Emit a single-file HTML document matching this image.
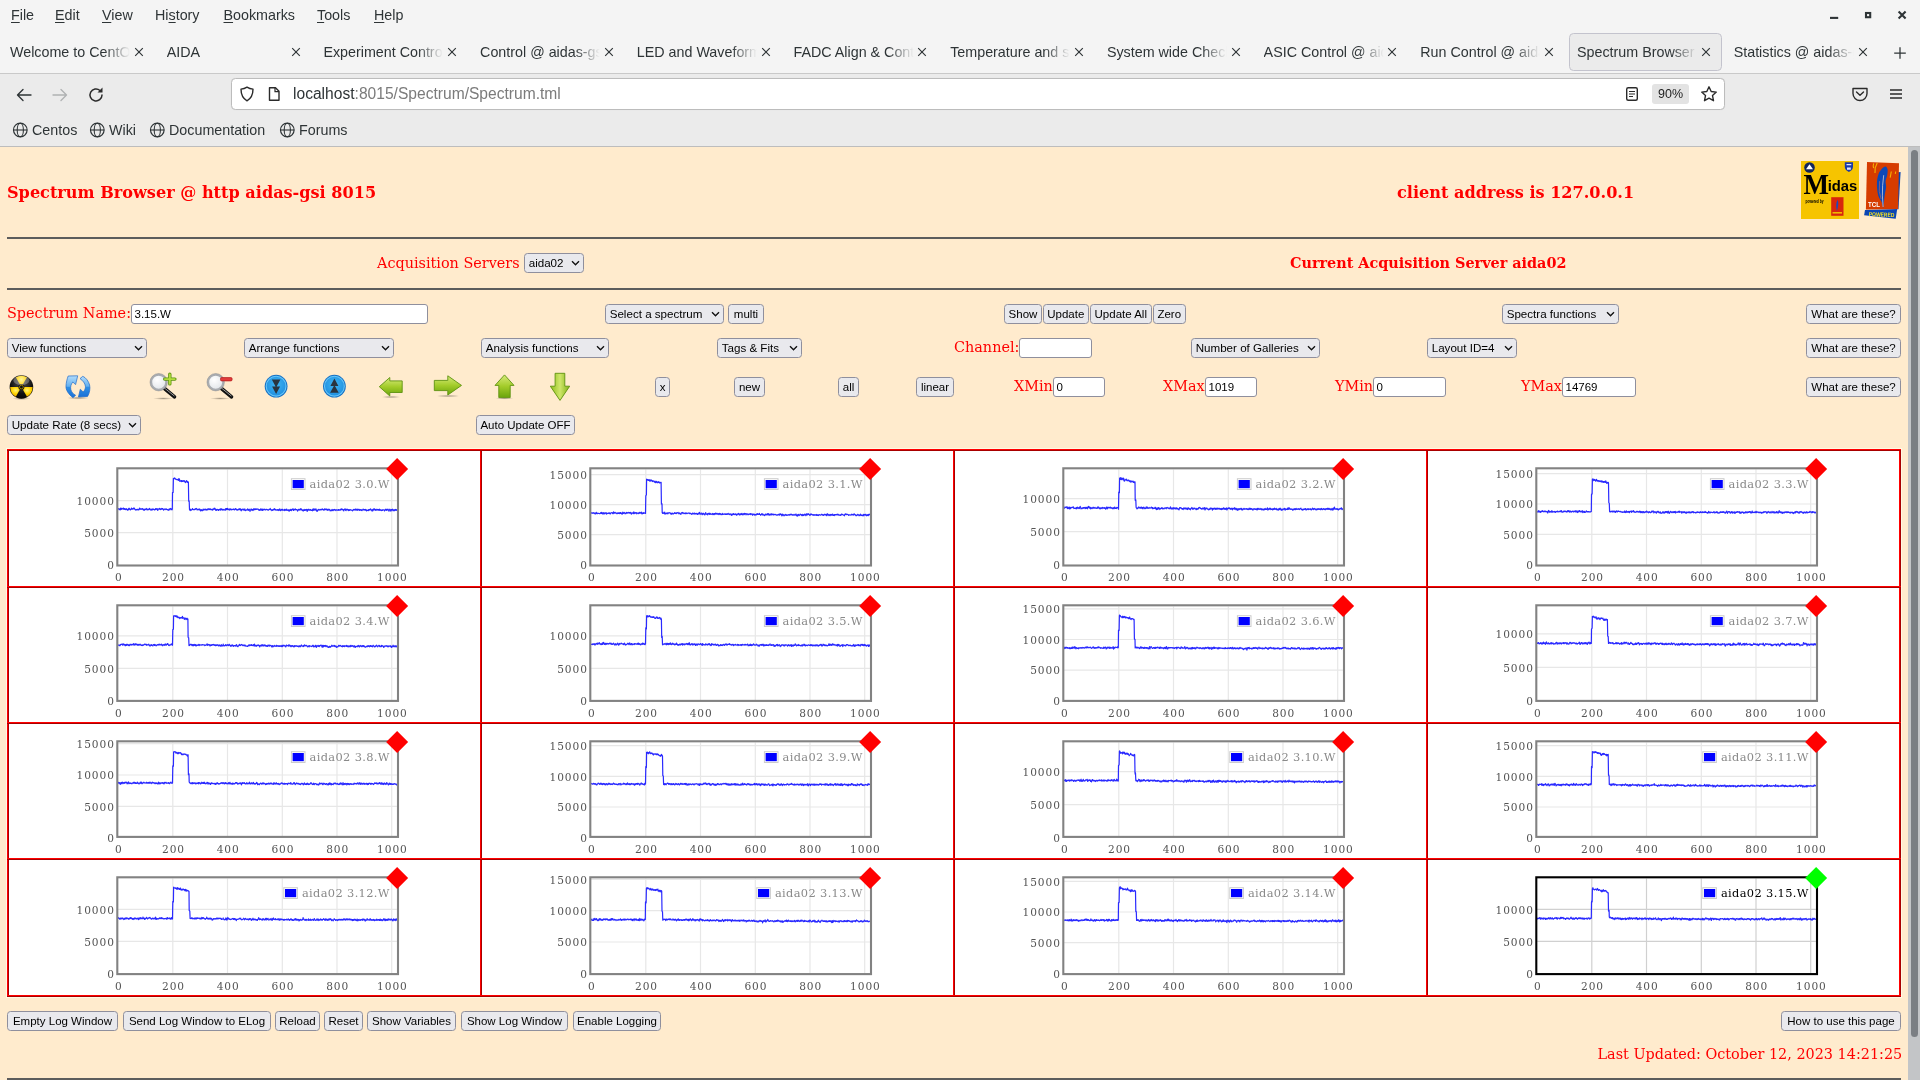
<!DOCTYPE html>
<html lang="en"><head><meta charset="utf-8"><title>Spectrum Browser</title>
<style>
*{box-sizing:border-box;margin:0;padding:0}
html,body{width:1920px;height:1080px;overflow:hidden;background:#ffebcd;font-family:"Liberation Sans", "DejaVu Sans", sans-serif;}
.abs{position:absolute;white-space:nowrap}
#chrome{position:absolute;left:0;top:0;width:1920px;height:147px;background:#f4f4f4;color:#2e3436;font-family:"Liberation Sans", "DejaVu Sans", sans-serif}
#navarea{position:absolute;left:0;top:73px;width:1920px;height:74px;background:#ebebeb;border-top:1px solid #c9c9c9;border-bottom:1px solid #bdbdbd}
.menu{position:absolute;top:6px;font-size:14.3px;line-height:18px;color:#2e3436}
.menu u{text-decoration:underline;text-underline-offset:2px}
.tab{position:absolute;top:34px;height:36px;width:152px;font-size:14.3px;line-height:36px;color:#2e3436;overflow:hidden}
.tab .t{position:absolute;left:8px;top:0;width:121px;overflow:hidden;white-space:nowrap;-webkit-mask-image:linear-gradient(to right,#000 78%,transparent 99%);mask-image:linear-gradient(to right,#000 78%,transparent 99%)}
.tab .x{position:absolute;left:130px;top:12px;width:12px;height:12px}
.tab.active{background:#ebebeb;border:1px solid #c3c3cd;border-radius:4.5px;top:33px;height:37.5px;width:153px;margin-left:-0.5px}
.tab.active .t{left:7.5px;top:0;line-height:36px}
.bm{position:absolute;top:121px;font-size:14.3px;line-height:18px;color:#2e3436}
.r{color:#ff0000;font-family:"DejaVu Serif", "Liberation Serif", serif;font-size:14.4px;line-height:18px}
.rb{color:#ff0000;font-family:"DejaVu Serif", "Liberation Serif", serif;font-size:14.4px;line-height:18px;font-weight:bold}
.btn{position:absolute;height:20px;background:#e9e9ed;border:1px solid #8f8f9d;border-radius:3.5px;font-family:"Liberation Sans", "DejaVu Sans", sans-serif;font-size:11.5px;line-height:18px;color:#000;text-align:center;white-space:nowrap;overflow:hidden}
.sel{position:absolute;height:20px;background:#e9e9ed;border:1px solid #8f8f9d;border-radius:3.5px;font-family:"Liberation Sans", "DejaVu Sans", sans-serif;font-size:11.6px;line-height:18px;color:#000;white-space:nowrap;padding-left:3.7px;overflow:hidden}
.sel svg{position:absolute;right:3.4px;top:6px}
.inp{position:absolute;height:20px;background:#fff;border:1px solid #8f8f9d;border-radius:3px;font-family:"Liberation Sans", "DejaVu Sans", sans-serif;font-size:11.5px;line-height:18px;color:#000;white-space:nowrap;padding-left:2.5px;overflow:hidden}
.hr{position:absolute;left:7px;width:1894px;height:2px;background:#5c5c5c}
.tick{font-family:"DejaVu Serif", "Liberation Serif", serif;font-size:12px;fill:#545454}
</style></head><body>
<div id="root" style="position:absolute;left:0;top:0;width:1920px;height:1080px;will-change:transform">

<div id="chrome">
<div class="menu" style="left:11px"><u>F</u>ile</div>
<div class="menu" style="left:55px"><u>E</u>dit</div>
<div class="menu" style="left:102px"><u>V</u>iew</div>
<div class="menu" style="left:155px">Hi<u>s</u>tory</div>
<div class="menu" style="left:223.5px"><u>B</u>ookmarks</div>
<div class="menu" style="left:317px"><u>T</u>ools</div>
<div class="menu" style="left:374px"><u>H</u>elp</div>
<svg class="abs" style="left:1820px;top:0" width="100" height="30" viewBox="1820 0 100 30"><path d="M1830 17.9h8.200" stroke="#2e3436" stroke-width="2.100" fill="none"/><rect x="1866" y="13" width="4.200" height="4.200" stroke="#2e3436" stroke-width="2.100" fill="none"/><path d="M1898.600 11.600l7 7M1905.600 11.600l-7 7" stroke="#2e3436" stroke-width="2.100" fill="none"/></svg>
<div class="tab" style="left:2.0px"><div class="t">Welcome to CentOS</div></div>
<svg class="abs" style="left:132.8px;top:46px" width="12" height="12" viewBox="0 0 12 12"><path d="M2.200 2.200l7.600 7.600M9.800 2.200l-7.600 7.600" stroke="#2e3436" stroke-width="1.150" fill="none"/></svg>
<div class="tab" style="left:158.7px"><div class="t">AIDA</div></div>
<svg class="abs" style="left:289.5px;top:46px" width="12" height="12" viewBox="0 0 12 12"><path d="M2.200 2.200l7.600 7.600M9.800 2.200l-7.600 7.600" stroke="#2e3436" stroke-width="1.150" fill="none"/></svg>
<div class="tab" style="left:315.4px"><div class="t">Experiment Control @</div></div>
<svg class="abs" style="left:446.2px;top:46px" width="12" height="12" viewBox="0 0 12 12"><path d="M2.200 2.200l7.600 7.600M9.800 2.200l-7.600 7.600" stroke="#2e3436" stroke-width="1.150" fill="none"/></svg>
<div class="tab" style="left:472.1px"><div class="t">Control @ aidas-gsi</div></div>
<svg class="abs" style="left:602.9px;top:46px" width="12" height="12" viewBox="0 0 12 12"><path d="M2.200 2.200l7.600 7.600M9.800 2.200l-7.600 7.600" stroke="#2e3436" stroke-width="1.150" fill="none"/></svg>
<div class="tab" style="left:628.8px"><div class="t">LED and Waveform @</div></div>
<svg class="abs" style="left:759.6px;top:46px" width="12" height="12" viewBox="0 0 12 12"><path d="M2.200 2.200l7.600 7.600M9.800 2.200l-7.600 7.600" stroke="#2e3436" stroke-width="1.150" fill="none"/></svg>
<div class="tab" style="left:785.5px"><div class="t">FADC Align &amp; Control</div></div>
<svg class="abs" style="left:916.3px;top:46px" width="12" height="12" viewBox="0 0 12 12"><path d="M2.200 2.200l7.600 7.600M9.800 2.200l-7.600 7.600" stroke="#2e3436" stroke-width="1.150" fill="none"/></svg>
<div class="tab" style="left:942.2px"><div class="t">Temperature and status</div></div>
<svg class="abs" style="left:1073.0px;top:46px" width="12" height="12" viewBox="0 0 12 12"><path d="M2.200 2.200l7.600 7.600M9.800 2.200l-7.600 7.600" stroke="#2e3436" stroke-width="1.150" fill="none"/></svg>
<div class="tab" style="left:1098.9px"><div class="t">System wide Checks</div></div>
<svg class="abs" style="left:1229.7px;top:46px" width="12" height="12" viewBox="0 0 12 12"><path d="M2.200 2.200l7.600 7.600M9.800 2.200l-7.600 7.600" stroke="#2e3436" stroke-width="1.150" fill="none"/></svg>
<div class="tab" style="left:1255.6px"><div class="t">ASIC Control @ aidas</div></div>
<svg class="abs" style="left:1386.4px;top:46px" width="12" height="12" viewBox="0 0 12 12"><path d="M2.200 2.200l7.600 7.600M9.800 2.200l-7.600 7.600" stroke="#2e3436" stroke-width="1.150" fill="none"/></svg>
<div class="tab" style="left:1412.3px"><div class="t">Run Control @ aidas-</div></div>
<svg class="abs" style="left:1543.1px;top:46px" width="12" height="12" viewBox="0 0 12 12"><path d="M2.200 2.200l7.600 7.600M9.800 2.200l-7.600 7.600" stroke="#2e3436" stroke-width="1.150" fill="none"/></svg>
<div class="tab active" style="left:1569.0px"><div class="t">Spectrum Browser @</div></div>
<svg class="abs" style="left:1699.8px;top:46px" width="12" height="12" viewBox="0 0 12 12"><path d="M2.200 2.200l7.600 7.600M9.800 2.200l-7.600 7.600" stroke="#2e3436" stroke-width="1.150" fill="none"/></svg>
<div class="tab" style="left:1725.7px"><div class="t">Statistics @ aidas-gsi</div></div>
<svg class="abs" style="left:1856.5px;top:46px" width="12" height="12" viewBox="0 0 12 12"><path d="M2.200 2.200l7.600 7.600M9.800 2.200l-7.600 7.600" stroke="#2e3436" stroke-width="1.150" fill="none"/></svg>
<svg class="abs" style="left:1890.600px;top:44px" width="18" height="18" viewBox="0 0 18 18"><path d="M9 3.200v11.600M3.200 9h11.600" stroke="#2e3436" stroke-width="1.250" fill="none"/></svg>
<div id="navarea"></div>
<svg class="abs" style="left:14px;top:84.800px" width="20" height="20" viewBox="0 0 20 20"><path d="M17 10H3.800M9 4.500l-5.500 5.500 5.500 5.500" stroke="#2e3436" stroke-width="1.350" fill="none" stroke-linecap="round" stroke-linejoin="round"/></svg>
<svg class="abs" style="left:50px;top:84.800px" width="20" height="20" viewBox="0 0 20 20"><path d="M3 10h13.200M11 4.500l5.500 5.500-5.500 5.500" stroke="#b0b2b3" stroke-width="1.350" fill="none" stroke-linecap="round" stroke-linejoin="round"/></svg>
<svg class="abs" style="left:86px;top:84.800px" width="20" height="20" viewBox="0 0 20 20"><path d="M16 10a6 6 0 1 1-2-4.5" stroke="#2b2b2b" stroke-width="1.5" fill="none" stroke-linecap="round"/><path d="M16.5 2.5v5h-5z" fill="#2b2b2b"/></svg>
<div class="abs" style="left:231px;top:78px;width:1494px;height:32px;background:#fff;border:1px solid #bcbcbc;border-radius:4.5px;box-shadow:0 0 1px rgba(0,0,0,.1)"></div>
<svg class="abs" style="left:239px;top:86px" width="16" height="16" viewBox="0 0 16 16"><path d="M8 1.2c1.8 1.2 3.8 1.8 6 1.9 0 5.5-1.7 9.4-6 11.7C3.700 12.500 2 8.600 2 3.100 4.200 3 6.200 2.400 8 1.200z" stroke="#2b2b2b" stroke-width="1.4" fill="none" stroke-linejoin="round"/></svg>
<svg class="abs" style="left:266px;top:86px" width="16" height="16" viewBox="0 0 16 16"><path d="M3.500 1.700h6l3.500 3.500v9.100h-9.500z" stroke="#2b2b2b" stroke-width="1.4" fill="none" stroke-linejoin="round"/><path d="M9 1.700v4h4" stroke="#2b2b2b" stroke-width="1.2" fill="none"/></svg>
<div class="abs" style="left:293px;top:83.5px;font-size:15.6px;line-height:20px;color:#2e3436">localhost<span style="color:#7b7b7b">:8015/Spectrum/Spectrum.tml</span></div>
<svg class="abs" style="left:1624px;top:86px" width="16" height="16" viewBox="0 0 16 16"><rect x="2.700" y="1.700" width="10.600" height="12.600" rx="1.500" stroke="#2b2b2b" stroke-width="1.400" fill="none"/><path d="M5 5.500h6M5 8h6M5 10.500h4" stroke="#2b2b2b" stroke-width="1.200"/></svg>
<div class="abs" style="left:1652px;top:84px;width:37px;height:20px;background:#e3e3e3;border-radius:3px;font-size:12.5px;line-height:20px;text-align:center;color:#1d1d1d">90%</div>
<svg class="abs" style="left:1700px;top:85px" width="18" height="18" viewBox="0 0 18 18"><path d="M9 1.800l2.200 4.700 5.100.6-3.800 3.500 1 5.100L9 13.200l-4.500 2.500 1-5.100L1.700 7.100l5.100-.6z" stroke="#2b2b2b" stroke-width="1.400" fill="none" stroke-linejoin="round"/></svg>
<svg class="abs" style="left:1851px;top:85px" width="18" height="18" viewBox="0 0 18 18"><path d="M2 3.500h14v5a7 7 0 0 1-14 0z" stroke="#2b2b2b" stroke-width="1.400" fill="none" stroke-linejoin="round"/><path d="M5.500 7l3.500 3.300L12.500 7" stroke="#2b2b2b" stroke-width="1.400" fill="none" stroke-linecap="round" stroke-linejoin="round"/></svg>
<svg class="abs" style="left:1887px;top:85px" width="18" height="18" viewBox="0 0 18 18"><path d="M3 5h12M3 9h12M3 13h12" stroke="#2b2b2b" stroke-width="1.500"/></svg>
<svg class="abs" style="left:12px;top:122px" width="16" height="16" viewBox="0 0 16 16"><circle cx="8.300" cy="8" r="6.800" stroke="#2e3436" stroke-width="1.200" fill="none"/><ellipse cx="8.300" cy="8" rx="3.100" ry="6.800" stroke="#2e3436" stroke-width="1.100" fill="none"/><path d="M1.500 8h13.600" stroke="#2e3436" stroke-width="1.100"/></svg>
<div class="bm" style="left:32px">Centos</div>
<svg class="abs" style="left:89px;top:122px" width="16" height="16" viewBox="0 0 16 16"><circle cx="8.300" cy="8" r="6.800" stroke="#2e3436" stroke-width="1.200" fill="none"/><ellipse cx="8.300" cy="8" rx="3.100" ry="6.800" stroke="#2e3436" stroke-width="1.100" fill="none"/><path d="M1.500 8h13.600" stroke="#2e3436" stroke-width="1.100"/></svg>
<div class="bm" style="left:109px">Wiki</div>
<svg class="abs" style="left:149px;top:122px" width="16" height="16" viewBox="0 0 16 16"><circle cx="8.300" cy="8" r="6.800" stroke="#2e3436" stroke-width="1.200" fill="none"/><ellipse cx="8.300" cy="8" rx="3.100" ry="6.800" stroke="#2e3436" stroke-width="1.100" fill="none"/><path d="M1.500 8h13.600" stroke="#2e3436" stroke-width="1.100"/></svg>
<div class="bm" style="left:169px">Documentation</div>
<svg class="abs" style="left:279px;top:122px" width="16" height="16" viewBox="0 0 16 16"><circle cx="8.300" cy="8" r="6.800" stroke="#2e3436" stroke-width="1.200" fill="none"/><ellipse cx="8.300" cy="8" rx="3.100" ry="6.800" stroke="#2e3436" stroke-width="1.100" fill="none"/><path d="M1.500 8h13.600" stroke="#2e3436" stroke-width="1.100"/></svg>
<div class="bm" style="left:299px">Forums</div>
</div>
<div class="abs" style="left:1908px;top:147px;width:12px;height:933px;background:#c3c5c7"></div>
<div class="abs" style="left:1911px;top:150px;width:7px;height:887px;background:#7b7f83;border-radius:4px"></div>
<div class="abs rb" style="left:7px;top:182px;font-size:16.1px;line-height:22px">Spectrum Browser @ http aidas-gsi 8015</div>
<div class="abs rb" style="left:1397px;top:182px;font-size:16.1px;line-height:22px">client address is 127.0.0.1</div>
<div class="hr" style="top:237px"></div>
<div class="abs r" style="left:377px;top:252.500px;font-size:14.4px;line-height:20px">Acquisition Servers</div>
<div class="abs rb" style="left:1290px;top:254px;">Current Acquisition Server aida02</div>
<div class="hr" style="top:288px"></div>
<div class="sel" style="left:524px;top:253px;width:60px">aida02<svg width="9" height="7" viewBox="0 0 9 7"><path d="M1 1.200l3.500 3.600L8 1.200" stroke="#111" stroke-width="1.350" fill="none"/></svg></div>
<div class="abs r" style="left:7px;top:303px;font-size:14.4px;line-height:20px">Spectrum Name:</div>
<div class="inp" style="left:131px;top:304px;width:297px">3.15.W</div>
<div class="sel" style="left:605px;top:304px;width:119px">Select a spectrum<svg width="9" height="7" viewBox="0 0 9 7"><path d="M1 1.200l3.500 3.600L8 1.200" stroke="#111" stroke-width="1.350" fill="none"/></svg></div>
<div class="btn" style="left:728px;top:304px;width:36px">multi</div>
<div class="btn" style="left:1004px;top:304px;width:38px">Show</div>
<div class="btn" style="left:1042.5px;top:304px;width:46.5px">Update</div>
<div class="btn" style="left:1089.5px;top:304px;width:62.5px">Update All</div>
<div class="btn" style="left:1152.5px;top:304px;width:33.5px">Zero</div>
<div class="sel" style="left:1502px;top:304px;width:117px">Spectra functions<svg width="9" height="7" viewBox="0 0 9 7"><path d="M1 1.200l3.500 3.600L8 1.200" stroke="#111" stroke-width="1.350" fill="none"/></svg></div>
<div class="btn" style="left:1806px;top:304px;width:95px">What are these?</div>
<div class="sel" style="left:7px;top:338px;width:140px">View functions<svg width="9" height="7" viewBox="0 0 9 7"><path d="M1 1.200l3.500 3.600L8 1.200" stroke="#111" stroke-width="1.350" fill="none"/></svg></div>
<div class="sel" style="left:244px;top:338px;width:150px">Arrange functions<svg width="9" height="7" viewBox="0 0 9 7"><path d="M1 1.200l3.500 3.600L8 1.200" stroke="#111" stroke-width="1.350" fill="none"/></svg></div>
<div class="sel" style="left:481px;top:338px;width:128px">Analysis functions<svg width="9" height="7" viewBox="0 0 9 7"><path d="M1 1.200l3.500 3.600L8 1.200" stroke="#111" stroke-width="1.350" fill="none"/></svg></div>
<div class="sel" style="left:717px;top:338px;width:85px">Tags &amp; Fits<svg width="9" height="7" viewBox="0 0 9 7"><path d="M1 1.200l3.500 3.600L8 1.200" stroke="#111" stroke-width="1.350" fill="none"/></svg></div>
<div class="abs r" style="left:954px;top:337px;font-size:14.4px;line-height:20px">Channel:</div>
<div class="inp" style="left:1019px;top:338px;width:73px"></div>
<div class="sel" style="left:1191px;top:338px;width:129px">Number of Galleries<svg width="9" height="7" viewBox="0 0 9 7"><path d="M1 1.200l3.500 3.600L8 1.200" stroke="#111" stroke-width="1.350" fill="none"/></svg></div>
<div class="sel" style="left:1427px;top:338px;width:90px">Layout ID=4<svg width="9" height="7" viewBox="0 0 9 7"><path d="M1 1.200l3.500 3.600L8 1.200" stroke="#111" stroke-width="1.350" fill="none"/></svg></div>
<div class="btn" style="left:1806px;top:338px;width:95px">What are these?</div>
<div class="btn" style="left:655px;top:377px;width:15px">x</div>
<div class="btn" style="left:734px;top:377px;width:31px">new</div>
<div class="btn" style="left:838px;top:377px;width:21px">all</div>
<div class="btn" style="left:916px;top:377px;width:38px">linear</div>
<div class="abs r" style="left:1014px;top:376px;font-size:14.4px;line-height:20px">XMin</div>
<div class="inp" style="left:1053px;top:377px;width:52px">0</div>
<div class="abs r" style="left:1163px;top:376px;font-size:14.4px;line-height:20px">XMax</div>
<div class="inp" style="left:1205px;top:377px;width:52px">1019</div>
<div class="abs r" style="left:1335px;top:376px;font-size:14.4px;line-height:20px">YMin</div>
<div class="inp" style="left:1373px;top:377px;width:73px">0</div>
<div class="abs r" style="left:1521px;top:376px;font-size:14.4px;line-height:20px">YMax</div>
<div class="inp" style="left:1562px;top:377px;width:74px">14769</div>
<div class="btn" style="left:1806px;top:377px;width:95px">What are these?</div>
<div class="sel" style="left:7px;top:415px;width:134px">Update Rate (8 secs)<svg width="9" height="7" viewBox="0 0 9 7"><path d="M1 1.200l3.500 3.600L8 1.200" stroke="#111" stroke-width="1.350" fill="none"/></svg></div>
<div class="btn" style="left:476px;top:415px;width:99px">Auto Update OFF</div>
<svg class="abs" style="left:0;top:365px" width="600" height="45" viewBox="0 365 600 45">
<defs>
<radialGradient id="gy" cx="0.5" cy="0.35" r="0.7"><stop offset="0" stop-color="#fff27a"/><stop offset="0.5" stop-color="#ffd400"/><stop offset="1" stop-color="#e09a00"/></radialGradient>
<radialGradient id="gk" cx="0.5" cy="0.3" r="0.8"><stop offset="0" stop-color="#555"/><stop offset="0.6" stop-color="#111"/><stop offset="1" stop-color="#000"/></radialGradient>
<linearGradient id="gb" x1="0" y1="0" x2="0" y2="1"><stop offset="0" stop-color="#b4dcfa"/><stop offset="0.48" stop-color="#62b0f0"/><stop offset="0.52" stop-color="#2e90e6"/><stop offset="1" stop-color="#1a70d6"/></linearGradient>
<radialGradient id="gc" cx="0.5" cy="0.4" r="0.6"><stop offset="0" stop-color="#3fb4f2"/><stop offset="1" stop-color="#1f8fe0"/></radialGradient>
<linearGradient id="gg" x1="0" y1="0" x2="0" y2="1"><stop offset="0" stop-color="#d6ea7a"/><stop offset="0.5" stop-color="#a3cc2a"/><stop offset="1" stop-color="#6aa40c"/></linearGradient>
<linearGradient id="gh" x1="0" y1="0" x2="1" y2="0"><stop offset="0" stop-color="#8cbc18"/><stop offset="0.5" stop-color="#cfe66a"/><stop offset="1" stop-color="#7fb012"/></linearGradient>
<radialGradient id="gl" cx="0.4" cy="0.35" r="0.7"><stop offset="0" stop-color="#ffffff"/><stop offset="1" stop-color="#e0e4e8"/></radialGradient>
<radialGradient id="sh" cx="0.5" cy="0.5" r="0.5"><stop offset="0" stop-color="#000" stop-opacity="0.35"/><stop offset="1" stop-color="#000" stop-opacity="0"/></radialGradient>
</defs>
<ellipse cx="21.4" cy="398.5" rx="9" ry="1.6" fill="url(#sh)"/>
<circle cx="21.4" cy="387" r="11.8" fill="url(#gk)"/>
<path d="M21.4 387L15.80 377.30A11.200000000000001 11.200000000000001 0 0 1 27.00 377.30z" fill="url(#gy)"/>
<path d="M21.4 387L32.60 387.00A11.200000000000001 11.200000000000001 0 0 1 27.00 396.70z" fill="url(#gy)"/>
<path d="M21.4 387L15.80 396.70A11.200000000000001 11.200000000000001 0 0 1 10.20 387.00z" fill="url(#gy)"/>
<circle cx="21.4" cy="387" r="3" fill="#111"/><circle cx="21.4" cy="387" r="1.9" fill="none" stroke="#ffd400" stroke-width="0.5"/>
<ellipse cx="21.4" cy="380.5" rx="8" ry="4.5" fill="#fff" opacity="0.28"/>
<ellipse cx="78" cy="398" rx="11" ry="1.6" fill="url(#sh)"/>
<path d="M73.100 397.700C68.500 394.500 65.600 389.600 66 386C66.200 382.600 67 379 68.200 376L77.700 375.800L75.600 384.600L72.800 382C70.800 384.400 70.300 387 70.800 389.400C71.400 392 73 393.800 75.600 395.200Z" fill="url(#gb)" stroke="#1f6ac8" stroke-width="0.7" stroke-linejoin="round"/>
<path d="M82.800 376.300C86 377.600 88.600 381.400 89.600 385C90.400 388.600 89.600 393 87.600 396.400L78.400 397L80.300 389.200L83.200 392C85 390 85.600 388.200 85.400 386.200C85 383.400 83 380.600 80 378.600Z" fill="url(#gb)" stroke="#1f6ac8" stroke-width="0.7" stroke-linejoin="round"/>
<ellipse cx="163.3" cy="398.500" rx="10" ry="1.3" fill="url(#sh)"/>
<path d="M163.9 388.0L174.5 396.8" stroke="#111" stroke-width="3.6" stroke-linecap="round"/>
<path d="M164.9 388.4L174.10000000000002 395.8" stroke="#aaa" stroke-width="0.9" stroke-linecap="round"/>
<circle cx="158.70000000000002" cy="382.2" r="7.6" fill="url(#gl)" stroke="#a9acb0" stroke-width="2.2"/>
<circle cx="158.70000000000002" cy="382.2" r="8.7" fill="none" stroke="#8a8d90" stroke-width="0.5"/>
<path d="M169.8 374.300v9.600M164.70000000000002 379.100h10.200" stroke="#5c9410" stroke-width="3.4" stroke-linecap="round"/>
<path d="M169.8 374.500v9.200M164.9 379.100h9.800" stroke="#b4dc3c" stroke-width="1.9" stroke-linecap="round"/>
<ellipse cx="220.3" cy="398.500" rx="10" ry="1.3" fill="url(#sh)"/>
<path d="M220.9 388.0L231.5 396.8" stroke="#111" stroke-width="3.6" stroke-linecap="round"/>
<path d="M221.9 388.4L231.10000000000002 395.8" stroke="#aaa" stroke-width="0.9" stroke-linecap="round"/>
<circle cx="215.70000000000002" cy="382.2" r="7.6" fill="url(#gl)" stroke="#a9acb0" stroke-width="2.2"/>
<circle cx="215.70000000000002" cy="382.2" r="8.7" fill="none" stroke="#8a8d90" stroke-width="0.5"/>
<rect x="220.5" y="377.600" width="11.600" height="3.300" rx="1.2" fill="#e23c3c" stroke="#b01818" stroke-width="0.7"/>
<circle cx="276.1" cy="386.2" r="11.4" fill="#1872c4"/>
<circle cx="276.1" cy="386.2" r="9.9" fill="url(#gc)" stroke="#66c6fa" stroke-width="1.1"/>
<path d="M276.1 394.0l4 -7.600h-8zM276.1 387.4l4.300 -7.800h-8.600z" fill="#2a3440"/>
<circle cx="334.4" cy="386.2" r="11.4" fill="#1872c4"/>
<circle cx="334.4" cy="386.2" r="9.9" fill="url(#gc)" stroke="#66c6fa" stroke-width="1.1"/>
<path d="M334.4 378.4l4 7.6h-8zM334.4 385.0l4.300 7.800h-8.600z" fill="#2a3440"/>
<ellipse cx="391" cy="397" rx="10" ry="1.2" fill="url(#sh)"/>
<path d="M379.300 386.700L389.800 377.500V380.900H402.200V392.500H389.800V396z" fill="url(#gg)" stroke="#5e9210" stroke-width="0.9" stroke-linejoin="round"/>
<ellipse cx="448" cy="396" rx="12" ry="1.3" fill="url(#sh)"/>
<path d="M461.500 385.400L447.800 375.800V380.400H434.300V390.600H447.800V395z" fill="url(#gg)" stroke="#5e9210" stroke-width="0.9" stroke-linejoin="round"/>
<ellipse cx="504.500" cy="398.300" rx="9" ry="1.3" fill="url(#sh)"/>
<path d="M504.500 374.900L514 385.400H510.200V397.600H498.800V385.400H495z" fill="url(#gg)" stroke="#5e9210" stroke-width="0.9" stroke-linejoin="round"/>
<path d="M560 400.400L550.300 386.200H555.100V373.300H564.800V386.200H569.700z" fill="url(#gh)" stroke="#5e9210" stroke-width="0.9" stroke-linejoin="round"/>
</svg>
<svg class="abs" style="left:1795px;top:155px" width="112" height="70" viewBox="1795 155 112 70">
<rect x="1801" y="161" width="58" height="58" fill="#f6c400"/>
<circle cx="1809.500" cy="167.500" r="5.300" fill="#12265e"/><path d="M1809.500 164.300l3.500 4.900h-7z" fill="#fff"/>
<path d="M1844.800 162.300h8.200v4.500c0 2.600-1.800 4.300-4.100 5.100-2.300-.8-4.100-2.500-4.100-5.100z" fill="#1a3aa8"/><path d="M1846.500 164h4.800v1.300h-4.800zM1847 167.500h3.800v2.200h-3.800z" fill="#dfe6ff"/>
<text x="1803.500" y="193.900" style="font-family:'Liberation Serif','DejaVu Serif',serif;font-weight:bold;font-size:30px" fill="#000" textLength="25.500" lengthAdjust="spacingAndGlyphs">M</text>
<text x="1827.700" y="190.700" style="font-family:'Liberation Sans','DejaVu Sans',sans-serif;font-weight:bold;font-size:15px" fill="#000" textLength="29.600" lengthAdjust="spacingAndGlyphs">idas</text>
<text x="1805.500" y="203" style="font-family:'Liberation Sans','DejaVu Sans',sans-serif;font-weight:bold;font-size:4.500px" fill="#000" textLength="18" lengthAdjust="spacingAndGlyphs">powered by</text>
<rect x="1831.200" y="197.200" width="12.300" height="18.600" fill="#d8260c"/><path d="M1837.500 200c1.200 2 .8 6.500-.6 11-.8-3.500-1.200-8 .6-11z" fill="#1a4ac0"/><path d="M1832.500 212.800h9.500" stroke="#f2c200" stroke-width="1.500"/>
<path d="M1897.8 172.2 L1900.6 171.9 L1898.5 209.3 L1896.3 209.3z" fill="#0a46b4"/>
<path d="M1865.0 209.9 L1897.2 209.1 L1895.7 218.7 L1864.1 215.3z" fill="#0a46b4"/>
<path d="M1867.0 162.1 L1899.0 163.2 L1898.1 209.0 L1865.9 209.6z" fill="#d63c00"/>
<path d="M1885.6 166.4C1886.5 166.6 1887.3 168.0 1887.6 169.4C1887.8 170.9 1887.5 173.2 1887.2 175.2C1886.9 177.1 1885.7 179.1 1885.6 181.1C1885.4 183.1 1886.2 184.8 1886.1 187.0C1886.0 189.3 1885.2 191.7 1884.8 194.4C1884.4 197.2 1884.0 201.1 1883.7 203.3C1883.4 205.5 1883.5 207.9 1883.2 207.6C1882.8 207.4 1882.5 203.9 1881.6 201.9C1880.8 199.8 1878.9 198.1 1878.1 195.2C1877.4 192.2 1876.9 187.5 1876.9 184.1C1876.9 180.6 1877.5 177.0 1878.4 174.4C1879.2 171.9 1880.9 169.9 1882.1 168.5C1883.3 167.2 1884.6 166.3 1885.6 166.4z" fill="#0c48b8"/>
<path d="M1883.7 175.2 L1882.6 185.6 L1882.4 195.9 L1883.1 207.0" stroke="#e8e0d8" stroke-width="0.7" fill="none"/>
<path d="M1879.6 181.1 L1879.3 191.5 L1881.1 198.9" stroke="#c86a50" stroke-width="0.6" fill="none"/>
<path d="M1873.7 163.3 L1873.2 165.9 L1873.6 168.1M1877.2 163.0L1875.2 167.8L1875.0 173.1M1891.3 171.5L1890.2 177.6M1895.7 171.5L1895.3 173.9" stroke="#f6b000" stroke-width="1.1" fill="none"/>
<text x="1868" y="207" style="font-family:'Liberation Sans','DejaVu Sans',sans-serif;font-weight:bold;font-size:6.500px" fill="#fff" textLength="12" lengthAdjust="spacingAndGlyphs">TCL</text>
<text x="1868.800" y="216.200" transform="rotate(2 1868.800 216.200)" style="font-family:'Liberation Sans','DejaVu Sans',sans-serif;font-weight:bold;font-size:6px" fill="#f6e020" textLength="25.500" lengthAdjust="spacingAndGlyphs">POWERED</text>
</svg>
<div class="abs" style="left:7px;top:449px;width:1894px;height:548px;background:#fff"></div>
<div class="abs" style="left:6px;top:448px;width:1896px;height:550px;border:1px solid rgba(255,255,240,.7)"></div>
<svg class="abs" style="left:0;top:440px" width="1920" height="570" viewBox="0 440 1920 570">
<g>
<path d="M172.8 469.6V564.7" stroke="#e7e7e7" stroke-width="1.2"/>
<path d="M227.5 469.6V564.7" stroke="#e7e7e7" stroke-width="1.2"/>
<path d="M282.3 469.6V564.7" stroke="#e7e7e7" stroke-width="1.2"/>
<path d="M337.0 469.6V564.7" stroke="#e7e7e7" stroke-width="1.2"/>
<path d="M391.7 469.6V564.7" stroke="#e7e7e7" stroke-width="1.2"/>
<path d="M118.1 532.7H396.9" stroke="#e7e7e7" stroke-width="1.2"/>
<path d="M118.1 500.7H396.9" stroke="#e7e7e7" stroke-width="1.2"/>
<polyline points="118.1,509.1 118.4,508.7 118.6,509.0 118.9,509.0 119.2,509.7 119.5,509.2 119.7,509.0 120.0,508.7 120.3,509.8 120.6,508.6 120.8,508.0 121.1,508.2 121.4,509.4 121.7,509.1 121.9,508.8 122.2,508.5 122.5,508.9 122.8,508.8 123.0,508.7 123.3,509.0 123.6,508.0 123.8,509.1 124.1,509.2 124.4,509.3 124.7,508.5 124.9,509.4 125.2,509.3 125.5,509.6 125.8,509.0 126.0,508.9 126.3,508.7 126.6,509.5 126.9,509.4 127.1,509.7 127.4,510.2 127.7,509.7 127.9,509.1 128.2,510.0 128.5,509.4 128.8,508.4 129.0,508.8 129.3,508.3 129.6,509.3 129.9,509.4 130.1,509.8 130.4,509.8 130.7,509.4 131.0,509.4 131.2,508.7 131.5,508.0 131.8,508.7 132.1,509.3 132.3,509.2 132.6,508.7 132.9,508.9 133.1,508.8 133.4,508.5 133.7,508.8 134.0,507.8 134.2,508.1 134.5,508.2 134.8,509.3 135.1,509.3 135.3,509.7 135.6,509.8 135.9,510.2 136.2,509.8 136.4,509.5 136.7,509.7 137.0,509.7 137.3,509.8 137.5,509.8 137.8,509.2 138.1,509.4 138.3,509.3 138.6,510.0 138.9,509.7 139.2,509.5 139.4,508.8 139.7,508.1 140.0,508.9 140.3,508.9 140.5,509.3 140.8,508.8 141.1,509.2 141.4,509.3 141.6,508.8 141.9,509.1 142.2,509.0 142.5,508.6 142.7,509.0 143.0,509.4 143.3,509.8 143.5,509.5 143.8,509.1 144.1,510.4 144.4,510.0 144.6,509.4 144.9,509.3 145.2,509.4 145.5,509.6 145.7,509.0 146.0,508.9 146.3,508.5 146.6,509.4 146.8,509.4 147.1,509.9 147.4,509.2 147.6,509.3 147.9,509.2 148.2,509.6 148.5,509.3 148.7,509.5 149.0,509.6 149.3,508.8 149.6,508.4 149.8,509.2 150.1,508.9 150.4,509.9 150.7,509.7 150.9,509.8 151.2,510.2 151.5,509.7 151.8,509.0 152.0,509.6 152.3,509.0 152.6,509.8 152.8,509.8 153.1,509.1 153.4,509.0 153.7,509.3 153.9,509.4 154.2,509.4 154.5,510.0 154.8,510.0 155.0,509.3 155.3,509.4 155.6,508.6 155.9,509.4 156.1,509.3 156.4,508.9 156.7,509.1 157.0,508.6 157.2,509.4 157.5,510.1 157.8,510.4 158.0,509.1 158.3,509.1 158.6,509.1 158.9,508.8 159.1,509.0 159.4,508.8 159.7,508.5 160.0,509.5 160.2,509.3 160.5,509.5 160.8,509.6 161.1,508.7 161.3,508.8 161.6,509.1 161.9,508.5 162.1,508.6 162.4,509.0 162.7,508.7 163.0,508.9 163.2,509.1 163.5,510.1 163.8,509.7 164.1,509.7 164.3,509.1 164.6,509.0 164.9,509.2 165.2,509.1 165.4,509.0 165.7,509.6 166.0,509.6 166.3,509.0 166.5,509.3 166.8,509.2 167.1,509.4 167.3,509.9 167.6,509.6 167.9,509.7 168.2,509.8 168.4,510.3 168.7,509.8 169.0,509.2 169.3,508.8 169.5,509.8 169.8,509.9 170.1,509.3 170.4,508.9 170.6,508.5 170.9,508.9 171.2,508.9 171.5,509.5 171.7,509.1 172.0,509.9 172.3,509.0 172.5,492.6 172.8,492.4 173.1,492.5 173.4,478.4 173.6,478.7 173.9,478.7 174.2,478.7 174.5,478.2 174.7,478.0 175.0,478.6 175.3,478.9 175.6,478.8 175.8,479.4 176.1,479.4 176.4,479.3 176.7,479.6 176.9,479.6 177.2,479.6 177.5,479.4 177.7,479.7 178.0,480.1 178.3,480.3 178.6,480.3 178.8,478.6 179.1,479.6 179.4,479.0 179.7,480.3 179.9,481.4 180.2,481.1 180.5,480.8 180.8,480.8 181.0,480.7 181.3,481.6 181.6,480.6 181.8,480.6 182.1,480.5 182.4,481.5 182.7,481.3 182.9,481.2 183.2,481.1 183.5,480.7 183.8,480.6 184.0,481.0 184.3,481.7 184.6,480.8 184.9,481.5 185.1,482.0 185.4,482.2 185.7,482.6 186.0,481.7 186.2,481.8 186.5,480.6 186.8,481.1 187.0,481.1 187.3,481.8 187.6,482.5 187.9,481.7 188.1,482.1 188.4,482.0 188.7,501.2 189.0,500.8 189.2,501.3 189.5,509.5 189.8,509.5 190.1,510.6 190.3,510.2 190.6,509.2 190.9,509.8 191.2,510.1 191.4,510.0 191.7,510.0 192.0,509.6 192.2,509.5 192.5,508.5 192.8,509.4 193.1,509.5 193.3,509.7 193.6,509.5 193.9,509.5 194.2,509.7 194.4,509.3 194.7,509.6 195.0,509.6 195.3,508.8 195.5,508.7 195.8,509.1 196.1,508.7 196.4,508.5 196.6,509.0 196.9,509.0 197.2,510.0 197.4,509.7 197.7,509.3 198.0,509.6 198.3,509.7 198.5,509.6 198.8,509.1 199.1,509.8 199.4,509.1 199.6,509.8 199.9,509.2 200.2,509.4 200.5,510.2 200.7,511.0 201.0,510.5 201.3,510.4 201.5,509.7 201.8,510.2 202.1,510.7 202.4,510.2 202.6,510.6 202.9,509.6 203.2,509.1 203.5,509.5 203.7,510.2 204.0,509.5 204.3,509.8 204.6,509.7 204.8,509.1 205.1,509.5 205.4,509.3 205.7,509.9 205.9,509.2 206.2,509.4 206.5,509.7 206.7,510.1 207.0,510.2 207.3,509.6 207.6,509.4 207.8,509.1 208.1,508.7 208.4,508.8 208.7,509.4 208.9,509.7 209.2,508.9 209.5,509.3 209.8,509.3 210.0,509.4 210.3,508.8 210.6,509.6 210.9,509.4 211.1,509.6 211.4,509.4 211.7,509.4 211.9,509.9 212.2,509.8 212.5,510.1 212.8,509.0 213.0,509.8 213.3,509.2 213.6,509.0 213.9,508.5 214.1,509.1 214.4,509.2 214.7,508.1 215.0,508.9 215.2,508.7 215.5,510.1 215.8,509.6 216.0,510.3 216.3,510.3 216.6,509.9 216.9,509.4 217.1,509.4 217.4,509.3 217.7,509.6 218.0,510.2 218.2,509.7 218.5,510.4 218.8,509.7 219.1,509.4 219.3,509.5 219.6,509.5 219.9,509.8 220.2,509.1 220.4,509.7 220.7,510.1 221.0,508.5 221.2,509.6 221.5,509.7 221.8,509.2 222.1,509.2 222.3,509.4 222.6,510.1 222.9,509.5 223.2,509.5 223.4,509.3 223.7,509.7 224.0,510.2 224.3,510.0 224.5,509.7 224.8,509.5 225.1,509.2 225.4,508.8 225.6,510.1 225.9,508.7 226.2,508.9 226.4,508.6 226.7,509.6 227.0,509.4 227.3,508.3 227.5,509.0 227.8,509.6 228.1,509.1 228.4,509.3 228.6,509.6 228.9,509.6 229.2,508.9 229.5,509.5 229.7,510.1 230.0,509.8 230.3,509.0 230.6,508.9 230.8,509.3 231.1,509.6 231.4,509.4 231.6,509.9 231.9,509.3 232.2,509.6 232.5,509.5 232.7,509.3 233.0,509.5 233.3,509.4 233.6,509.2 233.8,509.0 234.1,509.9 234.4,509.9 234.7,509.6 234.9,509.5 235.2,509.0 235.5,508.6 235.7,508.8 236.0,508.8 236.3,509.9 236.6,509.9 236.8,509.4 237.1,509.7 237.4,509.8 237.7,510.2 237.9,510.1 238.2,509.4 238.5,509.5 238.8,509.4 239.0,508.9 239.3,509.7 239.6,509.2 239.9,508.7 240.1,509.0 240.4,508.8 240.7,510.0 240.9,510.2 241.2,510.8 241.5,509.4 241.8,509.6 242.0,510.1 242.3,509.5 242.6,509.3 242.9,509.1 243.1,509.0 243.4,509.2 243.7,510.2 244.0,510.1 244.2,510.2 244.5,510.0 244.8,508.9 245.1,509.7 245.3,510.3 245.6,510.6 245.9,510.3 246.1,510.2 246.4,510.0 246.7,510.0 247.0,509.5 247.2,509.8 247.5,508.8 247.8,509.5 248.1,510.2 248.3,510.4 248.6,509.7 248.9,509.3 249.2,509.2 249.4,509.9 249.7,510.0 250.0,511.5 250.2,510.4 250.5,509.8 250.8,509.8 251.1,508.9 251.3,509.7 251.6,509.4 251.9,510.3 252.2,509.8 252.4,509.5 252.7,510.1 253.0,510.5 253.3,509.9 253.5,509.7 253.8,508.7 254.1,509.7 254.4,509.7 254.6,508.8 254.9,509.7 255.2,508.8 255.4,508.8 255.7,509.3 256.0,509.4 256.3,509.0 256.5,508.8 256.8,509.3 257.1,509.1 257.4,509.2 257.6,509.1 257.9,509.3 258.2,509.3 258.5,509.2 258.7,510.2 259.0,509.7 259.3,510.1 259.6,510.3 259.8,509.6 260.1,510.0 260.4,509.4 260.6,509.0 260.9,510.1 261.2,509.0 261.5,509.5 261.7,509.6 262.0,510.3 262.3,509.0 262.6,510.3 262.8,509.8 263.1,510.2 263.4,509.4 263.7,509.3 263.9,509.4 264.2,509.3 264.5,509.3 264.8,509.8 265.0,509.2 265.3,509.8 265.6,510.0 265.8,509.8 266.1,509.7 266.4,509.4 266.7,509.3 266.9,509.3 267.2,509.8 267.5,509.8 267.8,509.7 268.0,510.1 268.3,510.1 268.6,510.1 268.9,509.5 269.1,509.7 269.4,509.3 269.7,509.3 269.9,508.9 270.2,508.5 270.5,509.7 270.8,509.8 271.0,509.7 271.3,509.7 271.6,510.2 271.9,510.6 272.1,510.2 272.4,509.7 272.7,510.3 273.0,510.2 273.2,509.8 273.5,509.5 273.8,509.6 274.1,509.1 274.3,508.6 274.6,509.5 274.9,509.7 275.1,509.9 275.4,509.4 275.7,509.4 276.0,510.1 276.2,510.2 276.5,510.0 276.8,509.9 277.1,509.7 277.3,509.6 277.6,510.2 277.9,510.0 278.2,510.5 278.4,509.7 278.7,509.6 279.0,510.0 279.3,509.1 279.5,510.2 279.8,509.0 280.1,509.3 280.3,510.3 280.6,510.7 280.9,510.2 281.2,510.1 281.4,509.7 281.7,509.4 282.0,510.1 282.3,509.2 282.5,509.8 282.8,510.2 283.1,510.2 283.4,510.1 283.6,510.2 283.9,510.2 284.2,509.6 284.4,509.3 284.7,510.6 285.0,510.0 285.3,509.8 285.5,510.2 285.8,509.4 286.1,510.4 286.4,509.7 286.6,509.1 286.9,509.7 287.2,509.9 287.5,510.1 287.7,510.5 288.0,510.4 288.3,510.0 288.6,509.8 288.8,510.4 289.1,511.3 289.4,510.5 289.6,510.3 289.9,509.7 290.2,510.1 290.5,510.4 290.7,509.3 291.0,509.4 291.3,510.7 291.6,510.1 291.8,509.9 292.1,509.8 292.4,509.2 292.7,509.5 292.9,508.8 293.2,509.5 293.5,510.5 293.8,509.4 294.0,509.9 294.3,509.4 294.6,509.8 294.8,509.5 295.1,509.3 295.4,509.0 295.7,509.8 295.9,509.9 296.2,509.7 296.5,509.6 296.8,509.6 297.0,509.9 297.3,510.2 297.6,511.1 297.9,509.8 298.1,510.2 298.4,509.4 298.7,509.9 299.0,509.5 299.2,510.2 299.5,509.7 299.8,509.3 300.0,509.2 300.3,509.8 300.6,509.9 300.9,508.5 301.1,509.6 301.4,509.8 301.7,509.4 302.0,509.6 302.2,510.3 302.5,510.7 302.8,510.5 303.1,510.1 303.3,510.3 303.6,510.9 303.9,510.1 304.1,509.3 304.4,510.3 304.7,509.8 305.0,510.5 305.2,509.6 305.5,509.7 305.8,509.9 306.1,510.2 306.3,509.4 306.6,509.5 306.9,509.6 307.2,511.3 307.4,510.4 307.7,510.6 308.0,509.4 308.3,509.6 308.5,509.3 308.8,510.0 309.1,510.1 309.3,510.0 309.6,510.2 309.9,509.4 310.2,509.6 310.4,510.2 310.7,509.7 311.0,510.3 311.3,510.3 311.5,510.1 311.8,510.1 312.1,510.2 312.4,510.8 312.6,509.8 312.9,509.1 313.2,510.4 313.5,509.7 313.7,508.9 314.0,509.8 314.3,509.8 314.5,509.0 314.8,510.2 315.1,509.6 315.4,509.9 315.6,509.7 315.9,508.8 316.2,509.7 316.5,510.9 316.7,510.4 317.0,511.4 317.3,510.5 317.6,511.0 317.8,509.8 318.1,510.1 318.4,509.5 318.6,510.0 318.9,509.4 319.2,509.9 319.5,509.9 319.7,510.0 320.0,510.1 320.3,509.7 320.6,509.4 320.8,509.7 321.1,509.8 321.4,509.7 321.7,509.8 321.9,509.0 322.2,509.4 322.5,509.0 322.8,509.5 323.0,509.8 323.3,509.9 323.6,510.1 323.8,509.8 324.1,509.5 324.4,508.9 324.7,510.0 324.9,509.3 325.2,509.2 325.5,509.3 325.8,509.5 326.0,508.8 326.3,509.5 326.6,509.3 326.9,509.3 327.1,510.3 327.4,509.7 327.7,509.5 328.0,510.2 328.2,509.1 328.5,510.0 328.8,509.9 329.0,509.8 329.3,509.7 329.6,509.3 329.9,510.0 330.1,510.8 330.4,510.3 330.7,510.7 331.0,510.7 331.2,510.6 331.5,510.7 331.8,509.8 332.1,509.4 332.3,510.5 332.6,510.3 332.9,510.7 333.2,509.8 333.4,509.7 333.7,510.2 334.0,509.9 334.2,509.8 334.5,509.4 334.8,509.6 335.1,510.1 335.3,509.9 335.6,509.9 335.9,510.6 336.2,509.8 336.4,509.9 336.7,510.0 337.0,509.8 337.3,509.8 337.5,510.1 337.8,510.0 338.1,510.3 338.3,509.8 338.6,509.5 338.9,509.5 339.2,510.3 339.4,509.8 339.7,510.0 340.0,509.8 340.3,510.2 340.5,509.4 340.8,509.2 341.1,509.7 341.4,508.9 341.6,509.5 341.9,509.6 342.2,509.3 342.5,509.2 342.7,509.4 343.0,509.5 343.3,510.7 343.5,510.0 343.8,510.9 344.1,509.4 344.4,509.7 344.6,509.0 344.9,509.3 345.2,509.0 345.5,509.6 345.7,510.4 346.0,510.6 346.3,509.4 346.6,509.3 346.8,509.4 347.1,509.6 347.4,509.9 347.7,509.2 347.9,510.0 348.2,509.7 348.5,510.6 348.7,510.2 349.0,509.5 349.3,510.5 349.6,510.2 349.8,509.9 350.1,509.7 350.4,509.7 350.7,509.9 350.9,510.1 351.2,510.0 351.5,510.0 351.8,510.1 352.0,510.3 352.3,510.5 352.6,510.8 352.9,510.3 353.1,510.2 353.4,509.6 353.7,509.7 353.9,509.4 354.2,510.0 354.5,510.0 354.8,509.4 355.0,509.6 355.3,510.1 355.6,509.3 355.9,509.0 356.1,510.0 356.4,509.7 356.7,510.0 357.0,509.6 357.2,509.3 357.5,510.3 357.8,510.1 358.0,509.2 358.3,509.3 358.6,509.9 358.9,509.7 359.1,509.9 359.4,509.4 359.7,510.5 360.0,510.1 360.2,509.6 360.5,509.9 360.8,509.7 361.1,509.6 361.3,510.5 361.6,510.0 361.9,510.6 362.2,510.2 362.4,509.8 362.7,509.9 363.0,509.1 363.2,509.1 363.5,509.6 363.8,510.0 364.1,509.6 364.3,510.1 364.6,509.5 364.9,509.6 365.2,509.6 365.4,509.4 365.7,510.4 366.0,510.3 366.3,509.8 366.5,510.8 366.8,510.8 367.1,510.1 367.4,510.5 367.6,510.4 367.9,510.4 368.2,510.2 368.4,510.6 368.7,509.5 369.0,509.7 369.3,509.5 369.5,510.1 369.8,509.8 370.1,509.5 370.4,509.5 370.6,508.9 370.9,509.6 371.2,510.2 371.5,510.1 371.7,509.8 372.0,511.0 372.3,509.9 372.5,509.9 372.8,511.0 373.1,509.4 373.4,509.3 373.6,509.0 373.9,510.0 374.2,509.3 374.5,509.0 374.7,508.9 375.0,509.7 375.3,510.3 375.6,510.1 375.8,509.5 376.1,510.2 376.4,510.1 376.7,509.8 376.9,509.2 377.2,509.6 377.5,509.9 377.7,509.7 378.0,510.0 378.3,509.5 378.6,509.5 378.8,510.2 379.1,509.4 379.4,509.1 379.7,509.9 379.9,510.4 380.2,509.7 380.5,510.1 380.8,510.1 381.0,509.9 381.3,510.1 381.6,510.6 381.9,510.1 382.1,510.0 382.4,510.4 382.7,509.8 382.9,510.0 383.2,509.9 383.5,509.9 383.8,510.0 384.0,510.2 384.3,510.3 384.6,510.9 384.9,509.8 385.1,509.7 385.4,509.3 385.7,509.8 386.0,509.2 386.2,510.3 386.5,510.3 386.8,509.5 387.1,509.4 387.3,509.8 387.6,510.0 387.9,509.1 388.1,509.8 388.4,509.7 388.7,510.6 389.0,511.2 389.2,510.4 389.5,509.7 389.8,509.2 390.1,509.5 390.3,509.8 390.6,510.6 390.9,511.2 391.2,510.0 391.4,509.5 391.7,509.5 392.0,510.0 392.2,509.8 392.5,509.2 392.8,509.4 393.1,510.8 393.3,510.3 393.6,510.2 393.9,509.9 394.2,510.2 394.4,510.7 394.7,510.5 395.0,509.5 395.3,509.9 395.5,509.6 395.8,509.4 396.1,510.5 396.4,510.4 396.6,509.9 396.9,509.4" fill="none" stroke="#2a2aff" stroke-width="1.2" stroke-linejoin="round"/>
<rect x="117.3" y="468.3" width="280.7" height="97.2" fill="none" stroke="#828282" stroke-width="2.1"/>
<text x="118.8" y="581.2" text-anchor="middle" style="font-family:'DejaVu Serif','Liberation Serif',serif;font-size:10.6px;letter-spacing:0.9px" fill="#545454">0</text>
<text x="173.5" y="581.2" text-anchor="middle" style="font-family:'DejaVu Serif','Liberation Serif',serif;font-size:10.6px;letter-spacing:0.9px" fill="#545454">200</text>
<text x="228.2" y="581.2" text-anchor="middle" style="font-family:'DejaVu Serif','Liberation Serif',serif;font-size:10.6px;letter-spacing:0.9px" fill="#545454">400</text>
<text x="282.9" y="581.2" text-anchor="middle" style="font-family:'DejaVu Serif','Liberation Serif',serif;font-size:10.6px;letter-spacing:0.9px" fill="#545454">600</text>
<text x="337.6" y="581.2" text-anchor="middle" style="font-family:'DejaVu Serif','Liberation Serif',serif;font-size:10.6px;letter-spacing:0.9px" fill="#545454">800</text>
<text x="392.4" y="581.2" text-anchor="middle" style="font-family:'DejaVu Serif','Liberation Serif',serif;font-size:10.6px;letter-spacing:0.9px" fill="#545454">1000</text>
<text x="114.8" y="568.9" text-anchor="end" style="font-family:'DejaVu Serif','Liberation Serif',serif;font-size:10.6px;letter-spacing:0.9px" fill="#545454">0</text>
<text x="114.8" y="536.9" text-anchor="end" style="font-family:'DejaVu Serif','Liberation Serif',serif;font-size:10.6px;letter-spacing:0.9px" fill="#545454">5000</text>
<text x="114.8" y="504.9" text-anchor="end" style="font-family:'DejaVu Serif','Liberation Serif',serif;font-size:10.6px;letter-spacing:0.9px" fill="#545454">10000</text>
<rect x="291.4" y="478.7" width="13.6" height="10.8" fill="#fff" stroke="#ccc" stroke-width="1"/>
<rect x="292.6" y="480.0" width="11.2" height="8.2" fill="#0000ff"/>
<text x="389.9" y="488.0" text-anchor="end" style="font-family:'DejaVu Serif','Liberation Serif',serif;font-size:11.4px;letter-spacing:0.36px" fill="#8a8a8a">aida02 3.0.W</text>
<path d="M386.1 469.0L397.1 458.0L408.1 469.0L397.1 480.0z" fill="#ff0000"/>
</g>
<g>
<path d="M645.8 469.6V564.7" stroke="#e7e7e7" stroke-width="1.2"/>
<path d="M700.5 469.6V564.7" stroke="#e7e7e7" stroke-width="1.2"/>
<path d="M755.3 469.6V564.7" stroke="#e7e7e7" stroke-width="1.2"/>
<path d="M810.0 469.6V564.7" stroke="#e7e7e7" stroke-width="1.2"/>
<path d="M864.7 469.6V564.7" stroke="#e7e7e7" stroke-width="1.2"/>
<path d="M591.1 534.7H869.9" stroke="#e7e7e7" stroke-width="1.2"/>
<path d="M591.1 504.7H869.9" stroke="#e7e7e7" stroke-width="1.2"/>
<path d="M591.1 474.7H869.9" stroke="#e7e7e7" stroke-width="1.2"/>
<polyline points="591.1,513.3 591.4,512.8 591.6,513.1 591.9,512.8 592.2,513.3 592.5,512.8 592.7,512.8 593.0,513.1 593.3,513.1 593.6,513.1 593.8,512.5 594.1,513.4 594.4,513.1 594.7,513.4 594.9,513.9 595.2,513.2 595.5,513.9 595.8,513.6 596.0,513.0 596.3,512.3 596.6,513.4 596.8,513.6 597.1,513.8 597.4,513.6 597.7,513.1 597.9,513.2 598.2,513.4 598.5,513.3 598.8,513.5 599.0,513.5 599.3,513.5 599.6,513.7 599.9,513.6 600.1,513.6 600.4,512.9 600.7,512.7 600.9,512.9 601.2,513.4 601.5,512.4 601.8,512.7 602.0,513.0 602.3,513.9 602.6,513.3 602.9,513.7 603.1,512.6 603.4,513.3 603.7,513.2 604.0,514.2 604.2,513.1 604.5,513.5 604.8,512.8 605.1,512.9 605.3,513.2 605.6,513.2 605.9,513.5 606.1,512.6 606.4,513.7 606.7,514.1 607.0,513.5 607.2,513.6 607.5,513.4 607.8,513.4 608.1,513.0 608.3,513.4 608.6,513.2 608.9,513.2 609.2,513.2 609.4,513.4 609.7,512.8 610.0,513.7 610.3,513.9 610.5,513.5 610.8,513.2 611.1,512.8 611.3,512.8 611.6,512.7 611.9,512.7 612.2,512.6 612.4,513.4 612.7,513.3 613.0,513.8 613.3,512.6 613.5,511.9 613.8,513.1 614.1,513.3 614.4,513.1 614.6,512.7 614.9,512.3 615.2,513.0 615.5,513.0 615.7,512.8 616.0,513.2 616.3,513.6 616.5,513.5 616.8,513.1 617.1,512.8 617.4,513.0 617.6,513.7 617.9,513.3 618.2,513.3 618.5,512.9 618.7,512.8 619.0,513.4 619.3,513.6 619.6,513.5 619.8,512.5 620.1,512.6 620.4,513.5 620.6,512.8 620.9,512.6 621.2,513.5 621.5,513.8 621.7,513.5 622.0,513.9 622.3,514.1 622.6,513.0 622.8,512.2 623.1,513.3 623.4,513.4 623.7,513.0 623.9,512.9 624.2,512.5 624.5,512.7 624.8,513.1 625.0,513.7 625.3,513.2 625.6,513.7 625.8,513.1 626.1,513.6 626.4,512.9 626.7,512.4 626.9,513.0 627.2,512.7 627.5,513.1 627.8,513.0 628.0,512.9 628.3,513.0 628.6,512.4 628.9,512.8 629.1,512.5 629.4,512.6 629.7,513.2 630.0,513.1 630.2,512.3 630.5,512.7 630.8,513.1 631.0,512.7 631.3,514.1 631.6,513.6 631.9,513.0 632.1,513.0 632.4,512.9 632.7,513.0 633.0,513.6 633.2,513.5 633.5,512.9 633.8,511.9 634.1,513.6 634.3,513.5 634.6,513.0 634.9,513.2 635.1,512.5 635.4,512.7 635.7,513.2 636.0,512.9 636.2,512.9 636.5,512.7 636.8,513.8 637.1,513.0 637.3,513.3 637.6,513.1 637.9,513.1 638.2,513.0 638.4,513.6 638.7,513.2 639.0,512.9 639.3,512.3 639.5,512.3 639.8,513.4 640.1,513.1 640.3,513.0 640.6,512.6 640.9,513.0 641.2,512.1 641.4,512.4 641.7,513.4 642.0,513.9 642.3,513.7 642.5,513.1 642.8,513.0 643.1,512.6 643.4,513.5 643.6,513.5 643.9,512.9 644.2,513.1 644.5,513.2 644.7,512.9 645.0,513.2 645.3,513.1 645.5,513.4 645.8,495.7 646.1,495.2 646.4,495.0 646.6,479.2 646.9,479.4 647.2,479.5 647.5,480.1 647.7,479.6 648.0,479.9 648.3,479.6 648.6,480.5 648.8,480.1 649.1,480.3 649.4,480.2 649.7,481.1 649.9,479.6 650.2,480.7 650.5,480.9 650.7,481.0 651.0,480.1 651.3,480.2 651.6,480.1 651.8,480.8 652.1,480.9 652.4,481.5 652.7,481.2 652.9,480.7 653.2,481.0 653.5,481.1 653.8,481.0 654.0,481.5 654.3,482.0 654.6,482.2 654.8,481.3 655.1,481.2 655.4,481.8 655.7,482.7 655.9,482.3 656.2,482.0 656.5,481.4 656.8,482.2 657.0,482.0 657.3,482.8 657.6,482.6 657.9,482.0 658.1,482.5 658.4,482.5 658.7,481.6 659.0,482.2 659.2,482.7 659.5,482.9 659.8,482.5 660.0,482.9 660.3,482.8 660.6,482.4 660.9,482.4 661.1,482.3 661.4,503.8 661.7,504.2 662.0,503.8 662.2,512.5 662.5,513.3 662.8,513.3 663.1,512.3 663.3,513.0 663.6,513.2 663.9,513.4 664.2,513.3 664.4,513.4 664.7,512.2 665.0,514.1 665.2,513.8 665.5,513.8 665.8,513.3 666.1,513.3 666.3,513.0 666.6,513.1 666.9,513.8 667.2,513.2 667.4,513.6 667.7,512.8 668.0,513.8 668.3,512.9 668.5,512.9 668.8,512.8 669.1,513.0 669.4,512.8 669.6,512.7 669.9,513.0 670.2,513.1 670.4,513.3 670.7,514.0 671.0,513.1 671.3,514.0 671.5,513.8 671.8,514.3 672.1,513.8 672.4,513.1 672.6,513.7 672.9,513.6 673.2,514.0 673.5,513.5 673.7,513.6 674.0,513.5 674.3,513.0 674.5,512.7 674.8,513.0 675.1,513.5 675.4,513.2 675.6,513.2 675.9,513.0 676.2,513.6 676.5,513.0 676.7,513.4 677.0,512.9 677.3,512.8 677.6,512.7 677.8,512.8 678.1,512.5 678.4,513.2 678.7,513.2 678.9,513.8 679.2,513.3 679.5,513.3 679.7,512.9 680.0,513.9 680.3,513.9 680.6,513.8 680.8,514.4 681.1,513.7 681.4,512.9 681.7,512.7 681.9,512.6 682.2,512.9 682.5,512.5 682.8,513.1 683.0,513.6 683.3,513.1 683.6,512.8 683.9,513.1 684.1,513.0 684.4,513.4 684.7,513.4 684.9,513.7 685.2,513.0 685.5,513.2 685.8,513.5 686.0,512.9 686.3,513.1 686.6,513.3 686.9,513.7 687.1,513.2 687.4,513.4 687.7,513.3 688.0,513.2 688.2,513.2 688.5,513.0 688.8,513.2 689.0,513.0 689.3,513.3 689.6,513.6 689.9,513.5 690.1,513.0 690.4,513.4 690.7,513.6 691.0,513.9 691.2,513.9 691.5,513.8 691.8,514.5 692.1,513.8 692.3,513.5 692.6,513.2 692.9,513.2 693.2,513.7 693.4,513.7 693.7,513.9 694.0,513.9 694.2,513.0 694.5,513.2 694.8,513.8 695.1,514.1 695.3,513.6 695.6,513.6 695.9,513.3 696.2,513.3 696.4,514.0 696.7,513.5 697.0,514.1 697.3,514.1 697.5,514.4 697.8,513.8 698.1,513.3 698.4,513.8 698.6,513.5 698.9,514.1 699.2,513.0 699.4,512.4 699.7,513.6 700.0,514.0 700.3,514.0 700.5,514.1 700.8,513.6 701.1,512.9 701.4,513.7 701.6,513.6 701.9,514.3 702.2,514.7 702.5,514.0 702.7,513.4 703.0,514.1 703.3,513.4 703.6,513.9 703.8,513.5 704.1,514.2 704.4,514.7 704.6,514.4 704.9,514.8 705.2,513.9 705.5,513.9 705.7,512.7 706.0,513.5 706.3,514.0 706.6,514.1 706.8,514.3 707.1,513.8 707.4,513.7 707.7,514.8 707.9,513.8 708.2,513.8 708.5,513.3 708.7,513.9 709.0,513.8 709.3,514.0 709.6,514.3 709.8,513.2 710.1,513.4 710.4,513.7 710.7,514.0 710.9,514.3 711.2,514.0 711.5,514.1 711.8,514.3 712.0,514.1 712.3,514.1 712.6,513.5 712.9,514.1 713.1,514.7 713.4,513.7 713.7,513.9 713.9,514.3 714.2,513.6 714.5,513.5 714.8,514.6 715.0,513.8 715.3,513.4 715.6,513.1 715.9,513.5 716.1,514.1 716.4,514.0 716.7,513.4 717.0,513.9 717.2,513.5 717.5,514.2 717.8,514.2 718.1,513.8 718.3,513.7 718.6,513.6 718.9,514.6 719.1,513.7 719.4,513.5 719.7,513.4 720.0,514.2 720.2,513.6 720.5,514.0 720.8,514.5 721.1,514.1 721.3,514.6 721.6,514.6 721.9,514.0 722.2,514.1 722.4,514.5 722.7,513.4 723.0,514.0 723.2,514.4 723.5,514.3 723.8,514.2 724.1,514.1 724.3,514.0 724.6,513.9 724.9,514.2 725.2,514.4 725.4,513.9 725.7,514.1 726.0,514.3 726.3,513.9 726.5,514.0 726.8,514.5 727.1,514.4 727.4,513.9 727.6,513.9 727.9,514.1 728.2,513.4 728.4,513.9 728.7,514.1 729.0,514.0 729.3,514.3 729.5,514.6 729.8,514.0 730.1,513.9 730.4,514.0 730.6,514.2 730.9,514.8 731.2,514.1 731.5,515.3 731.7,514.3 732.0,514.5 732.3,514.6 732.6,514.9 732.8,514.3 733.1,513.5 733.4,513.5 733.6,514.3 733.9,514.2 734.2,514.5 734.5,514.1 734.7,514.5 735.0,514.5 735.3,513.8 735.6,514.4 735.8,514.6 736.1,514.0 736.4,514.8 736.7,515.3 736.9,514.8 737.2,514.8 737.5,514.2 737.8,513.9 738.0,514.2 738.3,513.7 738.6,513.4 738.8,514.1 739.1,514.6 739.4,514.1 739.7,514.8 739.9,515.0 740.2,514.4 740.5,513.8 740.8,514.3 741.0,513.9 741.3,513.9 741.6,514.5 741.9,513.3 742.1,514.4 742.4,514.2 742.7,514.2 742.9,515.0 743.2,514.0 743.5,513.9 743.8,513.6 744.0,514.3 744.3,514.5 744.6,513.4 744.9,513.5 745.1,513.9 745.4,514.0 745.7,513.7 746.0,514.8 746.2,514.0 746.5,513.8 746.8,513.9 747.1,514.2 747.3,514.1 747.6,513.9 747.9,514.7 748.1,514.8 748.4,514.1 748.7,514.4 749.0,514.3 749.2,514.4 749.5,514.3 749.8,513.7 750.1,513.6 750.3,514.0 750.6,514.6 750.9,513.6 751.2,514.0 751.4,514.0 751.7,514.1 752.0,514.0 752.3,514.7 752.5,515.2 752.8,514.4 753.1,513.9 753.3,514.5 753.6,514.3 753.9,514.4 754.2,515.1 754.4,514.7 754.7,514.2 755.0,514.8 755.3,514.8 755.5,514.8 755.8,514.6 756.1,515.1 756.4,514.1 756.6,514.4 756.9,514.1 757.2,513.6 757.4,514.4 757.7,514.3 758.0,513.9 758.3,514.4 758.5,514.3 758.8,514.1 759.1,514.4 759.4,513.4 759.6,514.1 759.9,514.4 760.2,514.6 760.5,514.9 760.7,515.3 761.0,514.5 761.3,514.6 761.6,514.2 761.8,513.7 762.1,514.5 762.4,514.1 762.6,515.0 762.9,514.0 763.2,514.5 763.5,514.5 763.7,514.9 764.0,514.9 764.3,515.6 764.6,515.5 764.8,515.2 765.1,514.5 765.4,514.1 765.7,515.0 765.9,514.8 766.2,514.9 766.5,514.7 766.8,514.1 767.0,514.4 767.3,513.9 767.6,513.7 767.8,515.0 768.1,513.9 768.4,513.6 768.7,514.1 768.9,514.7 769.2,515.2 769.5,514.3 769.8,514.3 770.0,514.8 770.3,514.7 770.6,514.1 770.9,514.1 771.1,515.2 771.4,513.9 771.7,514.3 772.0,514.0 772.2,514.5 772.5,514.7 772.8,514.5 773.0,514.4 773.3,514.1 773.6,515.0 773.9,514.5 774.1,514.3 774.4,514.6 774.7,514.7 775.0,514.4 775.2,514.4 775.5,514.5 775.8,514.9 776.1,514.7 776.3,514.9 776.6,515.1 776.9,515.3 777.1,515.0 777.4,514.9 777.7,515.0 778.0,514.7 778.2,514.8 778.5,514.3 778.8,514.3 779.1,514.6 779.3,515.2 779.6,514.4 779.9,513.9 780.2,514.0 780.4,513.9 780.7,514.7 781.0,514.2 781.3,514.7 781.5,514.4 781.8,516.0 782.1,515.6 782.3,514.9 782.6,514.1 782.9,514.6 783.2,515.1 783.4,514.8 783.7,514.9 784.0,515.9 784.3,515.6 784.5,515.0 784.8,514.9 785.1,514.7 785.4,514.4 785.6,515.2 785.9,515.3 786.2,515.4 786.5,514.7 786.7,515.1 787.0,515.1 787.3,514.9 787.5,515.3 787.8,515.1 788.1,515.1 788.4,514.9 788.6,514.8 788.9,514.6 789.2,515.1 789.5,514.6 789.7,515.0 790.0,514.3 790.3,514.9 790.6,514.4 790.8,514.4 791.1,514.1 791.4,514.4 791.6,514.3 791.9,515.1 792.2,514.6 792.5,514.9 792.7,514.8 793.0,515.3 793.3,515.2 793.6,514.8 793.8,514.5 794.1,514.4 794.4,514.9 794.7,515.2 794.9,515.1 795.2,515.2 795.5,514.9 795.8,514.4 796.0,514.0 796.3,514.9 796.6,515.7 796.8,515.9 797.1,515.1 797.4,516.1 797.7,515.2 797.9,514.7 798.2,514.4 798.5,514.5 798.8,515.1 799.0,515.7 799.3,515.4 799.6,514.9 799.9,514.6 800.1,514.1 800.4,514.4 800.7,514.3 801.0,514.7 801.2,515.2 801.5,514.9 801.8,515.6 802.0,515.0 802.3,514.4 802.6,515.0 802.9,515.7 803.1,514.9 803.4,515.1 803.7,514.7 804.0,515.4 804.2,514.9 804.5,514.7 804.8,514.0 805.1,514.6 805.3,514.6 805.6,515.0 805.9,515.7 806.2,514.0 806.4,515.1 806.7,513.8 807.0,514.0 807.2,513.8 807.5,514.9 807.8,514.2 808.1,514.5 808.3,514.4 808.6,513.7 808.9,514.4 809.2,514.5 809.4,515.2 809.7,515.2 810.0,515.4 810.3,515.0 810.5,514.2 810.8,514.3 811.1,514.0 811.3,514.5 811.6,514.3 811.9,514.3 812.2,514.9 812.4,514.9 812.7,514.8 813.0,515.1 813.3,514.6 813.5,515.0 813.8,515.0 814.1,515.3 814.4,515.0 814.6,514.7 814.9,514.8 815.2,514.9 815.5,515.2 815.7,514.8 816.0,514.9 816.3,514.5 816.5,515.5 816.8,515.0 817.1,514.7 817.4,515.1 817.6,515.4 817.9,515.3 818.2,515.1 818.5,515.5 818.7,514.8 819.0,514.7 819.3,514.6 819.6,515.0 819.8,515.0 820.1,514.9 820.4,515.1 820.7,515.1 820.9,514.8 821.2,514.7 821.5,514.7 821.7,514.2 822.0,514.6 822.3,514.8 822.6,515.2 822.8,514.9 823.1,515.3 823.4,515.4 823.7,514.7 823.9,514.6 824.2,514.3 824.5,515.0 824.8,514.6 825.0,514.2 825.3,514.7 825.6,514.6 825.9,515.1 826.1,514.6 826.4,515.2 826.7,515.7 826.9,515.3 827.2,513.7 827.5,514.8 827.8,514.3 828.0,515.0 828.3,514.5 828.6,515.0 828.9,515.5 829.1,514.9 829.4,514.8 829.7,515.0 830.0,514.5 830.2,515.7 830.5,514.7 830.8,514.8 831.0,514.5 831.3,515.0 831.6,514.7 831.9,515.2 832.1,514.6 832.4,514.2 832.7,514.1 833.0,515.0 833.2,515.4 833.5,515.2 833.8,514.8 834.1,514.8 834.3,515.7 834.6,514.5 834.9,515.1 835.2,514.6 835.4,514.5 835.7,514.7 836.0,514.8 836.2,514.9 836.5,514.4 836.8,514.6 837.1,514.8 837.3,514.9 837.6,514.2 837.9,514.2 838.2,514.5 838.4,514.7 838.7,515.2 839.0,514.9 839.3,515.1 839.5,514.9 839.8,515.1 840.1,515.4 840.4,515.5 840.6,514.7 840.9,514.6 841.2,515.1 841.4,514.1 841.7,514.1 842.0,514.3 842.3,514.4 842.5,514.6 842.8,514.6 843.1,514.7 843.4,515.2 843.6,515.0 843.9,515.0 844.2,515.2 844.5,515.8 844.7,514.9 845.0,514.3 845.3,513.8 845.5,514.2 845.8,514.4 846.1,514.5 846.4,514.2 846.6,514.7 846.9,514.3 847.2,514.3 847.5,514.4 847.7,514.4 848.0,514.6 848.3,515.0 848.6,515.3 848.8,515.0 849.1,514.8 849.4,514.8 849.7,515.0 849.9,515.0 850.2,515.2 850.5,514.8 850.7,514.9 851.0,514.9 851.3,514.7 851.6,514.2 851.8,514.8 852.1,514.9 852.4,514.6 852.7,514.4 852.9,514.9 853.2,514.5 853.5,514.3 853.8,515.1 854.0,514.3 854.3,513.9 854.6,514.2 854.9,514.4 855.1,514.7 855.4,515.0 855.7,515.5 855.9,515.0 856.2,515.7 856.5,515.7 856.8,515.0 857.0,515.2 857.3,515.2 857.6,514.5 857.9,514.3 858.1,515.0 858.4,514.9 858.7,514.9 859.0,515.7 859.2,515.5 859.5,515.0 859.8,515.6 860.1,515.1 860.3,515.1 860.6,514.1 860.9,514.9 861.1,515.4 861.4,515.1 861.7,515.0 862.0,515.4 862.2,515.7 862.5,515.5 862.8,515.7 863.1,514.8 863.3,514.4 863.6,514.8 863.9,515.8 864.2,514.9 864.4,514.6 864.7,514.7 865.0,514.4 865.2,514.9 865.5,515.2 865.8,514.3 866.1,514.9 866.3,515.1 866.6,515.8 866.9,515.0 867.2,514.9 867.4,515.4 867.7,514.7 868.0,514.9 868.3,515.7 868.5,515.0 868.8,514.3 869.1,514.4 869.4,514.8 869.6,514.3 869.9,514.5" fill="none" stroke="#2a2aff" stroke-width="1.2" stroke-linejoin="round"/>
<rect x="590.3" y="468.3" width="280.7" height="97.2" fill="none" stroke="#828282" stroke-width="2.1"/>
<text x="591.8" y="581.2" text-anchor="middle" style="font-family:'DejaVu Serif','Liberation Serif',serif;font-size:10.6px;letter-spacing:0.9px" fill="#545454">0</text>
<text x="646.5" y="581.2" text-anchor="middle" style="font-family:'DejaVu Serif','Liberation Serif',serif;font-size:10.6px;letter-spacing:0.9px" fill="#545454">200</text>
<text x="701.2" y="581.2" text-anchor="middle" style="font-family:'DejaVu Serif','Liberation Serif',serif;font-size:10.6px;letter-spacing:0.9px" fill="#545454">400</text>
<text x="755.9" y="581.2" text-anchor="middle" style="font-family:'DejaVu Serif','Liberation Serif',serif;font-size:10.6px;letter-spacing:0.9px" fill="#545454">600</text>
<text x="810.6" y="581.2" text-anchor="middle" style="font-family:'DejaVu Serif','Liberation Serif',serif;font-size:10.6px;letter-spacing:0.9px" fill="#545454">800</text>
<text x="865.4" y="581.2" text-anchor="middle" style="font-family:'DejaVu Serif','Liberation Serif',serif;font-size:10.6px;letter-spacing:0.9px" fill="#545454">1000</text>
<text x="587.8" y="568.9" text-anchor="end" style="font-family:'DejaVu Serif','Liberation Serif',serif;font-size:10.6px;letter-spacing:0.9px" fill="#545454">0</text>
<text x="587.8" y="538.9" text-anchor="end" style="font-family:'DejaVu Serif','Liberation Serif',serif;font-size:10.6px;letter-spacing:0.9px" fill="#545454">5000</text>
<text x="587.8" y="508.9" text-anchor="end" style="font-family:'DejaVu Serif','Liberation Serif',serif;font-size:10.6px;letter-spacing:0.9px" fill="#545454">10000</text>
<text x="587.8" y="478.9" text-anchor="end" style="font-family:'DejaVu Serif','Liberation Serif',serif;font-size:10.6px;letter-spacing:0.9px" fill="#545454">15000</text>
<rect x="764.4" y="478.7" width="13.6" height="10.8" fill="#fff" stroke="#ccc" stroke-width="1"/>
<rect x="765.6" y="480.0" width="11.2" height="8.2" fill="#0000ff"/>
<text x="862.9" y="488.0" text-anchor="end" style="font-family:'DejaVu Serif','Liberation Serif',serif;font-size:11.4px;letter-spacing:0.36px" fill="#8a8a8a">aida02 3.1.W</text>
<path d="M859.1 469.0L870.1 458.0L881.1 469.0L870.1 480.0z" fill="#ff0000"/>
</g>
<g>
<path d="M1118.8 469.6V564.7" stroke="#e7e7e7" stroke-width="1.2"/>
<path d="M1173.5 469.6V564.7" stroke="#e7e7e7" stroke-width="1.2"/>
<path d="M1228.3 469.6V564.7" stroke="#e7e7e7" stroke-width="1.2"/>
<path d="M1283.0 469.6V564.7" stroke="#e7e7e7" stroke-width="1.2"/>
<path d="M1337.7 469.6V564.7" stroke="#e7e7e7" stroke-width="1.2"/>
<path d="M1064.1 531.7H1342.9" stroke="#e7e7e7" stroke-width="1.2"/>
<path d="M1064.1 498.7H1342.9" stroke="#e7e7e7" stroke-width="1.2"/>
<polyline points="1064.1,507.7 1064.4,508.1 1064.6,508.2 1064.9,507.0 1065.2,507.0 1065.5,507.4 1065.7,507.2 1066.0,507.1 1066.3,506.9 1066.6,507.0 1066.8,507.9 1067.1,506.8 1067.4,508.1 1067.7,508.6 1067.9,507.9 1068.2,507.2 1068.5,507.9 1068.8,508.3 1069.0,508.6 1069.3,508.4 1069.6,507.2 1069.8,509.0 1070.1,508.1 1070.4,508.5 1070.7,507.6 1070.9,507.4 1071.2,507.4 1071.5,507.8 1071.8,507.7 1072.0,507.6 1072.3,507.3 1072.6,507.4 1072.9,507.4 1073.1,506.8 1073.4,506.8 1073.7,508.1 1073.9,508.5 1074.2,508.2 1074.5,508.3 1074.8,508.4 1075.0,508.3 1075.3,508.1 1075.6,508.6 1075.9,508.3 1076.1,508.0 1076.4,507.6 1076.7,508.8 1077.0,507.8 1077.2,507.1 1077.5,507.7 1077.8,508.0 1078.1,507.6 1078.3,507.5 1078.6,507.9 1078.9,508.5 1079.1,508.6 1079.4,508.4 1079.7,507.0 1080.0,507.6 1080.2,506.3 1080.5,507.5 1080.8,508.3 1081.1,508.9 1081.3,508.7 1081.6,508.1 1081.9,508.1 1082.2,508.0 1082.4,507.9 1082.7,508.6 1083.0,507.8 1083.3,508.3 1083.5,507.7 1083.8,507.7 1084.1,507.5 1084.3,508.0 1084.6,507.6 1084.9,508.0 1085.2,508.7 1085.4,508.5 1085.7,507.3 1086.0,508.2 1086.3,507.3 1086.5,507.9 1086.8,508.4 1087.1,508.0 1087.4,508.8 1087.6,508.0 1087.9,506.9 1088.2,507.7 1088.5,507.7 1088.7,506.3 1089.0,507.4 1089.3,507.8 1089.5,508.0 1089.8,507.1 1090.1,507.6 1090.4,508.1 1090.6,508.8 1090.9,507.6 1091.2,508.0 1091.5,507.8 1091.7,508.3 1092.0,508.6 1092.3,507.8 1092.6,508.1 1092.8,507.3 1093.1,507.3 1093.4,508.1 1093.6,507.3 1093.9,508.2 1094.2,508.0 1094.5,507.8 1094.7,508.1 1095.0,507.4 1095.3,508.0 1095.6,508.1 1095.8,508.1 1096.1,508.4 1096.4,508.2 1096.7,507.9 1096.9,508.0 1097.2,508.3 1097.5,507.7 1097.8,506.9 1098.0,508.0 1098.3,507.2 1098.6,507.1 1098.8,507.4 1099.1,508.2 1099.4,508.6 1099.7,508.4 1099.9,508.0 1100.2,508.9 1100.5,508.5 1100.8,508.3 1101.0,507.6 1101.3,508.0 1101.6,508.3 1101.9,508.3 1102.1,508.5 1102.4,507.8 1102.7,507.4 1103.0,507.6 1103.2,507.7 1103.5,508.2 1103.8,507.8 1104.0,507.8 1104.3,508.0 1104.6,508.3 1104.9,507.5 1105.1,508.4 1105.4,508.4 1105.7,509.2 1106.0,508.9 1106.2,508.2 1106.5,507.4 1106.8,507.0 1107.1,507.2 1107.3,508.8 1107.6,508.6 1107.9,507.7 1108.1,507.4 1108.4,507.8 1108.7,507.4 1109.0,507.4 1109.2,507.9 1109.5,507.6 1109.8,507.4 1110.1,507.8 1110.3,507.1 1110.6,507.7 1110.9,508.2 1111.2,507.8 1111.4,508.2 1111.7,507.7 1112.0,507.7 1112.3,508.6 1112.5,508.5 1112.8,508.2 1113.1,508.3 1113.3,508.7 1113.6,507.6 1113.9,508.4 1114.2,508.7 1114.4,507.7 1114.7,507.1 1115.0,507.6 1115.3,507.7 1115.5,508.5 1115.8,508.0 1116.1,508.3 1116.4,508.5 1116.6,507.8 1116.9,507.3 1117.2,507.7 1117.5,507.8 1117.7,507.9 1118.0,507.4 1118.3,507.9 1118.5,509.2 1118.8,492.0 1119.1,492.2 1119.4,492.8 1119.6,478.0 1119.9,478.0 1120.2,479.5 1120.5,478.9 1120.7,477.5 1121.0,479.2 1121.3,479.7 1121.6,479.3 1121.8,478.2 1122.1,478.5 1122.4,478.5 1122.7,478.4 1122.9,479.6 1123.2,479.3 1123.5,478.2 1123.7,478.3 1124.0,480.8 1124.3,479.8 1124.6,481.2 1124.8,480.4 1125.1,479.8 1125.4,480.0 1125.7,479.6 1125.9,479.6 1126.2,479.1 1126.5,479.7 1126.8,480.6 1127.0,480.6 1127.3,480.3 1127.6,480.4 1127.8,480.2 1128.1,480.9 1128.4,480.1 1128.7,480.0 1128.9,480.4 1129.2,480.6 1129.5,481.3 1129.8,481.5 1130.0,481.6 1130.3,480.9 1130.6,481.5 1130.9,482.2 1131.1,480.8 1131.4,481.8 1131.7,481.7 1132.0,481.5 1132.2,481.4 1132.5,481.6 1132.8,481.6 1133.0,481.0 1133.3,482.4 1133.6,481.8 1133.9,482.4 1134.1,482.5 1134.4,481.9 1134.7,481.8 1135.0,481.8 1135.2,500.3 1135.5,499.7 1135.8,499.8 1136.1,507.2 1136.3,507.9 1136.6,507.9 1136.9,508.8 1137.2,508.7 1137.4,508.2 1137.7,508.6 1138.0,508.2 1138.2,507.3 1138.5,507.6 1138.8,506.9 1139.1,507.6 1139.3,507.5 1139.6,507.8 1139.9,508.2 1140.2,508.2 1140.4,507.3 1140.7,508.1 1141.0,507.7 1141.3,507.1 1141.5,508.1 1141.8,507.4 1142.1,507.8 1142.4,508.4 1142.6,507.7 1142.9,508.9 1143.2,507.7 1143.4,508.0 1143.7,507.1 1144.0,507.6 1144.3,508.2 1144.5,508.0 1144.8,508.7 1145.1,508.1 1145.4,508.6 1145.6,507.9 1145.9,507.6 1146.2,506.9 1146.5,507.9 1146.7,508.3 1147.0,507.5 1147.3,507.1 1147.5,507.6 1147.8,508.3 1148.1,508.4 1148.4,508.2 1148.6,507.9 1148.9,508.0 1149.2,507.5 1149.5,508.1 1149.7,508.0 1150.0,508.1 1150.3,508.1 1150.6,507.9 1150.8,507.7 1151.1,507.6 1151.4,507.1 1151.7,507.2 1151.9,508.0 1152.2,508.5 1152.5,507.5 1152.7,507.9 1153.0,508.7 1153.3,508.2 1153.6,508.2 1153.8,508.5 1154.1,508.5 1154.4,508.1 1154.7,508.1 1154.9,507.3 1155.2,508.6 1155.5,507.4 1155.8,507.5 1156.0,508.9 1156.3,508.5 1156.6,509.6 1156.9,508.4 1157.1,508.4 1157.4,507.9 1157.7,509.0 1157.9,509.4 1158.2,508.6 1158.5,507.6 1158.8,508.0 1159.0,507.7 1159.3,508.6 1159.6,508.9 1159.9,509.5 1160.1,508.6 1160.4,508.4 1160.7,508.4 1161.0,508.4 1161.2,508.3 1161.5,508.2 1161.8,507.6 1162.0,508.6 1162.3,508.0 1162.6,508.9 1162.9,508.0 1163.1,508.7 1163.4,508.6 1163.7,508.8 1164.0,508.8 1164.2,508.5 1164.5,508.3 1164.8,508.0 1165.1,507.8 1165.3,508.1 1165.6,507.9 1165.9,508.3 1166.2,508.8 1166.4,508.1 1166.7,507.6 1167.0,507.9 1167.2,507.8 1167.5,507.9 1167.8,507.5 1168.1,508.1 1168.3,508.2 1168.6,508.3 1168.9,508.6 1169.2,508.4 1169.4,508.1 1169.7,508.7 1170.0,508.8 1170.3,508.5 1170.5,506.8 1170.8,508.0 1171.1,508.0 1171.4,508.0 1171.6,508.8 1171.9,509.1 1172.2,508.5 1172.4,508.9 1172.7,508.4 1173.0,507.6 1173.3,507.8 1173.5,508.9 1173.8,508.8 1174.1,508.0 1174.4,508.0 1174.6,508.6 1174.9,507.9 1175.2,508.3 1175.5,508.7 1175.7,508.5 1176.0,509.2 1176.3,507.8 1176.6,507.8 1176.8,508.4 1177.1,508.7 1177.4,508.4 1177.6,508.5 1177.9,509.2 1178.2,509.1 1178.5,508.8 1178.7,509.6 1179.0,509.9 1179.3,508.8 1179.6,507.7 1179.8,507.9 1180.1,508.0 1180.4,507.6 1180.7,507.6 1180.9,508.2 1181.2,507.9 1181.5,508.8 1181.7,508.5 1182.0,508.5 1182.3,509.1 1182.6,508.6 1182.8,508.7 1183.1,509.6 1183.4,508.6 1183.7,508.0 1183.9,508.6 1184.2,508.8 1184.5,508.1 1184.8,508.6 1185.0,507.9 1185.3,508.0 1185.6,508.3 1185.9,509.1 1186.1,509.2 1186.4,508.7 1186.7,508.1 1186.9,508.9 1187.2,508.9 1187.5,509.5 1187.8,508.2 1188.0,508.0 1188.3,507.8 1188.6,508.9 1188.9,508.2 1189.1,508.6 1189.4,508.5 1189.7,509.3 1190.0,508.8 1190.2,509.2 1190.5,509.8 1190.8,508.8 1191.1,508.6 1191.3,508.1 1191.6,507.9 1191.9,507.5 1192.1,507.9 1192.4,508.7 1192.7,509.3 1193.0,508.3 1193.2,508.8 1193.5,509.0 1193.8,508.2 1194.1,508.6 1194.3,508.2 1194.6,508.2 1194.9,508.6 1195.2,508.4 1195.4,508.9 1195.7,509.1 1196.0,509.1 1196.2,509.7 1196.5,508.9 1196.8,508.3 1197.1,509.0 1197.3,509.3 1197.6,508.9 1197.9,508.8 1198.2,508.6 1198.4,508.9 1198.7,507.6 1199.0,507.7 1199.3,507.4 1199.5,507.4 1199.8,508.1 1200.1,508.1 1200.4,507.8 1200.6,508.7 1200.9,508.5 1201.2,508.6 1201.4,508.8 1201.7,509.2 1202.0,508.9 1202.3,508.2 1202.5,508.3 1202.8,509.0 1203.1,507.8 1203.4,508.8 1203.6,508.9 1203.9,508.9 1204.2,508.3 1204.5,508.1 1204.7,507.5 1205.0,510.0 1205.3,509.1 1205.6,508.8 1205.8,508.2 1206.1,508.8 1206.4,508.2 1206.6,508.0 1206.9,508.1 1207.2,508.6 1207.5,509.2 1207.7,509.2 1208.0,509.2 1208.3,509.1 1208.6,509.9 1208.8,509.4 1209.1,509.2 1209.4,509.0 1209.7,509.5 1209.9,509.3 1210.2,508.1 1210.5,508.0 1210.8,508.8 1211.0,508.7 1211.3,508.7 1211.6,508.5 1211.8,508.1 1212.1,509.2 1212.4,510.1 1212.7,508.5 1212.9,508.6 1213.2,508.7 1213.5,508.3 1213.8,509.3 1214.0,508.8 1214.3,508.4 1214.6,508.1 1214.9,508.2 1215.1,509.2 1215.4,509.0 1215.7,508.3 1215.9,509.4 1216.2,509.2 1216.5,508.5 1216.8,508.3 1217.0,508.1 1217.3,509.1 1217.6,508.4 1217.9,508.8 1218.1,508.3 1218.4,508.8 1218.7,509.0 1219.0,508.8 1219.2,508.2 1219.5,508.7 1219.8,509.0 1220.1,509.3 1220.3,508.7 1220.6,508.9 1220.9,508.7 1221.1,509.1 1221.4,509.6 1221.7,509.0 1222.0,508.3 1222.2,508.3 1222.5,509.3 1222.8,508.6 1223.1,508.7 1223.3,508.6 1223.6,507.8 1223.9,508.7 1224.2,509.5 1224.4,508.3 1224.7,508.6 1225.0,508.5 1225.3,508.5 1225.5,509.3 1225.8,508.9 1226.1,508.9 1226.3,507.9 1226.6,508.7 1226.9,510.0 1227.2,508.9 1227.4,508.4 1227.7,509.0 1228.0,508.5 1228.3,507.9 1228.5,507.9 1228.8,508.4 1229.1,508.6 1229.4,507.9 1229.6,508.4 1229.9,508.4 1230.2,509.0 1230.4,508.8 1230.7,508.5 1231.0,509.3 1231.3,508.7 1231.5,508.9 1231.8,508.1 1232.1,508.7 1232.4,509.9 1232.6,508.5 1232.9,509.0 1233.2,508.2 1233.5,508.9 1233.7,509.0 1234.0,508.8 1234.3,508.6 1234.6,507.7 1234.8,508.9 1235.1,509.6 1235.4,508.4 1235.6,508.4 1235.9,508.8 1236.2,508.5 1236.5,509.6 1236.7,508.8 1237.0,509.2 1237.3,510.4 1237.6,508.9 1237.8,508.9 1238.1,509.3 1238.4,509.4 1238.7,509.9 1238.9,508.6 1239.2,509.1 1239.5,509.0 1239.8,509.3 1240.0,508.7 1240.3,508.9 1240.6,508.7 1240.8,508.5 1241.1,509.4 1241.4,508.4 1241.7,508.9 1241.9,510.0 1242.2,509.3 1242.5,509.8 1242.8,509.9 1243.0,508.9 1243.3,509.3 1243.6,508.9 1243.9,508.5 1244.1,508.4 1244.4,509.1 1244.7,509.3 1245.0,508.8 1245.2,508.9 1245.5,509.0 1245.8,508.8 1246.0,509.1 1246.3,508.9 1246.6,508.6 1246.9,509.4 1247.1,508.8 1247.4,508.9 1247.7,509.5 1248.0,509.2 1248.2,509.2 1248.5,509.5 1248.8,509.6 1249.1,508.1 1249.3,508.1 1249.6,509.1 1249.9,509.3 1250.1,509.0 1250.4,508.4 1250.7,508.4 1251.0,509.4 1251.2,508.8 1251.5,508.7 1251.8,508.7 1252.1,509.0 1252.3,509.7 1252.6,509.9 1252.9,509.6 1253.2,509.8 1253.4,508.9 1253.7,508.9 1254.0,508.9 1254.3,508.6 1254.5,509.1 1254.8,509.4 1255.1,509.0 1255.3,509.0 1255.6,509.4 1255.9,508.9 1256.2,509.3 1256.4,509.3 1256.7,508.8 1257.0,510.0 1257.3,508.4 1257.5,509.5 1257.8,509.6 1258.1,508.8 1258.4,508.7 1258.6,509.1 1258.9,508.3 1259.2,509.3 1259.5,509.1 1259.7,509.0 1260.0,509.3 1260.3,509.2 1260.5,508.9 1260.8,508.5 1261.1,509.5 1261.4,508.8 1261.6,509.2 1261.9,509.9 1262.2,509.3 1262.5,509.6 1262.7,509.5 1263.0,508.8 1263.3,509.5 1263.6,509.3 1263.8,510.1 1264.1,509.8 1264.4,509.7 1264.6,508.8 1264.9,508.7 1265.2,508.4 1265.5,509.4 1265.7,509.5 1266.0,509.5 1266.3,509.1 1266.6,509.3 1266.8,508.8 1267.1,508.6 1267.4,507.9 1267.7,509.0 1267.9,510.1 1268.2,509.1 1268.5,509.2 1268.8,509.3 1269.0,508.6 1269.3,509.3 1269.6,508.9 1269.8,508.1 1270.1,508.2 1270.4,508.3 1270.7,509.3 1270.9,509.6 1271.2,508.8 1271.5,509.4 1271.8,509.3 1272.0,509.2 1272.3,509.5 1272.6,509.8 1272.9,508.7 1273.1,509.0 1273.4,509.3 1273.7,509.5 1274.0,508.7 1274.2,508.5 1274.5,508.2 1274.8,509.1 1275.0,509.4 1275.3,509.3 1275.6,508.9 1275.9,508.8 1276.1,508.4 1276.4,509.7 1276.7,509.5 1277.0,509.0 1277.2,509.8 1277.5,509.6 1277.8,509.4 1278.1,510.1 1278.3,509.1 1278.6,508.9 1278.9,509.8 1279.2,508.7 1279.4,509.5 1279.7,509.3 1280.0,508.1 1280.2,508.1 1280.5,508.9 1280.8,509.8 1281.1,509.8 1281.3,509.0 1281.6,510.0 1281.9,510.3 1282.2,509.3 1282.4,509.7 1282.7,509.1 1283.0,509.7 1283.3,509.3 1283.5,508.8 1283.8,508.9 1284.1,509.0 1284.3,509.1 1284.6,508.3 1284.9,509.5 1285.2,510.2 1285.4,509.3 1285.7,508.8 1286.0,509.2 1286.3,509.1 1286.5,509.4 1286.8,509.4 1287.1,509.0 1287.4,509.5 1287.6,508.0 1287.9,509.0 1288.2,509.4 1288.5,508.4 1288.7,508.3 1289.0,507.5 1289.3,509.1 1289.5,508.3 1289.8,508.6 1290.1,509.0 1290.4,508.8 1290.6,509.4 1290.9,509.2 1291.2,508.9 1291.5,509.1 1291.7,509.3 1292.0,509.0 1292.3,509.2 1292.6,509.7 1292.8,510.3 1293.1,509.4 1293.4,509.7 1293.7,509.6 1293.9,508.9 1294.2,509.5 1294.5,508.7 1294.7,509.4 1295.0,509.3 1295.3,509.7 1295.6,508.9 1295.8,508.6 1296.1,508.4 1296.4,509.4 1296.7,508.9 1296.9,509.1 1297.2,508.9 1297.5,509.3 1297.8,509.0 1298.0,509.1 1298.3,509.0 1298.6,508.7 1298.9,508.9 1299.1,509.6 1299.4,509.0 1299.7,509.4 1299.9,509.0 1300.2,508.7 1300.5,508.7 1300.8,508.2 1301.0,508.2 1301.3,509.0 1301.6,509.7 1301.9,509.5 1302.1,509.5 1302.4,510.1 1302.7,509.2 1303.0,509.6 1303.2,509.8 1303.5,509.4 1303.8,509.1 1304.0,508.9 1304.3,508.8 1304.6,509.5 1304.9,509.2 1305.1,509.0 1305.4,508.6 1305.7,508.8 1306.0,510.0 1306.2,509.9 1306.5,509.3 1306.8,509.7 1307.1,509.4 1307.3,509.3 1307.6,508.9 1307.9,508.6 1308.2,509.5 1308.4,509.6 1308.7,508.9 1309.0,509.2 1309.2,509.4 1309.5,509.0 1309.8,509.1 1310.1,508.8 1310.3,508.7 1310.6,509.6 1310.9,509.2 1311.2,509.3 1311.4,509.9 1311.7,509.3 1312.0,509.1 1312.3,508.5 1312.5,508.2 1312.8,508.6 1313.1,509.5 1313.4,509.6 1313.6,508.7 1313.9,508.8 1314.2,509.2 1314.4,508.9 1314.7,508.5 1315.0,508.9 1315.3,509.2 1315.5,509.7 1315.8,509.1 1316.1,509.3 1316.4,509.9 1316.6,509.3 1316.9,509.1 1317.2,508.9 1317.5,509.6 1317.7,509.2 1318.0,508.7 1318.3,509.4 1318.5,509.2 1318.8,508.7 1319.1,508.8 1319.4,509.3 1319.6,509.3 1319.9,508.8 1320.2,509.6 1320.5,509.7 1320.7,509.0 1321.0,508.7 1321.3,508.5 1321.6,509.4 1321.8,508.6 1322.1,509.6 1322.4,509.7 1322.7,509.4 1322.9,509.4 1323.2,508.7 1323.5,508.6 1323.7,509.2 1324.0,509.0 1324.3,509.4 1324.6,509.2 1324.8,509.0 1325.1,509.7 1325.4,508.8 1325.7,509.6 1325.9,508.9 1326.2,508.7 1326.5,508.7 1326.8,509.1 1327.0,509.1 1327.3,509.3 1327.6,508.3 1327.9,508.2 1328.1,508.3 1328.4,509.0 1328.7,509.3 1328.9,508.9 1329.2,508.4 1329.5,509.3 1329.8,509.3 1330.0,509.0 1330.3,509.6 1330.6,508.9 1330.9,509.2 1331.1,510.0 1331.4,509.1 1331.7,509.4 1332.0,508.4 1332.2,508.7 1332.5,509.7 1332.8,510.1 1333.1,510.0 1333.3,508.9 1333.6,508.0 1333.9,508.4 1334.1,509.2 1334.4,507.0 1334.7,508.3 1335.0,508.3 1335.2,509.2 1335.5,508.9 1335.8,509.1 1336.1,509.3 1336.3,508.7 1336.6,508.8 1336.9,508.7 1337.2,508.6 1337.4,509.4 1337.7,509.6 1338.0,509.0 1338.2,509.3 1338.5,509.9 1338.8,509.6 1339.1,509.1 1339.3,509.3 1339.6,508.8 1339.9,508.7 1340.2,508.4 1340.4,508.3 1340.7,509.0 1341.0,508.8 1341.3,508.9 1341.5,507.8 1341.8,509.2 1342.1,509.5 1342.4,508.9 1342.6,509.1 1342.9,508.4" fill="none" stroke="#2a2aff" stroke-width="1.2" stroke-linejoin="round"/>
<rect x="1063.3" y="468.3" width="280.7" height="97.2" fill="none" stroke="#828282" stroke-width="2.1"/>
<text x="1064.8" y="581.2" text-anchor="middle" style="font-family:'DejaVu Serif','Liberation Serif',serif;font-size:10.6px;letter-spacing:0.9px" fill="#545454">0</text>
<text x="1119.5" y="581.2" text-anchor="middle" style="font-family:'DejaVu Serif','Liberation Serif',serif;font-size:10.6px;letter-spacing:0.9px" fill="#545454">200</text>
<text x="1174.2" y="581.2" text-anchor="middle" style="font-family:'DejaVu Serif','Liberation Serif',serif;font-size:10.6px;letter-spacing:0.9px" fill="#545454">400</text>
<text x="1228.9" y="581.2" text-anchor="middle" style="font-family:'DejaVu Serif','Liberation Serif',serif;font-size:10.6px;letter-spacing:0.9px" fill="#545454">600</text>
<text x="1283.6" y="581.2" text-anchor="middle" style="font-family:'DejaVu Serif','Liberation Serif',serif;font-size:10.6px;letter-spacing:0.9px" fill="#545454">800</text>
<text x="1338.4" y="581.2" text-anchor="middle" style="font-family:'DejaVu Serif','Liberation Serif',serif;font-size:10.6px;letter-spacing:0.9px" fill="#545454">1000</text>
<text x="1060.8" y="568.9" text-anchor="end" style="font-family:'DejaVu Serif','Liberation Serif',serif;font-size:10.6px;letter-spacing:0.9px" fill="#545454">0</text>
<text x="1060.8" y="535.9" text-anchor="end" style="font-family:'DejaVu Serif','Liberation Serif',serif;font-size:10.6px;letter-spacing:0.9px" fill="#545454">5000</text>
<text x="1060.8" y="502.9" text-anchor="end" style="font-family:'DejaVu Serif','Liberation Serif',serif;font-size:10.6px;letter-spacing:0.9px" fill="#545454">10000</text>
<rect x="1237.4" y="478.7" width="13.6" height="10.8" fill="#fff" stroke="#ccc" stroke-width="1"/>
<rect x="1238.6" y="480.0" width="11.2" height="8.2" fill="#0000ff"/>
<text x="1335.9" y="488.0" text-anchor="end" style="font-family:'DejaVu Serif','Liberation Serif',serif;font-size:11.4px;letter-spacing:0.36px" fill="#8a8a8a">aida02 3.2.W</text>
<path d="M1332.1 469.0L1343.1 458.0L1354.1 469.0L1343.1 480.0z" fill="#ff0000"/>
</g>
<g>
<path d="M1591.8 469.6V564.7" stroke="#e7e7e7" stroke-width="1.2"/>
<path d="M1646.5 469.6V564.7" stroke="#e7e7e7" stroke-width="1.2"/>
<path d="M1701.3 469.6V564.7" stroke="#e7e7e7" stroke-width="1.2"/>
<path d="M1756.0 469.6V564.7" stroke="#e7e7e7" stroke-width="1.2"/>
<path d="M1810.7 469.6V564.7" stroke="#e7e7e7" stroke-width="1.2"/>
<path d="M1537.1 534.4H1815.9" stroke="#e7e7e7" stroke-width="1.2"/>
<path d="M1537.1 504.0H1815.9" stroke="#e7e7e7" stroke-width="1.2"/>
<path d="M1537.1 473.7H1815.9" stroke="#e7e7e7" stroke-width="1.2"/>
<polyline points="1537.1,511.7 1537.4,511.7 1537.6,512.0 1537.9,511.1 1538.2,511.2 1538.5,510.7 1538.7,511.8 1539.0,512.1 1539.3,511.0 1539.6,512.0 1539.8,511.8 1540.1,511.5 1540.4,511.8 1540.7,512.4 1540.9,511.9 1541.2,511.3 1541.5,511.3 1541.8,511.7 1542.0,510.8 1542.3,510.7 1542.6,511.0 1542.8,511.4 1543.1,511.1 1543.4,511.4 1543.7,511.6 1543.9,511.9 1544.2,511.4 1544.5,511.2 1544.8,511.3 1545.0,511.0 1545.3,511.7 1545.6,511.5 1545.9,511.4 1546.1,511.9 1546.4,511.8 1546.7,511.7 1546.9,511.5 1547.2,511.8 1547.5,512.4 1547.8,513.0 1548.0,512.0 1548.3,511.1 1548.6,510.5 1548.9,510.8 1549.1,511.7 1549.4,512.2 1549.7,511.4 1550.0,511.4 1550.2,511.8 1550.5,511.9 1550.8,511.7 1551.1,512.2 1551.3,511.6 1551.6,510.8 1551.9,511.5 1552.1,511.8 1552.4,512.1 1552.7,511.2 1553.0,511.8 1553.2,512.0 1553.5,511.8 1553.8,511.8 1554.1,511.7 1554.3,511.4 1554.6,511.8 1554.9,512.3 1555.2,512.0 1555.4,512.4 1555.7,512.1 1556.0,511.4 1556.3,511.7 1556.5,511.5 1556.8,511.5 1557.1,511.8 1557.3,511.8 1557.6,511.0 1557.9,511.3 1558.2,511.6 1558.4,511.6 1558.7,511.9 1559.0,511.6 1559.3,511.7 1559.5,511.3 1559.8,511.5 1560.1,511.6 1560.4,510.8 1560.6,511.5 1560.9,511.3 1561.2,511.9 1561.5,510.7 1561.7,511.8 1562.0,511.8 1562.3,511.9 1562.5,511.8 1562.8,512.3 1563.1,512.1 1563.4,511.5 1563.6,511.6 1563.9,511.1 1564.2,511.7 1564.5,511.7 1564.7,511.0 1565.0,511.5 1565.3,511.5 1565.6,511.2 1565.8,511.6 1566.1,512.0 1566.4,511.7 1566.6,511.5 1566.9,512.0 1567.2,512.0 1567.5,511.3 1567.7,510.6 1568.0,511.4 1568.3,510.6 1568.6,510.9 1568.8,511.6 1569.1,511.7 1569.4,512.0 1569.7,511.2 1569.9,510.8 1570.2,511.6 1570.5,511.9 1570.8,511.3 1571.0,511.4 1571.3,512.1 1571.6,511.9 1571.8,511.8 1572.1,511.6 1572.4,511.4 1572.7,511.4 1572.9,510.9 1573.2,511.8 1573.5,511.8 1573.8,511.9 1574.0,511.8 1574.3,511.4 1574.6,511.0 1574.9,511.1 1575.1,511.5 1575.4,511.9 1575.7,511.8 1576.0,510.5 1576.2,510.8 1576.5,511.2 1576.8,512.2 1577.0,511.9 1577.3,511.9 1577.6,512.5 1577.9,510.9 1578.1,512.1 1578.4,511.7 1578.7,511.0 1579.0,511.6 1579.2,511.2 1579.5,510.6 1579.8,511.3 1580.1,511.8 1580.3,511.3 1580.6,511.4 1580.9,511.8 1581.1,511.5 1581.4,511.9 1581.7,511.4 1582.0,511.3 1582.2,510.6 1582.5,511.9 1582.8,512.6 1583.1,512.2 1583.3,512.0 1583.6,511.4 1583.9,511.4 1584.2,512.4 1584.4,512.2 1584.7,511.4 1585.0,512.4 1585.3,511.9 1585.5,512.2 1585.8,512.0 1586.1,511.5 1586.3,510.8 1586.6,511.3 1586.9,511.8 1587.2,511.9 1587.4,511.6 1587.7,511.6 1588.0,511.9 1588.3,511.6 1588.5,511.5 1588.8,511.7 1589.1,512.1 1589.4,511.8 1589.6,511.8 1589.9,511.9 1590.2,512.0 1590.5,511.9 1590.7,512.0 1591.0,511.6 1591.3,511.4 1591.5,494.5 1591.8,493.8 1592.1,494.0 1592.4,479.0 1592.6,479.3 1592.9,478.8 1593.2,479.6 1593.5,479.9 1593.7,480.6 1594.0,479.6 1594.3,479.7 1594.6,479.5 1594.8,480.5 1595.1,480.2 1595.4,480.8 1595.7,481.1 1595.9,479.9 1596.2,479.5 1596.5,479.4 1596.7,479.8 1597.0,480.7 1597.3,481.2 1597.6,481.2 1597.8,480.5 1598.1,480.6 1598.4,480.5 1598.7,481.1 1598.9,481.6 1599.2,480.7 1599.5,480.9 1599.8,481.1 1600.0,481.4 1600.3,481.0 1600.6,481.6 1600.8,481.2 1601.1,481.8 1601.4,480.9 1601.7,481.9 1601.9,481.5 1602.2,481.4 1602.5,481.1 1602.8,482.1 1603.0,481.7 1603.3,482.4 1603.6,481.6 1603.9,482.0 1604.1,481.6 1604.4,482.0 1604.7,481.5 1605.0,481.4 1605.2,482.5 1605.5,482.0 1605.8,480.9 1606.0,481.3 1606.3,482.4 1606.6,483.3 1606.9,482.8 1607.1,482.9 1607.4,483.2 1607.7,482.3 1608.0,482.3 1608.2,482.3 1608.5,483.0 1608.8,502.6 1609.1,503.0 1609.3,503.6 1609.6,511.5 1609.9,511.8 1610.2,511.6 1610.4,511.8 1610.7,511.8 1611.0,511.2 1611.2,511.1 1611.5,511.7 1611.8,511.7 1612.1,511.7 1612.3,511.6 1612.6,511.1 1612.9,512.1 1613.2,511.5 1613.4,511.4 1613.7,511.5 1614.0,511.0 1614.3,512.0 1614.5,511.8 1614.8,511.3 1615.1,512.0 1615.4,512.4 1615.6,512.2 1615.9,511.8 1616.2,511.0 1616.4,510.9 1616.7,511.7 1617.0,511.3 1617.3,511.8 1617.5,511.9 1617.8,511.2 1618.1,511.0 1618.4,511.3 1618.6,511.1 1618.9,511.1 1619.2,511.4 1619.5,511.6 1619.7,511.7 1620.0,511.6 1620.3,511.9 1620.5,511.4 1620.8,511.4 1621.1,511.6 1621.4,512.0 1621.6,512.2 1621.9,512.0 1622.2,512.2 1622.5,512.0 1622.7,512.4 1623.0,511.9 1623.3,512.1 1623.6,512.0 1623.8,511.8 1624.1,512.0 1624.4,511.3 1624.7,511.1 1624.9,512.4 1625.2,512.0 1625.5,512.2 1625.7,512.5 1626.0,511.6 1626.3,510.9 1626.6,512.1 1626.8,512.1 1627.1,511.6 1627.4,511.7 1627.7,512.2 1627.9,511.7 1628.2,512.1 1628.5,511.6 1628.8,511.4 1629.0,512.3 1629.3,512.1 1629.6,512.7 1629.9,511.3 1630.1,511.3 1630.4,511.3 1630.7,511.5 1630.9,511.4 1631.2,511.0 1631.5,512.3 1631.8,511.4 1632.0,511.8 1632.3,511.7 1632.6,511.7 1632.9,511.7 1633.1,510.7 1633.4,511.9 1633.7,510.9 1634.0,511.6 1634.2,511.6 1634.5,511.6 1634.8,512.4 1635.0,512.5 1635.3,512.3 1635.6,512.1 1635.9,512.1 1636.1,512.2 1636.4,511.6 1636.7,511.3 1637.0,511.2 1637.2,511.8 1637.5,511.9 1637.8,511.7 1638.1,511.9 1638.3,512.1 1638.6,511.7 1638.9,511.8 1639.2,512.1 1639.4,511.2 1639.7,511.3 1640.0,512.1 1640.2,511.4 1640.5,511.9 1640.8,512.7 1641.1,512.6 1641.3,511.5 1641.6,512.5 1641.9,512.2 1642.2,512.0 1642.4,511.7 1642.7,512.4 1643.0,512.8 1643.3,512.4 1643.5,511.5 1643.8,511.9 1644.1,512.0 1644.4,512.5 1644.6,512.6 1644.9,512.1 1645.2,511.9 1645.4,512.1 1645.7,511.6 1646.0,512.0 1646.3,512.1 1646.5,511.1 1646.8,511.3 1647.1,512.1 1647.4,512.1 1647.6,511.9 1647.9,512.1 1648.2,512.3 1648.5,512.8 1648.7,512.6 1649.0,511.8 1649.3,511.6 1649.6,511.9 1649.8,512.2 1650.1,512.4 1650.4,512.7 1650.6,512.2 1650.9,512.6 1651.2,512.4 1651.5,512.1 1651.7,511.2 1652.0,512.0 1652.3,511.8 1652.6,511.5 1652.8,511.1 1653.1,510.9 1653.4,512.0 1653.7,511.7 1653.9,512.9 1654.2,511.7 1654.5,511.9 1654.7,512.0 1655.0,512.1 1655.3,511.8 1655.6,511.8 1655.8,512.6 1656.1,512.9 1656.4,513.2 1656.7,512.2 1656.9,511.8 1657.2,511.3 1657.5,511.9 1657.8,512.1 1658.0,512.2 1658.3,511.4 1658.6,512.4 1658.9,512.2 1659.1,512.9 1659.4,512.3 1659.7,512.6 1659.9,512.5 1660.2,511.7 1660.5,512.6 1660.8,513.0 1661.0,513.4 1661.3,513.0 1661.6,513.0 1661.9,513.1 1662.1,512.5 1662.4,512.5 1662.7,511.8 1663.0,512.3 1663.2,513.0 1663.5,511.8 1663.8,512.6 1664.1,512.8 1664.3,513.0 1664.6,512.1 1664.9,512.0 1665.1,512.1 1665.4,511.6 1665.7,512.7 1666.0,512.1 1666.2,511.6 1666.5,512.3 1666.8,511.7 1667.1,511.7 1667.3,512.2 1667.6,512.9 1667.9,511.8 1668.2,511.2 1668.4,511.5 1668.7,512.6 1669.0,513.0 1669.2,513.5 1669.5,512.6 1669.8,512.7 1670.1,511.7 1670.3,512.0 1670.6,511.4 1670.9,511.9 1671.2,511.9 1671.4,512.6 1671.7,512.0 1672.0,512.0 1672.3,511.9 1672.5,512.1 1672.8,512.6 1673.1,512.0 1673.4,511.8 1673.6,512.2 1673.9,512.5 1674.2,511.5 1674.4,512.5 1674.7,511.9 1675.0,511.6 1675.3,511.3 1675.5,512.9 1675.8,512.3 1676.1,512.5 1676.4,512.0 1676.6,512.1 1676.9,511.8 1677.2,512.1 1677.5,512.3 1677.7,512.3 1678.0,511.7 1678.3,511.7 1678.6,512.2 1678.8,511.6 1679.1,511.1 1679.4,511.8 1679.6,512.4 1679.9,511.8 1680.2,511.8 1680.5,511.9 1680.7,511.9 1681.0,512.2 1681.3,511.7 1681.6,512.1 1681.8,513.2 1682.1,512.5 1682.4,511.9 1682.7,512.0 1682.9,511.8 1683.2,512.1 1683.5,512.6 1683.8,512.1 1684.0,511.7 1684.3,512.3 1684.6,511.9 1684.8,512.0 1685.1,512.9 1685.4,512.2 1685.7,512.6 1685.9,512.3 1686.2,513.4 1686.5,512.1 1686.8,512.3 1687.0,512.0 1687.3,512.3 1687.6,512.7 1687.9,512.3 1688.1,512.7 1688.4,512.2 1688.7,511.8 1688.9,512.2 1689.2,512.8 1689.5,511.9 1689.8,512.6 1690.0,512.3 1690.3,512.2 1690.6,512.2 1690.9,512.9 1691.1,512.1 1691.4,512.5 1691.7,512.3 1692.0,511.7 1692.2,511.6 1692.5,512.1 1692.8,512.3 1693.1,511.6 1693.3,512.0 1693.6,512.8 1693.9,512.6 1694.1,512.4 1694.4,512.3 1694.7,512.3 1695.0,512.6 1695.2,512.5 1695.5,512.9 1695.8,512.3 1696.1,512.5 1696.3,512.7 1696.6,512.2 1696.9,512.5 1697.2,512.2 1697.4,511.9 1697.7,511.9 1698.0,512.4 1698.3,512.1 1698.5,512.5 1698.8,512.4 1699.1,512.4 1699.3,512.5 1699.6,512.8 1699.9,512.7 1700.2,511.7 1700.4,512.3 1700.7,511.8 1701.0,512.4 1701.3,512.4 1701.5,512.3 1701.8,512.7 1702.1,512.3 1702.4,511.8 1702.6,511.9 1702.9,512.6 1703.2,512.3 1703.4,512.0 1703.7,512.1 1704.0,512.5 1704.3,512.4 1704.5,512.5 1704.8,511.9 1705.1,511.4 1705.4,512.4 1705.6,512.1 1705.9,511.8 1706.2,512.6 1706.5,512.7 1706.7,512.7 1707.0,512.6 1707.3,512.5 1707.6,512.8 1707.8,513.3 1708.1,512.4 1708.4,512.4 1708.6,511.4 1708.9,512.2 1709.2,512.8 1709.5,512.6 1709.7,512.1 1710.0,512.4 1710.3,512.8 1710.6,512.2 1710.8,512.1 1711.1,512.2 1711.4,512.3 1711.7,512.5 1711.9,512.3 1712.2,512.4 1712.5,512.6 1712.8,512.7 1713.0,512.7 1713.3,512.3 1713.6,512.4 1713.8,511.6 1714.1,512.1 1714.4,512.0 1714.7,512.1 1714.9,513.1 1715.2,512.4 1715.5,512.3 1715.8,512.2 1716.0,512.2 1716.3,512.4 1716.6,512.2 1716.9,511.5 1717.1,512.7 1717.4,512.9 1717.7,512.4 1718.0,512.4 1718.2,512.8 1718.5,513.0 1718.8,513.2 1719.0,512.9 1719.3,512.6 1719.6,512.9 1719.9,512.0 1720.1,512.7 1720.4,512.4 1720.7,511.7 1721.0,511.6 1721.2,512.4 1721.5,512.2 1721.8,512.4 1722.1,512.2 1722.3,511.8 1722.6,512.4 1722.9,512.5 1723.1,511.7 1723.4,511.7 1723.7,512.3 1724.0,512.2 1724.2,512.2 1724.5,512.2 1724.8,512.6 1725.1,513.3 1725.3,512.6 1725.6,512.9 1725.9,512.4 1726.2,511.7 1726.4,511.5 1726.7,511.1 1727.0,512.3 1727.3,512.4 1727.5,513.4 1727.8,512.4 1728.1,511.8 1728.3,511.6 1728.6,511.8 1728.9,511.9 1729.2,512.1 1729.4,511.6 1729.7,512.3 1730.0,512.5 1730.3,513.2 1730.5,512.7 1730.8,512.0 1731.1,512.0 1731.4,512.6 1731.6,511.8 1731.9,511.6 1732.2,512.7 1732.5,513.1 1732.7,512.0 1733.0,512.2 1733.3,512.8 1733.5,512.3 1733.8,512.4 1734.1,512.7 1734.4,511.8 1734.6,512.7 1734.9,513.4 1735.2,512.2 1735.5,512.7 1735.7,512.8 1736.0,512.3 1736.3,512.0 1736.6,512.3 1736.8,512.3 1737.1,512.2 1737.4,511.6 1737.6,511.6 1737.9,512.2 1738.2,511.9 1738.5,511.8 1738.7,512.2 1739.0,512.0 1739.3,512.5 1739.6,511.7 1739.8,513.0 1740.1,513.4 1740.4,512.9 1740.7,512.7 1740.9,512.1 1741.2,512.2 1741.5,513.0 1741.8,512.1 1742.0,512.4 1742.3,512.2 1742.6,512.3 1742.8,512.0 1743.1,512.3 1743.4,512.7 1743.7,513.3 1743.9,512.3 1744.2,512.7 1744.5,512.4 1744.8,512.8 1745.0,512.6 1745.3,512.6 1745.6,511.9 1745.9,511.6 1746.1,512.8 1746.4,512.7 1746.7,512.2 1747.0,512.2 1747.2,512.3 1747.5,512.8 1747.8,512.1 1748.0,511.7 1748.3,512.4 1748.6,512.4 1748.9,512.4 1749.1,511.7 1749.4,511.7 1749.7,512.1 1750.0,512.1 1750.2,511.6 1750.5,512.3 1750.8,512.9 1751.1,513.2 1751.3,512.3 1751.6,512.5 1751.9,511.6 1752.2,511.1 1752.4,512.4 1752.7,512.7 1753.0,512.5 1753.2,512.4 1753.5,512.5 1753.8,512.4 1754.1,512.7 1754.3,512.4 1754.6,512.4 1754.9,511.9 1755.2,512.4 1755.4,512.6 1755.7,511.9 1756.0,511.3 1756.3,512.0 1756.5,512.7 1756.8,512.3 1757.1,511.9 1757.3,511.8 1757.6,512.1 1757.9,512.1 1758.2,512.4 1758.4,512.3 1758.7,512.7 1759.0,512.0 1759.3,512.1 1759.5,512.6 1759.8,512.6 1760.1,512.7 1760.4,512.7 1760.6,512.1 1760.9,512.4 1761.2,512.3 1761.5,513.2 1761.7,512.8 1762.0,513.0 1762.3,512.3 1762.5,512.8 1762.8,512.7 1763.1,512.4 1763.4,512.3 1763.6,512.6 1763.9,511.5 1764.2,511.5 1764.5,511.9 1764.7,512.2 1765.0,512.2 1765.3,511.9 1765.6,511.7 1765.8,511.6 1766.1,512.0 1766.4,512.2 1766.7,512.9 1766.9,513.3 1767.2,512.1 1767.5,512.6 1767.7,512.5 1768.0,512.1 1768.3,511.5 1768.6,512.0 1768.8,511.8 1769.1,512.2 1769.4,512.8 1769.7,512.7 1769.9,512.3 1770.2,511.9 1770.5,512.1 1770.8,512.7 1771.0,513.0 1771.3,512.2 1771.6,512.0 1771.9,511.7 1772.1,511.4 1772.4,512.4 1772.7,512.1 1772.9,512.3 1773.2,512.9 1773.5,511.8 1773.8,512.1 1774.0,511.7 1774.3,511.9 1774.6,513.0 1774.9,512.8 1775.1,512.1 1775.4,512.8 1775.7,512.7 1776.0,512.4 1776.2,512.6 1776.5,511.6 1776.8,512.6 1777.0,511.9 1777.3,512.4 1777.6,512.2 1777.9,513.2 1778.1,512.6 1778.4,512.0 1778.7,512.6 1779.0,512.0 1779.2,510.7 1779.5,512.1 1779.8,512.0 1780.1,512.3 1780.3,512.0 1780.6,511.8 1780.9,512.0 1781.2,513.0 1781.4,512.0 1781.7,512.3 1782.0,512.9 1782.2,512.2 1782.5,512.4 1782.8,513.5 1783.1,512.9 1783.3,512.3 1783.6,512.3 1783.9,512.2 1784.2,512.1 1784.4,512.8 1784.7,512.5 1785.0,512.0 1785.3,512.2 1785.5,512.0 1785.8,512.3 1786.1,511.8 1786.4,511.8 1786.6,511.8 1786.9,512.7 1787.2,512.7 1787.4,512.0 1787.7,511.9 1788.0,512.4 1788.3,511.8 1788.5,512.5 1788.8,512.4 1789.1,512.1 1789.4,512.7 1789.6,512.8 1789.9,512.8 1790.2,512.6 1790.5,513.0 1790.7,512.2 1791.0,512.5 1791.3,512.3 1791.5,512.5 1791.8,512.6 1792.1,512.1 1792.4,512.5 1792.6,513.1 1792.9,512.7 1793.2,512.7 1793.5,512.6 1793.7,513.6 1794.0,512.9 1794.3,512.7 1794.6,512.4 1794.8,511.9 1795.1,512.6 1795.4,512.9 1795.7,511.6 1795.9,511.9 1796.2,511.5 1796.5,512.1 1796.7,512.0 1797.0,512.1 1797.3,511.7 1797.6,512.1 1797.8,512.6 1798.1,512.0 1798.4,512.5 1798.7,513.0 1798.9,512.5 1799.2,513.1 1799.5,512.8 1799.8,511.7 1800.0,512.6 1800.3,511.7 1800.6,511.9 1800.9,511.9 1801.1,511.5 1801.4,511.8 1801.7,512.1 1801.9,512.4 1802.2,512.2 1802.5,512.6 1802.8,512.9 1803.0,513.3 1803.3,513.4 1803.6,512.2 1803.9,512.1 1804.1,512.0 1804.4,512.0 1804.7,512.8 1805.0,512.1 1805.2,512.3 1805.5,512.9 1805.8,512.4 1806.1,512.8 1806.3,512.7 1806.6,512.0 1806.9,511.7 1807.1,512.6 1807.4,512.8 1807.7,512.5 1808.0,512.7 1808.2,512.3 1808.5,512.4 1808.8,512.4 1809.1,512.1 1809.3,512.4 1809.6,512.3 1809.9,511.4 1810.2,511.6 1810.4,511.8 1810.7,512.1 1811.0,512.0 1811.2,512.1 1811.5,512.0 1811.8,512.9 1812.1,512.0 1812.3,511.6 1812.6,512.3 1812.9,512.5 1813.2,512.0 1813.4,512.2 1813.7,511.9 1814.0,512.0 1814.3,512.6 1814.5,512.4 1814.8,512.8 1815.1,512.1 1815.4,512.2 1815.6,512.9 1815.9,512.3" fill="none" stroke="#2a2aff" stroke-width="1.2" stroke-linejoin="round"/>
<rect x="1536.3" y="468.3" width="280.7" height="97.2" fill="none" stroke="#828282" stroke-width="2.1"/>
<text x="1537.8" y="581.2" text-anchor="middle" style="font-family:'DejaVu Serif','Liberation Serif',serif;font-size:10.6px;letter-spacing:0.9px" fill="#545454">0</text>
<text x="1592.5" y="581.2" text-anchor="middle" style="font-family:'DejaVu Serif','Liberation Serif',serif;font-size:10.6px;letter-spacing:0.9px" fill="#545454">200</text>
<text x="1647.2" y="581.2" text-anchor="middle" style="font-family:'DejaVu Serif','Liberation Serif',serif;font-size:10.6px;letter-spacing:0.9px" fill="#545454">400</text>
<text x="1701.9" y="581.2" text-anchor="middle" style="font-family:'DejaVu Serif','Liberation Serif',serif;font-size:10.6px;letter-spacing:0.9px" fill="#545454">600</text>
<text x="1756.6" y="581.2" text-anchor="middle" style="font-family:'DejaVu Serif','Liberation Serif',serif;font-size:10.6px;letter-spacing:0.9px" fill="#545454">800</text>
<text x="1811.4" y="581.2" text-anchor="middle" style="font-family:'DejaVu Serif','Liberation Serif',serif;font-size:10.6px;letter-spacing:0.9px" fill="#545454">1000</text>
<text x="1533.8" y="568.9" text-anchor="end" style="font-family:'DejaVu Serif','Liberation Serif',serif;font-size:10.6px;letter-spacing:0.9px" fill="#545454">0</text>
<text x="1533.8" y="538.6" text-anchor="end" style="font-family:'DejaVu Serif','Liberation Serif',serif;font-size:10.6px;letter-spacing:0.9px" fill="#545454">5000</text>
<text x="1533.8" y="508.2" text-anchor="end" style="font-family:'DejaVu Serif','Liberation Serif',serif;font-size:10.6px;letter-spacing:0.9px" fill="#545454">10000</text>
<text x="1533.8" y="477.9" text-anchor="end" style="font-family:'DejaVu Serif','Liberation Serif',serif;font-size:10.6px;letter-spacing:0.9px" fill="#545454">15000</text>
<rect x="1710.4" y="478.7" width="13.6" height="10.8" fill="#fff" stroke="#ccc" stroke-width="1"/>
<rect x="1711.6" y="480.0" width="11.2" height="8.2" fill="#0000ff"/>
<text x="1808.9" y="488.0" text-anchor="end" style="font-family:'DejaVu Serif','Liberation Serif',serif;font-size:11.4px;letter-spacing:0.36px" fill="#8a8a8a">aida02 3.3.W</text>
<path d="M1805.1 469.0L1816.1 458.0L1827.1 469.0L1816.1 480.0z" fill="#ff0000"/>
</g>
<g>
<path d="M172.8 606.6V700.8" stroke="#e7e7e7" stroke-width="1.2"/>
<path d="M227.5 606.6V700.8" stroke="#e7e7e7" stroke-width="1.2"/>
<path d="M282.3 606.6V700.8" stroke="#e7e7e7" stroke-width="1.2"/>
<path d="M337.0 606.6V700.8" stroke="#e7e7e7" stroke-width="1.2"/>
<path d="M391.7 606.6V700.8" stroke="#e7e7e7" stroke-width="1.2"/>
<path d="M118.1 668.3H396.9" stroke="#e7e7e7" stroke-width="1.2"/>
<path d="M118.1 635.8H396.9" stroke="#e7e7e7" stroke-width="1.2"/>
<polyline points="118.1,644.5 118.4,645.2 118.6,645.2 118.9,645.3 119.2,645.2 119.5,645.6 119.7,645.5 120.0,645.7 120.3,644.5 120.6,644.8 120.8,644.4 121.1,644.6 121.4,644.4 121.7,644.2 121.9,644.4 122.2,644.0 122.5,644.3 122.8,645.3 123.0,644.9 123.3,644.3 123.6,643.9 123.8,644.7 124.1,644.8 124.4,644.7 124.7,644.4 124.9,645.3 125.2,645.8 125.5,645.0 125.8,644.6 126.0,644.8 126.3,645.4 126.6,644.7 126.9,644.2 127.1,644.5 127.4,644.4 127.7,644.9 127.9,645.4 128.2,645.4 128.5,644.7 128.8,645.6 129.0,645.5 129.3,645.7 129.6,644.8 129.9,644.6 130.1,644.2 130.4,645.0 130.7,644.9 131.0,644.4 131.2,645.1 131.5,644.7 131.8,644.3 132.1,644.3 132.3,644.7 132.6,644.7 132.9,644.6 133.1,645.0 133.4,643.7 133.7,643.8 134.0,644.3 134.2,644.9 134.5,644.1 134.8,645.2 135.1,644.7 135.3,644.0 135.6,643.8 135.9,643.9 136.2,644.7 136.4,644.5 136.7,644.2 137.0,644.8 137.3,645.1 137.5,645.2 137.8,644.3 138.1,645.2 138.3,644.4 138.6,645.0 138.9,644.6 139.2,645.2 139.4,644.3 139.7,644.6 140.0,644.3 140.3,644.2 140.5,644.6 140.8,645.1 141.1,644.8 141.4,645.5 141.6,645.1 141.9,645.5 142.2,645.6 142.5,645.0 142.7,645.4 143.0,644.9 143.3,645.1 143.5,644.8 143.8,645.1 144.1,644.4 144.4,644.5 144.6,644.1 144.9,644.2 145.2,644.5 145.5,644.7 145.7,644.6 146.0,644.2 146.3,644.5 146.6,645.2 146.8,645.3 147.1,644.6 147.4,644.9 147.6,645.0 147.9,645.0 148.2,644.9 148.5,644.6 148.7,644.1 149.0,645.1 149.3,645.1 149.6,645.9 149.8,645.2 150.1,646.1 150.4,645.2 150.7,645.2 150.9,645.2 151.2,644.6 151.5,645.5 151.8,645.2 152.0,645.2 152.3,645.3 152.6,645.4 152.8,646.0 153.1,645.0 153.4,644.7 153.7,644.9 153.9,644.5 154.2,644.4 154.5,645.5 154.8,645.0 155.0,644.7 155.3,645.0 155.6,644.8 155.9,645.7 156.1,645.8 156.4,645.7 156.7,645.0 157.0,645.0 157.2,645.0 157.5,644.6 157.8,644.8 158.0,645.1 158.3,644.3 158.6,644.7 158.9,644.8 159.1,645.0 159.4,644.2 159.7,644.6 160.0,644.6 160.2,644.7 160.5,645.0 160.8,644.8 161.1,644.5 161.3,644.1 161.6,644.5 161.9,645.4 162.1,644.8 162.4,645.7 162.7,645.7 163.0,645.0 163.2,644.5 163.5,645.0 163.8,644.9 164.1,645.1 164.3,645.3 164.6,644.4 164.9,644.5 165.2,644.1 165.4,644.0 165.7,644.6 166.0,645.5 166.3,644.8 166.5,644.3 166.8,644.3 167.1,643.9 167.3,643.6 167.6,644.4 167.9,643.8 168.2,644.5 168.4,644.9 168.7,645.4 169.0,645.6 169.3,644.9 169.5,645.3 169.8,645.0 170.1,645.1 170.4,644.9 170.6,644.5 170.9,644.5 171.2,644.0 171.5,644.7 171.7,644.1 172.0,644.9 172.3,644.7 172.5,645.3 172.8,629.6 173.1,629.5 173.4,629.3 173.6,615.8 173.9,615.9 174.2,615.8 174.5,615.7 174.7,616.1 175.0,616.0 175.3,616.5 175.6,616.4 175.8,615.6 176.1,616.7 176.4,617.0 176.7,617.0 176.9,615.8 177.2,616.5 177.5,616.7 177.7,617.6 178.0,616.9 178.3,617.2 178.6,617.4 178.8,617.9 179.1,617.3 179.4,617.5 179.7,618.3 179.9,618.6 180.2,617.6 180.5,617.9 180.8,617.8 181.0,617.6 181.3,617.5 181.6,617.8 181.8,618.0 182.1,617.7 182.4,616.4 182.7,617.2 182.9,618.3 183.2,617.8 183.5,617.9 183.8,618.1 184.0,617.9 184.3,619.3 184.6,618.9 184.9,618.2 185.1,618.0 185.4,618.2 185.7,618.4 186.0,619.6 186.2,619.2 186.5,619.2 186.8,618.3 187.0,618.2 187.3,619.2 187.6,619.5 187.9,619.0 188.1,637.1 188.4,637.9 188.7,637.8 189.0,645.6 189.2,645.4 189.5,645.4 189.8,644.8 190.1,644.8 190.3,644.3 190.6,644.5 190.9,644.3 191.2,644.9 191.4,644.4 191.7,645.0 192.0,645.6 192.2,645.2 192.5,644.5 192.8,644.9 193.1,645.9 193.3,644.7 193.6,645.3 193.9,644.7 194.2,645.4 194.4,645.3 194.7,644.4 195.0,644.5 195.3,645.4 195.5,645.8 195.8,644.7 196.1,645.4 196.4,645.8 196.6,645.5 196.9,645.1 197.2,644.9 197.4,645.1 197.7,645.4 198.0,645.3 198.3,644.9 198.5,644.7 198.8,644.3 199.1,645.7 199.4,644.6 199.6,645.2 199.9,645.2 200.2,645.1 200.5,644.9 200.7,644.9 201.0,645.0 201.3,645.0 201.5,645.1 201.8,644.8 202.1,644.6 202.4,644.9 202.6,644.7 202.9,645.0 203.2,644.9 203.5,644.8 203.7,644.8 204.0,645.0 204.3,644.8 204.6,645.3 204.8,645.6 205.1,645.1 205.4,645.2 205.7,645.2 205.9,645.3 206.2,644.8 206.5,645.0 206.7,644.9 207.0,643.9 207.3,644.0 207.6,645.3 207.8,645.0 208.1,645.0 208.4,644.5 208.7,644.8 208.9,644.7 209.2,645.1 209.5,645.3 209.8,644.7 210.0,646.0 210.3,645.8 210.6,645.4 210.9,644.8 211.1,645.1 211.4,645.5 211.7,645.5 211.9,644.7 212.2,644.8 212.5,644.6 212.8,644.7 213.0,645.0 213.3,644.9 213.6,644.4 213.9,645.0 214.1,644.6 214.4,645.0 214.7,645.4 215.0,645.1 215.2,644.8 215.5,645.2 215.8,645.8 216.0,645.0 216.3,645.1 216.6,645.4 216.9,645.3 217.1,644.5 217.4,645.1 217.7,645.3 218.0,645.5 218.2,645.0 218.5,645.9 218.8,645.3 219.1,645.0 219.3,644.8 219.6,645.5 219.9,645.3 220.2,646.3 220.4,645.6 220.7,645.6 221.0,645.0 221.2,644.5 221.5,645.6 221.8,646.1 222.1,645.6 222.3,645.8 222.6,645.9 222.9,645.9 223.2,644.2 223.4,645.2 223.7,645.8 224.0,645.5 224.3,645.6 224.5,645.9 224.8,645.8 225.1,645.3 225.4,645.0 225.6,644.7 225.9,645.6 226.2,645.1 226.4,645.2 226.7,645.6 227.0,645.5 227.3,644.5 227.5,645.2 227.8,644.9 228.1,645.1 228.4,645.3 228.6,645.5 228.9,645.2 229.2,644.2 229.5,645.1 229.7,644.8 230.0,645.5 230.3,646.0 230.6,645.8 230.8,645.6 231.1,646.3 231.4,645.3 231.6,645.8 231.9,644.8 232.2,644.9 232.5,645.7 232.7,645.2 233.0,645.3 233.3,646.4 233.6,646.1 233.8,646.2 234.1,645.6 234.4,645.5 234.7,645.5 234.9,645.6 235.2,645.8 235.5,645.7 235.7,646.1 236.0,645.0 236.3,645.7 236.6,644.6 236.8,645.8 237.1,646.3 237.4,646.2 237.7,646.2 237.9,646.7 238.2,646.2 238.5,645.5 238.8,645.5 239.0,645.3 239.3,644.4 239.6,644.8 239.9,645.3 240.1,645.5 240.4,645.0 240.7,645.3 240.9,645.1 241.2,645.0 241.5,644.5 241.8,644.7 242.0,644.7 242.3,645.0 242.6,645.6 242.9,645.6 243.1,645.5 243.4,645.1 243.7,645.0 244.0,645.6 244.2,645.8 244.5,645.1 244.8,645.7 245.1,645.0 245.3,645.4 245.6,646.1 245.9,646.1 246.1,646.1 246.4,646.2 246.7,646.1 247.0,646.0 247.2,645.8 247.5,646.4 247.8,646.2 248.1,646.0 248.3,646.0 248.6,645.4 248.9,644.9 249.2,645.2 249.4,645.0 249.7,645.8 250.0,645.1 250.2,645.5 250.5,644.9 250.8,645.2 251.1,645.0 251.3,645.3 251.6,644.6 251.9,645.3 252.2,645.7 252.4,645.5 252.7,645.3 253.0,645.4 253.3,645.4 253.5,644.6 253.8,645.8 254.1,644.9 254.4,644.1 254.6,645.7 254.9,646.0 255.2,645.0 255.4,645.6 255.7,645.9 256.0,645.6 256.3,646.3 256.5,645.5 256.8,645.3 257.1,645.7 257.4,645.2 257.6,645.5 257.9,645.3 258.2,644.9 258.5,645.3 258.7,645.7 259.0,645.3 259.3,646.0 259.6,646.4 259.8,647.0 260.1,645.5 260.4,645.4 260.6,645.3 260.9,645.5 261.2,646.1 261.5,645.4 261.7,644.9 262.0,644.6 262.3,644.9 262.6,645.8 262.8,645.0 263.1,645.9 263.4,645.4 263.7,645.9 263.9,644.9 264.2,645.6 264.5,645.5 264.8,644.9 265.0,645.8 265.3,646.0 265.6,645.4 265.8,645.9 266.1,645.6 266.4,645.5 266.7,646.4 266.9,645.9 267.2,646.1 267.5,646.4 267.8,645.5 268.0,645.0 268.3,645.1 268.6,645.5 268.9,645.7 269.1,646.3 269.4,645.1 269.7,645.8 269.9,645.5 270.2,645.3 270.5,645.3 270.8,645.6 271.0,645.7 271.3,646.3 271.6,646.6 271.9,647.0 272.1,645.6 272.4,646.3 272.7,646.0 273.0,646.9 273.2,646.1 273.5,646.4 273.8,646.1 274.1,646.1 274.3,645.4 274.6,646.1 274.9,646.2 275.1,645.9 275.4,645.9 275.7,646.1 276.0,645.9 276.2,646.5 276.5,645.4 276.8,645.3 277.1,645.7 277.3,646.0 277.6,646.2 277.9,645.9 278.2,645.8 278.4,646.3 278.7,646.4 279.0,645.7 279.3,646.5 279.5,646.0 279.8,645.8 280.1,645.9 280.3,646.2 280.6,645.8 280.9,646.4 281.2,646.0 281.4,646.2 281.7,646.6 282.0,645.4 282.3,645.3 282.5,645.3 282.8,646.7 283.1,645.7 283.4,645.6 283.6,645.2 283.9,645.4 284.2,645.3 284.4,645.9 284.7,645.7 285.0,645.9 285.3,646.4 285.5,646.2 285.8,647.0 286.1,645.5 286.4,645.1 286.6,645.1 286.9,645.8 287.2,645.5 287.5,645.7 287.7,645.6 288.0,645.7 288.3,646.0 288.6,645.4 288.8,644.8 289.1,644.9 289.4,646.0 289.6,645.9 289.9,645.3 290.2,645.7 290.5,645.6 290.7,646.7 291.0,646.7 291.3,646.6 291.6,645.7 291.8,645.8 292.1,645.6 292.4,645.9 292.7,645.6 292.9,646.5 293.2,646.4 293.5,646.6 293.8,646.9 294.0,645.8 294.3,646.0 294.6,646.6 294.8,645.7 295.1,645.9 295.4,646.0 295.7,645.8 295.9,646.4 296.2,646.2 296.5,645.7 296.8,645.9 297.0,645.8 297.3,646.2 297.6,646.5 297.9,646.3 298.1,645.9 298.4,646.0 298.7,646.9 299.0,646.7 299.2,646.0 299.5,646.0 299.8,645.7 300.0,646.6 300.3,646.4 300.6,646.7 300.9,646.3 301.1,645.6 301.4,645.0 301.7,645.4 302.0,645.7 302.2,645.9 302.5,646.2 302.8,646.2 303.1,646.5 303.3,645.5 303.6,646.5 303.9,645.9 304.1,646.1 304.4,644.9 304.7,645.1 305.0,645.4 305.2,645.7 305.5,645.5 305.8,645.9 306.1,646.0 306.3,645.3 306.6,646.0 306.9,646.0 307.2,646.1 307.4,646.4 307.7,646.8 308.0,646.3 308.3,646.0 308.5,646.2 308.8,646.6 309.1,646.9 309.3,645.6 309.6,645.7 309.9,646.2 310.2,646.1 310.4,646.2 310.7,646.2 311.0,646.1 311.3,646.2 311.5,646.4 311.8,646.6 312.1,646.3 312.4,646.1 312.6,645.3 312.9,645.8 313.2,645.3 313.5,646.7 313.7,646.9 314.0,646.3 314.3,646.0 314.5,646.1 314.8,646.6 315.1,646.2 315.4,646.5 315.6,645.4 315.9,645.3 316.2,645.8 316.5,647.3 316.7,646.2 317.0,646.2 317.3,645.8 317.6,645.9 317.8,646.1 318.1,645.3 318.4,646.0 318.6,646.4 318.9,646.4 319.2,646.7 319.5,645.5 319.7,646.2 320.0,645.7 320.3,645.6 320.6,645.5 320.8,645.1 321.1,645.0 321.4,645.9 321.7,646.0 321.9,646.4 322.2,647.3 322.5,645.4 322.8,646.5 323.0,645.6 323.3,646.9 323.6,646.3 323.8,645.4 324.1,646.1 324.4,645.8 324.7,646.3 324.9,645.7 325.2,645.4 325.5,645.6 325.8,646.3 326.0,646.7 326.3,645.9 326.6,645.8 326.9,646.1 327.1,645.8 327.4,646.8 327.7,646.7 328.0,647.1 328.2,647.3 328.5,647.0 328.8,647.3 329.0,647.1 329.3,646.4 329.6,646.3 329.9,647.2 330.1,647.4 330.4,646.7 330.7,646.3 331.0,646.7 331.2,646.0 331.5,646.2 331.8,645.2 332.1,645.4 332.3,645.9 332.6,646.0 332.9,646.4 333.2,646.1 333.4,645.8 333.7,645.8 334.0,645.3 334.2,645.7 334.5,646.3 334.8,645.7 335.1,646.7 335.3,646.8 335.6,646.1 335.9,645.9 336.2,646.4 336.4,646.7 336.7,647.4 337.0,647.0 337.3,646.6 337.5,646.9 337.8,646.6 338.1,646.7 338.3,646.3 338.6,645.4 338.9,645.8 339.2,645.4 339.4,645.9 339.7,646.2 340.0,645.8 340.3,645.5 340.5,645.8 340.8,646.0 341.1,645.9 341.4,646.5 341.6,646.4 341.9,646.4 342.2,646.0 342.5,646.8 342.7,646.1 343.0,645.6 343.3,646.1 343.5,646.3 343.8,646.0 344.1,646.2 344.4,646.5 344.6,646.0 344.9,645.6 345.2,646.2 345.5,646.2 345.7,646.2 346.0,646.2 346.3,646.3 346.6,645.4 346.8,645.8 347.1,646.4 347.4,645.8 347.7,646.3 347.9,646.9 348.2,646.9 348.5,646.2 348.7,646.0 349.0,645.9 349.3,646.4 349.6,646.3 349.8,646.8 350.1,646.9 350.4,645.4 350.7,646.1 350.9,646.3 351.2,646.3 351.5,645.9 351.8,645.5 352.0,646.2 352.3,646.1 352.6,645.7 352.9,646.0 353.1,646.1 353.4,646.6 353.7,646.5 353.9,646.8 354.2,645.7 354.5,645.9 354.8,647.0 355.0,647.0 355.3,647.4 355.6,646.4 355.9,646.7 356.1,646.4 356.4,646.6 356.7,646.3 357.0,646.2 357.2,646.6 357.5,646.2 357.8,646.7 358.0,645.9 358.3,645.4 358.6,645.8 358.9,646.2 359.1,646.1 359.4,647.0 359.7,646.4 360.0,645.9 360.2,645.5 360.5,645.7 360.8,646.2 361.1,645.9 361.3,646.3 361.6,646.7 361.9,645.9 362.2,645.9 362.4,645.7 362.7,646.3 363.0,646.6 363.2,645.6 363.5,645.6 363.8,646.1 364.1,646.5 364.3,646.5 364.6,646.1 364.9,647.1 365.2,646.7 365.4,646.8 365.7,647.1 366.0,646.8 366.3,646.8 366.5,646.4 366.8,646.1 367.1,646.3 367.4,646.7 367.6,645.9 367.9,646.0 368.2,645.6 368.4,646.4 368.7,646.4 369.0,646.2 369.3,646.2 369.5,646.8 369.8,646.1 370.1,645.6 370.4,645.9 370.6,646.4 370.9,645.7 371.2,646.3 371.5,645.9 371.7,646.1 372.0,646.6 372.3,646.8 372.5,646.3 372.8,646.0 373.1,645.3 373.4,645.4 373.6,645.8 373.9,646.1 374.2,646.8 374.5,646.2 374.7,646.8 375.0,646.6 375.3,646.5 375.6,646.6 375.8,645.6 376.1,646.0 376.4,645.1 376.7,645.9 376.9,645.7 377.2,646.1 377.5,646.1 377.7,646.9 378.0,646.0 378.3,646.0 378.6,646.0 378.8,645.4 379.1,646.0 379.4,645.5 379.7,646.5 379.9,646.6 380.2,646.2 380.5,646.3 380.8,646.4 381.0,646.8 381.3,645.6 381.6,645.3 381.9,646.3 382.1,645.7 382.4,646.1 382.7,645.9 382.9,646.0 383.2,646.3 383.5,646.5 383.8,647.5 384.0,646.7 384.3,646.2 384.6,646.3 384.9,646.1 385.1,645.9 385.4,646.1 385.7,646.1 386.0,646.1 386.2,645.5 386.5,646.0 386.8,646.1 387.1,646.1 387.3,646.5 387.6,646.2 387.9,645.8 388.1,646.8 388.4,646.4 388.7,646.2 389.0,646.2 389.2,646.0 389.5,646.1 389.8,645.8 390.1,646.3 390.3,646.7 390.6,645.7 390.9,646.5 391.2,646.8 391.4,646.4 391.7,647.5 392.0,646.7 392.2,646.8 392.5,646.2 392.8,645.7 393.1,645.2 393.3,645.7 393.6,646.7 393.9,646.3 394.2,646.7 394.4,646.2 394.7,646.5 395.0,645.6 395.3,646.0 395.5,646.1 395.8,646.8 396.1,647.0 396.4,646.6 396.6,645.8 396.9,645.9" fill="none" stroke="#2a2aff" stroke-width="1.2" stroke-linejoin="round"/>
<rect x="117.3" y="605.3" width="280.7" height="95.6" fill="none" stroke="#828282" stroke-width="2.1"/>
<text x="118.8" y="716.6" text-anchor="middle" style="font-family:'DejaVu Serif','Liberation Serif',serif;font-size:10.6px;letter-spacing:0.9px" fill="#545454">0</text>
<text x="173.5" y="716.6" text-anchor="middle" style="font-family:'DejaVu Serif','Liberation Serif',serif;font-size:10.6px;letter-spacing:0.9px" fill="#545454">200</text>
<text x="228.2" y="716.6" text-anchor="middle" style="font-family:'DejaVu Serif','Liberation Serif',serif;font-size:10.6px;letter-spacing:0.9px" fill="#545454">400</text>
<text x="282.9" y="716.6" text-anchor="middle" style="font-family:'DejaVu Serif','Liberation Serif',serif;font-size:10.6px;letter-spacing:0.9px" fill="#545454">600</text>
<text x="337.6" y="716.6" text-anchor="middle" style="font-family:'DejaVu Serif','Liberation Serif',serif;font-size:10.6px;letter-spacing:0.9px" fill="#545454">800</text>
<text x="392.4" y="716.6" text-anchor="middle" style="font-family:'DejaVu Serif','Liberation Serif',serif;font-size:10.6px;letter-spacing:0.9px" fill="#545454">1000</text>
<text x="114.8" y="705.0" text-anchor="end" style="font-family:'DejaVu Serif','Liberation Serif',serif;font-size:10.6px;letter-spacing:0.9px" fill="#545454">0</text>
<text x="114.8" y="672.5" text-anchor="end" style="font-family:'DejaVu Serif','Liberation Serif',serif;font-size:10.6px;letter-spacing:0.9px" fill="#545454">5000</text>
<text x="114.8" y="640.0" text-anchor="end" style="font-family:'DejaVu Serif','Liberation Serif',serif;font-size:10.6px;letter-spacing:0.9px" fill="#545454">10000</text>
<rect x="291.4" y="615.7" width="13.6" height="10.8" fill="#fff" stroke="#ccc" stroke-width="1"/>
<rect x="292.6" y="617.0" width="11.2" height="8.2" fill="#0000ff"/>
<text x="389.9" y="625.0" text-anchor="end" style="font-family:'DejaVu Serif','Liberation Serif',serif;font-size:11.4px;letter-spacing:0.36px" fill="#8a8a8a">aida02 3.4.W</text>
<path d="M386.1 606.0L397.1 595.0L408.1 606.0L397.1 617.0z" fill="#ff0000"/>
</g>
<g>
<path d="M645.8 606.6V700.8" stroke="#e7e7e7" stroke-width="1.2"/>
<path d="M700.5 606.6V700.8" stroke="#e7e7e7" stroke-width="1.2"/>
<path d="M755.3 606.6V700.8" stroke="#e7e7e7" stroke-width="1.2"/>
<path d="M810.0 606.6V700.8" stroke="#e7e7e7" stroke-width="1.2"/>
<path d="M864.7 606.6V700.8" stroke="#e7e7e7" stroke-width="1.2"/>
<path d="M591.1 668.3H869.9" stroke="#e7e7e7" stroke-width="1.2"/>
<path d="M591.1 635.8H869.9" stroke="#e7e7e7" stroke-width="1.2"/>
<polyline points="591.1,644.1 591.4,644.3 591.6,644.5 591.9,644.5 592.2,644.0 592.5,644.6 592.7,644.4 593.0,644.5 593.3,643.8 593.6,644.1 593.8,644.3 594.1,644.4 594.4,643.7 594.7,644.5 594.9,645.1 595.2,644.9 595.5,643.9 595.8,644.2 596.0,644.1 596.3,643.6 596.6,643.8 596.8,643.5 597.1,643.2 597.4,643.2 597.7,644.3 597.9,643.4 598.2,643.4 598.5,643.7 598.8,643.0 599.0,643.9 599.3,642.7 599.6,643.6 599.9,643.3 600.1,644.2 600.4,643.8 600.7,644.0 600.9,644.6 601.2,644.0 601.5,643.9 601.8,644.5 602.0,643.9 602.3,643.0 602.6,644.3 602.9,644.1 603.1,642.7 603.4,643.4 603.7,642.4 604.0,643.2 604.2,644.1 604.5,644.4 604.8,644.4 605.1,644.6 605.3,643.4 605.6,644.1 605.9,643.5 606.1,643.8 606.4,644.3 606.7,643.3 607.0,643.9 607.2,643.6 607.5,643.3 607.8,643.9 608.1,644.1 608.3,643.7 608.6,643.6 608.9,643.8 609.2,643.7 609.4,643.1 609.7,643.2 610.0,643.8 610.3,643.8 610.5,643.9 610.8,643.0 611.1,643.7 611.3,643.3 611.6,644.3 611.9,644.5 612.2,644.2 612.4,644.4 612.7,643.7 613.0,643.7 613.3,643.4 613.5,643.2 613.8,643.9 614.1,644.5 614.4,644.2 614.6,645.0 614.9,644.4 615.2,644.6 615.5,644.8 615.7,643.6 616.0,644.2 616.3,644.3 616.5,644.9 616.8,644.9 617.1,644.0 617.4,644.0 617.6,643.1 617.9,643.4 618.2,644.3 618.5,644.8 618.7,645.2 619.0,644.7 619.3,643.7 619.6,643.5 619.8,644.2 620.1,643.8 620.4,643.8 620.6,643.5 620.9,643.6 621.2,643.1 621.5,643.4 621.7,643.7 622.0,643.8 622.3,643.8 622.6,643.9 622.8,643.9 623.1,644.1 623.4,644.6 623.7,643.6 623.9,643.6 624.2,644.2 624.5,643.1 624.8,643.6 625.0,644.4 625.3,645.0 625.6,644.6 625.8,644.9 626.1,644.8 626.4,644.7 626.7,644.4 626.9,644.3 627.2,644.1 627.5,643.3 627.8,643.5 628.0,643.9 628.3,643.8 628.6,643.5 628.9,644.7 629.1,644.6 629.4,643.6 629.7,642.9 630.0,643.7 630.2,643.9 630.5,644.4 630.8,644.2 631.0,644.9 631.3,643.7 631.6,643.5 631.9,643.7 632.1,644.3 632.4,644.2 632.7,644.8 633.0,644.2 633.2,644.3 633.5,644.0 633.8,644.1 634.1,644.1 634.3,644.5 634.6,643.5 634.9,643.8 635.1,643.6 635.4,643.8 635.7,643.8 636.0,644.2 636.2,644.2 636.5,644.1 636.8,644.2 637.1,643.6 637.3,643.4 637.6,644.1 637.9,644.3 638.2,643.5 638.4,643.1 638.7,644.1 639.0,644.4 639.3,643.8 639.5,643.6 639.8,644.0 640.1,644.2 640.3,644.9 640.6,644.6 640.9,644.7 641.2,643.9 641.4,644.1 641.7,643.9 642.0,644.1 642.3,644.1 642.5,643.2 642.8,644.4 643.1,643.3 643.4,644.2 643.6,644.0 643.9,643.4 644.2,643.8 644.5,644.4 644.7,644.3 645.0,644.7 645.3,644.1 645.5,644.0 645.8,627.9 646.1,629.1 646.4,629.0 646.6,616.2 646.9,615.5 647.2,616.5 647.5,615.9 647.7,617.0 648.0,616.1 648.3,616.1 648.6,616.5 648.8,616.0 649.1,616.5 649.4,615.6 649.7,615.7 649.9,616.3 650.2,616.4 650.5,617.1 650.7,616.8 651.0,617.2 651.3,617.2 651.6,616.8 651.8,617.4 652.1,617.3 652.4,617.0 652.7,617.3 652.9,617.0 653.2,617.4 653.5,617.3 653.8,616.6 654.0,617.3 654.3,617.7 654.6,618.1 654.8,618.1 655.1,618.3 655.4,618.3 655.7,618.3 655.9,618.0 656.2,617.1 656.5,617.2 656.8,617.2 657.0,617.0 657.3,618.1 657.6,617.5 657.9,618.5 658.1,618.1 658.4,618.3 658.7,618.0 659.0,617.9 659.2,617.6 659.5,617.3 659.8,618.1 660.0,618.5 660.3,619.1 660.6,618.7 660.9,618.0 661.1,619.0 661.4,618.9 661.7,637.5 662.0,637.2 662.2,636.4 662.5,644.4 662.8,644.8 663.1,644.5 663.3,644.2 663.6,644.0 663.9,644.2 664.2,644.1 664.4,644.1 664.7,643.7 665.0,644.0 665.2,644.1 665.5,644.0 665.8,644.0 666.1,643.2 666.3,644.8 666.6,644.3 666.9,644.2 667.2,643.6 667.4,643.3 667.7,644.5 668.0,644.1 668.3,644.7 668.5,643.5 668.8,644.0 669.1,643.5 669.4,644.2 669.6,644.3 669.9,644.4 670.2,643.1 670.4,642.9 670.7,644.1 671.0,644.2 671.3,644.7 671.5,644.4 671.8,644.0 672.1,643.3 672.4,644.2 672.6,644.2 672.9,643.2 673.2,644.0 673.5,644.2 673.7,644.3 674.0,643.9 674.3,644.0 674.5,644.9 674.8,644.8 675.1,644.7 675.4,644.1 675.6,644.5 675.9,643.9 676.2,643.5 676.5,643.1 676.7,644.3 677.0,644.0 677.3,644.6 677.6,645.0 677.8,644.4 678.1,645.3 678.4,644.8 678.7,644.8 678.9,645.2 679.2,644.7 679.5,644.5 679.7,644.0 680.0,644.0 680.3,644.9 680.6,645.0 680.8,644.0 681.1,644.5 681.4,644.4 681.7,643.7 681.9,644.0 682.2,643.6 682.5,645.1 682.8,644.5 683.0,644.2 683.3,644.3 683.6,644.0 683.9,644.7 684.1,644.8 684.4,644.8 684.7,643.8 684.9,644.6 685.2,644.1 685.5,643.9 685.8,644.1 686.0,643.9 686.3,644.0 686.6,643.5 686.9,644.3 687.1,644.0 687.4,644.6 687.7,643.6 688.0,643.5 688.2,643.3 688.5,644.4 688.8,644.7 689.0,643.6 689.3,642.7 689.6,643.4 689.9,644.6 690.1,645.1 690.4,644.7 690.7,644.6 691.0,644.4 691.2,644.2 691.5,643.9 691.8,643.6 692.1,643.6 692.3,645.0 692.6,644.9 692.9,644.1 693.2,644.7 693.4,644.7 693.7,644.8 694.0,643.9 694.2,643.8 694.5,643.9 694.8,644.5 695.1,644.1 695.3,644.7 695.6,645.4 695.9,645.2 696.2,644.0 696.4,644.8 696.7,644.2 697.0,645.0 697.3,644.2 697.5,645.1 697.8,644.7 698.1,643.9 698.4,644.0 698.6,644.2 698.9,644.1 699.2,644.4 699.4,644.7 699.7,644.4 700.0,644.4 700.3,644.0 700.5,643.6 700.8,643.8 701.1,644.2 701.4,644.1 701.6,644.9 701.9,644.5 702.2,645.5 702.5,644.1 702.7,643.5 703.0,644.5 703.3,644.7 703.6,644.7 703.8,644.7 704.1,644.9 704.4,644.9 704.6,644.7 704.9,644.7 705.2,644.9 705.5,643.9 705.7,644.6 706.0,644.8 706.3,644.7 706.6,644.5 706.8,644.0 707.1,644.5 707.4,645.0 707.7,644.3 707.9,644.8 708.2,644.7 708.5,644.3 708.7,643.7 709.0,643.9 709.3,643.7 709.6,644.8 709.8,644.0 710.1,644.9 710.4,645.2 710.7,644.8 710.9,645.6 711.2,645.5 711.5,644.6 711.8,643.5 712.0,644.3 712.3,644.7 712.6,644.4 712.9,644.5 713.1,644.3 713.4,644.8 713.7,644.4 713.9,645.2 714.2,644.7 714.5,644.3 714.8,644.5 715.0,644.4 715.3,644.9 715.6,644.1 715.9,645.0 716.1,644.8 716.4,645.4 716.7,644.8 717.0,644.9 717.2,644.9 717.5,644.4 717.8,644.3 718.1,644.8 718.3,645.5 718.6,645.9 718.9,645.2 719.1,645.3 719.4,645.6 719.7,645.7 720.0,645.7 720.2,645.2 720.5,644.6 720.8,645.1 721.1,645.3 721.3,645.3 721.6,645.0 721.9,644.8 722.2,645.4 722.4,645.5 722.7,644.9 723.0,644.9 723.2,644.3 723.5,644.3 723.8,644.6 724.1,645.3 724.3,644.9 724.6,645.3 724.9,644.9 725.2,644.1 725.4,644.0 725.7,644.1 726.0,644.4 726.3,644.8 726.5,644.6 726.8,644.0 727.1,645.1 727.4,644.7 727.6,644.7 727.9,644.4 728.2,644.5 728.4,644.5 728.7,644.2 729.0,644.5 729.3,644.6 729.5,643.7 729.8,644.4 730.1,644.3 730.4,644.4 730.6,644.6 730.9,644.5 731.2,645.2 731.5,645.1 731.7,645.1 732.0,644.4 732.3,644.8 732.6,644.8 732.8,644.4 733.1,644.4 733.4,644.9 733.6,645.7 733.9,645.2 734.2,644.9 734.5,644.8 734.7,644.9 735.0,644.9 735.3,644.3 735.6,645.0 735.8,644.9 736.1,645.1 736.4,645.1 736.7,644.9 736.9,645.0 737.2,644.5 737.5,644.7 737.8,644.5 738.0,645.6 738.3,644.7 738.6,645.1 738.8,644.6 739.1,645.0 739.4,645.2 739.7,645.0 739.9,645.2 740.2,645.3 740.5,644.7 740.8,645.1 741.0,644.5 741.3,645.1 741.6,645.5 741.9,644.6 742.1,644.8 742.4,644.3 742.7,645.0 742.9,644.9 743.2,644.7 743.5,644.8 743.8,644.9 744.0,645.0 744.3,645.1 744.6,644.7 744.9,644.4 745.1,644.4 745.4,644.4 745.7,645.1 746.0,644.7 746.2,645.0 746.5,644.9 746.8,645.0 747.1,644.6 747.3,644.2 747.6,644.2 747.9,644.5 748.1,645.7 748.4,645.1 748.7,645.6 749.0,645.7 749.2,645.0 749.5,644.9 749.8,645.4 750.1,645.4 750.3,644.2 750.6,645.3 750.9,644.7 751.2,645.6 751.4,645.3 751.7,644.5 752.0,645.5 752.3,645.2 752.5,645.2 752.8,644.6 753.1,644.8 753.3,644.2 753.6,643.9 753.9,644.5 754.2,644.7 754.4,645.1 754.7,644.9 755.0,645.2 755.3,645.2 755.5,645.2 755.8,645.2 756.1,644.5 756.4,644.2 756.6,645.0 756.9,645.0 757.2,644.9 757.4,644.9 757.7,645.3 758.0,645.9 758.3,645.1 758.5,645.2 758.8,645.4 759.1,646.4 759.4,645.6 759.6,645.6 759.9,644.7 760.2,645.0 760.5,645.0 760.7,644.6 761.0,645.1 761.3,644.5 761.6,644.9 761.8,645.4 762.1,645.3 762.4,644.4 762.6,644.6 762.9,645.0 763.2,644.2 763.5,645.5 763.7,646.0 764.0,645.6 764.3,644.9 764.6,645.3 764.8,645.7 765.1,644.9 765.4,645.2 765.7,645.0 765.9,645.4 766.2,645.4 766.5,644.6 766.8,645.3 767.0,645.3 767.3,645.0 767.6,645.0 767.8,645.4 768.1,644.9 768.4,645.5 768.7,645.0 768.9,645.3 769.2,644.9 769.5,645.0 769.8,644.5 770.0,643.9 770.3,645.1 770.6,644.8 770.9,645.2 771.1,645.3 771.4,644.9 771.7,644.6 772.0,645.5 772.2,645.0 772.5,645.2 772.8,644.7 773.0,644.9 773.3,644.6 773.6,644.7 773.9,646.2 774.1,646.3 774.4,646.3 774.7,645.3 775.0,645.2 775.2,645.9 775.5,646.1 775.8,645.7 776.1,645.2 776.3,645.4 776.6,644.5 776.9,644.8 777.1,644.6 777.4,644.3 777.7,645.9 778.0,644.9 778.2,645.3 778.5,645.6 778.8,645.2 779.1,645.1 779.3,644.7 779.6,644.8 779.9,645.4 780.2,646.7 780.4,645.8 780.7,646.0 781.0,646.0 781.3,645.8 781.5,644.8 781.8,644.9 782.1,644.8 782.3,645.0 782.6,644.8 782.9,645.3 783.2,645.5 783.4,645.7 783.7,645.2 784.0,644.7 784.3,646.0 784.5,646.0 784.8,645.7 785.1,645.5 785.4,644.8 785.6,645.1 785.9,644.8 786.2,644.9 786.5,645.0 786.7,645.1 787.0,645.1 787.3,645.8 787.5,646.0 787.8,645.2 788.1,645.2 788.4,645.3 788.6,644.6 788.9,645.4 789.2,645.8 789.5,645.9 789.7,645.1 790.0,645.7 790.3,645.2 790.6,645.6 790.8,645.1 791.1,644.6 791.4,645.1 791.6,646.4 791.9,645.3 792.2,645.8 792.5,645.1 792.7,645.9 793.0,646.1 793.3,646.0 793.6,645.2 793.8,644.9 794.1,645.4 794.4,645.5 794.7,645.4 794.9,645.2 795.2,643.8 795.5,644.7 795.8,644.9 796.0,645.0 796.3,645.5 796.6,645.9 796.8,645.1 797.1,644.8 797.4,645.2 797.7,645.4 797.9,645.3 798.2,645.6 798.5,644.7 798.8,644.5 799.0,645.3 799.3,645.2 799.6,645.4 799.9,645.6 800.1,645.6 800.4,645.4 800.7,645.6 801.0,646.0 801.2,645.6 801.5,645.2 801.8,645.5 802.0,645.7 802.3,644.7 802.6,646.0 802.9,645.4 803.1,645.2 803.4,645.2 803.7,645.2 804.0,644.1 804.2,644.8 804.5,645.3 804.8,644.6 805.1,645.5 805.3,645.9 805.6,645.7 805.9,645.1 806.2,645.2 806.4,645.2 806.7,645.5 807.0,645.5 807.2,645.6 807.5,645.6 807.8,645.3 808.1,644.9 808.3,644.8 808.6,644.8 808.9,645.1 809.2,645.4 809.4,645.4 809.7,645.5 810.0,645.3 810.3,644.9 810.5,645.7 810.8,644.8 811.1,644.6 811.3,645.0 811.6,645.5 811.9,645.1 812.2,645.1 812.4,645.0 812.7,646.0 813.0,645.9 813.3,645.2 813.5,645.5 813.8,645.0 814.1,645.1 814.4,645.3 814.6,645.8 814.9,645.7 815.2,645.3 815.5,644.9 815.7,645.7 816.0,645.9 816.3,645.4 816.5,644.9 816.8,645.0 817.1,644.7 817.4,645.5 817.6,645.6 817.9,645.8 818.2,646.2 818.5,645.4 818.7,645.7 819.0,645.4 819.3,645.1 819.6,644.9 819.8,645.6 820.1,645.0 820.4,644.7 820.7,644.4 820.9,644.8 821.2,644.5 821.5,645.5 821.7,646.0 822.0,645.3 822.3,646.0 822.6,645.3 822.8,645.0 823.1,644.2 823.4,644.3 823.7,645.2 823.9,644.7 824.2,644.7 824.5,645.6 824.8,645.0 825.0,645.4 825.3,645.0 825.6,645.7 825.9,645.7 826.1,645.1 826.4,645.3 826.7,645.5 826.9,645.7 827.2,645.9 827.5,645.7 827.8,645.4 828.0,645.4 828.3,645.5 828.6,644.7 828.9,643.9 829.1,643.8 829.4,644.5 829.7,645.5 830.0,645.4 830.2,644.7 830.5,644.3 830.8,644.7 831.0,644.5 831.3,645.3 831.6,645.3 831.9,645.1 832.1,645.0 832.4,643.9 832.7,644.3 833.0,644.9 833.2,644.0 833.5,644.9 833.8,644.6 834.1,644.8 834.3,644.5 834.6,645.1 834.9,645.1 835.2,645.0 835.4,644.8 835.7,645.0 836.0,645.1 836.2,645.7 836.5,645.0 836.8,645.1 837.1,644.6 837.3,645.4 837.6,646.0 837.9,644.4 838.2,645.1 838.4,645.5 838.7,644.9 839.0,644.4 839.3,645.3 839.5,645.3 839.8,646.3 840.1,646.1 840.4,645.6 840.6,646.1 840.9,645.3 841.2,645.5 841.4,645.3 841.7,645.1 842.0,645.4 842.3,644.6 842.5,645.4 842.8,646.6 843.1,645.6 843.4,645.2 843.6,644.9 843.9,645.0 844.2,645.0 844.5,645.4 844.7,645.3 845.0,645.4 845.3,645.9 845.5,645.9 845.8,645.3 846.1,645.6 846.4,644.6 846.6,644.7 846.9,644.5 847.2,644.5 847.5,644.5 847.7,645.2 848.0,645.1 848.3,645.2 848.6,645.5 848.8,645.3 849.1,645.7 849.4,645.4 849.7,645.2 849.9,645.1 850.2,645.4 850.5,645.2 850.7,645.5 851.0,645.9 851.3,645.9 851.6,645.7 851.8,645.9 852.1,646.0 852.4,645.4 852.7,645.9 852.9,646.0 853.2,646.0 853.5,644.7 853.8,644.5 854.0,645.1 854.3,645.7 854.6,646.3 854.9,645.7 855.1,646.3 855.4,645.1 855.7,645.2 855.9,644.8 856.2,645.5 856.5,645.4 856.8,645.6 857.0,645.2 857.3,645.1 857.6,645.2 857.9,644.6 858.1,645.2 858.4,645.5 858.7,644.7 859.0,645.4 859.2,644.9 859.5,645.6 859.8,645.7 860.1,645.6 860.3,646.0 860.6,645.1 860.9,644.5 861.1,645.1 861.4,644.9 861.7,644.4 862.0,644.7 862.2,645.3 862.5,644.4 862.8,645.4 863.1,645.3 863.3,645.4 863.6,644.7 863.9,645.8 864.2,644.7 864.4,644.5 864.7,644.9 865.0,645.4 865.2,645.3 865.5,644.8 865.8,645.6 866.1,646.0 866.3,646.1 866.6,645.6 866.9,645.5 867.2,645.2 867.4,645.5 867.7,645.3 868.0,645.0 868.3,644.9 868.5,646.4 868.8,645.8 869.1,646.3 869.4,645.7 869.6,644.8 869.9,644.8" fill="none" stroke="#2a2aff" stroke-width="1.2" stroke-linejoin="round"/>
<rect x="590.3" y="605.3" width="280.7" height="95.6" fill="none" stroke="#828282" stroke-width="2.1"/>
<text x="591.8" y="716.6" text-anchor="middle" style="font-family:'DejaVu Serif','Liberation Serif',serif;font-size:10.6px;letter-spacing:0.9px" fill="#545454">0</text>
<text x="646.5" y="716.6" text-anchor="middle" style="font-family:'DejaVu Serif','Liberation Serif',serif;font-size:10.6px;letter-spacing:0.9px" fill="#545454">200</text>
<text x="701.2" y="716.6" text-anchor="middle" style="font-family:'DejaVu Serif','Liberation Serif',serif;font-size:10.6px;letter-spacing:0.9px" fill="#545454">400</text>
<text x="755.9" y="716.6" text-anchor="middle" style="font-family:'DejaVu Serif','Liberation Serif',serif;font-size:10.6px;letter-spacing:0.9px" fill="#545454">600</text>
<text x="810.6" y="716.6" text-anchor="middle" style="font-family:'DejaVu Serif','Liberation Serif',serif;font-size:10.6px;letter-spacing:0.9px" fill="#545454">800</text>
<text x="865.4" y="716.6" text-anchor="middle" style="font-family:'DejaVu Serif','Liberation Serif',serif;font-size:10.6px;letter-spacing:0.9px" fill="#545454">1000</text>
<text x="587.8" y="705.0" text-anchor="end" style="font-family:'DejaVu Serif','Liberation Serif',serif;font-size:10.6px;letter-spacing:0.9px" fill="#545454">0</text>
<text x="587.8" y="672.5" text-anchor="end" style="font-family:'DejaVu Serif','Liberation Serif',serif;font-size:10.6px;letter-spacing:0.9px" fill="#545454">5000</text>
<text x="587.8" y="640.0" text-anchor="end" style="font-family:'DejaVu Serif','Liberation Serif',serif;font-size:10.6px;letter-spacing:0.9px" fill="#545454">10000</text>
<rect x="764.4" y="615.7" width="13.6" height="10.8" fill="#fff" stroke="#ccc" stroke-width="1"/>
<rect x="765.6" y="617.0" width="11.2" height="8.2" fill="#0000ff"/>
<text x="862.9" y="625.0" text-anchor="end" style="font-family:'DejaVu Serif','Liberation Serif',serif;font-size:11.4px;letter-spacing:0.36px" fill="#8a8a8a">aida02 3.5.W</text>
<path d="M859.1 606.0L870.1 595.0L881.1 606.0L870.1 617.0z" fill="#ff0000"/>
</g>
<g>
<path d="M1118.8 606.6V700.8" stroke="#e7e7e7" stroke-width="1.2"/>
<path d="M1173.5 606.6V700.8" stroke="#e7e7e7" stroke-width="1.2"/>
<path d="M1228.3 606.6V700.8" stroke="#e7e7e7" stroke-width="1.2"/>
<path d="M1283.0 606.6V700.8" stroke="#e7e7e7" stroke-width="1.2"/>
<path d="M1337.7 606.6V700.8" stroke="#e7e7e7" stroke-width="1.2"/>
<path d="M1064.1 670.1H1342.9" stroke="#e7e7e7" stroke-width="1.2"/>
<path d="M1064.1 639.5H1342.9" stroke="#e7e7e7" stroke-width="1.2"/>
<path d="M1064.1 608.8H1342.9" stroke="#e7e7e7" stroke-width="1.2"/>
<polyline points="1064.1,647.6 1064.4,648.6 1064.6,647.4 1064.9,647.3 1065.2,648.3 1065.5,648.2 1065.7,648.0 1066.0,647.1 1066.3,647.2 1066.6,647.7 1066.8,647.6 1067.1,648.1 1067.4,647.7 1067.7,648.0 1067.9,647.7 1068.2,648.0 1068.5,648.2 1068.8,648.3 1069.0,647.9 1069.3,647.7 1069.6,648.7 1069.8,647.9 1070.1,648.3 1070.4,648.7 1070.7,648.1 1070.9,648.3 1071.2,647.4 1071.5,648.0 1071.8,648.4 1072.0,648.0 1072.3,647.6 1072.6,647.1 1072.9,648.4 1073.1,647.7 1073.4,647.9 1073.7,647.4 1073.9,647.6 1074.2,646.7 1074.5,648.2 1074.8,647.4 1075.0,646.8 1075.3,647.1 1075.6,648.1 1075.9,648.9 1076.1,648.3 1076.4,647.5 1076.7,648.0 1077.0,647.9 1077.2,648.3 1077.5,648.5 1077.8,648.2 1078.1,648.0 1078.3,648.1 1078.6,648.8 1078.9,647.7 1079.1,648.3 1079.4,648.1 1079.7,647.8 1080.0,647.9 1080.2,648.1 1080.5,647.7 1080.8,647.6 1081.1,647.9 1081.3,647.7 1081.6,648.2 1081.9,647.9 1082.2,647.5 1082.4,647.7 1082.7,647.8 1083.0,648.2 1083.3,647.7 1083.5,647.7 1083.8,647.7 1084.1,647.5 1084.3,647.8 1084.6,648.1 1084.9,648.0 1085.2,648.0 1085.4,647.7 1085.7,647.1 1086.0,647.1 1086.3,647.4 1086.5,647.9 1086.8,646.9 1087.1,647.9 1087.4,646.9 1087.6,647.1 1087.9,647.5 1088.2,647.5 1088.5,647.4 1088.7,647.8 1089.0,647.8 1089.3,647.5 1089.5,647.3 1089.8,647.3 1090.1,647.5 1090.4,647.2 1090.6,647.3 1090.9,647.9 1091.2,648.0 1091.5,648.3 1091.7,648.1 1092.0,647.8 1092.3,647.9 1092.6,647.8 1092.8,647.0 1093.1,647.1 1093.4,646.8 1093.6,647.0 1093.9,648.0 1094.2,648.4 1094.5,647.8 1094.7,647.9 1095.0,647.7 1095.3,648.0 1095.6,647.7 1095.8,648.0 1096.1,648.1 1096.4,647.8 1096.7,647.6 1096.9,648.0 1097.2,647.9 1097.5,647.2 1097.8,647.5 1098.0,647.0 1098.3,647.8 1098.6,646.9 1098.8,647.2 1099.1,647.1 1099.4,647.3 1099.7,647.3 1099.9,647.8 1100.2,648.3 1100.5,647.8 1100.8,647.9 1101.0,648.2 1101.3,647.9 1101.6,647.8 1101.9,648.0 1102.1,648.2 1102.4,648.0 1102.7,648.0 1103.0,648.0 1103.2,648.5 1103.5,647.4 1103.8,647.1 1104.0,647.2 1104.3,648.2 1104.6,647.6 1104.9,647.5 1105.1,647.8 1105.4,647.0 1105.7,647.4 1106.0,647.7 1106.2,648.9 1106.5,648.5 1106.8,648.6 1107.1,647.6 1107.3,647.1 1107.6,647.9 1107.9,647.8 1108.1,647.7 1108.4,647.9 1108.7,647.6 1109.0,646.9 1109.2,647.4 1109.5,648.3 1109.8,648.3 1110.1,647.8 1110.3,647.4 1110.6,647.8 1110.9,648.3 1111.2,647.6 1111.4,648.0 1111.7,647.8 1112.0,647.9 1112.3,648.1 1112.5,647.5 1112.8,647.5 1113.1,646.6 1113.3,647.7 1113.6,649.1 1113.9,647.9 1114.2,647.9 1114.4,647.4 1114.7,648.1 1115.0,647.7 1115.3,647.6 1115.5,647.1 1115.8,647.1 1116.1,647.2 1116.4,647.3 1116.6,647.5 1116.9,647.5 1117.2,647.6 1117.5,647.4 1117.7,646.7 1118.0,647.8 1118.3,647.5 1118.5,630.3 1118.8,630.1 1119.1,630.6 1119.4,615.9 1119.6,615.0 1119.9,616.2 1120.2,615.5 1120.5,616.1 1120.7,616.5 1121.0,616.9 1121.3,616.8 1121.6,616.8 1121.8,617.3 1122.1,617.8 1122.4,616.8 1122.7,616.2 1122.9,617.3 1123.2,616.8 1123.5,617.1 1123.7,617.6 1124.0,616.3 1124.3,617.0 1124.6,617.2 1124.8,616.7 1125.1,617.2 1125.4,618.0 1125.7,617.3 1125.9,616.8 1126.2,617.3 1126.5,617.8 1126.8,617.7 1127.0,617.5 1127.3,617.5 1127.6,617.5 1127.8,617.7 1128.1,618.5 1128.4,617.9 1128.7,618.7 1128.9,618.4 1129.2,617.5 1129.5,617.1 1129.8,617.3 1130.0,618.8 1130.3,618.9 1130.6,618.9 1130.9,619.0 1131.1,619.6 1131.4,618.8 1131.7,618.6 1132.0,618.5 1132.2,618.5 1132.5,618.7 1132.8,618.8 1133.0,618.7 1133.3,619.5 1133.6,619.6 1133.9,619.5 1134.1,619.3 1134.4,639.1 1134.7,639.1 1135.0,639.2 1135.2,647.9 1135.5,647.8 1135.8,647.2 1136.1,646.9 1136.3,647.8 1136.6,647.6 1136.9,647.7 1137.2,647.9 1137.4,647.9 1137.7,647.2 1138.0,647.9 1138.2,647.4 1138.5,647.8 1138.8,647.9 1139.1,647.9 1139.3,648.1 1139.6,648.6 1139.9,647.9 1140.2,648.2 1140.4,646.8 1140.7,648.0 1141.0,647.5 1141.3,647.0 1141.5,648.1 1141.8,647.6 1142.1,647.6 1142.4,647.3 1142.6,647.7 1142.9,648.2 1143.2,647.5 1143.4,648.2 1143.7,648.4 1144.0,648.0 1144.3,648.4 1144.5,648.2 1144.8,647.2 1145.1,647.9 1145.4,647.8 1145.6,648.1 1145.9,647.6 1146.2,648.3 1146.5,647.5 1146.7,647.7 1147.0,648.0 1147.3,647.7 1147.5,647.8 1147.8,647.9 1148.1,648.9 1148.4,648.7 1148.6,648.1 1148.9,648.3 1149.2,647.7 1149.5,646.6 1149.7,648.3 1150.0,649.0 1150.3,647.5 1150.6,647.3 1150.8,647.0 1151.1,646.6 1151.4,647.0 1151.7,647.6 1151.9,647.6 1152.2,648.4 1152.5,648.5 1152.7,648.4 1153.0,648.3 1153.3,647.5 1153.6,647.8 1153.8,647.9 1154.1,647.5 1154.4,648.4 1154.7,647.8 1154.9,648.1 1155.2,647.4 1155.5,648.4 1155.8,647.9 1156.0,647.4 1156.3,647.9 1156.6,647.6 1156.9,647.8 1157.1,647.6 1157.4,647.3 1157.7,647.1 1157.9,647.5 1158.2,648.0 1158.5,648.0 1158.8,647.8 1159.0,647.4 1159.3,647.3 1159.6,648.5 1159.9,647.6 1160.1,647.7 1160.4,647.1 1160.7,647.7 1161.0,648.3 1161.2,648.1 1161.5,647.7 1161.8,647.5 1162.0,647.9 1162.3,647.8 1162.6,647.9 1162.9,647.9 1163.1,648.5 1163.4,648.6 1163.7,648.7 1164.0,647.7 1164.2,647.5 1164.5,648.0 1164.8,647.7 1165.1,647.6 1165.3,648.4 1165.6,648.6 1165.9,647.8 1166.2,646.7 1166.4,646.6 1166.7,647.3 1167.0,649.0 1167.2,649.0 1167.5,648.2 1167.8,648.9 1168.1,647.6 1168.3,648.2 1168.6,647.9 1168.9,647.4 1169.2,648.0 1169.4,648.0 1169.7,647.6 1170.0,648.0 1170.3,647.7 1170.5,647.6 1170.8,647.6 1171.1,647.6 1171.4,647.5 1171.6,647.8 1171.9,647.7 1172.2,647.7 1172.4,647.9 1172.7,648.1 1173.0,647.7 1173.3,648.2 1173.5,648.0 1173.8,647.8 1174.1,648.3 1174.4,648.5 1174.6,648.2 1174.9,647.8 1175.2,647.6 1175.5,647.7 1175.7,648.0 1176.0,647.9 1176.3,647.3 1176.6,647.4 1176.8,648.8 1177.1,647.7 1177.4,647.9 1177.6,647.3 1177.9,647.4 1178.2,647.3 1178.5,647.7 1178.7,647.5 1179.0,647.8 1179.3,647.9 1179.6,648.0 1179.8,648.4 1180.1,648.1 1180.4,648.6 1180.7,648.0 1180.9,647.7 1181.2,646.8 1181.5,648.0 1181.7,647.6 1182.0,647.4 1182.3,648.1 1182.6,647.8 1182.8,647.8 1183.1,648.2 1183.4,648.1 1183.7,648.2 1183.9,648.0 1184.2,647.9 1184.5,646.9 1184.8,646.7 1185.0,647.5 1185.3,648.9 1185.6,648.2 1185.9,648.2 1186.1,647.8 1186.4,648.3 1186.7,647.7 1186.9,647.3 1187.2,647.4 1187.5,647.6 1187.8,648.0 1188.0,648.6 1188.3,648.1 1188.6,648.9 1188.9,648.3 1189.1,648.2 1189.4,648.5 1189.7,648.2 1190.0,648.6 1190.2,648.6 1190.5,648.9 1190.8,647.8 1191.1,647.8 1191.3,647.7 1191.6,648.7 1191.9,649.0 1192.1,648.1 1192.4,647.5 1192.7,647.8 1193.0,648.4 1193.2,647.7 1193.5,648.4 1193.8,648.4 1194.1,648.2 1194.3,648.6 1194.6,648.2 1194.9,647.6 1195.2,648.0 1195.4,648.2 1195.7,648.9 1196.0,648.1 1196.2,648.2 1196.5,647.9 1196.8,647.2 1197.1,647.8 1197.3,647.7 1197.6,647.4 1197.9,647.7 1198.2,648.2 1198.4,648.2 1198.7,647.9 1199.0,648.1 1199.3,648.2 1199.5,647.8 1199.8,648.6 1200.1,647.5 1200.4,647.7 1200.6,648.1 1200.9,648.1 1201.2,648.0 1201.4,648.5 1201.7,648.7 1202.0,648.3 1202.3,648.7 1202.5,648.1 1202.8,647.8 1203.1,647.6 1203.4,648.1 1203.6,648.1 1203.9,648.8 1204.2,648.1 1204.5,648.6 1204.7,648.8 1205.0,647.7 1205.3,648.3 1205.6,647.3 1205.8,648.1 1206.1,648.3 1206.4,647.8 1206.6,647.6 1206.9,648.1 1207.2,647.8 1207.5,647.8 1207.7,647.9 1208.0,647.0 1208.3,648.3 1208.6,648.3 1208.8,648.5 1209.1,647.5 1209.4,647.7 1209.7,648.8 1209.9,647.9 1210.2,648.6 1210.5,648.2 1210.8,647.8 1211.0,647.4 1211.3,647.9 1211.6,648.0 1211.8,649.3 1212.1,648.1 1212.4,648.0 1212.7,647.6 1212.9,648.5 1213.2,648.6 1213.5,647.6 1213.8,647.1 1214.0,647.8 1214.3,647.2 1214.6,648.5 1214.9,648.3 1215.1,647.9 1215.4,647.7 1215.7,648.1 1215.9,647.9 1216.2,647.7 1216.5,647.9 1216.8,648.1 1217.0,648.2 1217.3,648.7 1217.6,648.8 1217.9,647.7 1218.1,647.5 1218.4,648.2 1218.7,648.8 1219.0,647.9 1219.2,648.4 1219.5,648.0 1219.8,647.6 1220.1,648.3 1220.3,648.0 1220.6,648.1 1220.9,648.2 1221.1,648.2 1221.4,648.2 1221.7,648.3 1222.0,648.1 1222.2,648.4 1222.5,648.1 1222.8,648.4 1223.1,648.7 1223.3,648.4 1223.6,648.5 1223.9,648.1 1224.2,647.9 1224.4,648.6 1224.7,648.6 1225.0,648.1 1225.3,648.2 1225.5,647.6 1225.8,648.6 1226.1,648.2 1226.3,648.3 1226.6,648.3 1226.9,648.4 1227.2,648.0 1227.4,648.2 1227.7,648.6 1228.0,648.1 1228.3,647.8 1228.5,647.8 1228.8,648.3 1229.1,648.3 1229.4,648.1 1229.6,648.1 1229.9,648.6 1230.2,647.5 1230.4,647.7 1230.7,647.6 1231.0,648.4 1231.3,648.3 1231.5,647.9 1231.8,648.3 1232.1,648.9 1232.4,647.3 1232.6,647.3 1232.9,647.5 1233.2,648.4 1233.5,648.7 1233.7,648.9 1234.0,648.5 1234.3,648.3 1234.6,647.7 1234.8,648.5 1235.1,647.9 1235.4,648.1 1235.6,648.8 1235.9,648.6 1236.2,648.4 1236.5,648.7 1236.7,648.2 1237.0,648.4 1237.3,647.9 1237.6,648.6 1237.8,648.0 1238.1,648.4 1238.4,648.9 1238.7,648.6 1238.9,648.5 1239.2,647.8 1239.5,648.6 1239.8,648.2 1240.0,647.3 1240.3,647.7 1240.6,648.3 1240.8,648.1 1241.1,648.1 1241.4,648.1 1241.7,648.3 1241.9,648.2 1242.2,648.7 1242.5,648.8 1242.8,648.3 1243.0,648.9 1243.3,649.6 1243.6,649.1 1243.9,648.8 1244.1,649.0 1244.4,648.5 1244.7,648.7 1245.0,648.5 1245.2,648.4 1245.5,648.8 1245.8,648.7 1246.0,647.9 1246.3,648.3 1246.6,648.9 1246.9,650.1 1247.1,648.4 1247.4,647.9 1247.7,647.9 1248.0,648.7 1248.2,647.5 1248.5,647.6 1248.8,648.2 1249.1,647.4 1249.3,648.1 1249.6,648.8 1249.9,648.2 1250.1,648.1 1250.4,648.5 1250.7,648.5 1251.0,648.5 1251.2,648.3 1251.5,649.0 1251.8,648.9 1252.1,648.0 1252.3,648.6 1252.6,648.8 1252.9,648.7 1253.2,648.4 1253.4,647.5 1253.7,648.2 1254.0,648.5 1254.3,648.5 1254.5,647.6 1254.8,647.6 1255.1,647.4 1255.3,648.2 1255.6,647.8 1255.9,648.1 1256.2,648.5 1256.4,648.4 1256.7,647.7 1257.0,647.9 1257.3,647.9 1257.5,648.3 1257.8,649.2 1258.1,648.1 1258.4,648.0 1258.6,647.9 1258.9,647.1 1259.2,647.6 1259.5,648.1 1259.7,648.1 1260.0,648.6 1260.3,648.2 1260.5,648.0 1260.8,648.4 1261.1,648.5 1261.4,648.1 1261.6,648.4 1261.9,648.5 1262.2,648.9 1262.5,648.6 1262.7,647.8 1263.0,648.6 1263.3,648.5 1263.6,648.3 1263.8,648.5 1264.1,648.7 1264.4,648.2 1264.6,648.6 1264.9,648.1 1265.2,647.8 1265.5,647.3 1265.7,648.0 1266.0,647.7 1266.3,648.4 1266.6,648.0 1266.8,648.0 1267.1,648.1 1267.4,648.5 1267.7,648.8 1267.9,649.4 1268.2,649.2 1268.5,648.6 1268.8,647.8 1269.0,647.7 1269.3,648.2 1269.6,648.0 1269.8,648.4 1270.1,648.0 1270.4,647.3 1270.7,647.5 1270.9,647.6 1271.2,648.2 1271.5,648.0 1271.8,648.5 1272.0,648.6 1272.3,648.2 1272.6,648.2 1272.9,648.3 1273.1,648.3 1273.4,647.7 1273.7,648.9 1274.0,648.5 1274.2,648.5 1274.5,648.8 1274.8,647.9 1275.0,648.3 1275.3,649.0 1275.6,648.5 1275.9,648.5 1276.1,648.2 1276.4,648.3 1276.7,648.7 1277.0,648.3 1277.2,648.4 1277.5,648.6 1277.8,647.7 1278.1,647.9 1278.3,647.9 1278.6,648.1 1278.9,648.8 1279.2,648.2 1279.4,649.1 1279.7,648.8 1280.0,648.5 1280.2,648.5 1280.5,648.8 1280.8,648.5 1281.1,648.6 1281.3,648.8 1281.6,648.6 1281.9,648.2 1282.2,648.3 1282.4,648.5 1282.7,648.4 1283.0,647.3 1283.3,648.1 1283.5,648.2 1283.8,648.1 1284.1,647.4 1284.3,647.8 1284.6,647.9 1284.9,647.7 1285.2,648.2 1285.4,647.8 1285.7,647.5 1286.0,648.1 1286.3,648.0 1286.5,648.7 1286.8,648.8 1287.1,648.8 1287.4,648.0 1287.6,648.7 1287.9,648.6 1288.2,648.5 1288.5,648.1 1288.7,649.0 1289.0,648.9 1289.3,648.7 1289.5,648.8 1289.8,648.6 1290.1,648.5 1290.4,649.0 1290.6,649.1 1290.9,648.7 1291.2,647.7 1291.5,647.5 1291.7,647.7 1292.0,647.9 1292.3,648.5 1292.6,647.9 1292.8,648.1 1293.1,648.6 1293.4,648.7 1293.7,648.0 1293.9,648.1 1294.2,648.8 1294.5,648.0 1294.7,648.5 1295.0,648.9 1295.3,648.3 1295.6,648.3 1295.8,648.2 1296.1,649.0 1296.4,648.9 1296.7,649.0 1296.9,648.6 1297.2,648.6 1297.5,648.3 1297.8,647.8 1298.0,647.5 1298.3,647.7 1298.6,648.0 1298.9,648.6 1299.1,647.8 1299.4,647.7 1299.7,648.9 1299.9,648.8 1300.2,649.3 1300.5,649.5 1300.8,649.1 1301.0,649.1 1301.3,648.4 1301.6,648.0 1301.9,648.3 1302.1,648.5 1302.4,648.3 1302.7,648.8 1303.0,649.3 1303.2,649.2 1303.5,648.2 1303.8,648.2 1304.0,649.0 1304.3,648.7 1304.6,648.3 1304.9,648.5 1305.1,649.0 1305.4,648.6 1305.7,648.5 1306.0,648.4 1306.2,648.4 1306.5,648.8 1306.8,648.3 1307.1,648.8 1307.3,648.2 1307.6,648.5 1307.9,649.2 1308.2,648.3 1308.4,648.3 1308.7,648.7 1309.0,648.2 1309.2,648.9 1309.5,649.3 1309.8,648.4 1310.1,649.0 1310.3,648.5 1310.6,648.2 1310.9,647.6 1311.2,648.5 1311.4,648.9 1311.7,648.1 1312.0,648.4 1312.3,647.6 1312.5,649.0 1312.8,648.2 1313.1,647.7 1313.4,648.4 1313.6,649.1 1313.9,648.5 1314.2,648.0 1314.4,648.3 1314.7,648.5 1315.0,648.2 1315.3,648.2 1315.5,648.6 1315.8,648.3 1316.1,649.4 1316.4,648.9 1316.6,648.7 1316.9,648.7 1317.2,648.5 1317.5,648.6 1317.7,648.3 1318.0,648.9 1318.3,648.2 1318.5,648.3 1318.8,647.9 1319.1,648.0 1319.4,648.0 1319.6,647.3 1319.9,648.0 1320.2,648.2 1320.5,648.6 1320.7,648.9 1321.0,648.9 1321.3,649.3 1321.6,649.4 1321.8,648.4 1322.1,648.1 1322.4,648.5 1322.7,648.4 1322.9,648.5 1323.2,648.7 1323.5,648.2 1323.7,648.3 1324.0,649.2 1324.3,648.8 1324.6,648.9 1324.8,648.8 1325.1,648.1 1325.4,649.0 1325.7,649.0 1325.9,648.0 1326.2,647.7 1326.5,648.5 1326.8,647.9 1327.0,648.4 1327.3,648.5 1327.6,648.9 1327.9,648.6 1328.1,648.7 1328.4,648.3 1328.7,648.0 1328.9,648.7 1329.2,648.2 1329.5,647.7 1329.8,648.2 1330.0,648.2 1330.3,648.9 1330.6,649.1 1330.9,648.3 1331.1,648.2 1331.4,648.6 1331.7,648.5 1332.0,647.6 1332.2,648.2 1332.5,648.1 1332.8,649.2 1333.1,648.7 1333.3,647.6 1333.6,647.7 1333.9,648.5 1334.1,648.7 1334.4,648.5 1334.7,648.5 1335.0,648.8 1335.2,648.2 1335.5,649.1 1335.8,649.2 1336.1,647.8 1336.3,648.6 1336.6,648.8 1336.9,647.7 1337.2,648.1 1337.4,648.1 1337.7,647.7 1338.0,648.3 1338.2,647.7 1338.5,647.5 1338.8,647.4 1339.1,647.7 1339.3,648.7 1339.6,648.0 1339.9,647.9 1340.2,647.6 1340.4,647.7 1340.7,648.2 1341.0,648.0 1341.3,647.8 1341.5,648.8 1341.8,648.4 1342.1,648.4 1342.4,647.7 1342.6,648.1 1342.9,648.3" fill="none" stroke="#2a2aff" stroke-width="1.2" stroke-linejoin="round"/>
<rect x="1063.3" y="605.3" width="280.7" height="95.6" fill="none" stroke="#828282" stroke-width="2.1"/>
<text x="1064.8" y="716.6" text-anchor="middle" style="font-family:'DejaVu Serif','Liberation Serif',serif;font-size:10.6px;letter-spacing:0.9px" fill="#545454">0</text>
<text x="1119.5" y="716.6" text-anchor="middle" style="font-family:'DejaVu Serif','Liberation Serif',serif;font-size:10.6px;letter-spacing:0.9px" fill="#545454">200</text>
<text x="1174.2" y="716.6" text-anchor="middle" style="font-family:'DejaVu Serif','Liberation Serif',serif;font-size:10.6px;letter-spacing:0.9px" fill="#545454">400</text>
<text x="1228.9" y="716.6" text-anchor="middle" style="font-family:'DejaVu Serif','Liberation Serif',serif;font-size:10.6px;letter-spacing:0.9px" fill="#545454">600</text>
<text x="1283.6" y="716.6" text-anchor="middle" style="font-family:'DejaVu Serif','Liberation Serif',serif;font-size:10.6px;letter-spacing:0.9px" fill="#545454">800</text>
<text x="1338.4" y="716.6" text-anchor="middle" style="font-family:'DejaVu Serif','Liberation Serif',serif;font-size:10.6px;letter-spacing:0.9px" fill="#545454">1000</text>
<text x="1060.8" y="705.0" text-anchor="end" style="font-family:'DejaVu Serif','Liberation Serif',serif;font-size:10.6px;letter-spacing:0.9px" fill="#545454">0</text>
<text x="1060.8" y="674.3" text-anchor="end" style="font-family:'DejaVu Serif','Liberation Serif',serif;font-size:10.6px;letter-spacing:0.9px" fill="#545454">5000</text>
<text x="1060.8" y="643.7" text-anchor="end" style="font-family:'DejaVu Serif','Liberation Serif',serif;font-size:10.6px;letter-spacing:0.9px" fill="#545454">10000</text>
<text x="1060.8" y="613.0" text-anchor="end" style="font-family:'DejaVu Serif','Liberation Serif',serif;font-size:10.6px;letter-spacing:0.9px" fill="#545454">15000</text>
<rect x="1237.4" y="615.7" width="13.6" height="10.8" fill="#fff" stroke="#ccc" stroke-width="1"/>
<rect x="1238.6" y="617.0" width="11.2" height="8.2" fill="#0000ff"/>
<text x="1335.9" y="625.0" text-anchor="end" style="font-family:'DejaVu Serif','Liberation Serif',serif;font-size:11.4px;letter-spacing:0.36px" fill="#8a8a8a">aida02 3.6.W</text>
<path d="M1332.1 606.0L1343.1 595.0L1354.1 606.0L1343.1 617.0z" fill="#ff0000"/>
</g>
<g>
<path d="M1591.8 606.6V700.8" stroke="#e7e7e7" stroke-width="1.2"/>
<path d="M1646.5 606.6V700.8" stroke="#e7e7e7" stroke-width="1.2"/>
<path d="M1701.3 606.6V700.8" stroke="#e7e7e7" stroke-width="1.2"/>
<path d="M1756.0 606.6V700.8" stroke="#e7e7e7" stroke-width="1.2"/>
<path d="M1810.7 606.6V700.8" stroke="#e7e7e7" stroke-width="1.2"/>
<path d="M1537.1 667.3H1815.9" stroke="#e7e7e7" stroke-width="1.2"/>
<path d="M1537.1 633.8H1815.9" stroke="#e7e7e7" stroke-width="1.2"/>
<polyline points="1537.1,642.5 1537.4,643.5 1537.6,643.5 1537.9,642.6 1538.2,642.6 1538.5,642.6 1538.7,643.0 1539.0,643.7 1539.3,643.9 1539.6,643.6 1539.8,643.4 1540.1,643.4 1540.4,642.7 1540.7,642.8 1540.9,643.6 1541.2,643.2 1541.5,643.0 1541.8,643.6 1542.0,644.2 1542.3,643.8 1542.6,643.7 1542.8,642.7 1543.1,643.6 1543.4,642.0 1543.7,642.6 1543.9,643.5 1544.2,643.5 1544.5,643.7 1544.8,643.0 1545.0,642.9 1545.3,642.9 1545.6,644.3 1545.9,643.8 1546.1,643.1 1546.4,641.9 1546.7,642.9 1546.9,643.3 1547.2,643.5 1547.5,643.3 1547.8,643.9 1548.0,643.3 1548.3,643.0 1548.6,642.8 1548.9,643.4 1549.1,644.0 1549.4,643.8 1549.7,643.6 1550.0,643.9 1550.2,643.5 1550.5,643.0 1550.8,643.6 1551.1,642.8 1551.3,642.6 1551.6,643.2 1551.9,644.0 1552.1,643.0 1552.4,643.0 1552.7,643.3 1553.0,643.5 1553.2,643.1 1553.5,644.0 1553.8,644.2 1554.1,644.2 1554.3,643.9 1554.6,643.8 1554.9,643.6 1555.2,643.4 1555.4,643.9 1555.7,642.9 1556.0,642.8 1556.3,642.7 1556.5,642.3 1556.8,643.0 1557.1,644.2 1557.3,643.7 1557.6,643.5 1557.9,642.8 1558.2,643.7 1558.4,643.1 1558.7,643.6 1559.0,643.8 1559.3,643.8 1559.5,642.8 1559.8,643.3 1560.1,643.4 1560.4,643.2 1560.6,643.0 1560.9,642.8 1561.2,644.1 1561.5,643.3 1561.7,643.3 1562.0,643.5 1562.3,643.0 1562.5,643.1 1562.8,643.0 1563.1,642.7 1563.4,643.6 1563.6,642.6 1563.9,643.0 1564.2,643.6 1564.5,643.1 1564.7,642.7 1565.0,643.0 1565.3,643.0 1565.6,642.8 1565.8,643.4 1566.1,642.7 1566.4,643.6 1566.6,644.0 1566.9,643.2 1567.2,642.8 1567.5,643.9 1567.7,643.3 1568.0,643.7 1568.3,644.0 1568.6,644.1 1568.8,643.9 1569.1,644.0 1569.4,642.9 1569.7,642.5 1569.9,642.8 1570.2,642.6 1570.5,642.7 1570.8,642.4 1571.0,643.7 1571.3,643.4 1571.6,643.5 1571.8,643.6 1572.1,643.5 1572.4,642.8 1572.7,642.9 1572.9,643.1 1573.2,642.9 1573.5,642.7 1573.8,642.9 1574.0,643.3 1574.3,642.8 1574.6,642.9 1574.9,643.2 1575.1,643.3 1575.4,643.8 1575.7,643.6 1576.0,643.2 1576.2,642.9 1576.5,643.9 1576.8,643.3 1577.0,643.6 1577.3,644.1 1577.6,643.6 1577.9,643.5 1578.1,643.3 1578.4,643.4 1578.7,643.0 1579.0,642.6 1579.2,642.2 1579.5,642.6 1579.8,644.0 1580.1,644.3 1580.3,643.3 1580.6,643.9 1580.9,643.7 1581.1,643.0 1581.4,642.6 1581.7,643.1 1582.0,642.9 1582.2,643.1 1582.5,643.0 1582.8,644.1 1583.1,642.9 1583.3,642.9 1583.6,643.7 1583.9,643.7 1584.2,643.5 1584.4,643.7 1584.7,642.6 1585.0,643.6 1585.3,642.8 1585.5,642.8 1585.8,642.6 1586.1,643.9 1586.3,643.5 1586.6,643.0 1586.9,643.4 1587.2,643.9 1587.4,644.4 1587.7,643.3 1588.0,642.5 1588.3,642.4 1588.5,642.8 1588.8,643.1 1589.1,642.1 1589.4,643.1 1589.6,643.1 1589.9,644.0 1590.2,642.8 1590.5,643.5 1590.7,642.5 1591.0,642.8 1591.3,643.5 1591.5,629.0 1591.8,628.6 1592.1,628.2 1592.4,616.3 1592.6,617.6 1592.9,616.7 1593.2,616.7 1593.5,616.2 1593.7,616.4 1594.0,617.2 1594.3,617.0 1594.6,617.4 1594.8,617.4 1595.1,617.9 1595.4,617.1 1595.7,617.7 1595.9,617.3 1596.2,617.0 1596.5,618.8 1596.7,617.9 1597.0,618.3 1597.3,619.1 1597.6,618.0 1597.8,618.1 1598.1,618.1 1598.4,618.3 1598.7,617.7 1598.9,618.9 1599.2,618.1 1599.5,618.5 1599.8,619.3 1600.0,619.5 1600.3,619.1 1600.6,618.3 1600.8,618.4 1601.1,617.7 1601.4,618.2 1601.7,618.3 1601.9,618.5 1602.2,618.5 1602.5,618.5 1602.8,618.1 1603.0,619.1 1603.3,619.6 1603.6,620.2 1603.9,619.4 1604.1,619.1 1604.4,619.3 1604.7,620.4 1605.0,620.2 1605.2,620.2 1605.5,619.4 1605.8,619.1 1606.0,619.7 1606.3,619.9 1606.6,619.2 1606.9,619.9 1607.1,619.6 1607.4,619.5 1607.7,635.9 1608.0,636.5 1608.2,636.4 1608.5,643.4 1608.8,642.9 1609.1,642.9 1609.3,642.8 1609.6,642.3 1609.9,643.2 1610.2,643.2 1610.4,642.6 1610.7,643.4 1611.0,643.1 1611.2,642.9 1611.5,642.9 1611.8,643.2 1612.1,642.8 1612.3,643.0 1612.6,642.6 1612.9,643.6 1613.2,643.1 1613.4,643.2 1613.7,643.9 1614.0,643.4 1614.3,643.6 1614.5,643.7 1614.8,643.7 1615.1,643.7 1615.4,643.3 1615.6,643.1 1615.9,642.5 1616.2,643.2 1616.4,643.7 1616.7,642.8 1617.0,643.6 1617.3,643.7 1617.5,642.8 1617.8,643.0 1618.1,643.4 1618.4,642.9 1618.6,643.4 1618.9,643.2 1619.2,643.7 1619.5,644.1 1619.7,643.7 1620.0,644.1 1620.3,643.6 1620.5,643.7 1620.8,643.4 1621.1,643.3 1621.4,642.6 1621.6,644.1 1621.9,643.8 1622.2,643.4 1622.5,643.8 1622.7,643.0 1623.0,643.9 1623.3,643.5 1623.6,642.8 1623.8,643.1 1624.1,642.1 1624.4,642.8 1624.7,643.1 1624.9,643.7 1625.2,642.8 1625.5,642.4 1625.7,642.8 1626.0,642.9 1626.3,643.0 1626.6,642.3 1626.8,642.4 1627.1,643.3 1627.4,643.7 1627.7,644.0 1627.9,644.0 1628.2,643.7 1628.5,642.9 1628.8,643.9 1629.0,644.3 1629.3,643.7 1629.6,644.5 1629.9,643.6 1630.1,643.6 1630.4,643.4 1630.7,642.9 1630.9,642.3 1631.2,643.2 1631.5,643.5 1631.8,643.3 1632.0,643.3 1632.3,643.9 1632.6,644.4 1632.9,644.1 1633.1,644.7 1633.4,644.4 1633.7,644.2 1634.0,644.6 1634.2,644.5 1634.5,644.3 1634.8,643.7 1635.0,644.0 1635.3,643.5 1635.6,643.1 1635.9,644.5 1636.1,643.6 1636.4,643.8 1636.7,644.3 1637.0,643.2 1637.2,643.7 1637.5,643.1 1637.8,643.5 1638.1,643.4 1638.3,643.2 1638.6,642.5 1638.9,643.2 1639.2,643.5 1639.4,644.8 1639.7,644.2 1640.0,644.1 1640.2,643.6 1640.5,643.9 1640.8,643.5 1641.1,643.4 1641.3,643.6 1641.6,644.3 1641.9,643.5 1642.2,644.1 1642.4,644.4 1642.7,644.2 1643.0,643.7 1643.3,643.5 1643.5,643.4 1643.8,643.3 1644.1,643.5 1644.4,643.7 1644.6,644.1 1644.9,644.1 1645.2,644.0 1645.4,643.3 1645.7,643.5 1646.0,643.9 1646.3,643.1 1646.5,643.8 1646.8,644.3 1647.1,643.1 1647.4,643.4 1647.6,643.8 1647.9,644.1 1648.2,643.0 1648.5,643.4 1648.7,644.0 1649.0,642.7 1649.3,643.6 1649.6,643.6 1649.8,643.8 1650.1,643.8 1650.4,643.4 1650.6,644.1 1650.9,644.6 1651.2,644.6 1651.5,643.0 1651.7,643.4 1652.0,643.9 1652.3,643.4 1652.6,643.8 1652.8,643.4 1653.1,643.1 1653.4,643.9 1653.7,643.5 1653.9,643.4 1654.2,643.3 1654.5,642.9 1654.7,643.0 1655.0,642.7 1655.3,643.8 1655.6,644.0 1655.8,643.4 1656.1,644.4 1656.4,643.9 1656.7,643.3 1656.9,643.6 1657.2,643.7 1657.5,643.2 1657.8,643.5 1658.0,643.6 1658.3,644.3 1658.6,644.0 1658.9,644.4 1659.1,643.7 1659.4,643.7 1659.7,643.9 1659.9,643.6 1660.2,643.1 1660.5,643.4 1660.8,643.5 1661.0,643.3 1661.3,643.6 1661.6,644.0 1661.9,643.1 1662.1,644.3 1662.4,643.6 1662.7,643.4 1663.0,644.6 1663.2,644.5 1663.5,644.1 1663.8,643.8 1664.1,644.2 1664.3,644.0 1664.6,644.7 1664.9,644.0 1665.1,643.7 1665.4,644.2 1665.7,644.3 1666.0,643.2 1666.2,643.7 1666.5,644.6 1666.8,644.5 1667.1,643.8 1667.3,644.0 1667.6,644.1 1667.9,644.5 1668.2,643.7 1668.4,643.5 1668.7,644.0 1669.0,643.4 1669.2,643.7 1669.5,644.0 1669.8,643.8 1670.1,644.6 1670.3,644.2 1670.6,644.4 1670.9,644.4 1671.2,643.4 1671.4,642.8 1671.7,643.1 1672.0,643.7 1672.3,644.4 1672.5,644.6 1672.8,644.2 1673.1,643.7 1673.4,643.3 1673.6,643.5 1673.9,643.4 1674.2,643.3 1674.4,644.0 1674.7,643.9 1675.0,644.5 1675.3,645.1 1675.5,644.9 1675.8,644.8 1676.1,644.0 1676.4,644.2 1676.6,643.8 1676.9,644.2 1677.2,644.8 1677.5,644.4 1677.7,644.4 1678.0,645.2 1678.3,644.0 1678.6,643.6 1678.8,644.2 1679.1,644.4 1679.4,644.8 1679.6,645.1 1679.9,644.0 1680.2,644.3 1680.5,643.6 1680.7,644.3 1681.0,644.3 1681.3,644.0 1681.6,644.4 1681.8,644.4 1682.1,642.9 1682.4,644.3 1682.7,644.7 1682.9,644.0 1683.2,644.2 1683.5,643.8 1683.8,645.2 1684.0,644.6 1684.3,643.7 1684.6,644.5 1684.8,644.4 1685.1,644.5 1685.4,644.0 1685.7,643.3 1685.9,644.5 1686.2,644.4 1686.5,644.1 1686.8,644.5 1687.0,644.4 1687.3,643.6 1687.6,644.2 1687.9,643.6 1688.1,644.7 1688.4,644.0 1688.7,643.9 1688.9,644.4 1689.2,645.1 1689.5,644.7 1689.8,644.8 1690.0,645.3 1690.3,643.8 1690.6,644.3 1690.9,644.1 1691.1,644.5 1691.4,644.7 1691.7,644.0 1692.0,643.7 1692.2,643.6 1692.5,644.1 1692.8,644.0 1693.1,643.7 1693.3,644.4 1693.6,644.5 1693.9,644.5 1694.1,644.7 1694.4,644.2 1694.7,644.2 1695.0,644.4 1695.2,645.2 1695.5,644.6 1695.8,644.4 1696.1,644.5 1696.3,644.6 1696.6,644.1 1696.9,644.6 1697.2,644.5 1697.4,643.8 1697.7,644.0 1698.0,644.8 1698.3,644.6 1698.5,644.3 1698.8,644.0 1699.1,644.2 1699.3,644.0 1699.6,644.7 1699.9,643.9 1700.2,644.4 1700.4,643.7 1700.7,644.4 1701.0,644.4 1701.3,644.7 1701.5,645.1 1701.8,644.0 1702.1,644.2 1702.4,644.4 1702.6,643.8 1702.9,643.8 1703.2,644.7 1703.4,644.6 1703.7,644.3 1704.0,644.1 1704.3,644.8 1704.5,644.5 1704.8,643.8 1705.1,644.4 1705.4,644.4 1705.6,643.5 1705.9,644.0 1706.2,644.3 1706.5,643.9 1706.7,643.6 1707.0,644.2 1707.3,644.6 1707.6,643.6 1707.8,643.9 1708.1,643.9 1708.4,644.3 1708.6,644.3 1708.9,643.9 1709.2,645.0 1709.5,645.6 1709.7,645.8 1710.0,645.2 1710.3,644.8 1710.6,644.1 1710.8,643.9 1711.1,644.5 1711.4,644.0 1711.7,644.5 1711.9,643.7 1712.2,644.5 1712.5,644.4 1712.8,644.8 1713.0,644.3 1713.3,644.4 1713.6,643.7 1713.8,643.8 1714.1,644.0 1714.4,644.9 1714.7,644.2 1714.9,643.6 1715.2,643.6 1715.5,644.7 1715.8,645.5 1716.0,645.1 1716.3,644.6 1716.6,644.2 1716.9,644.6 1717.1,644.4 1717.4,644.0 1717.7,644.2 1718.0,644.3 1718.2,644.5 1718.5,643.7 1718.8,643.9 1719.0,644.5 1719.3,644.7 1719.6,644.9 1719.9,645.0 1720.1,644.4 1720.4,644.2 1720.7,644.6 1721.0,645.1 1721.2,645.1 1721.5,644.2 1721.8,644.7 1722.1,644.7 1722.3,643.7 1722.6,644.0 1722.9,644.2 1723.1,644.0 1723.4,644.0 1723.7,644.0 1724.0,644.5 1724.2,643.7 1724.5,644.5 1724.8,644.9 1725.1,645.8 1725.3,646.0 1725.6,644.9 1725.9,644.3 1726.2,644.1 1726.4,644.1 1726.7,644.9 1727.0,644.6 1727.3,644.8 1727.5,644.9 1727.8,644.6 1728.1,643.7 1728.3,643.9 1728.6,644.3 1728.9,644.1 1729.2,644.8 1729.4,644.7 1729.7,644.1 1730.0,643.7 1730.3,644.0 1730.5,645.4 1730.8,645.3 1731.1,645.2 1731.4,645.0 1731.6,644.7 1731.9,644.6 1732.2,645.4 1732.5,644.6 1732.7,643.9 1733.0,644.5 1733.3,643.2 1733.5,644.9 1733.8,643.9 1734.1,643.7 1734.4,644.6 1734.6,644.4 1734.9,644.4 1735.2,645.0 1735.5,644.4 1735.7,644.3 1736.0,645.1 1736.3,644.9 1736.6,644.5 1736.8,644.3 1737.1,644.6 1737.4,644.2 1737.6,644.1 1737.9,644.1 1738.2,642.9 1738.5,643.3 1738.7,643.5 1739.0,644.8 1739.3,645.0 1739.6,644.1 1739.8,643.1 1740.1,643.8 1740.4,643.0 1740.7,643.9 1740.9,644.3 1741.2,644.9 1741.5,645.0 1741.8,645.1 1742.0,644.7 1742.3,644.8 1742.6,644.4 1742.8,643.9 1743.1,643.6 1743.4,643.5 1743.7,643.7 1743.9,644.9 1744.2,644.0 1744.5,645.2 1744.8,643.4 1745.0,644.4 1745.3,644.8 1745.6,644.2 1745.9,644.2 1746.1,643.6 1746.4,643.7 1746.7,643.3 1747.0,644.9 1747.2,644.5 1747.5,644.5 1747.8,644.7 1748.0,644.5 1748.3,644.5 1748.6,644.5 1748.9,644.2 1749.1,643.9 1749.4,644.2 1749.7,644.3 1750.0,644.1 1750.2,645.1 1750.5,644.1 1750.8,644.3 1751.1,644.6 1751.3,645.2 1751.6,644.6 1751.9,645.5 1752.2,645.2 1752.4,645.2 1752.7,644.7 1753.0,644.5 1753.2,644.4 1753.5,644.0 1753.8,643.2 1754.1,643.8 1754.3,644.5 1754.6,644.4 1754.9,644.3 1755.2,644.0 1755.4,644.4 1755.7,644.2 1756.0,644.7 1756.3,644.8 1756.5,644.7 1756.8,644.8 1757.1,643.9 1757.3,644.6 1757.6,645.0 1757.9,644.4 1758.2,645.3 1758.4,645.6 1758.7,644.7 1759.0,645.1 1759.3,644.9 1759.5,643.9 1759.8,644.5 1760.1,644.1 1760.4,644.0 1760.6,643.8 1760.9,644.2 1761.2,643.9 1761.5,644.1 1761.7,644.2 1762.0,644.3 1762.3,644.3 1762.5,644.5 1762.8,644.7 1763.1,643.2 1763.4,643.3 1763.6,644.8 1763.9,644.9 1764.2,645.8 1764.5,645.5 1764.7,645.5 1765.0,644.8 1765.3,644.2 1765.6,643.6 1765.8,643.9 1766.1,644.0 1766.4,643.9 1766.7,644.5 1766.9,644.5 1767.2,644.0 1767.5,644.2 1767.7,643.9 1768.0,644.1 1768.3,644.3 1768.6,644.8 1768.8,644.7 1769.1,644.1 1769.4,644.3 1769.7,644.1 1769.9,644.4 1770.2,644.0 1770.5,644.5 1770.8,644.6 1771.0,645.3 1771.3,645.7 1771.6,644.8 1771.9,644.4 1772.1,644.7 1772.4,645.7 1772.7,645.6 1772.9,645.4 1773.2,645.0 1773.5,645.1 1773.8,644.4 1774.0,644.8 1774.3,644.5 1774.6,644.4 1774.9,644.2 1775.1,644.6 1775.4,644.2 1775.7,644.4 1776.0,644.9 1776.2,645.2 1776.5,645.7 1776.8,644.3 1777.0,644.9 1777.3,644.1 1777.6,644.7 1777.9,644.3 1778.1,644.5 1778.4,643.9 1778.7,644.8 1779.0,645.1 1779.2,644.9 1779.5,646.1 1779.8,645.9 1780.1,645.0 1780.3,645.2 1780.6,643.9 1780.9,644.6 1781.2,644.3 1781.4,643.6 1781.7,643.4 1782.0,643.5 1782.2,643.6 1782.5,643.1 1782.8,644.3 1783.1,644.2 1783.3,644.1 1783.6,643.6 1783.9,644.0 1784.2,644.2 1784.4,643.8 1784.7,644.6 1785.0,645.2 1785.3,645.3 1785.5,645.2 1785.8,645.0 1786.1,645.7 1786.4,644.7 1786.6,644.1 1786.9,644.3 1787.2,644.4 1787.4,644.7 1787.7,644.8 1788.0,644.6 1788.3,644.6 1788.5,643.7 1788.8,644.4 1789.1,644.8 1789.4,644.9 1789.6,644.4 1789.9,643.4 1790.2,643.7 1790.5,643.1 1790.7,644.6 1791.0,644.5 1791.3,644.3 1791.5,644.2 1791.8,645.0 1792.1,644.6 1792.4,645.0 1792.6,644.1 1792.9,644.5 1793.2,644.5 1793.5,644.9 1793.7,644.5 1794.0,643.8 1794.3,644.4 1794.6,645.5 1794.8,645.1 1795.1,644.4 1795.4,644.6 1795.7,644.3 1795.9,644.3 1796.2,644.1 1796.5,643.6 1796.7,644.9 1797.0,644.6 1797.3,644.6 1797.6,643.6 1797.8,644.5 1798.1,644.4 1798.4,644.0 1798.7,644.5 1798.9,644.0 1799.2,645.0 1799.5,644.6 1799.8,645.5 1800.0,645.9 1800.3,645.1 1800.6,645.1 1800.9,645.1 1801.1,645.0 1801.4,645.0 1801.7,645.1 1801.9,644.7 1802.2,645.3 1802.5,645.1 1802.8,644.9 1803.0,645.0 1803.3,643.5 1803.6,642.5 1803.9,642.8 1804.1,643.9 1804.4,644.2 1804.7,643.7 1805.0,643.7 1805.2,644.2 1805.5,643.7 1805.8,643.2 1806.1,643.4 1806.3,643.7 1806.6,644.6 1806.9,644.3 1807.1,645.8 1807.4,644.8 1807.7,644.1 1808.0,644.2 1808.2,644.2 1808.5,644.8 1808.8,644.1 1809.1,644.3 1809.3,645.3 1809.6,645.0 1809.9,644.9 1810.2,644.6 1810.4,644.2 1810.7,644.5 1811.0,643.9 1811.2,644.7 1811.5,644.8 1811.8,644.2 1812.1,644.7 1812.3,644.6 1812.6,644.1 1812.9,645.1 1813.2,645.1 1813.4,644.4 1813.7,645.0 1814.0,643.6 1814.3,643.8 1814.5,644.2 1814.8,644.6 1815.1,644.0 1815.4,643.8 1815.6,644.8 1815.9,643.8" fill="none" stroke="#2a2aff" stroke-width="1.2" stroke-linejoin="round"/>
<rect x="1536.3" y="605.3" width="280.7" height="95.6" fill="none" stroke="#828282" stroke-width="2.1"/>
<text x="1537.8" y="716.6" text-anchor="middle" style="font-family:'DejaVu Serif','Liberation Serif',serif;font-size:10.6px;letter-spacing:0.9px" fill="#545454">0</text>
<text x="1592.5" y="716.6" text-anchor="middle" style="font-family:'DejaVu Serif','Liberation Serif',serif;font-size:10.6px;letter-spacing:0.9px" fill="#545454">200</text>
<text x="1647.2" y="716.6" text-anchor="middle" style="font-family:'DejaVu Serif','Liberation Serif',serif;font-size:10.6px;letter-spacing:0.9px" fill="#545454">400</text>
<text x="1701.9" y="716.6" text-anchor="middle" style="font-family:'DejaVu Serif','Liberation Serif',serif;font-size:10.6px;letter-spacing:0.9px" fill="#545454">600</text>
<text x="1756.6" y="716.6" text-anchor="middle" style="font-family:'DejaVu Serif','Liberation Serif',serif;font-size:10.6px;letter-spacing:0.9px" fill="#545454">800</text>
<text x="1811.4" y="716.6" text-anchor="middle" style="font-family:'DejaVu Serif','Liberation Serif',serif;font-size:10.6px;letter-spacing:0.9px" fill="#545454">1000</text>
<text x="1533.8" y="705.0" text-anchor="end" style="font-family:'DejaVu Serif','Liberation Serif',serif;font-size:10.6px;letter-spacing:0.9px" fill="#545454">0</text>
<text x="1533.8" y="671.5" text-anchor="end" style="font-family:'DejaVu Serif','Liberation Serif',serif;font-size:10.6px;letter-spacing:0.9px" fill="#545454">5000</text>
<text x="1533.8" y="638.0" text-anchor="end" style="font-family:'DejaVu Serif','Liberation Serif',serif;font-size:10.6px;letter-spacing:0.9px" fill="#545454">10000</text>
<rect x="1710.4" y="615.7" width="13.6" height="10.8" fill="#fff" stroke="#ccc" stroke-width="1"/>
<rect x="1711.6" y="617.0" width="11.2" height="8.2" fill="#0000ff"/>
<text x="1808.9" y="625.0" text-anchor="end" style="font-family:'DejaVu Serif','Liberation Serif',serif;font-size:11.4px;letter-spacing:0.36px" fill="#8a8a8a">aida02 3.7.W</text>
<path d="M1805.1 606.0L1816.1 595.0L1827.1 606.0L1816.1 617.0z" fill="#ff0000"/>
</g>
<g>
<path d="M172.8 742.6V837.7" stroke="#e7e7e7" stroke-width="1.2"/>
<path d="M227.5 742.6V837.7" stroke="#e7e7e7" stroke-width="1.2"/>
<path d="M282.3 742.6V837.7" stroke="#e7e7e7" stroke-width="1.2"/>
<path d="M337.0 742.6V837.7" stroke="#e7e7e7" stroke-width="1.2"/>
<path d="M391.7 742.6V837.7" stroke="#e7e7e7" stroke-width="1.2"/>
<path d="M118.1 806.4H396.9" stroke="#e7e7e7" stroke-width="1.2"/>
<path d="M118.1 775.0H396.9" stroke="#e7e7e7" stroke-width="1.2"/>
<path d="M118.1 743.7H396.9" stroke="#e7e7e7" stroke-width="1.2"/>
<polyline points="118.1,783.0 118.4,782.3 118.6,783.1 118.9,783.3 119.2,783.1 119.5,783.2 119.7,782.5 120.0,783.9 120.3,784.3 120.6,783.5 120.8,783.3 121.1,782.6 121.4,783.4 121.7,782.9 121.9,783.8 122.2,782.1 122.5,782.6 122.8,783.0 123.0,782.5 123.3,782.9 123.6,783.1 123.8,783.5 124.1,782.5 124.4,782.4 124.7,783.2 124.9,783.1 125.2,782.5 125.5,782.2 125.8,782.7 126.0,782.6 126.3,782.3 126.6,783.0 126.9,782.2 127.1,783.8 127.4,783.0 127.7,783.0 127.9,783.3 128.2,783.7 128.5,781.9 128.8,782.6 129.0,782.6 129.3,782.9 129.6,783.5 129.9,783.6 130.1,783.1 130.4,783.1 130.7,783.3 131.0,782.9 131.2,783.6 131.5,783.4 131.8,783.6 132.1,783.7 132.3,783.4 132.6,783.0 132.9,782.8 133.1,782.8 133.4,782.3 133.7,782.8 134.0,783.5 134.2,782.3 134.5,782.3 134.8,782.5 135.1,782.8 135.3,783.4 135.6,782.7 135.9,783.4 136.2,783.1 136.4,783.3 136.7,783.5 137.0,783.3 137.3,782.2 137.5,782.9 137.8,782.7 138.1,783.2 138.3,783.6 138.6,783.4 138.9,783.2 139.2,783.9 139.4,783.3 139.7,783.2 140.0,783.0 140.3,782.1 140.5,782.7 140.8,783.3 141.1,782.2 141.4,782.1 141.6,783.2 141.9,783.6 142.2,783.7 142.5,783.0 142.7,783.2 143.0,782.6 143.3,782.7 143.5,782.9 143.8,782.2 144.1,782.6 144.4,782.8 144.6,783.0 144.9,783.0 145.2,783.1 145.5,782.9 145.7,782.8 146.0,782.8 146.3,783.2 146.6,782.2 146.8,782.6 147.1,782.8 147.4,783.1 147.6,783.0 147.9,782.6 148.2,783.1 148.5,783.0 148.7,783.2 149.0,782.4 149.3,782.3 149.6,783.2 149.8,783.2 150.1,782.1 150.4,782.9 150.7,782.8 150.9,782.9 151.2,783.6 151.5,782.8 151.8,782.8 152.0,783.0 152.3,782.2 152.6,782.7 152.8,782.5 153.1,783.0 153.4,782.9 153.7,782.7 153.9,783.1 154.2,782.9 154.5,782.8 154.8,783.6 155.0,783.4 155.3,783.4 155.6,782.9 155.9,783.7 156.1,783.0 156.4,783.4 156.7,782.9 157.0,782.9 157.2,783.7 157.5,783.5 157.8,783.5 158.0,784.1 158.3,782.9 158.6,782.1 158.9,783.2 159.1,783.6 159.4,782.7 159.7,783.4 160.0,783.8 160.2,782.9 160.5,783.6 160.8,783.0 161.1,783.1 161.3,782.9 161.6,783.0 161.9,783.2 162.1,782.7 162.4,783.0 162.7,782.6 163.0,783.1 163.2,783.6 163.5,783.5 163.8,782.8 164.1,783.9 164.3,783.3 164.6,782.4 164.9,782.8 165.2,782.9 165.4,782.5 165.7,782.8 166.0,782.3 166.3,782.8 166.5,783.3 166.8,783.2 167.1,783.0 167.3,783.1 167.6,783.2 167.9,783.1 168.2,782.7 168.4,782.6 168.7,783.4 169.0,783.2 169.3,783.2 169.5,783.7 169.8,782.9 170.1,782.7 170.4,782.8 170.6,782.9 170.9,782.0 171.2,783.0 171.5,783.2 171.7,783.1 172.0,783.0 172.3,782.8 172.5,783.0 172.8,765.8 173.1,765.8 173.4,766.3 173.6,751.9 173.9,751.9 174.2,751.6 174.5,752.0 174.7,752.0 175.0,751.8 175.3,751.8 175.6,751.8 175.8,753.0 176.1,753.2 176.4,752.6 176.7,752.3 176.9,752.3 177.2,753.2 177.5,753.5 177.7,753.1 178.0,753.6 178.3,753.7 178.6,752.6 178.8,752.5 179.1,753.1 179.4,753.2 179.7,752.9 179.9,752.7 180.2,752.5 180.5,752.8 180.8,753.2 181.0,753.8 181.3,753.5 181.6,754.7 181.8,754.0 182.1,754.2 182.4,754.5 182.7,754.0 182.9,754.0 183.2,754.7 183.5,754.1 183.8,754.2 184.0,754.2 184.3,754.1 184.6,754.2 184.9,753.9 185.1,754.4 185.4,754.6 185.7,754.3 186.0,754.4 186.2,754.5 186.5,755.0 186.8,755.0 187.0,755.5 187.3,756.0 187.6,754.9 187.9,754.7 188.1,755.0 188.4,774.6 188.7,775.0 189.0,773.8 189.2,782.0 189.5,782.6 189.8,782.5 190.1,783.2 190.3,783.3 190.6,783.3 190.9,783.7 191.2,782.8 191.4,783.1 191.7,783.1 192.0,782.9 192.2,783.9 192.5,782.7 192.8,782.6 193.1,783.2 193.3,783.5 193.6,783.2 193.9,783.3 194.2,782.9 194.4,783.0 194.7,783.2 195.0,782.8 195.3,783.9 195.5,783.2 195.8,783.7 196.1,783.3 196.4,783.7 196.6,783.6 196.9,783.0 197.2,783.4 197.4,783.3 197.7,783.0 198.0,782.9 198.3,783.9 198.5,782.6 198.8,782.5 199.1,783.0 199.4,782.8 199.6,783.2 199.9,782.7 200.2,783.9 200.5,783.2 200.7,783.3 201.0,783.6 201.3,783.5 201.5,783.2 201.8,782.2 202.1,782.8 202.4,783.1 202.6,782.9 202.9,783.4 203.2,782.7 203.5,783.1 203.7,782.3 204.0,783.5 204.3,782.8 204.6,782.2 204.8,782.7 205.1,783.6 205.4,783.7 205.7,783.8 205.9,783.5 206.2,783.6 206.5,783.3 206.7,783.2 207.0,782.3 207.3,782.3 207.6,783.0 207.8,783.4 208.1,784.2 208.4,782.9 208.7,783.3 208.9,782.9 209.2,783.1 209.5,783.6 209.8,783.9 210.0,784.1 210.3,783.7 210.6,784.5 210.9,783.8 211.1,782.8 211.4,783.2 211.7,782.9 211.9,783.4 212.2,783.2 212.5,783.4 212.8,783.7 213.0,783.3 213.3,783.5 213.6,783.5 213.9,783.6 214.1,784.0 214.4,783.8 214.7,783.4 215.0,783.3 215.2,784.1 215.5,784.4 215.8,784.2 216.0,783.4 216.3,783.2 216.6,783.9 216.9,783.0 217.1,783.4 217.4,782.7 217.7,783.4 218.0,783.5 218.2,783.9 218.5,783.5 218.8,784.1 219.1,784.2 219.3,783.9 219.6,783.5 219.9,783.6 220.2,783.3 220.4,783.6 220.7,783.4 221.0,782.8 221.2,782.9 221.5,782.6 221.8,782.9 222.1,783.6 222.3,783.5 222.6,782.7 222.9,782.6 223.2,783.0 223.4,782.8 223.7,783.5 224.0,783.1 224.3,784.0 224.5,783.2 224.8,783.0 225.1,782.9 225.4,783.5 225.6,782.7 225.9,782.7 226.2,783.4 226.4,783.7 226.7,783.3 227.0,783.6 227.3,783.4 227.5,783.5 227.8,783.9 228.1,783.1 228.4,783.7 228.6,782.7 228.9,783.0 229.2,783.9 229.5,783.5 229.7,783.0 230.0,782.3 230.3,783.6 230.6,783.4 230.8,784.0 231.1,783.9 231.4,783.6 231.6,783.5 231.9,784.1 232.2,784.2 232.5,783.0 232.7,783.5 233.0,784.1 233.3,783.4 233.6,783.4 233.8,783.4 234.1,783.9 234.4,783.6 234.7,783.9 234.9,783.5 235.2,783.1 235.5,782.6 235.7,783.2 236.0,783.2 236.3,782.6 236.6,783.0 236.8,782.5 237.1,783.0 237.4,783.8 237.7,784.1 237.9,783.3 238.2,783.9 238.5,784.0 238.8,783.6 239.0,783.6 239.3,783.1 239.6,783.1 239.9,783.5 240.1,783.0 240.4,783.5 240.7,782.8 240.9,783.1 241.2,783.7 241.5,784.9 241.8,783.4 242.0,783.1 242.3,782.6 242.6,783.3 242.9,783.2 243.1,783.4 243.4,783.3 243.7,782.7 244.0,783.1 244.2,783.3 244.5,782.7 244.8,783.4 245.1,783.6 245.3,783.9 245.6,784.0 245.9,783.6 246.1,783.8 246.4,783.5 246.7,782.7 247.0,783.3 247.2,783.9 247.5,783.2 247.8,783.3 248.1,783.3 248.3,783.7 248.6,783.8 248.9,783.7 249.2,783.1 249.4,782.2 249.7,783.1 250.0,783.2 250.2,784.0 250.5,783.4 250.8,783.8 251.1,782.9 251.3,783.7 251.6,783.7 251.9,782.8 252.2,783.6 252.4,783.4 252.7,783.8 253.0,783.3 253.3,782.7 253.5,782.5 253.8,783.7 254.1,784.0 254.4,783.5 254.6,783.5 254.9,784.0 255.2,784.1 255.4,783.5 255.7,783.8 256.0,783.5 256.3,783.1 256.5,782.4 256.8,783.3 257.1,782.8 257.4,783.1 257.6,784.7 257.9,784.5 258.2,784.3 258.5,784.1 258.7,783.9 259.0,784.1 259.3,784.7 259.6,784.0 259.8,784.0 260.1,783.4 260.4,783.5 260.6,783.1 260.9,783.2 261.2,783.6 261.5,784.1 261.7,783.6 262.0,783.3 262.3,783.2 262.6,783.7 262.8,784.0 263.1,782.7 263.4,783.4 263.7,783.4 263.9,783.8 264.2,783.5 264.5,783.3 264.8,783.5 265.0,783.6 265.3,784.2 265.6,784.6 265.8,784.1 266.1,784.0 266.4,783.5 266.7,784.4 266.9,784.4 267.2,783.6 267.5,783.6 267.8,783.8 268.0,783.6 268.3,783.2 268.6,784.0 268.9,783.8 269.1,783.2 269.4,783.5 269.7,784.1 269.9,784.1 270.2,783.8 270.5,783.3 270.8,783.1 271.0,782.9 271.3,783.5 271.6,783.8 271.9,783.3 272.1,783.9 272.4,783.9 272.7,784.1 273.0,784.0 273.2,784.5 273.5,783.4 273.8,782.8 274.1,782.7 274.3,783.8 274.6,783.9 274.9,784.1 275.1,783.6 275.4,783.6 275.7,783.3 276.0,784.0 276.2,782.7 276.5,784.0 276.8,783.6 277.1,783.6 277.3,783.5 277.6,783.6 277.9,784.3 278.2,783.3 278.4,783.5 278.7,784.2 279.0,784.1 279.3,784.7 279.5,783.9 279.8,783.9 280.1,784.0 280.3,784.1 280.6,783.9 280.9,783.3 281.2,783.0 281.4,782.9 281.7,783.3 282.0,783.5 282.3,783.5 282.5,783.1 282.8,784.0 283.1,783.9 283.4,784.0 283.6,784.1 283.9,783.4 284.2,784.0 284.4,783.4 284.7,784.0 285.0,783.5 285.3,784.2 285.5,783.5 285.8,783.7 286.1,783.5 286.4,783.6 286.6,783.8 286.9,783.8 287.2,783.5 287.5,784.7 287.7,784.0 288.0,783.9 288.3,783.6 288.6,783.2 288.8,783.4 289.1,783.4 289.4,783.7 289.6,783.7 289.9,783.3 290.2,783.2 290.5,784.0 290.7,782.7 291.0,783.0 291.3,783.8 291.6,784.0 291.8,784.0 292.1,784.2 292.4,784.0 292.7,783.9 292.9,784.1 293.2,783.4 293.5,783.7 293.8,782.7 294.0,783.5 294.3,782.7 294.6,783.3 294.8,783.2 295.1,784.7 295.4,784.3 295.7,784.0 295.9,784.1 296.2,783.5 296.5,783.1 296.8,782.8 297.0,783.3 297.3,783.7 297.6,783.7 297.9,783.9 298.1,784.0 298.4,783.3 298.7,783.9 299.0,784.1 299.2,783.8 299.5,783.9 299.8,784.4 300.0,784.0 300.3,784.3 300.6,784.6 300.9,784.1 301.1,783.7 301.4,783.3 301.7,783.6 302.0,783.5 302.2,783.4 302.5,783.9 302.8,783.6 303.1,784.1 303.3,784.8 303.6,784.1 303.9,784.2 304.1,784.0 304.4,782.9 304.7,783.5 305.0,784.4 305.2,784.0 305.5,784.1 305.8,784.3 306.1,783.7 306.3,783.9 306.6,784.5 306.9,783.4 307.2,783.5 307.4,783.2 307.7,783.8 308.0,784.5 308.3,784.2 308.5,783.8 308.8,784.6 309.1,783.8 309.3,784.2 309.6,784.3 309.9,784.0 310.2,783.9 310.4,783.7 310.7,782.8 311.0,783.5 311.3,782.8 311.5,783.5 311.8,783.8 312.1,784.3 312.4,784.5 312.6,783.9 312.9,784.4 313.2,784.2 313.5,784.0 313.7,783.2 314.0,783.9 314.3,784.7 314.5,783.9 314.8,784.0 315.1,783.5 315.4,783.6 315.6,783.6 315.9,783.9 316.2,783.8 316.5,784.4 316.7,784.7 317.0,784.0 317.3,784.2 317.6,784.3 317.8,784.4 318.1,785.0 318.4,784.4 318.6,784.1 318.9,784.8 319.2,784.0 319.5,783.9 319.7,782.9 320.0,783.2 320.3,783.9 320.6,783.7 320.8,783.7 321.1,783.7 321.4,783.7 321.7,783.8 321.9,783.0 322.2,783.7 322.5,784.3 322.8,784.7 323.0,784.1 323.3,783.7 323.6,784.1 323.8,783.2 324.1,783.6 324.4,783.6 324.7,783.8 324.9,784.1 325.2,784.4 325.5,784.4 325.8,783.9 326.0,783.7 326.3,783.5 326.6,783.6 326.9,784.1 327.1,784.9 327.4,784.4 327.7,784.5 328.0,784.5 328.2,783.5 328.5,784.8 328.8,783.9 329.0,784.0 329.3,782.9 329.6,783.9 329.9,784.4 330.1,783.7 330.4,783.2 330.7,783.6 331.0,783.5 331.2,784.9 331.5,784.4 331.8,783.7 332.1,784.5 332.3,784.0 332.6,784.2 332.9,784.4 333.2,784.6 333.4,783.8 333.7,783.6 334.0,783.2 334.2,783.7 334.5,783.7 334.8,783.1 335.1,783.7 335.3,783.9 335.6,783.1 335.9,783.6 336.2,783.6 336.4,783.9 336.7,784.2 337.0,784.2 337.3,783.7 337.5,783.4 337.8,784.1 338.1,784.0 338.3,784.3 338.6,784.5 338.9,784.0 339.2,783.9 339.4,783.9 339.7,784.5 340.0,783.2 340.3,784.0 340.5,784.0 340.8,782.9 341.1,783.8 341.4,783.5 341.6,783.8 341.9,784.0 342.2,784.9 342.5,784.1 342.7,783.8 343.0,782.7 343.3,783.8 343.5,784.7 343.8,784.6 344.1,784.2 344.4,783.6 344.6,783.6 344.9,783.6 345.2,784.5 345.5,784.1 345.7,783.4 346.0,783.5 346.3,783.5 346.6,783.7 346.8,784.9 347.1,784.6 347.4,783.6 347.7,783.4 347.9,784.1 348.2,783.6 348.5,784.4 348.7,783.8 349.0,783.8 349.3,784.7 349.6,784.3 349.8,783.7 350.1,783.6 350.4,783.6 350.7,783.9 350.9,784.4 351.2,783.8 351.5,784.3 351.8,783.9 352.0,784.2 352.3,784.2 352.6,784.0 352.9,784.1 353.1,784.5 353.4,784.0 353.7,784.1 353.9,783.5 354.2,783.2 354.5,783.6 354.8,784.0 355.0,783.5 355.3,783.8 355.6,783.7 355.9,783.5 356.1,783.4 356.4,783.7 356.7,784.0 357.0,783.5 357.2,783.6 357.5,782.9 357.8,783.7 358.0,783.8 358.3,783.9 358.6,784.2 358.9,783.4 359.1,782.6 359.4,782.9 359.7,783.3 360.0,784.1 360.2,784.3 360.5,783.0 360.8,784.0 361.1,784.1 361.3,784.0 361.6,783.1 361.9,783.4 362.2,784.1 362.4,784.0 362.7,784.2 363.0,783.4 363.2,783.9 363.5,783.2 363.8,783.8 364.1,783.7 364.3,784.3 364.6,783.5 364.9,783.3 365.2,784.2 365.4,784.0 365.7,783.8 366.0,784.0 366.3,783.9 366.5,784.2 366.8,783.2 367.1,784.1 367.4,784.5 367.6,784.6 367.9,783.7 368.2,783.3 368.4,784.4 368.7,783.7 369.0,783.5 369.3,783.6 369.5,783.2 369.8,783.1 370.1,783.2 370.4,783.9 370.6,784.3 370.9,783.8 371.2,783.9 371.5,783.3 371.7,784.1 372.0,783.7 372.3,783.5 372.5,783.5 372.8,783.8 373.1,783.9 373.4,784.5 373.6,784.4 373.9,783.9 374.2,783.9 374.5,782.8 374.7,783.5 375.0,783.5 375.3,783.3 375.6,783.2 375.8,783.0 376.1,783.6 376.4,783.6 376.7,782.9 376.9,783.4 377.2,784.0 377.5,783.3 377.7,783.6 378.0,783.5 378.3,783.5 378.6,783.8 378.8,783.6 379.1,782.6 379.4,783.5 379.7,782.7 379.9,782.9 380.2,783.9 380.5,783.8 380.8,784.2 381.0,783.6 381.3,782.7 381.6,783.8 381.9,783.6 382.1,784.4 382.4,783.1 382.7,783.5 382.9,783.7 383.2,784.0 383.5,784.5 383.8,784.1 384.0,783.3 384.3,782.9 384.6,783.9 384.9,784.1 385.1,784.1 385.4,783.5 385.7,784.0 386.0,784.5 386.2,783.8 386.5,783.4 386.8,782.5 387.1,783.5 387.3,783.8 387.6,784.0 387.9,783.8 388.1,784.3 388.4,784.9 388.7,784.5 389.0,784.4 389.2,783.2 389.5,783.2 389.8,783.4 390.1,784.4 390.3,783.7 390.6,783.7 390.9,783.5 391.2,784.5 391.4,784.2 391.7,783.8 392.0,783.9 392.2,784.0 392.5,784.4 392.8,784.5 393.1,784.3 393.3,783.8 393.6,784.3 393.9,784.2 394.2,783.8 394.4,783.6 394.7,783.7 395.0,784.0 395.3,783.8 395.5,784.0 395.8,784.4 396.1,784.1 396.4,784.3 396.6,785.0 396.9,784.3" fill="none" stroke="#2a2aff" stroke-width="1.2" stroke-linejoin="round"/>
<rect x="117.3" y="741.3" width="280.7" height="95.6" fill="none" stroke="#828282" stroke-width="2.1"/>
<text x="118.8" y="852.6" text-anchor="middle" style="font-family:'DejaVu Serif','Liberation Serif',serif;font-size:10.6px;letter-spacing:0.9px" fill="#545454">0</text>
<text x="173.5" y="852.6" text-anchor="middle" style="font-family:'DejaVu Serif','Liberation Serif',serif;font-size:10.6px;letter-spacing:0.9px" fill="#545454">200</text>
<text x="228.2" y="852.6" text-anchor="middle" style="font-family:'DejaVu Serif','Liberation Serif',serif;font-size:10.6px;letter-spacing:0.9px" fill="#545454">400</text>
<text x="282.9" y="852.6" text-anchor="middle" style="font-family:'DejaVu Serif','Liberation Serif',serif;font-size:10.6px;letter-spacing:0.9px" fill="#545454">600</text>
<text x="337.6" y="852.6" text-anchor="middle" style="font-family:'DejaVu Serif','Liberation Serif',serif;font-size:10.6px;letter-spacing:0.9px" fill="#545454">800</text>
<text x="392.4" y="852.6" text-anchor="middle" style="font-family:'DejaVu Serif','Liberation Serif',serif;font-size:10.6px;letter-spacing:0.9px" fill="#545454">1000</text>
<text x="114.8" y="841.9" text-anchor="end" style="font-family:'DejaVu Serif','Liberation Serif',serif;font-size:10.6px;letter-spacing:0.9px" fill="#545454">0</text>
<text x="114.8" y="810.6" text-anchor="end" style="font-family:'DejaVu Serif','Liberation Serif',serif;font-size:10.6px;letter-spacing:0.9px" fill="#545454">5000</text>
<text x="114.8" y="779.2" text-anchor="end" style="font-family:'DejaVu Serif','Liberation Serif',serif;font-size:10.6px;letter-spacing:0.9px" fill="#545454">10000</text>
<text x="114.8" y="747.9" text-anchor="end" style="font-family:'DejaVu Serif','Liberation Serif',serif;font-size:10.6px;letter-spacing:0.9px" fill="#545454">15000</text>
<rect x="291.4" y="751.7" width="13.6" height="10.8" fill="#fff" stroke="#ccc" stroke-width="1"/>
<rect x="292.6" y="753.0" width="11.2" height="8.2" fill="#0000ff"/>
<text x="389.9" y="761.0" text-anchor="end" style="font-family:'DejaVu Serif','Liberation Serif',serif;font-size:11.4px;letter-spacing:0.36px" fill="#8a8a8a">aida02 3.8.W</text>
<path d="M386.1 742.0L397.1 731.0L408.1 742.0L397.1 753.0z" fill="#ff0000"/>
</g>
<g>
<path d="M645.8 742.6V837.7" stroke="#e7e7e7" stroke-width="1.2"/>
<path d="M700.5 742.6V837.7" stroke="#e7e7e7" stroke-width="1.2"/>
<path d="M755.3 742.6V837.7" stroke="#e7e7e7" stroke-width="1.2"/>
<path d="M810.0 742.6V837.7" stroke="#e7e7e7" stroke-width="1.2"/>
<path d="M864.7 742.6V837.7" stroke="#e7e7e7" stroke-width="1.2"/>
<path d="M591.1 807.0H869.9" stroke="#e7e7e7" stroke-width="1.2"/>
<path d="M591.1 776.4H869.9" stroke="#e7e7e7" stroke-width="1.2"/>
<path d="M591.1 745.7H869.9" stroke="#e7e7e7" stroke-width="1.2"/>
<polyline points="591.1,783.8 591.4,783.6 591.6,783.5 591.9,784.1 592.2,784.2 592.5,783.8 592.7,784.1 593.0,784.1 593.3,783.9 593.6,783.3 593.8,783.8 594.1,783.8 594.4,784.1 594.7,783.7 594.9,784.2 595.2,783.8 595.5,784.1 595.8,783.7 596.0,784.6 596.3,784.5 596.6,785.0 596.8,784.9 597.1,784.2 597.4,784.2 597.7,783.7 597.9,783.8 598.2,783.1 598.5,783.2 598.8,783.4 599.0,783.5 599.3,784.1 599.6,784.4 599.9,783.9 600.1,783.8 600.4,784.2 600.7,783.8 600.9,783.0 601.2,783.7 601.5,783.8 601.8,784.4 602.0,783.6 602.3,784.2 602.6,784.5 602.9,783.8 603.1,784.0 603.4,783.5 603.7,784.1 604.0,783.8 604.2,784.1 604.5,784.4 604.8,783.5 605.1,784.8 605.3,784.1 605.6,784.3 605.9,784.8 606.1,784.5 606.4,783.6 606.7,783.6 607.0,783.9 607.2,783.8 607.5,784.8 607.8,784.4 608.1,784.5 608.3,783.9 608.6,783.5 608.9,783.2 609.2,784.1 609.4,783.5 609.7,783.5 610.0,784.0 610.3,784.5 610.5,784.1 610.8,783.9 611.1,783.8 611.3,783.9 611.6,784.4 611.9,784.4 612.2,784.2 612.4,784.5 612.7,784.1 613.0,783.7 613.3,783.9 613.5,783.0 613.8,783.4 614.1,783.9 614.4,784.1 614.6,783.9 614.9,784.4 615.2,784.0 615.5,784.0 615.7,784.1 616.0,784.4 616.3,784.0 616.5,784.1 616.8,784.3 617.1,784.6 617.4,784.3 617.6,784.8 617.9,784.0 618.2,784.0 618.5,783.7 618.7,783.8 619.0,784.9 619.3,784.1 619.6,784.0 619.8,783.6 620.1,783.4 620.4,783.7 620.6,783.9 620.9,785.0 621.2,784.2 621.5,784.2 621.7,784.0 622.0,784.2 622.3,784.1 622.6,784.0 622.8,784.0 623.1,784.1 623.4,783.6 623.7,783.2 623.9,783.4 624.2,784.1 624.5,783.8 624.8,783.6 625.0,783.9 625.3,784.2 625.6,784.3 625.8,784.5 626.1,783.6 626.4,783.7 626.7,784.5 626.9,784.7 627.2,784.3 627.5,782.9 627.8,783.6 628.0,783.5 628.3,783.9 628.6,784.3 628.9,784.3 629.1,783.8 629.4,784.6 629.7,783.7 630.0,784.4 630.2,784.7 630.5,783.9 630.8,783.8 631.0,784.4 631.3,784.1 631.6,783.5 631.9,783.7 632.1,783.9 632.4,783.8 632.7,784.3 633.0,784.2 633.2,783.7 633.5,784.3 633.8,784.6 634.1,783.8 634.3,784.3 634.6,785.2 634.9,784.9 635.1,784.1 635.4,784.5 635.7,783.6 636.0,784.5 636.2,784.2 636.5,783.5 636.8,783.9 637.1,783.5 637.3,784.1 637.6,784.4 637.9,783.4 638.2,783.3 638.4,783.5 638.7,784.0 639.0,783.8 639.3,784.0 639.5,784.6 639.8,785.1 640.1,784.6 640.3,784.1 640.6,783.7 640.9,783.9 641.2,782.9 641.4,784.0 641.7,783.7 642.0,784.0 642.3,784.2 642.5,783.7 642.8,784.1 643.1,784.4 643.4,784.1 643.6,784.4 643.9,784.6 644.2,785.0 644.5,785.0 644.7,783.3 645.0,784.4 645.3,783.9 645.5,783.8 645.8,766.6 646.1,766.8 646.4,767.6 646.6,752.4 646.9,752.3 647.2,752.6 647.5,752.2 647.7,752.9 648.0,753.6 648.3,753.0 648.6,753.6 648.8,752.5 649.1,752.9 649.4,752.6 649.7,751.8 649.9,752.8 650.2,753.3 650.5,753.7 650.7,753.0 651.0,753.4 651.3,753.2 651.6,753.2 651.8,753.0 652.1,753.7 652.4,753.5 652.7,754.1 652.9,754.5 653.2,754.0 653.5,755.0 653.8,753.8 654.0,753.8 654.3,753.9 654.6,754.0 654.8,754.1 655.1,754.1 655.4,754.0 655.7,754.1 655.9,753.6 656.2,754.6 656.5,754.7 656.8,754.2 657.0,754.4 657.3,754.0 657.6,753.9 657.9,754.9 658.1,754.3 658.4,754.4 658.7,755.2 659.0,755.1 659.2,755.3 659.5,755.5 659.8,755.9 660.0,755.9 660.3,755.4 660.6,756.3 660.9,755.8 661.1,755.6 661.4,754.3 661.7,755.6 662.0,755.1 662.2,755.7 662.5,756.1 662.8,775.8 663.1,775.9 663.3,775.9 663.6,784.4 663.9,783.9 664.2,784.9 664.4,783.5 664.7,784.4 665.0,783.8 665.2,783.7 665.5,784.4 665.8,783.9 666.1,784.8 666.3,784.0 666.6,784.0 666.9,783.6 667.2,783.5 667.4,783.1 667.7,783.1 668.0,783.5 668.3,783.6 668.5,783.5 668.8,784.5 669.1,784.2 669.4,783.6 669.6,784.0 669.9,784.1 670.2,783.7 670.4,784.0 670.7,784.2 671.0,784.8 671.3,784.0 671.5,783.7 671.8,784.2 672.1,784.4 672.4,784.5 672.6,784.6 672.9,783.6 673.2,784.4 673.5,783.9 673.7,783.6 674.0,783.7 674.3,784.4 674.5,784.9 674.8,784.7 675.1,784.6 675.4,784.3 675.6,783.8 675.9,783.4 676.2,784.1 676.5,784.2 676.7,783.8 677.0,784.5 677.3,784.5 677.6,784.6 677.8,784.3 678.1,783.8 678.4,783.7 678.7,784.1 678.9,784.0 679.2,784.8 679.5,784.8 679.7,784.5 680.0,784.4 680.3,783.9 680.6,783.3 680.8,783.8 681.1,783.7 681.4,784.1 681.7,784.1 681.9,783.4 682.2,784.1 682.5,783.8 682.8,784.4 683.0,784.4 683.3,784.1 683.6,784.2 683.9,783.7 684.1,783.6 684.4,784.3 684.7,783.5 684.9,784.2 685.2,783.7 685.5,784.7 685.8,783.5 686.0,783.4 686.3,783.6 686.6,784.0 686.9,785.2 687.1,784.6 687.4,784.4 687.7,784.9 688.0,784.2 688.2,783.9 688.5,784.8 688.8,784.9 689.0,783.9 689.3,784.2 689.6,784.5 689.9,784.2 690.1,784.3 690.4,784.2 690.7,783.9 691.0,784.4 691.2,784.5 691.5,784.7 691.8,784.4 692.1,784.2 692.3,784.2 692.6,783.9 692.9,783.8 693.2,784.0 693.4,784.7 693.7,784.3 694.0,784.6 694.2,784.8 694.5,784.1 694.8,783.8 695.1,784.2 695.3,784.1 695.6,783.8 695.9,784.0 696.2,783.9 696.4,784.0 696.7,783.7 697.0,783.9 697.3,784.0 697.5,784.1 697.8,784.3 698.1,784.9 698.4,784.4 698.6,784.4 698.9,783.9 699.2,785.0 699.4,785.4 699.7,783.9 700.0,784.7 700.3,784.5 700.5,784.7 700.8,783.7 701.1,784.2 701.4,784.1 701.6,784.6 701.9,784.7 702.2,784.6 702.5,784.1 702.7,784.1 703.0,784.4 703.3,784.0 703.6,783.2 703.8,783.6 704.1,784.0 704.4,783.4 704.6,783.2 704.9,783.7 705.2,783.7 705.5,783.6 705.7,782.9 706.0,784.0 706.3,784.3 706.6,783.8 706.8,784.2 707.1,784.5 707.4,783.9 707.7,783.9 707.9,783.7 708.2,784.0 708.5,783.4 708.7,783.7 709.0,783.8 709.3,783.8 709.6,784.4 709.8,783.3 710.1,785.2 710.4,784.7 710.7,785.0 710.9,784.6 711.2,784.9 711.5,785.0 711.8,784.2 712.0,783.9 712.3,784.1 712.6,783.6 712.9,783.8 713.1,783.7 713.4,783.8 713.7,784.5 713.9,784.6 714.2,785.1 714.5,785.1 714.8,784.3 715.0,784.0 715.3,784.7 715.6,785.3 715.9,784.5 716.1,785.3 716.4,784.7 716.7,784.3 717.0,784.7 717.2,783.6 717.5,784.3 717.8,783.8 718.1,783.6 718.3,783.9 718.6,784.3 718.9,784.7 719.1,784.3 719.4,784.7 719.7,784.4 720.0,784.6 720.2,783.8 720.5,783.8 720.8,784.2 721.1,784.1 721.3,784.3 721.6,784.8 721.9,784.3 722.2,783.6 722.4,783.9 722.7,784.0 723.0,784.0 723.2,783.8 723.5,783.9 723.8,783.3 724.1,783.8 724.3,783.6 724.6,783.5 724.9,783.9 725.2,783.6 725.4,783.8 725.7,784.1 726.0,783.2 726.3,784.0 726.5,784.6 726.8,784.2 727.1,784.2 727.4,783.8 727.6,784.8 727.9,785.0 728.2,784.8 728.4,783.8 728.7,784.4 729.0,785.2 729.3,784.2 729.5,784.1 729.8,784.7 730.1,785.2 730.4,784.1 730.6,785.0 730.9,784.5 731.2,784.4 731.5,784.8 731.7,783.7 732.0,784.2 732.3,784.8 732.6,784.1 732.8,784.4 733.1,784.4 733.4,784.3 733.6,784.5 733.9,783.8 734.2,783.7 734.5,784.7 734.7,784.9 735.0,783.6 735.3,784.3 735.6,783.9 735.8,785.1 736.1,785.2 736.4,784.6 736.7,784.0 736.9,783.8 737.2,784.5 737.5,784.2 737.8,785.2 738.0,785.0 738.3,784.8 738.6,784.2 738.8,784.9 739.1,785.2 739.4,785.1 739.7,785.1 739.9,784.7 740.2,784.9 740.5,785.2 740.8,784.9 741.0,783.8 741.3,784.9 741.6,784.0 741.9,784.9 742.1,784.5 742.4,784.7 742.7,783.1 742.9,784.1 743.2,784.5 743.5,784.8 743.8,784.6 744.0,784.5 744.3,783.7 744.6,783.7 744.9,784.3 745.1,783.9 745.4,784.2 745.7,784.4 746.0,784.7 746.2,784.8 746.5,784.6 746.8,785.0 747.1,783.9 747.3,784.3 747.6,783.7 747.9,784.1 748.1,784.1 748.4,783.7 748.7,784.5 749.0,784.3 749.2,784.9 749.5,784.5 749.8,783.9 750.1,784.4 750.3,785.1 750.6,784.7 750.9,784.7 751.2,784.8 751.4,784.4 751.7,784.3 752.0,785.0 752.3,784.9 752.5,784.9 752.8,784.5 753.1,784.7 753.3,784.5 753.6,784.1 753.9,783.8 754.2,784.6 754.4,783.3 754.7,784.2 755.0,784.8 755.3,784.5 755.5,784.6 755.8,783.7 756.1,784.7 756.4,783.6 756.6,783.7 756.9,784.2 757.2,784.6 757.4,785.0 757.7,784.3 758.0,784.0 758.3,784.4 758.5,784.1 758.8,784.8 759.1,784.8 759.4,784.8 759.6,783.8 759.9,784.7 760.2,784.9 760.5,785.7 760.7,784.3 761.0,784.3 761.3,784.1 761.6,784.9 761.8,783.9 762.1,784.2 762.4,784.0 762.6,784.5 762.9,784.7 763.2,784.7 763.5,784.1 763.7,784.3 764.0,785.4 764.3,785.4 764.6,785.0 764.8,784.3 765.1,783.9 765.4,784.5 765.7,785.1 765.9,784.7 766.2,784.9 766.5,784.6 766.8,784.6 767.0,785.2 767.3,785.2 767.6,784.8 767.8,784.6 768.1,783.9 768.4,783.9 768.7,783.8 768.9,784.2 769.2,784.6 769.5,785.6 769.8,785.3 770.0,785.2 770.3,785.3 770.6,785.1 770.9,784.9 771.1,784.8 771.4,784.9 771.7,784.4 772.0,785.0 772.2,785.3 772.5,784.2 772.8,784.8 773.0,786.0 773.3,784.1 773.6,785.0 773.9,785.0 774.1,784.6 774.4,784.8 774.7,784.6 775.0,784.8 775.2,785.4 775.5,785.1 775.8,785.2 776.1,784.7 776.3,785.4 776.6,784.4 776.9,784.7 777.1,784.5 777.4,784.2 777.7,783.7 778.0,783.6 778.2,784.2 778.5,784.5 778.8,784.0 779.1,784.0 779.3,785.0 779.6,785.2 779.9,785.0 780.2,785.3 780.4,784.6 780.7,784.1 781.0,784.1 781.3,784.5 781.5,783.8 781.8,784.3 782.1,784.8 782.3,785.7 782.6,784.6 782.9,784.6 783.2,784.9 783.4,784.1 783.7,784.3 784.0,784.5 784.3,784.6 784.5,785.1 784.8,784.8 785.1,784.6 785.4,784.5 785.6,784.6 785.9,784.5 786.2,785.0 786.5,784.7 786.7,784.0 787.0,784.3 787.3,783.8 787.5,783.9 787.8,783.8 788.1,784.5 788.4,784.6 788.6,785.0 788.9,785.1 789.2,784.7 789.5,784.5 789.7,784.2 790.0,784.3 790.3,784.2 790.6,784.4 790.8,783.8 791.1,784.2 791.4,784.1 791.6,783.4 791.9,783.9 792.2,784.5 792.5,784.4 792.7,784.6 793.0,784.3 793.3,784.4 793.6,784.8 793.8,784.7 794.1,785.0 794.4,784.6 794.7,784.0 794.9,784.9 795.2,784.6 795.5,784.6 795.8,784.9 796.0,784.3 796.3,784.8 796.6,784.3 796.8,784.6 797.1,784.3 797.4,784.1 797.7,784.2 797.9,784.4 798.2,785.0 798.5,784.4 798.8,784.8 799.0,784.6 799.3,784.8 799.6,784.7 799.9,784.9 800.1,783.8 800.4,784.6 800.7,784.3 801.0,784.4 801.2,784.0 801.5,784.7 801.8,785.4 802.0,784.7 802.3,784.5 802.6,784.0 802.9,784.6 803.1,784.7 803.4,785.7 803.7,784.4 804.0,784.8 804.2,784.3 804.5,784.8 804.8,785.0 805.1,784.4 805.3,784.3 805.6,784.6 805.9,785.0 806.2,784.6 806.4,784.5 806.7,784.4 807.0,784.8 807.2,785.0 807.5,784.1 807.8,783.7 808.1,784.8 808.3,785.9 808.6,784.9 808.9,784.6 809.2,784.7 809.4,784.1 809.7,784.0 810.0,785.2 810.3,785.1 810.5,785.6 810.8,784.3 811.1,784.7 811.3,784.0 811.6,784.4 811.9,784.7 812.2,784.8 812.4,784.9 812.7,784.1 813.0,784.6 813.3,784.2 813.5,784.5 813.8,785.2 814.1,784.6 814.4,784.1 814.6,785.0 814.9,785.2 815.2,784.5 815.5,784.4 815.7,785.0 816.0,784.3 816.3,784.4 816.5,785.0 816.8,784.5 817.1,784.9 817.4,784.3 817.6,784.5 817.9,784.8 818.2,784.8 818.5,785.1 818.7,784.8 819.0,784.4 819.3,784.4 819.6,784.7 819.8,784.1 820.1,783.7 820.4,784.4 820.7,784.4 820.9,784.5 821.2,784.0 821.5,785.2 821.7,784.7 822.0,784.5 822.3,784.6 822.6,784.4 822.8,784.5 823.1,784.4 823.4,784.7 823.7,784.6 823.9,784.6 824.2,784.2 824.5,784.6 824.8,784.9 825.0,785.2 825.3,783.8 825.6,783.9 825.9,784.9 826.1,784.3 826.4,784.0 826.7,784.8 826.9,784.5 827.2,784.1 827.5,785.2 827.8,784.4 828.0,785.0 828.3,784.7 828.6,785.4 828.9,785.4 829.1,785.0 829.4,784.6 829.7,784.2 830.0,784.0 830.2,783.7 830.5,784.4 830.8,785.3 831.0,784.2 831.3,785.0 831.6,784.4 831.9,784.2 832.1,784.2 832.4,784.8 832.7,784.6 833.0,784.6 833.2,785.6 833.5,785.1 833.8,784.5 834.1,784.5 834.3,784.4 834.6,783.9 834.9,784.7 835.2,784.5 835.4,783.7 835.7,785.2 836.0,784.9 836.2,785.3 836.5,784.8 836.8,784.5 837.1,783.6 837.3,784.3 837.6,784.9 837.9,784.6 838.2,785.0 838.4,784.5 838.7,784.1 839.0,785.0 839.3,785.2 839.5,784.4 839.8,785.1 840.1,785.0 840.4,785.3 840.6,784.6 840.9,783.8 841.2,783.6 841.4,784.1 841.7,785.3 842.0,785.4 842.3,784.7 842.5,785.6 842.8,784.1 843.1,784.5 843.4,784.9 843.6,784.8 843.9,784.5 844.2,784.4 844.5,784.1 844.7,783.8 845.0,784.3 845.3,784.9 845.5,784.8 845.8,784.7 846.1,784.9 846.4,784.5 846.6,785.0 846.9,784.4 847.2,785.3 847.5,785.7 847.7,785.5 848.0,785.6 848.3,784.2 848.6,785.6 848.8,784.7 849.1,784.6 849.4,784.6 849.7,784.7 849.9,784.4 850.2,785.2 850.5,784.6 850.7,784.7 851.0,785.1 851.3,783.7 851.6,784.2 851.8,783.6 852.1,784.2 852.4,784.6 852.7,784.1 852.9,784.8 853.2,784.3 853.5,785.4 853.8,785.2 854.0,785.0 854.3,784.8 854.6,785.1 854.9,784.7 855.1,785.0 855.4,785.3 855.7,784.7 855.9,785.6 856.2,785.7 856.5,785.4 856.8,785.1 857.0,785.6 857.3,783.8 857.6,784.6 857.9,784.7 858.1,784.7 858.4,784.6 858.7,784.4 859.0,785.1 859.2,785.6 859.5,784.7 859.8,784.4 860.1,784.3 860.3,784.2 860.6,784.6 860.9,783.7 861.1,784.5 861.4,784.2 861.7,783.9 862.0,785.0 862.2,784.7 862.5,785.4 862.8,784.7 863.1,784.9 863.3,785.2 863.6,785.0 863.9,785.6 864.2,785.1 864.4,784.8 864.7,784.9 865.0,784.6 865.2,784.6 865.5,784.4 865.8,785.0 866.1,785.0 866.3,784.8 866.6,784.7 866.9,784.9 867.2,785.2 867.4,785.4 867.7,784.3 868.0,783.8 868.3,784.7 868.5,783.9 868.8,784.7 869.1,784.6 869.4,784.3 869.6,784.2 869.9,785.0" fill="none" stroke="#2a2aff" stroke-width="1.2" stroke-linejoin="round"/>
<rect x="590.3" y="741.3" width="280.7" height="95.6" fill="none" stroke="#828282" stroke-width="2.1"/>
<text x="591.8" y="852.6" text-anchor="middle" style="font-family:'DejaVu Serif','Liberation Serif',serif;font-size:10.6px;letter-spacing:0.9px" fill="#545454">0</text>
<text x="646.5" y="852.6" text-anchor="middle" style="font-family:'DejaVu Serif','Liberation Serif',serif;font-size:10.6px;letter-spacing:0.9px" fill="#545454">200</text>
<text x="701.2" y="852.6" text-anchor="middle" style="font-family:'DejaVu Serif','Liberation Serif',serif;font-size:10.6px;letter-spacing:0.9px" fill="#545454">400</text>
<text x="755.9" y="852.6" text-anchor="middle" style="font-family:'DejaVu Serif','Liberation Serif',serif;font-size:10.6px;letter-spacing:0.9px" fill="#545454">600</text>
<text x="810.6" y="852.6" text-anchor="middle" style="font-family:'DejaVu Serif','Liberation Serif',serif;font-size:10.6px;letter-spacing:0.9px" fill="#545454">800</text>
<text x="865.4" y="852.6" text-anchor="middle" style="font-family:'DejaVu Serif','Liberation Serif',serif;font-size:10.6px;letter-spacing:0.9px" fill="#545454">1000</text>
<text x="587.8" y="841.9" text-anchor="end" style="font-family:'DejaVu Serif','Liberation Serif',serif;font-size:10.6px;letter-spacing:0.9px" fill="#545454">0</text>
<text x="587.8" y="811.2" text-anchor="end" style="font-family:'DejaVu Serif','Liberation Serif',serif;font-size:10.6px;letter-spacing:0.9px" fill="#545454">5000</text>
<text x="587.8" y="780.6" text-anchor="end" style="font-family:'DejaVu Serif','Liberation Serif',serif;font-size:10.6px;letter-spacing:0.9px" fill="#545454">10000</text>
<text x="587.8" y="749.9" text-anchor="end" style="font-family:'DejaVu Serif','Liberation Serif',serif;font-size:10.6px;letter-spacing:0.9px" fill="#545454">15000</text>
<rect x="764.4" y="751.7" width="13.6" height="10.8" fill="#fff" stroke="#ccc" stroke-width="1"/>
<rect x="765.6" y="753.0" width="11.2" height="8.2" fill="#0000ff"/>
<text x="862.9" y="761.0" text-anchor="end" style="font-family:'DejaVu Serif','Liberation Serif',serif;font-size:11.4px;letter-spacing:0.36px" fill="#8a8a8a">aida02 3.9.W</text>
<path d="M859.1 742.0L870.1 731.0L881.1 742.0L870.1 753.0z" fill="#ff0000"/>
</g>
<g>
<path d="M1118.8 742.6V837.7" stroke="#e7e7e7" stroke-width="1.2"/>
<path d="M1173.5 742.6V837.7" stroke="#e7e7e7" stroke-width="1.2"/>
<path d="M1228.3 742.6V837.7" stroke="#e7e7e7" stroke-width="1.2"/>
<path d="M1283.0 742.6V837.7" stroke="#e7e7e7" stroke-width="1.2"/>
<path d="M1337.7 742.6V837.7" stroke="#e7e7e7" stroke-width="1.2"/>
<path d="M1064.1 804.7H1342.9" stroke="#e7e7e7" stroke-width="1.2"/>
<path d="M1064.1 771.7H1342.9" stroke="#e7e7e7" stroke-width="1.2"/>
<polyline points="1064.1,780.0 1064.4,780.6 1064.6,780.0 1064.9,780.3 1065.2,780.5 1065.5,781.2 1065.7,779.5 1066.0,781.2 1066.3,780.7 1066.6,781.4 1066.8,780.4 1067.1,780.6 1067.4,780.6 1067.7,780.5 1067.9,780.2 1068.2,780.5 1068.5,780.1 1068.8,780.0 1069.0,780.2 1069.3,780.8 1069.6,781.1 1069.8,780.1 1070.1,780.2 1070.4,780.2 1070.7,780.7 1070.9,780.3 1071.2,780.8 1071.5,779.8 1071.8,780.0 1072.0,779.8 1072.3,780.1 1072.6,780.5 1072.9,780.4 1073.1,780.5 1073.4,781.4 1073.7,780.8 1073.9,781.0 1074.2,780.3 1074.5,780.5 1074.8,780.2 1075.0,780.8 1075.3,781.1 1075.6,781.2 1075.9,781.3 1076.1,780.5 1076.4,780.3 1076.7,780.7 1077.0,780.6 1077.2,780.2 1077.5,780.2 1077.8,780.1 1078.1,780.1 1078.3,780.4 1078.6,780.4 1078.9,779.8 1079.1,779.9 1079.4,780.4 1079.7,780.9 1080.0,781.4 1080.2,780.7 1080.5,779.9 1080.8,779.7 1081.1,779.2 1081.3,780.9 1081.6,780.7 1081.9,781.4 1082.2,780.4 1082.4,781.2 1082.7,781.1 1083.0,780.4 1083.3,779.3 1083.5,780.4 1083.8,780.8 1084.1,781.0 1084.3,780.8 1084.6,780.7 1084.9,781.1 1085.2,780.4 1085.4,780.3 1085.7,779.8 1086.0,779.8 1086.3,780.2 1086.5,780.1 1086.8,779.9 1087.1,779.3 1087.4,780.2 1087.6,781.3 1087.9,780.6 1088.2,780.4 1088.5,780.1 1088.7,780.8 1089.0,780.1 1089.3,779.8 1089.5,780.4 1089.8,779.9 1090.1,780.4 1090.4,780.1 1090.6,781.3 1090.9,781.1 1091.2,781.5 1091.5,781.8 1091.7,780.7 1092.0,780.1 1092.3,779.6 1092.6,780.3 1092.8,780.7 1093.1,780.1 1093.4,780.4 1093.6,780.3 1093.9,781.0 1094.2,780.5 1094.5,781.0 1094.7,780.7 1095.0,780.5 1095.3,781.0 1095.6,781.5 1095.8,781.1 1096.1,780.7 1096.4,780.8 1096.7,780.3 1096.9,780.2 1097.2,780.8 1097.5,780.8 1097.8,781.1 1098.0,780.7 1098.3,780.2 1098.6,780.3 1098.8,780.4 1099.1,780.2 1099.4,780.5 1099.7,780.0 1099.9,780.5 1100.2,780.3 1100.5,780.6 1100.8,780.4 1101.0,780.5 1101.3,779.8 1101.6,780.7 1101.9,781.0 1102.1,780.3 1102.4,780.7 1102.7,780.4 1103.0,780.5 1103.2,780.8 1103.5,780.1 1103.8,780.5 1104.0,780.9 1104.3,780.1 1104.6,781.0 1104.9,780.4 1105.1,780.2 1105.4,780.5 1105.7,780.5 1106.0,780.7 1106.2,780.9 1106.5,780.9 1106.8,780.5 1107.1,781.4 1107.3,780.7 1107.6,780.2 1107.9,779.9 1108.1,779.5 1108.4,780.6 1108.7,780.7 1109.0,780.6 1109.2,780.6 1109.5,780.5 1109.8,780.2 1110.1,780.0 1110.3,780.6 1110.6,780.9 1110.9,780.6 1111.2,780.5 1111.4,780.1 1111.7,779.7 1112.0,780.3 1112.3,780.1 1112.5,780.0 1112.8,780.0 1113.1,781.3 1113.3,780.7 1113.6,780.2 1113.9,779.7 1114.2,779.4 1114.4,779.9 1114.7,780.4 1115.0,780.9 1115.3,780.7 1115.5,780.6 1115.8,780.7 1116.1,780.3 1116.4,779.9 1116.6,779.2 1116.9,781.0 1117.2,780.5 1117.5,779.9 1117.7,779.9 1118.0,780.6 1118.3,781.1 1118.5,765.5 1118.8,764.9 1119.1,764.9 1119.4,751.5 1119.6,750.9 1119.9,751.6 1120.2,751.7 1120.5,752.4 1120.7,753.3 1121.0,752.8 1121.3,752.9 1121.6,752.6 1121.8,752.5 1122.1,752.5 1122.4,753.8 1122.7,752.1 1122.9,753.0 1123.2,752.9 1123.5,752.6 1123.7,752.1 1124.0,753.5 1124.3,752.3 1124.6,752.5 1124.8,753.8 1125.1,753.3 1125.4,753.8 1125.7,754.3 1125.9,754.3 1126.2,753.1 1126.5,753.4 1126.8,753.3 1127.0,754.0 1127.3,753.7 1127.6,753.2 1127.8,754.5 1128.1,754.0 1128.4,753.8 1128.7,754.5 1128.9,754.9 1129.2,755.7 1129.5,755.2 1129.8,754.8 1130.0,754.8 1130.3,754.6 1130.6,753.3 1130.9,754.3 1131.1,754.0 1131.4,754.9 1131.7,754.9 1132.0,755.2 1132.2,755.3 1132.5,754.9 1132.8,755.6 1133.0,754.8 1133.3,755.9 1133.6,755.4 1133.9,755.3 1134.1,755.7 1134.4,754.3 1134.7,754.6 1135.0,772.7 1135.2,774.1 1135.5,772.9 1135.8,780.4 1136.1,780.8 1136.3,780.4 1136.6,780.3 1136.9,780.5 1137.2,781.6 1137.4,781.3 1137.7,781.2 1138.0,780.8 1138.2,780.3 1138.5,780.0 1138.8,779.2 1139.1,780.2 1139.3,780.3 1139.6,779.8 1139.9,781.5 1140.2,781.7 1140.4,780.6 1140.7,780.5 1141.0,779.9 1141.3,780.1 1141.5,781.2 1141.8,780.7 1142.1,780.3 1142.4,781.0 1142.6,780.1 1142.9,780.9 1143.2,780.7 1143.4,780.2 1143.7,779.5 1144.0,780.5 1144.3,780.3 1144.5,779.9 1144.8,780.5 1145.1,780.9 1145.4,781.2 1145.6,781.2 1145.9,780.6 1146.2,780.4 1146.5,780.3 1146.7,780.6 1147.0,780.2 1147.3,779.9 1147.5,780.2 1147.8,780.5 1148.1,780.6 1148.4,781.2 1148.6,779.9 1148.9,780.1 1149.2,780.1 1149.5,781.3 1149.7,780.8 1150.0,780.8 1150.3,780.9 1150.6,780.1 1150.8,780.0 1151.1,780.2 1151.4,780.5 1151.7,780.6 1151.9,780.3 1152.2,780.2 1152.5,780.6 1152.7,781.1 1153.0,781.0 1153.3,780.3 1153.6,780.5 1153.8,780.9 1154.1,780.4 1154.4,779.9 1154.7,780.6 1154.9,780.3 1155.2,780.8 1155.5,781.2 1155.8,780.5 1156.0,781.4 1156.3,781.3 1156.6,780.9 1156.9,780.7 1157.1,780.8 1157.4,780.4 1157.7,781.4 1157.9,780.8 1158.2,780.5 1158.5,780.9 1158.8,781.0 1159.0,780.9 1159.3,780.9 1159.6,781.6 1159.9,781.1 1160.1,781.6 1160.4,781.1 1160.7,782.0 1161.0,781.4 1161.2,781.2 1161.5,781.5 1161.8,781.9 1162.0,781.7 1162.3,780.8 1162.6,781.0 1162.9,780.9 1163.1,780.4 1163.4,781.3 1163.7,780.2 1164.0,781.2 1164.2,780.7 1164.5,780.5 1164.8,781.3 1165.1,781.7 1165.3,781.5 1165.6,780.8 1165.9,780.2 1166.2,781.2 1166.4,781.3 1166.7,781.7 1167.0,781.3 1167.2,780.9 1167.5,781.0 1167.8,780.9 1168.1,782.0 1168.3,780.8 1168.6,780.5 1168.9,780.8 1169.2,780.7 1169.4,780.7 1169.7,780.5 1170.0,780.7 1170.3,780.8 1170.5,780.4 1170.8,780.3 1171.1,780.7 1171.4,781.2 1171.6,780.2 1171.9,780.8 1172.2,780.6 1172.4,780.7 1172.7,780.6 1173.0,781.9 1173.3,781.9 1173.5,781.5 1173.8,781.3 1174.1,780.9 1174.4,781.4 1174.6,781.3 1174.9,780.7 1175.2,780.9 1175.5,780.4 1175.7,781.1 1176.0,780.7 1176.3,780.5 1176.6,781.1 1176.8,779.7 1177.1,780.7 1177.4,780.7 1177.6,781.2 1177.9,780.8 1178.2,780.8 1178.5,780.7 1178.7,781.2 1179.0,781.5 1179.3,780.8 1179.6,780.8 1179.8,781.0 1180.1,780.9 1180.4,781.5 1180.7,781.3 1180.9,781.5 1181.2,780.9 1181.5,781.1 1181.7,780.8 1182.0,781.2 1182.3,781.0 1182.6,781.0 1182.8,781.7 1183.1,781.8 1183.4,781.0 1183.7,781.6 1183.9,782.2 1184.2,781.6 1184.5,780.9 1184.8,780.2 1185.0,780.1 1185.3,781.0 1185.6,780.7 1185.9,780.6 1186.1,780.5 1186.4,782.2 1186.7,781.5 1186.9,780.7 1187.2,781.2 1187.5,781.1 1187.8,780.0 1188.0,781.0 1188.3,781.7 1188.6,780.7 1188.9,780.3 1189.1,781.1 1189.4,781.0 1189.7,779.7 1190.0,780.7 1190.2,780.9 1190.5,781.7 1190.8,781.1 1191.1,781.0 1191.3,781.3 1191.6,781.2 1191.9,780.8 1192.1,781.6 1192.4,781.5 1192.7,780.3 1193.0,780.3 1193.2,780.3 1193.5,780.6 1193.8,780.9 1194.1,780.5 1194.3,780.4 1194.6,780.4 1194.9,781.3 1195.2,781.1 1195.4,781.4 1195.7,781.0 1196.0,781.3 1196.2,781.6 1196.5,781.5 1196.8,781.0 1197.1,781.2 1197.3,781.0 1197.6,781.1 1197.9,781.2 1198.2,780.5 1198.4,781.7 1198.7,780.9 1199.0,781.3 1199.3,781.4 1199.5,780.4 1199.8,780.9 1200.1,781.4 1200.4,781.5 1200.6,781.1 1200.9,781.4 1201.2,781.0 1201.4,781.1 1201.7,781.1 1202.0,781.1 1202.3,781.3 1202.5,781.3 1202.8,781.0 1203.1,781.5 1203.4,780.9 1203.6,781.7 1203.9,781.9 1204.2,782.3 1204.5,781.7 1204.7,781.6 1205.0,781.3 1205.3,781.5 1205.6,781.2 1205.8,781.4 1206.1,782.0 1206.4,781.3 1206.6,781.1 1206.9,781.3 1207.2,781.7 1207.5,781.1 1207.7,781.1 1208.0,780.4 1208.3,781.6 1208.6,781.1 1208.8,780.7 1209.1,781.3 1209.4,780.8 1209.7,780.4 1209.9,781.0 1210.2,780.9 1210.5,782.3 1210.8,781.3 1211.0,780.8 1211.3,781.6 1211.6,781.4 1211.8,782.3 1212.1,782.4 1212.4,781.6 1212.7,780.5 1212.9,780.9 1213.2,781.7 1213.5,780.2 1213.8,781.2 1214.0,781.5 1214.3,782.2 1214.6,781.4 1214.9,782.0 1215.1,781.4 1215.4,781.6 1215.7,781.2 1215.9,780.7 1216.2,781.5 1216.5,782.2 1216.8,781.1 1217.0,781.7 1217.3,781.2 1217.6,780.6 1217.9,780.6 1218.1,782.4 1218.4,781.0 1218.7,780.3 1219.0,780.8 1219.2,780.2 1219.5,781.5 1219.8,781.5 1220.1,781.1 1220.3,780.8 1220.6,780.6 1220.9,781.5 1221.1,781.5 1221.4,781.2 1221.7,782.0 1222.0,781.2 1222.2,781.2 1222.5,782.2 1222.8,781.6 1223.1,781.1 1223.3,781.0 1223.6,780.8 1223.9,781.2 1224.2,781.8 1224.4,781.5 1224.7,781.1 1225.0,781.0 1225.3,780.9 1225.5,782.2 1225.8,781.9 1226.1,781.8 1226.3,782.0 1226.6,781.5 1226.9,780.8 1227.2,780.3 1227.4,781.3 1227.7,781.4 1228.0,781.6 1228.3,781.0 1228.5,781.2 1228.8,780.9 1229.1,781.4 1229.4,781.5 1229.6,781.6 1229.9,781.6 1230.2,781.3 1230.4,781.3 1230.7,781.0 1231.0,781.6 1231.3,781.7 1231.5,780.5 1231.8,781.9 1232.1,780.8 1232.4,781.0 1232.6,781.9 1232.9,781.1 1233.2,781.6 1233.5,781.7 1233.7,781.0 1234.0,781.7 1234.3,781.1 1234.6,780.5 1234.8,781.3 1235.1,781.3 1235.4,781.6 1235.6,781.0 1235.9,782.2 1236.2,782.5 1236.5,781.5 1236.7,782.7 1237.0,781.6 1237.3,781.7 1237.6,781.3 1237.8,781.4 1238.1,781.3 1238.4,781.1 1238.7,781.6 1238.9,782.4 1239.2,781.9 1239.5,781.9 1239.8,781.3 1240.0,781.5 1240.3,781.1 1240.6,781.6 1240.8,781.1 1241.1,781.8 1241.4,781.7 1241.7,781.9 1241.9,780.5 1242.2,780.6 1242.5,780.7 1242.8,781.0 1243.0,781.3 1243.3,781.4 1243.6,781.2 1243.9,781.6 1244.1,782.0 1244.4,782.0 1244.7,782.2 1245.0,782.6 1245.2,781.4 1245.5,781.1 1245.8,781.2 1246.0,781.5 1246.3,780.6 1246.6,780.8 1246.9,781.4 1247.1,781.8 1247.4,781.6 1247.7,781.7 1248.0,780.9 1248.2,781.5 1248.5,781.5 1248.8,781.1 1249.1,780.8 1249.3,780.7 1249.6,781.8 1249.9,781.8 1250.1,781.8 1250.4,781.5 1250.7,781.8 1251.0,781.2 1251.2,781.0 1251.5,781.3 1251.8,781.2 1252.1,780.7 1252.3,781.3 1252.6,781.5 1252.9,781.3 1253.2,781.2 1253.4,781.7 1253.7,780.9 1254.0,781.9 1254.3,781.6 1254.5,782.1 1254.8,780.8 1255.1,781.2 1255.3,781.5 1255.6,781.6 1255.9,781.2 1256.2,781.0 1256.4,781.1 1256.7,780.7 1257.0,780.7 1257.3,781.2 1257.5,781.8 1257.8,782.1 1258.1,781.2 1258.4,782.5 1258.6,782.5 1258.9,781.6 1259.2,781.5 1259.5,781.4 1259.7,781.6 1260.0,782.3 1260.3,781.8 1260.5,781.9 1260.8,781.6 1261.1,782.0 1261.4,781.3 1261.6,781.8 1261.9,781.3 1262.2,781.5 1262.5,781.2 1262.7,781.2 1263.0,781.3 1263.3,782.7 1263.6,782.0 1263.8,780.9 1264.1,781.7 1264.4,782.2 1264.6,782.3 1264.9,781.3 1265.2,781.0 1265.5,781.7 1265.7,781.4 1266.0,781.9 1266.3,781.5 1266.6,780.6 1266.8,781.0 1267.1,781.2 1267.4,781.6 1267.7,781.8 1267.9,781.0 1268.2,781.8 1268.5,782.1 1268.8,782.6 1269.0,782.0 1269.3,782.1 1269.6,781.3 1269.8,781.8 1270.1,782.2 1270.4,781.5 1270.7,781.8 1270.9,781.7 1271.2,781.1 1271.5,781.0 1271.8,781.2 1272.0,781.1 1272.3,781.4 1272.6,780.8 1272.9,780.6 1273.1,780.9 1273.4,780.8 1273.7,781.2 1274.0,781.7 1274.2,781.6 1274.5,781.9 1274.8,781.7 1275.0,781.8 1275.3,782.2 1275.6,781.0 1275.9,781.5 1276.1,781.4 1276.4,781.9 1276.7,781.2 1277.0,781.6 1277.2,781.3 1277.5,782.3 1277.8,781.1 1278.1,780.9 1278.3,781.7 1278.6,781.5 1278.9,781.8 1279.2,781.1 1279.4,781.1 1279.7,780.8 1280.0,781.0 1280.2,780.9 1280.5,780.8 1280.8,781.6 1281.1,781.1 1281.3,782.0 1281.6,781.1 1281.9,781.0 1282.2,782.2 1282.4,782.3 1282.7,781.9 1283.0,781.3 1283.3,780.8 1283.5,781.1 1283.8,781.3 1284.1,781.2 1284.3,781.4 1284.6,781.9 1284.9,781.9 1285.2,780.4 1285.4,781.0 1285.7,782.0 1286.0,782.0 1286.3,781.6 1286.5,781.8 1286.8,781.3 1287.1,780.9 1287.4,781.5 1287.6,780.8 1287.9,781.1 1288.2,781.4 1288.5,782.0 1288.7,781.4 1289.0,780.1 1289.3,781.3 1289.5,781.2 1289.8,781.2 1290.1,781.5 1290.4,781.1 1290.6,781.4 1290.9,781.2 1291.2,781.7 1291.5,781.5 1291.7,781.2 1292.0,780.9 1292.3,782.0 1292.6,781.7 1292.8,781.2 1293.1,781.2 1293.4,782.1 1293.7,781.7 1293.9,781.3 1294.2,781.1 1294.5,782.8 1294.7,782.4 1295.0,781.9 1295.3,782.0 1295.6,781.6 1295.8,781.2 1296.1,781.8 1296.4,782.0 1296.7,782.0 1296.9,781.0 1297.2,781.2 1297.5,781.3 1297.8,782.0 1298.0,781.7 1298.3,781.6 1298.6,781.2 1298.9,781.6 1299.1,781.4 1299.4,780.9 1299.7,781.8 1299.9,781.6 1300.2,781.4 1300.5,782.0 1300.8,781.6 1301.0,781.1 1301.3,781.7 1301.6,782.1 1301.9,781.3 1302.1,781.5 1302.4,781.8 1302.7,781.3 1303.0,781.4 1303.2,781.6 1303.5,782.4 1303.8,781.9 1304.0,781.8 1304.3,781.8 1304.6,781.3 1304.9,781.0 1305.1,781.5 1305.4,781.8 1305.7,781.7 1306.0,781.0 1306.2,781.7 1306.5,781.6 1306.8,781.2 1307.1,781.5 1307.3,782.2 1307.6,781.9 1307.9,782.2 1308.2,781.6 1308.4,781.2 1308.7,781.0 1309.0,781.5 1309.2,781.6 1309.5,781.4 1309.8,781.3 1310.1,781.1 1310.3,781.4 1310.6,781.4 1310.9,782.0 1311.2,782.0 1311.4,781.6 1311.7,781.8 1312.0,782.0 1312.3,781.5 1312.5,781.6 1312.8,781.7 1313.1,781.2 1313.4,780.9 1313.6,781.6 1313.9,781.5 1314.2,781.7 1314.4,781.8 1314.7,782.4 1315.0,781.4 1315.3,781.5 1315.5,781.4 1315.8,781.2 1316.1,781.7 1316.4,781.8 1316.6,781.1 1316.9,781.4 1317.2,782.2 1317.5,781.9 1317.7,782.3 1318.0,781.3 1318.3,781.6 1318.5,781.7 1318.8,780.7 1319.1,781.2 1319.4,782.3 1319.6,781.3 1319.9,781.1 1320.2,781.3 1320.5,781.8 1320.7,781.8 1321.0,782.1 1321.3,782.4 1321.6,782.1 1321.8,781.7 1322.1,782.2 1322.4,781.4 1322.7,781.8 1322.9,781.6 1323.2,781.5 1323.5,782.1 1323.7,782.8 1324.0,782.2 1324.3,781.6 1324.6,781.5 1324.8,781.4 1325.1,781.5 1325.4,781.1 1325.7,780.8 1325.9,780.9 1326.2,781.6 1326.5,782.5 1326.8,782.3 1327.0,782.0 1327.3,782.3 1327.6,781.7 1327.9,782.1 1328.1,781.7 1328.4,782.1 1328.7,782.1 1328.9,781.0 1329.2,781.6 1329.5,781.2 1329.8,782.3 1330.0,781.6 1330.3,781.7 1330.6,781.3 1330.9,782.1 1331.1,782.3 1331.4,781.7 1331.7,780.9 1332.0,780.8 1332.2,782.0 1332.5,781.5 1332.8,782.1 1333.1,782.3 1333.3,781.7 1333.6,781.5 1333.9,781.4 1334.1,781.9 1334.4,781.3 1334.7,781.3 1335.0,781.6 1335.2,780.8 1335.5,781.1 1335.8,781.0 1336.1,782.0 1336.3,781.6 1336.6,781.2 1336.9,780.9 1337.2,781.9 1337.4,781.7 1337.7,781.4 1338.0,780.8 1338.2,781.9 1338.5,781.7 1338.8,781.3 1339.1,781.3 1339.3,781.4 1339.6,782.0 1339.9,783.0 1340.2,782.2 1340.4,781.8 1340.7,781.5 1341.0,781.6 1341.3,781.6 1341.5,782.2 1341.8,781.4 1342.1,781.5 1342.4,781.5 1342.6,781.5 1342.9,782.4" fill="none" stroke="#2a2aff" stroke-width="1.2" stroke-linejoin="round"/>
<rect x="1063.3" y="741.3" width="280.7" height="95.6" fill="none" stroke="#828282" stroke-width="2.1"/>
<text x="1064.8" y="852.6" text-anchor="middle" style="font-family:'DejaVu Serif','Liberation Serif',serif;font-size:10.6px;letter-spacing:0.9px" fill="#545454">0</text>
<text x="1119.5" y="852.6" text-anchor="middle" style="font-family:'DejaVu Serif','Liberation Serif',serif;font-size:10.6px;letter-spacing:0.9px" fill="#545454">200</text>
<text x="1174.2" y="852.6" text-anchor="middle" style="font-family:'DejaVu Serif','Liberation Serif',serif;font-size:10.6px;letter-spacing:0.9px" fill="#545454">400</text>
<text x="1228.9" y="852.6" text-anchor="middle" style="font-family:'DejaVu Serif','Liberation Serif',serif;font-size:10.6px;letter-spacing:0.9px" fill="#545454">600</text>
<text x="1283.6" y="852.6" text-anchor="middle" style="font-family:'DejaVu Serif','Liberation Serif',serif;font-size:10.6px;letter-spacing:0.9px" fill="#545454">800</text>
<text x="1338.4" y="852.6" text-anchor="middle" style="font-family:'DejaVu Serif','Liberation Serif',serif;font-size:10.6px;letter-spacing:0.9px" fill="#545454">1000</text>
<text x="1060.8" y="841.9" text-anchor="end" style="font-family:'DejaVu Serif','Liberation Serif',serif;font-size:10.6px;letter-spacing:0.9px" fill="#545454">0</text>
<text x="1060.8" y="808.9" text-anchor="end" style="font-family:'DejaVu Serif','Liberation Serif',serif;font-size:10.6px;letter-spacing:0.9px" fill="#545454">5000</text>
<text x="1060.8" y="775.9" text-anchor="end" style="font-family:'DejaVu Serif','Liberation Serif',serif;font-size:10.6px;letter-spacing:0.9px" fill="#545454">10000</text>
<rect x="1229.8" y="751.7" width="13.6" height="10.8" fill="#fff" stroke="#ccc" stroke-width="1"/>
<rect x="1231.0" y="753.0" width="11.2" height="8.2" fill="#0000ff"/>
<text x="1335.9" y="761.0" text-anchor="end" style="font-family:'DejaVu Serif','Liberation Serif',serif;font-size:11.4px;letter-spacing:0.36px" fill="#8a8a8a">aida02 3.10.W</text>
<path d="M1332.1 742.0L1343.1 731.0L1354.1 742.0L1343.1 753.0z" fill="#ff0000"/>
</g>
<g>
<path d="M1591.8 742.6V837.7" stroke="#e7e7e7" stroke-width="1.2"/>
<path d="M1646.5 742.6V837.7" stroke="#e7e7e7" stroke-width="1.2"/>
<path d="M1701.3 742.6V837.7" stroke="#e7e7e7" stroke-width="1.2"/>
<path d="M1756.0 742.6V837.7" stroke="#e7e7e7" stroke-width="1.2"/>
<path d="M1810.7 742.6V837.7" stroke="#e7e7e7" stroke-width="1.2"/>
<path d="M1537.1 807.0H1815.9" stroke="#e7e7e7" stroke-width="1.2"/>
<path d="M1537.1 776.4H1815.9" stroke="#e7e7e7" stroke-width="1.2"/>
<path d="M1537.1 745.7H1815.9" stroke="#e7e7e7" stroke-width="1.2"/>
<polyline points="1537.1,784.1 1537.4,784.2 1537.6,784.5 1537.9,784.7 1538.2,784.7 1538.5,785.5 1538.7,785.3 1539.0,784.5 1539.3,784.2 1539.6,784.5 1539.8,784.6 1540.1,784.4 1540.4,784.5 1540.7,784.4 1540.9,784.5 1541.2,784.1 1541.5,785.2 1541.8,783.6 1542.0,784.4 1542.3,785.3 1542.6,784.7 1542.8,784.4 1543.1,785.1 1543.4,784.5 1543.7,785.7 1543.9,784.8 1544.2,784.4 1544.5,784.7 1544.8,784.4 1545.0,784.6 1545.3,784.4 1545.6,783.6 1545.9,784.8 1546.1,784.8 1546.4,784.9 1546.7,784.9 1546.9,785.7 1547.2,785.0 1547.5,784.2 1547.8,784.5 1548.0,784.7 1548.3,784.1 1548.6,783.8 1548.9,784.8 1549.1,785.8 1549.4,785.2 1549.7,785.6 1550.0,785.6 1550.2,784.8 1550.5,784.4 1550.8,784.4 1551.1,784.3 1551.3,784.1 1551.6,784.3 1551.9,785.1 1552.1,784.5 1552.4,784.9 1552.7,784.4 1553.0,783.9 1553.2,784.0 1553.5,785.0 1553.8,784.2 1554.1,784.2 1554.3,785.4 1554.6,784.1 1554.9,783.4 1555.2,783.8 1555.4,784.0 1555.7,784.4 1556.0,785.8 1556.3,785.4 1556.5,785.5 1556.8,784.9 1557.1,784.7 1557.3,784.7 1557.6,784.8 1557.9,784.5 1558.2,784.8 1558.4,785.0 1558.7,784.3 1559.0,784.5 1559.3,784.5 1559.5,785.5 1559.8,785.1 1560.1,784.5 1560.4,785.3 1560.6,784.9 1560.9,784.6 1561.2,785.8 1561.5,785.3 1561.7,784.3 1562.0,785.0 1562.3,785.1 1562.5,784.5 1562.8,784.6 1563.1,784.0 1563.4,784.6 1563.6,784.9 1563.9,784.6 1564.2,784.5 1564.5,784.6 1564.7,784.9 1565.0,784.5 1565.3,785.3 1565.6,785.2 1565.8,784.2 1566.1,784.4 1566.4,784.8 1566.6,784.4 1566.9,783.7 1567.2,784.5 1567.5,784.3 1567.7,785.0 1568.0,784.7 1568.3,785.4 1568.6,785.2 1568.8,784.7 1569.1,785.5 1569.4,785.8 1569.7,784.9 1569.9,784.5 1570.2,785.1 1570.5,784.7 1570.8,784.3 1571.0,784.2 1571.3,784.0 1571.6,784.1 1571.8,784.6 1572.1,785.4 1572.4,784.5 1572.7,784.8 1572.9,784.5 1573.2,784.5 1573.5,783.4 1573.8,785.2 1574.0,784.8 1574.3,784.7 1574.6,784.2 1574.9,784.9 1575.1,784.9 1575.4,785.3 1575.7,785.2 1576.0,784.3 1576.2,783.5 1576.5,784.7 1576.8,784.2 1577.0,784.5 1577.3,784.9 1577.6,784.9 1577.9,784.9 1578.1,785.3 1578.4,785.1 1578.7,784.8 1579.0,784.2 1579.2,784.3 1579.5,784.6 1579.8,784.8 1580.1,785.1 1580.3,784.8 1580.6,785.1 1580.9,784.6 1581.1,783.9 1581.4,784.4 1581.7,784.3 1582.0,784.4 1582.2,784.3 1582.5,785.6 1582.8,784.8 1583.1,784.6 1583.3,784.7 1583.6,784.9 1583.9,784.2 1584.2,784.4 1584.4,784.5 1584.7,783.7 1585.0,783.9 1585.3,783.6 1585.5,783.9 1585.8,784.3 1586.1,784.5 1586.3,783.8 1586.6,784.3 1586.9,784.3 1587.2,785.0 1587.4,784.4 1587.7,784.5 1588.0,785.1 1588.3,784.5 1588.5,785.5 1588.8,784.2 1589.1,784.2 1589.4,784.2 1589.6,784.5 1589.9,784.8 1590.2,784.2 1590.5,783.7 1590.7,783.8 1591.0,784.7 1591.3,784.1 1591.5,766.7 1591.8,767.0 1592.1,767.8 1592.4,751.6 1592.6,752.0 1592.9,752.0 1593.2,752.0 1593.5,751.9 1593.7,752.6 1594.0,753.0 1594.3,752.5 1594.6,752.4 1594.8,751.6 1595.1,752.5 1595.4,751.7 1595.7,751.8 1595.9,752.4 1596.2,752.2 1596.5,752.4 1596.7,752.2 1597.0,752.7 1597.3,753.4 1597.6,752.8 1597.8,752.6 1598.1,752.6 1598.4,753.2 1598.7,753.0 1598.9,753.6 1599.2,753.3 1599.5,753.1 1599.8,753.3 1600.0,753.2 1600.3,753.1 1600.6,754.8 1600.8,754.9 1601.1,754.7 1601.4,755.3 1601.7,755.4 1601.9,754.1 1602.2,753.9 1602.5,754.4 1602.8,753.7 1603.0,753.8 1603.3,753.4 1603.6,754.2 1603.9,754.6 1604.1,753.5 1604.4,753.8 1604.7,754.2 1605.0,754.3 1605.2,754.5 1605.5,754.5 1605.8,754.5 1606.0,755.4 1606.3,755.6 1606.6,754.4 1606.9,755.9 1607.1,755.7 1607.4,754.9 1607.7,754.6 1608.0,755.1 1608.2,754.4 1608.5,775.2 1608.8,774.9 1609.1,776.3 1609.3,784.6 1609.6,784.3 1609.9,784.3 1610.2,784.1 1610.4,784.2 1610.7,785.2 1611.0,785.5 1611.2,784.9 1611.5,784.1 1611.8,784.6 1612.1,785.1 1612.3,783.9 1612.6,784.7 1612.9,784.6 1613.2,784.2 1613.4,784.9 1613.7,783.6 1614.0,784.2 1614.3,784.2 1614.5,785.2 1614.8,784.9 1615.1,784.1 1615.4,784.5 1615.6,784.7 1615.9,784.7 1616.2,784.6 1616.4,784.9 1616.7,785.5 1617.0,785.1 1617.3,785.2 1617.5,785.1 1617.8,784.7 1618.1,784.8 1618.4,784.9 1618.6,784.8 1618.9,785.0 1619.2,784.8 1619.5,784.7 1619.7,784.8 1620.0,784.7 1620.3,784.8 1620.5,785.0 1620.8,784.6 1621.1,785.0 1621.4,784.9 1621.6,785.8 1621.9,785.3 1622.2,784.3 1622.5,784.9 1622.7,785.3 1623.0,784.9 1623.3,785.0 1623.6,785.0 1623.8,784.7 1624.1,785.1 1624.4,785.4 1624.7,784.8 1624.9,784.4 1625.2,784.5 1625.5,783.9 1625.7,784.2 1626.0,784.8 1626.3,785.4 1626.6,784.9 1626.8,785.1 1627.1,785.2 1627.4,784.6 1627.7,785.1 1627.9,785.5 1628.2,786.0 1628.5,785.1 1628.8,786.0 1629.0,785.5 1629.3,784.7 1629.6,784.6 1629.9,785.3 1630.1,786.1 1630.4,785.6 1630.7,784.5 1630.9,785.5 1631.2,785.0 1631.5,785.5 1631.8,785.1 1632.0,784.8 1632.3,784.9 1632.6,784.1 1632.9,784.6 1633.1,785.0 1633.4,785.2 1633.7,785.2 1634.0,785.1 1634.2,784.8 1634.5,784.8 1634.8,785.3 1635.0,785.2 1635.3,784.8 1635.6,785.0 1635.9,784.7 1636.1,785.5 1636.4,785.4 1636.7,785.0 1637.0,785.7 1637.2,786.2 1637.5,785.5 1637.8,784.7 1638.1,784.2 1638.3,784.8 1638.6,784.7 1638.9,784.6 1639.2,784.7 1639.4,785.8 1639.7,785.7 1640.0,785.0 1640.2,784.9 1640.5,785.1 1640.8,785.1 1641.1,785.0 1641.3,785.0 1641.6,785.6 1641.9,784.9 1642.2,786.0 1642.4,785.3 1642.7,785.3 1643.0,786.0 1643.3,786.3 1643.5,785.8 1643.8,785.4 1644.1,785.3 1644.4,784.9 1644.6,785.6 1644.9,785.6 1645.2,785.9 1645.4,785.0 1645.7,784.9 1646.0,784.7 1646.3,784.8 1646.5,784.9 1646.8,785.3 1647.1,784.7 1647.4,785.3 1647.6,785.5 1647.9,784.6 1648.2,785.0 1648.5,785.1 1648.7,784.7 1649.0,785.3 1649.3,786.2 1649.6,785.6 1649.8,785.3 1650.1,785.6 1650.4,785.2 1650.6,785.3 1650.9,785.2 1651.2,785.1 1651.5,785.4 1651.7,785.5 1652.0,784.7 1652.3,785.0 1652.6,785.1 1652.8,784.9 1653.1,784.9 1653.4,784.8 1653.7,784.8 1653.9,784.9 1654.2,783.7 1654.5,784.7 1654.7,785.4 1655.0,785.1 1655.3,784.9 1655.6,785.1 1655.8,785.2 1656.1,785.2 1656.4,785.5 1656.7,785.3 1656.9,785.4 1657.2,785.8 1657.5,786.3 1657.8,785.5 1658.0,785.8 1658.3,785.7 1658.6,785.0 1658.9,784.8 1659.1,785.9 1659.4,785.7 1659.7,785.5 1659.9,785.6 1660.2,785.3 1660.5,785.4 1660.8,784.4 1661.0,785.4 1661.3,785.5 1661.6,785.1 1661.9,785.5 1662.1,785.3 1662.4,785.1 1662.7,785.1 1663.0,784.8 1663.2,785.2 1663.5,785.1 1663.8,785.1 1664.1,785.0 1664.3,785.1 1664.6,785.4 1664.9,785.8 1665.1,784.8 1665.4,785.3 1665.7,784.5 1666.0,785.1 1666.2,785.6 1666.5,785.5 1666.8,785.0 1667.1,786.0 1667.3,785.8 1667.6,784.8 1667.9,785.2 1668.2,784.9 1668.4,785.6 1668.7,785.4 1669.0,785.5 1669.2,786.1 1669.5,786.2 1669.8,785.8 1670.1,786.2 1670.3,785.3 1670.6,785.8 1670.9,785.5 1671.2,785.0 1671.4,785.4 1671.7,785.4 1672.0,785.4 1672.3,786.1 1672.5,785.7 1672.8,785.4 1673.1,785.2 1673.4,784.8 1673.6,785.3 1673.9,785.2 1674.2,784.7 1674.4,785.4 1674.7,785.6 1675.0,786.2 1675.3,786.1 1675.5,785.6 1675.8,786.1 1676.1,784.6 1676.4,785.3 1676.6,785.6 1676.9,784.9 1677.2,785.4 1677.5,784.8 1677.7,784.2 1678.0,785.2 1678.3,785.3 1678.6,784.9 1678.8,784.8 1679.1,785.2 1679.4,785.3 1679.6,784.9 1679.9,785.3 1680.2,785.4 1680.5,785.4 1680.7,784.9 1681.0,785.1 1681.3,785.7 1681.6,785.5 1681.8,784.9 1682.1,784.8 1682.4,785.4 1682.7,785.5 1682.9,785.1 1683.2,784.9 1683.5,785.2 1683.8,785.4 1684.0,786.2 1684.3,785.7 1684.6,785.4 1684.8,786.1 1685.1,786.4 1685.4,786.3 1685.7,786.1 1685.9,786.0 1686.2,786.2 1686.5,785.9 1686.8,785.8 1687.0,785.6 1687.3,785.9 1687.6,785.3 1687.9,785.0 1688.1,785.7 1688.4,785.5 1688.7,784.8 1688.9,785.3 1689.2,785.3 1689.5,785.6 1689.8,786.4 1690.0,786.1 1690.3,785.6 1690.6,784.7 1690.9,785.8 1691.1,785.5 1691.4,785.4 1691.7,785.9 1692.0,785.6 1692.2,785.5 1692.5,785.6 1692.8,785.2 1693.1,784.9 1693.3,784.9 1693.6,785.1 1693.9,785.2 1694.1,786.1 1694.4,785.9 1694.7,785.4 1695.0,785.7 1695.2,784.3 1695.5,784.8 1695.8,784.8 1696.1,785.6 1696.3,785.0 1696.6,785.8 1696.9,785.5 1697.2,785.6 1697.4,786.0 1697.7,786.2 1698.0,786.1 1698.3,785.9 1698.5,785.8 1698.8,785.8 1699.1,785.8 1699.3,785.2 1699.6,785.0 1699.9,785.7 1700.2,786.1 1700.4,785.7 1700.7,785.0 1701.0,786.0 1701.3,786.0 1701.5,785.8 1701.8,785.4 1702.1,785.6 1702.4,785.6 1702.6,786.0 1702.9,785.9 1703.2,785.5 1703.4,785.6 1703.7,785.6 1704.0,785.7 1704.3,785.5 1704.5,784.4 1704.8,785.1 1705.1,785.3 1705.4,786.2 1705.6,785.6 1705.9,785.4 1706.2,784.8 1706.5,785.0 1706.7,786.2 1707.0,785.2 1707.3,784.8 1707.6,785.5 1707.8,786.2 1708.1,786.3 1708.4,786.3 1708.6,784.9 1708.9,785.3 1709.2,785.7 1709.5,785.6 1709.7,784.8 1710.0,785.1 1710.3,785.9 1710.6,785.6 1710.8,785.8 1711.1,785.8 1711.4,786.0 1711.7,785.6 1711.9,785.7 1712.2,785.2 1712.5,785.2 1712.8,785.7 1713.0,787.0 1713.3,786.0 1713.6,786.3 1713.8,785.3 1714.1,785.3 1714.4,785.9 1714.7,786.1 1714.9,786.5 1715.2,787.0 1715.5,786.1 1715.8,786.6 1716.0,785.7 1716.3,785.9 1716.6,785.7 1716.9,786.1 1717.1,785.1 1717.4,785.7 1717.7,785.0 1718.0,785.6 1718.2,785.7 1718.5,785.8 1718.8,785.9 1719.0,786.5 1719.3,786.3 1719.6,786.3 1719.9,785.6 1720.1,785.4 1720.4,785.3 1720.7,785.9 1721.0,785.5 1721.2,786.3 1721.5,786.3 1721.8,785.6 1722.1,785.4 1722.3,785.7 1722.6,786.0 1722.9,785.6 1723.1,786.0 1723.4,785.8 1723.7,786.1 1724.0,785.9 1724.2,785.0 1724.5,785.5 1724.8,785.7 1725.1,785.2 1725.3,786.7 1725.6,786.1 1725.9,786.1 1726.2,786.0 1726.4,787.0 1726.7,785.5 1727.0,785.5 1727.3,785.5 1727.5,785.8 1727.8,786.5 1728.1,785.7 1728.3,786.7 1728.6,786.1 1728.9,786.0 1729.2,785.7 1729.4,785.8 1729.7,785.5 1730.0,786.6 1730.3,786.1 1730.5,785.8 1730.8,786.3 1731.1,785.6 1731.4,785.7 1731.6,786.0 1731.9,786.5 1732.2,785.9 1732.5,786.1 1732.7,785.7 1733.0,785.4 1733.3,785.8 1733.5,786.6 1733.8,786.0 1734.1,785.7 1734.4,786.1 1734.6,786.0 1734.9,786.0 1735.2,785.9 1735.5,786.9 1735.7,785.8 1736.0,786.8 1736.3,786.7 1736.6,786.3 1736.8,787.0 1737.1,786.7 1737.4,786.4 1737.6,785.5 1737.9,786.5 1738.2,786.0 1738.5,785.4 1738.7,785.6 1739.0,785.7 1739.3,785.9 1739.6,786.3 1739.8,786.1 1740.1,786.3 1740.4,785.6 1740.7,785.7 1740.9,786.4 1741.2,785.9 1741.5,785.3 1741.8,785.7 1742.0,786.1 1742.3,785.9 1742.6,785.4 1742.8,785.5 1743.1,785.7 1743.4,786.1 1743.7,786.6 1743.9,786.3 1744.2,786.6 1744.5,786.3 1744.8,785.6 1745.0,786.5 1745.3,785.8 1745.6,785.9 1745.9,785.3 1746.1,785.6 1746.4,785.7 1746.7,786.0 1747.0,786.0 1747.2,785.8 1747.5,786.1 1747.8,785.4 1748.0,785.7 1748.3,785.7 1748.6,785.7 1748.9,786.1 1749.1,786.6 1749.4,786.1 1749.7,786.0 1750.0,786.5 1750.2,785.7 1750.5,785.7 1750.8,785.7 1751.1,785.0 1751.3,785.3 1751.6,785.6 1751.9,785.3 1752.2,785.2 1752.4,786.2 1752.7,785.9 1753.0,785.1 1753.2,785.6 1753.5,785.6 1753.8,786.2 1754.1,786.0 1754.3,786.1 1754.6,785.7 1754.9,786.3 1755.2,786.2 1755.4,786.0 1755.7,786.0 1756.0,786.0 1756.3,786.0 1756.5,785.4 1756.8,785.1 1757.1,785.6 1757.3,785.9 1757.6,785.9 1757.9,785.4 1758.2,785.4 1758.4,785.8 1758.7,785.8 1759.0,785.5 1759.3,785.6 1759.5,786.5 1759.8,785.9 1760.1,786.6 1760.4,785.4 1760.6,785.2 1760.9,785.2 1761.2,785.8 1761.5,786.0 1761.7,785.6 1762.0,785.2 1762.3,785.7 1762.5,785.4 1762.8,785.7 1763.1,785.9 1763.4,786.1 1763.6,786.7 1763.9,786.8 1764.2,785.9 1764.5,785.7 1764.7,786.4 1765.0,785.8 1765.3,785.6 1765.6,786.1 1765.8,785.9 1766.1,786.3 1766.4,785.2 1766.7,785.9 1766.9,786.0 1767.2,784.6 1767.5,785.8 1767.7,786.4 1768.0,785.6 1768.3,786.1 1768.6,786.1 1768.8,786.1 1769.1,786.1 1769.4,785.5 1769.7,785.4 1769.9,785.8 1770.2,786.1 1770.5,785.8 1770.8,786.5 1771.0,785.8 1771.3,786.2 1771.6,785.7 1771.9,786.2 1772.1,786.3 1772.4,786.1 1772.7,785.9 1772.9,785.9 1773.2,785.4 1773.5,785.6 1773.8,785.6 1774.0,785.8 1774.3,785.6 1774.6,786.2 1774.9,786.2 1775.1,786.6 1775.4,785.9 1775.7,784.7 1776.0,785.7 1776.2,785.9 1776.5,786.0 1776.8,786.4 1777.0,785.9 1777.3,786.3 1777.6,785.7 1777.9,785.3 1778.1,785.7 1778.4,786.7 1778.7,786.0 1779.0,786.1 1779.2,786.2 1779.5,786.2 1779.8,786.1 1780.1,786.2 1780.3,785.8 1780.6,785.7 1780.9,786.3 1781.2,786.3 1781.4,785.9 1781.7,785.3 1782.0,785.2 1782.2,785.9 1782.5,785.1 1782.8,785.5 1783.1,786.2 1783.3,785.7 1783.6,785.3 1783.9,785.7 1784.2,785.6 1784.4,786.7 1784.7,786.3 1785.0,785.5 1785.3,785.8 1785.5,785.3 1785.8,786.4 1786.1,785.7 1786.4,786.4 1786.6,786.5 1786.9,786.0 1787.2,786.2 1787.4,786.1 1787.7,786.7 1788.0,786.0 1788.3,786.1 1788.5,786.2 1788.8,785.9 1789.1,785.9 1789.4,786.3 1789.6,785.6 1789.9,786.0 1790.2,785.2 1790.5,786.1 1790.7,786.3 1791.0,785.8 1791.3,786.1 1791.5,786.3 1791.8,785.8 1792.1,786.1 1792.4,786.3 1792.6,786.1 1792.9,786.6 1793.2,786.9 1793.5,786.1 1793.7,786.0 1794.0,786.3 1794.3,786.2 1794.6,786.1 1794.8,786.4 1795.1,786.4 1795.4,786.1 1795.7,785.9 1795.9,785.0 1796.2,786.0 1796.5,785.3 1796.7,785.7 1797.0,786.0 1797.3,786.2 1797.6,786.7 1797.8,786.2 1798.1,785.6 1798.4,786.0 1798.7,785.8 1798.9,785.8 1799.2,785.4 1799.5,785.5 1799.8,785.1 1800.0,785.0 1800.3,785.4 1800.6,786.4 1800.9,786.2 1801.1,785.8 1801.4,785.4 1801.7,785.3 1801.9,785.3 1802.2,786.1 1802.5,786.8 1802.8,785.9 1803.0,787.1 1803.3,786.1 1803.6,785.9 1803.9,785.8 1804.1,786.1 1804.4,786.4 1804.7,786.9 1805.0,786.2 1805.2,786.5 1805.5,786.1 1805.8,786.6 1806.1,785.8 1806.3,785.6 1806.6,785.7 1806.9,787.1 1807.1,785.9 1807.4,785.6 1807.7,786.0 1808.0,786.3 1808.2,785.9 1808.5,785.7 1808.8,785.9 1809.1,786.1 1809.3,785.9 1809.6,786.1 1809.9,786.2 1810.2,785.5 1810.4,785.5 1810.7,786.0 1811.0,786.0 1811.2,785.8 1811.5,785.9 1811.8,786.3 1812.1,786.5 1812.3,786.1 1812.6,786.1 1812.9,786.2 1813.2,786.0 1813.4,786.3 1813.7,786.4 1814.0,785.1 1814.3,784.8 1814.5,785.1 1814.8,785.5 1815.1,785.8 1815.4,785.4 1815.6,785.8 1815.9,786.0" fill="none" stroke="#2a2aff" stroke-width="1.2" stroke-linejoin="round"/>
<rect x="1536.3" y="741.3" width="280.7" height="95.6" fill="none" stroke="#828282" stroke-width="2.1"/>
<text x="1537.8" y="852.6" text-anchor="middle" style="font-family:'DejaVu Serif','Liberation Serif',serif;font-size:10.6px;letter-spacing:0.9px" fill="#545454">0</text>
<text x="1592.5" y="852.6" text-anchor="middle" style="font-family:'DejaVu Serif','Liberation Serif',serif;font-size:10.6px;letter-spacing:0.9px" fill="#545454">200</text>
<text x="1647.2" y="852.6" text-anchor="middle" style="font-family:'DejaVu Serif','Liberation Serif',serif;font-size:10.6px;letter-spacing:0.9px" fill="#545454">400</text>
<text x="1701.9" y="852.6" text-anchor="middle" style="font-family:'DejaVu Serif','Liberation Serif',serif;font-size:10.6px;letter-spacing:0.9px" fill="#545454">600</text>
<text x="1756.6" y="852.6" text-anchor="middle" style="font-family:'DejaVu Serif','Liberation Serif',serif;font-size:10.6px;letter-spacing:0.9px" fill="#545454">800</text>
<text x="1811.4" y="852.6" text-anchor="middle" style="font-family:'DejaVu Serif','Liberation Serif',serif;font-size:10.6px;letter-spacing:0.9px" fill="#545454">1000</text>
<text x="1533.8" y="841.9" text-anchor="end" style="font-family:'DejaVu Serif','Liberation Serif',serif;font-size:10.6px;letter-spacing:0.9px" fill="#545454">0</text>
<text x="1533.8" y="811.2" text-anchor="end" style="font-family:'DejaVu Serif','Liberation Serif',serif;font-size:10.6px;letter-spacing:0.9px" fill="#545454">5000</text>
<text x="1533.8" y="780.6" text-anchor="end" style="font-family:'DejaVu Serif','Liberation Serif',serif;font-size:10.6px;letter-spacing:0.9px" fill="#545454">10000</text>
<text x="1533.8" y="749.9" text-anchor="end" style="font-family:'DejaVu Serif','Liberation Serif',serif;font-size:10.6px;letter-spacing:0.9px" fill="#545454">15000</text>
<rect x="1702.8" y="751.7" width="13.6" height="10.8" fill="#fff" stroke="#ccc" stroke-width="1"/>
<rect x="1704.0" y="753.0" width="11.2" height="8.2" fill="#0000ff"/>
<text x="1808.9" y="761.0" text-anchor="end" style="font-family:'DejaVu Serif','Liberation Serif',serif;font-size:11.4px;letter-spacing:0.36px" fill="#8a8a8a">aida02 3.11.W</text>
<path d="M1805.1 742.0L1816.1 731.0L1827.1 742.0L1816.1 753.0z" fill="#ff0000"/>
</g>
<g>
<path d="M172.8 878.6V973.3" stroke="#e7e7e7" stroke-width="1.2"/>
<path d="M227.5 878.6V973.3" stroke="#e7e7e7" stroke-width="1.2"/>
<path d="M282.3 878.6V973.3" stroke="#e7e7e7" stroke-width="1.2"/>
<path d="M337.0 878.6V973.3" stroke="#e7e7e7" stroke-width="1.2"/>
<path d="M391.7 878.6V973.3" stroke="#e7e7e7" stroke-width="1.2"/>
<path d="M118.1 941.3H396.9" stroke="#e7e7e7" stroke-width="1.2"/>
<path d="M118.1 909.3H396.9" stroke="#e7e7e7" stroke-width="1.2"/>
<polyline points="118.1,918.5 118.4,918.4 118.6,917.7 118.9,917.9 119.2,918.5 119.5,918.5 119.7,919.0 120.0,919.3 120.3,918.1 120.6,918.7 120.8,918.7 121.1,918.4 121.4,918.1 121.7,918.9 121.9,918.2 122.2,918.7 122.5,918.4 122.8,918.0 123.0,918.6 123.3,918.9 123.6,919.1 123.8,919.5 124.1,918.7 124.4,918.4 124.7,919.1 124.9,918.6 125.2,918.1 125.5,918.9 125.8,918.0 126.0,918.5 126.3,917.9 126.6,918.8 126.9,918.5 127.1,918.0 127.4,918.2 127.7,918.3 127.9,918.2 128.2,919.2 128.5,919.2 128.8,918.6 129.0,918.9 129.3,918.5 129.6,918.8 129.9,918.4 130.1,917.7 130.4,918.5 130.7,918.1 131.0,917.6 131.2,918.7 131.5,918.2 131.8,918.6 132.1,918.3 132.3,918.9 132.6,919.3 132.9,919.2 133.1,918.9 133.4,918.4 133.7,919.0 134.0,919.5 134.2,918.3 134.5,918.4 134.8,917.9 135.1,918.4 135.3,918.0 135.6,918.8 135.9,918.7 136.2,918.8 136.4,918.7 136.7,918.3 137.0,919.1 137.3,918.2 137.5,918.8 137.8,918.3 138.1,918.7 138.3,918.4 138.6,919.6 138.9,918.5 139.2,917.8 139.4,918.5 139.7,918.8 140.0,918.8 140.3,917.8 140.5,918.7 140.8,917.5 141.1,918.1 141.4,918.7 141.6,918.3 141.9,918.7 142.2,918.7 142.5,918.7 142.7,918.4 143.0,917.0 143.3,918.7 143.5,918.3 143.8,918.2 144.1,918.4 144.4,918.1 144.6,919.3 144.9,919.0 145.2,919.1 145.5,918.8 145.7,918.2 146.0,918.4 146.3,918.1 146.6,917.3 146.8,918.1 147.1,918.0 147.4,918.7 147.6,919.0 147.9,918.3 148.2,918.4 148.5,918.1 148.7,917.8 149.0,917.7 149.3,918.1 149.6,917.8 149.8,917.4 150.1,917.9 150.4,918.0 150.7,918.3 150.9,918.9 151.2,918.8 151.5,919.2 151.8,919.0 152.0,918.4 152.3,918.4 152.6,918.1 152.8,918.6 153.1,918.3 153.4,918.8 153.7,918.8 153.9,918.6 154.2,918.1 154.5,918.7 154.8,918.5 155.0,918.9 155.3,918.3 155.6,917.2 155.9,918.3 156.1,919.5 156.4,919.1 156.7,918.5 157.0,919.1 157.2,918.6 157.5,918.8 157.8,919.0 158.0,918.8 158.3,918.7 158.6,918.9 158.9,918.9 159.1,918.1 159.4,918.1 159.7,918.3 160.0,917.7 160.2,918.3 160.5,918.3 160.8,918.7 161.1,918.7 161.3,917.5 161.6,918.1 161.9,918.2 162.1,918.5 162.4,918.0 162.7,918.0 163.0,918.7 163.2,918.7 163.5,918.9 163.8,918.8 164.1,918.5 164.3,918.5 164.6,918.8 164.9,918.5 165.2,918.6 165.4,918.6 165.7,918.4 166.0,918.7 166.3,918.2 166.5,918.4 166.8,919.3 167.1,918.5 167.3,917.7 167.6,917.7 167.9,918.7 168.2,918.4 168.4,918.5 168.7,918.3 169.0,918.7 169.3,918.2 169.5,918.5 169.8,918.0 170.1,918.4 170.4,919.1 170.6,918.4 170.9,919.1 171.2,919.1 171.5,917.5 171.7,918.6 172.0,918.7 172.3,918.7 172.5,919.0 172.8,901.6 173.1,901.9 173.4,902.0 173.6,887.2 173.9,887.3 174.2,887.7 174.5,888.0 174.7,888.0 175.0,888.1 175.3,888.5 175.6,887.9 175.8,888.0 176.1,888.0 176.4,888.6 176.7,888.2 176.9,889.4 177.2,889.4 177.5,887.7 177.7,888.2 178.0,888.5 178.3,888.6 178.6,888.9 178.8,888.1 179.1,889.4 179.4,888.8 179.7,889.4 179.9,889.0 180.2,888.7 180.5,888.1 180.8,888.8 181.0,889.9 181.3,889.4 181.6,889.6 181.8,890.1 182.1,890.2 182.4,889.7 182.7,889.1 182.9,889.1 183.2,889.0 183.5,889.7 183.8,889.4 184.0,889.9 184.3,889.7 184.6,890.0 184.9,890.7 185.1,890.2 185.4,889.3 185.7,890.8 186.0,890.0 186.2,891.1 186.5,889.8 186.8,890.5 187.0,890.8 187.3,890.8 187.6,890.7 187.9,890.4 188.1,890.6 188.4,891.1 188.7,891.3 189.0,891.4 189.2,910.6 189.5,910.6 189.8,911.0 190.1,918.4 190.3,918.4 190.6,918.6 190.9,918.5 191.2,918.5 191.4,917.8 191.7,917.9 192.0,918.7 192.2,917.9 192.5,918.8 192.8,918.6 193.1,918.3 193.3,918.5 193.6,918.7 193.9,918.3 194.2,919.1 194.4,918.6 194.7,918.3 195.0,918.0 195.3,918.3 195.5,918.9 195.8,919.0 196.1,917.8 196.4,918.5 196.6,918.8 196.9,918.4 197.2,918.2 197.4,917.8 197.7,918.3 198.0,918.4 198.3,918.2 198.5,918.1 198.8,918.1 199.1,918.4 199.4,918.2 199.6,918.8 199.9,918.7 200.2,918.1 200.5,918.6 200.7,918.4 201.0,919.2 201.3,918.9 201.5,918.5 201.8,917.3 202.1,918.3 202.4,918.0 202.6,918.6 202.9,918.0 203.2,917.6 203.5,918.1 203.7,918.2 204.0,918.6 204.3,918.4 204.6,918.8 204.8,919.0 205.1,919.1 205.4,919.3 205.7,918.6 205.9,918.6 206.2,918.5 206.5,918.0 206.7,917.2 207.0,918.1 207.3,918.8 207.6,918.5 207.8,918.4 208.1,918.9 208.4,918.3 208.7,919.1 208.9,918.9 209.2,919.2 209.5,918.6 209.8,918.4 210.0,917.9 210.3,918.3 210.6,919.1 210.9,919.0 211.1,918.5 211.4,918.4 211.7,919.0 211.9,919.5 212.2,920.2 212.5,919.5 212.8,919.4 213.0,919.7 213.3,918.6 213.6,919.1 213.9,918.8 214.1,918.9 214.4,919.0 214.7,918.6 215.0,919.1 215.2,918.6 215.5,918.7 215.8,919.0 216.0,919.2 216.3,918.5 216.6,918.2 216.9,918.5 217.1,918.1 217.4,918.9 217.7,918.4 218.0,918.5 218.2,918.3 218.5,918.8 218.8,918.2 219.1,918.5 219.3,918.2 219.6,918.5 219.9,918.3 220.2,918.4 220.4,918.4 220.7,918.5 221.0,918.3 221.2,919.4 221.5,918.8 221.8,919.2 222.1,919.4 222.3,919.2 222.6,918.9 222.9,918.5 223.2,918.0 223.4,919.1 223.7,919.3 224.0,919.5 224.3,919.8 224.5,919.5 224.8,919.4 225.1,919.5 225.4,919.1 225.6,919.0 225.9,917.9 226.2,919.9 226.4,919.5 226.7,918.6 227.0,920.0 227.3,919.2 227.5,918.8 227.8,917.4 228.1,918.8 228.4,918.4 228.6,918.5 228.9,919.0 229.2,919.1 229.5,919.3 229.7,918.8 230.0,919.1 230.3,919.4 230.6,919.4 230.8,919.6 231.1,919.3 231.4,919.3 231.6,919.2 231.9,918.8 232.2,918.7 232.5,918.9 232.7,918.6 233.0,918.4 233.3,918.7 233.6,919.5 233.8,919.3 234.1,918.5 234.4,919.1 234.7,918.7 234.9,919.6 235.2,919.1 235.5,918.9 235.7,919.5 236.0,919.6 236.3,920.6 236.6,919.3 236.8,919.5 237.1,919.3 237.4,919.3 237.7,919.3 237.9,919.3 238.2,919.1 238.5,919.0 238.8,919.1 239.0,918.7 239.3,918.8 239.6,918.2 239.9,918.7 240.1,918.7 240.4,918.9 240.7,918.1 240.9,919.0 241.2,919.4 241.5,919.5 241.8,919.9 242.0,919.5 242.3,919.3 242.6,919.4 242.9,919.1 243.1,919.1 243.4,918.8 243.7,918.2 244.0,918.9 244.2,918.9 244.5,919.9 244.8,919.6 245.1,918.6 245.3,919.1 245.6,918.4 245.9,918.5 246.1,918.8 246.4,919.2 246.7,919.5 247.0,919.6 247.2,919.5 247.5,919.0 247.8,919.4 248.1,919.5 248.3,919.2 248.6,919.9 248.9,919.3 249.2,918.7 249.4,918.9 249.7,919.4 250.0,918.7 250.2,918.8 250.5,919.0 250.8,918.7 251.1,919.5 251.3,920.3 251.6,919.7 251.9,920.0 252.2,919.6 252.4,919.2 252.7,918.7 253.0,918.2 253.3,919.6 253.5,919.8 253.8,919.7 254.1,919.2 254.4,919.1 254.6,919.0 254.9,919.2 255.2,920.0 255.4,919.3 255.7,919.2 256.0,919.7 256.3,919.8 256.5,920.0 256.8,919.5 257.1,919.5 257.4,920.5 257.6,919.5 257.9,919.2 258.2,919.2 258.5,919.2 258.7,917.7 259.0,918.7 259.3,919.7 259.6,919.7 259.8,919.5 260.1,918.7 260.4,919.4 260.6,919.1 260.9,918.9 261.2,919.6 261.5,919.6 261.7,919.9 262.0,919.8 262.3,920.1 262.6,918.9 262.8,919.2 263.1,918.6 263.4,918.7 263.7,919.7 263.9,919.2 264.2,919.9 264.5,920.0 264.8,919.2 265.0,919.1 265.3,919.2 265.6,918.4 265.8,919.7 266.1,920.0 266.4,919.1 266.7,918.3 266.9,919.1 267.2,919.1 267.5,919.5 267.8,918.9 268.0,918.4 268.3,919.3 268.6,919.7 268.9,920.2 269.1,919.9 269.4,919.5 269.7,919.5 269.9,919.5 270.2,918.6 270.5,919.5 270.8,919.4 271.0,919.9 271.3,920.1 271.6,919.8 271.9,918.4 272.1,919.0 272.4,920.2 272.7,919.3 273.0,919.3 273.2,918.6 273.5,918.0 273.8,919.2 274.1,919.5 274.3,919.4 274.6,919.4 274.9,919.7 275.1,919.8 275.4,918.6 275.7,919.3 276.0,919.2 276.2,919.3 276.5,919.5 276.8,919.7 277.1,919.7 277.3,919.3 277.6,919.1 277.9,918.9 278.2,919.7 278.4,918.8 278.7,919.9 279.0,918.8 279.3,919.8 279.5,920.2 279.8,919.3 280.1,919.0 280.3,919.6 280.6,919.8 280.9,919.1 281.2,919.0 281.4,919.4 281.7,919.1 282.0,919.8 282.3,919.7 282.5,919.3 282.8,919.6 283.1,919.7 283.4,919.6 283.6,919.5 283.9,920.5 284.2,919.6 284.4,920.0 284.7,919.3 285.0,919.6 285.3,919.6 285.5,919.6 285.8,919.5 286.1,919.9 286.4,919.2 286.6,919.4 286.9,919.7 287.2,919.8 287.5,919.3 287.7,920.0 288.0,919.3 288.3,918.9 288.6,919.3 288.8,919.3 289.1,920.1 289.4,920.4 289.6,919.5 289.9,919.8 290.2,919.4 290.5,919.7 290.7,919.6 291.0,918.6 291.3,920.0 291.6,919.6 291.8,919.5 292.1,919.7 292.4,920.4 292.7,919.6 292.9,919.9 293.2,920.0 293.5,920.4 293.8,919.9 294.0,919.6 294.3,919.1 294.6,919.8 294.8,919.5 295.1,920.0 295.4,918.6 295.7,919.0 295.9,919.8 296.2,919.9 296.5,919.0 296.8,919.6 297.0,920.3 297.3,919.4 297.6,919.5 297.9,919.9 298.1,919.9 298.4,919.4 298.7,919.9 299.0,921.0 299.2,920.3 299.5,919.7 299.8,919.9 300.0,920.3 300.3,919.7 300.6,919.5 300.9,919.3 301.1,920.0 301.4,920.2 301.7,920.3 302.0,920.2 302.2,920.0 302.5,919.3 302.8,919.4 303.1,917.7 303.3,918.3 303.6,918.7 303.9,919.3 304.1,919.8 304.4,919.8 304.7,920.2 305.0,919.5 305.2,919.6 305.5,919.4 305.8,920.3 306.1,920.5 306.3,919.4 306.6,919.9 306.9,919.9 307.2,919.9 307.4,919.9 307.7,919.9 308.0,920.0 308.3,920.3 308.5,918.8 308.8,920.1 309.1,919.8 309.3,920.2 309.6,919.7 309.9,920.2 310.2,920.2 310.4,919.1 310.7,920.1 311.0,920.4 311.3,920.0 311.5,920.1 311.8,919.7 312.1,919.9 312.4,919.8 312.6,919.4 312.9,919.8 313.2,920.0 313.5,920.3 313.7,919.8 314.0,919.2 314.3,918.5 314.5,919.2 314.8,920.0 315.1,920.1 315.4,920.4 315.6,920.1 315.9,919.9 316.2,920.2 316.5,920.2 316.7,919.3 317.0,919.0 317.3,919.8 317.6,919.2 317.8,919.6 318.1,920.6 318.4,919.9 318.6,919.1 318.9,920.0 319.2,920.2 319.5,920.2 319.7,920.1 320.0,919.5 320.3,919.4 320.6,919.0 320.8,919.7 321.1,920.1 321.4,919.8 321.7,919.4 321.9,919.6 322.2,920.3 322.5,919.8 322.8,919.5 323.0,919.4 323.3,919.3 323.6,918.7 323.8,918.7 324.1,919.5 324.4,919.6 324.7,919.6 324.9,920.4 325.2,920.4 325.5,918.9 325.8,919.5 326.0,919.9 326.3,919.0 326.6,919.2 326.9,920.0 327.1,920.1 327.4,920.1 327.7,920.4 328.0,919.2 328.2,919.2 328.5,920.1 328.8,919.1 329.0,919.7 329.3,919.4 329.6,919.8 329.9,918.6 330.1,919.4 330.4,919.2 330.7,918.8 331.0,919.6 331.2,919.8 331.5,920.6 331.8,920.2 332.1,919.6 332.3,920.0 332.6,920.0 332.9,920.4 333.2,920.8 333.4,920.3 333.7,919.8 334.0,919.0 334.2,918.8 334.5,918.9 334.8,919.5 335.1,919.5 335.3,920.0 335.6,920.4 335.9,919.8 336.2,919.8 336.4,919.7 336.7,920.2 337.0,919.8 337.3,920.3 337.5,919.7 337.8,920.6 338.1,920.0 338.3,919.9 338.6,919.4 338.9,919.9 339.2,919.5 339.4,919.8 339.7,919.5 340.0,920.0 340.3,919.9 340.5,919.7 340.8,919.3 341.1,920.2 341.4,919.4 341.6,919.6 341.9,919.6 342.2,919.5 342.5,919.8 342.7,920.1 343.0,919.7 343.3,918.9 343.5,919.8 343.8,919.5 344.1,919.6 344.4,918.9 344.6,918.9 344.9,919.9 345.2,919.8 345.5,919.5 345.7,920.1 346.0,918.9 346.3,919.6 346.6,919.4 346.8,919.0 347.1,919.8 347.4,919.8 347.7,918.9 347.9,919.6 348.2,919.0 348.5,919.4 348.7,919.4 349.0,920.0 349.3,919.9 349.6,918.9 349.8,919.4 350.1,919.3 350.4,919.8 350.7,919.2 350.9,920.0 351.2,919.3 351.5,919.5 351.8,920.2 352.0,919.7 352.3,919.7 352.6,920.6 352.9,919.6 353.1,919.6 353.4,920.4 353.7,919.5 353.9,920.1 354.2,919.1 354.5,919.8 354.8,919.7 355.0,920.0 355.3,919.4 355.6,920.2 355.9,919.7 356.1,920.2 356.4,920.6 356.7,920.3 357.0,919.7 357.2,919.0 357.5,920.6 357.8,920.2 358.0,920.8 358.3,920.1 358.6,919.7 358.9,920.0 359.1,919.3 359.4,920.3 359.7,920.1 360.0,920.1 360.2,920.3 360.5,920.3 360.8,919.6 361.1,920.0 361.3,919.5 361.6,919.6 361.9,919.8 362.2,919.9 362.4,919.0 362.7,920.4 363.0,920.0 363.2,919.8 363.5,919.7 363.8,918.9 364.1,919.6 364.3,919.4 364.6,920.2 364.9,919.7 365.2,921.1 365.4,919.8 365.7,920.4 366.0,920.3 366.3,920.3 366.5,919.9 366.8,919.8 367.1,918.7 367.4,919.9 367.6,919.4 367.9,919.8 368.2,920.0 368.4,919.7 368.7,919.8 369.0,919.9 369.3,919.9 369.5,920.1 369.8,920.2 370.1,918.7 370.4,919.5 370.6,920.0 370.9,919.5 371.2,920.3 371.5,920.1 371.7,920.2 372.0,919.6 372.3,919.9 372.5,920.3 372.8,920.1 373.1,919.8 373.4,919.4 373.6,919.6 373.9,920.5 374.2,919.8 374.5,920.7 374.7,919.8 375.0,919.9 375.3,920.0 375.6,920.1 375.8,920.2 376.1,920.4 376.4,919.2 376.7,920.0 376.9,919.7 377.2,920.2 377.5,920.3 377.7,919.9 378.0,919.4 378.3,919.8 378.6,920.1 378.8,919.8 379.1,919.6 379.4,920.5 379.7,920.3 379.9,919.7 380.2,919.0 380.5,920.4 380.8,920.4 381.0,920.2 381.3,920.2 381.6,919.5 381.9,920.3 382.1,920.7 382.4,920.6 382.7,920.4 382.9,919.8 383.2,919.5 383.5,919.8 383.8,919.4 384.0,918.5 384.3,919.8 384.6,919.4 384.9,920.3 385.1,920.6 385.4,920.6 385.7,919.1 386.0,919.4 386.2,920.4 386.5,919.7 386.8,919.9 387.1,919.5 387.3,920.2 387.6,919.3 387.9,920.5 388.1,919.3 388.4,918.9 388.7,919.1 389.0,919.9 389.2,919.2 389.5,919.3 389.8,919.8 390.1,919.8 390.3,920.0 390.6,919.5 390.9,919.3 391.2,919.0 391.4,919.6 391.7,919.8 392.0,920.3 392.2,919.9 392.5,919.8 392.8,920.9 393.1,920.3 393.3,919.7 393.6,918.9 393.9,919.6 394.2,920.2 394.4,920.0 394.7,919.3 395.0,919.7 395.3,920.7 395.5,919.5 395.8,919.3 396.1,918.8 396.4,919.0 396.6,920.2 396.9,919.4" fill="none" stroke="#2a2aff" stroke-width="1.2" stroke-linejoin="round"/>
<rect x="117.3" y="877.3" width="280.7" height="96.8" fill="none" stroke="#828282" stroke-width="2.1"/>
<text x="118.8" y="989.8" text-anchor="middle" style="font-family:'DejaVu Serif','Liberation Serif',serif;font-size:10.6px;letter-spacing:0.9px" fill="#545454">0</text>
<text x="173.5" y="989.8" text-anchor="middle" style="font-family:'DejaVu Serif','Liberation Serif',serif;font-size:10.6px;letter-spacing:0.9px" fill="#545454">200</text>
<text x="228.2" y="989.8" text-anchor="middle" style="font-family:'DejaVu Serif','Liberation Serif',serif;font-size:10.6px;letter-spacing:0.9px" fill="#545454">400</text>
<text x="282.9" y="989.8" text-anchor="middle" style="font-family:'DejaVu Serif','Liberation Serif',serif;font-size:10.6px;letter-spacing:0.9px" fill="#545454">600</text>
<text x="337.6" y="989.8" text-anchor="middle" style="font-family:'DejaVu Serif','Liberation Serif',serif;font-size:10.6px;letter-spacing:0.9px" fill="#545454">800</text>
<text x="392.4" y="989.8" text-anchor="middle" style="font-family:'DejaVu Serif','Liberation Serif',serif;font-size:10.6px;letter-spacing:0.9px" fill="#545454">1000</text>
<text x="114.8" y="977.5" text-anchor="end" style="font-family:'DejaVu Serif','Liberation Serif',serif;font-size:10.6px;letter-spacing:0.9px" fill="#545454">0</text>
<text x="114.8" y="945.5" text-anchor="end" style="font-family:'DejaVu Serif','Liberation Serif',serif;font-size:10.6px;letter-spacing:0.9px" fill="#545454">5000</text>
<text x="114.8" y="913.5" text-anchor="end" style="font-family:'DejaVu Serif','Liberation Serif',serif;font-size:10.6px;letter-spacing:0.9px" fill="#545454">10000</text>
<rect x="283.8" y="887.7" width="13.6" height="10.8" fill="#fff" stroke="#ccc" stroke-width="1"/>
<rect x="285.0" y="889.0" width="11.2" height="8.2" fill="#0000ff"/>
<text x="389.9" y="897.0" text-anchor="end" style="font-family:'DejaVu Serif','Liberation Serif',serif;font-size:11.4px;letter-spacing:0.36px" fill="#8a8a8a">aida02 3.12.W</text>
<path d="M386.1 878.0L397.1 867.0L408.1 878.0L397.1 889.0z" fill="#ff0000"/>
</g>
<g>
<path d="M645.8 878.6V973.3" stroke="#e7e7e7" stroke-width="1.2"/>
<path d="M700.5 878.6V973.3" stroke="#e7e7e7" stroke-width="1.2"/>
<path d="M755.3 878.6V973.3" stroke="#e7e7e7" stroke-width="1.2"/>
<path d="M810.0 878.6V973.3" stroke="#e7e7e7" stroke-width="1.2"/>
<path d="M864.7 878.6V973.3" stroke="#e7e7e7" stroke-width="1.2"/>
<path d="M591.1 942.0H869.9" stroke="#e7e7e7" stroke-width="1.2"/>
<path d="M591.1 910.6H869.9" stroke="#e7e7e7" stroke-width="1.2"/>
<path d="M591.1 879.3H869.9" stroke="#e7e7e7" stroke-width="1.2"/>
<polyline points="591.1,919.9 591.4,919.3 591.6,920.1 591.9,919.0 592.2,920.3 592.5,920.3 592.7,920.3 593.0,920.4 593.3,920.0 593.6,920.3 593.8,918.7 594.1,918.8 594.4,919.8 594.7,918.9 594.9,918.3 595.2,919.3 595.5,919.8 595.8,919.7 596.0,919.0 596.3,919.7 596.6,918.5 596.8,919.5 597.1,919.6 597.4,920.6 597.7,920.2 597.9,920.0 598.2,920.1 598.5,920.6 598.8,919.5 599.0,919.1 599.3,918.9 599.6,920.0 599.9,918.7 600.1,919.7 600.4,919.9 600.7,919.0 600.9,919.3 601.2,919.5 601.5,920.0 601.8,919.8 602.0,920.5 602.3,919.9 602.6,920.2 602.9,919.3 603.1,919.8 603.4,919.8 603.7,918.8 604.0,919.4 604.2,919.2 604.5,919.4 604.8,919.7 605.1,918.8 605.3,918.9 605.6,919.9 605.9,919.6 606.1,919.6 606.4,919.5 606.7,918.8 607.0,918.9 607.2,918.9 607.5,919.3 607.8,920.0 608.1,920.2 608.3,920.3 608.6,920.2 608.9,919.5 609.2,920.4 609.4,919.8 609.7,919.9 610.0,919.2 610.3,919.1 610.5,919.2 610.8,920.4 611.1,920.0 611.3,919.2 611.6,918.6 611.9,919.7 612.2,919.8 612.4,919.1 612.7,918.6 613.0,919.3 613.3,919.6 613.5,919.7 613.8,920.0 614.1,919.6 614.4,919.3 614.6,919.9 614.9,919.5 615.2,919.7 615.5,919.8 615.7,919.9 616.0,920.6 616.3,920.0 616.5,919.9 616.8,920.0 617.1,920.0 617.4,919.9 617.6,920.0 617.9,920.3 618.2,920.0 618.5,920.0 618.7,919.4 619.0,919.4 619.3,920.0 619.6,919.9 619.8,920.0 620.1,919.9 620.4,918.9 620.6,919.0 620.9,920.0 621.2,920.0 621.5,919.7 621.7,920.5 622.0,919.9 622.3,919.9 622.6,919.7 622.8,919.3 623.1,919.4 623.4,919.2 623.7,919.8 623.9,920.0 624.2,919.7 624.5,919.1 624.8,919.7 625.0,920.1 625.3,919.9 625.6,919.5 625.8,919.2 626.1,919.4 626.4,919.6 626.7,919.9 626.9,919.7 627.2,919.2 627.5,919.0 627.8,919.2 628.0,919.2 628.3,919.8 628.6,919.5 628.9,919.3 629.1,919.7 629.4,919.6 629.7,919.3 630.0,919.4 630.2,919.2 630.5,919.6 630.8,919.1 631.0,919.4 631.3,920.0 631.6,919.3 631.9,919.2 632.1,919.6 632.4,920.6 632.7,919.7 633.0,919.7 633.2,919.5 633.5,919.2 633.8,919.8 634.1,920.7 634.3,919.4 634.6,919.0 634.9,918.8 635.1,919.3 635.4,919.5 635.7,919.8 636.0,920.2 636.2,918.9 636.5,919.7 636.8,919.7 637.1,920.3 637.3,920.2 637.6,920.0 637.9,919.7 638.2,919.4 638.4,920.4 638.7,919.4 639.0,920.0 639.3,920.7 639.5,919.7 639.8,918.4 640.1,919.2 640.3,920.1 640.6,919.6 640.9,920.0 641.2,919.1 641.4,919.6 641.7,919.4 642.0,920.0 642.3,919.8 642.5,919.3 642.8,920.1 643.1,919.9 643.4,920.2 643.6,920.4 643.9,920.8 644.2,919.1 644.5,919.9 644.7,919.8 645.0,919.4 645.3,919.5 645.5,901.8 645.8,901.9 646.1,902.9 646.4,888.6 646.6,888.0 646.9,887.8 647.2,887.6 647.5,887.9 647.7,888.9 648.0,888.9 648.3,888.4 648.6,888.1 648.8,888.4 649.1,888.4 649.4,889.0 649.7,889.2 649.9,889.9 650.2,889.6 650.5,889.3 650.7,888.3 651.0,889.2 651.3,890.0 651.6,889.4 651.8,890.2 652.1,890.0 652.4,889.5 652.7,888.9 652.9,889.5 653.2,889.7 653.5,890.2 653.8,890.3 654.0,889.6 654.3,889.8 654.6,889.9 654.8,890.1 655.1,890.5 655.4,889.6 655.7,890.0 655.9,890.5 656.2,889.4 656.5,890.0 656.8,889.8 657.0,889.5 657.3,889.8 657.6,889.8 657.9,889.1 658.1,891.0 658.4,890.7 658.7,890.6 659.0,891.7 659.2,891.2 659.5,890.3 659.8,890.4 660.0,891.1 660.3,890.5 660.6,891.2 660.9,891.9 661.1,891.1 661.4,890.7 661.7,891.1 662.0,911.1 662.2,911.4 662.5,911.7 662.8,920.2 663.1,919.8 663.3,919.1 663.6,919.2 663.9,919.6 664.2,919.4 664.4,919.2 664.7,919.4 665.0,919.4 665.2,919.2 665.5,920.2 665.8,920.5 666.1,920.1 666.3,919.8 666.6,919.0 666.9,919.2 667.2,919.6 667.4,919.9 667.7,919.6 668.0,919.5 668.3,919.0 668.5,919.4 668.8,919.4 669.1,919.7 669.4,919.2 669.6,919.0 669.9,919.7 670.2,919.7 670.4,919.4 670.7,918.9 671.0,919.5 671.3,919.8 671.5,919.9 671.8,920.0 672.1,920.0 672.4,919.8 672.6,919.6 672.9,918.9 673.2,920.0 673.5,919.8 673.7,919.6 674.0,919.3 674.3,920.1 674.5,920.1 674.8,920.1 675.1,919.3 675.4,919.2 675.6,919.3 675.9,919.7 676.2,920.5 676.5,920.8 676.7,920.3 677.0,920.2 677.3,919.6 677.6,920.0 677.8,919.8 678.1,918.9 678.4,919.0 678.7,919.2 678.9,920.5 679.2,919.6 679.5,919.8 679.7,920.3 680.0,920.2 680.3,919.9 680.6,919.7 680.8,920.0 681.1,920.1 681.4,919.7 681.7,920.4 681.9,920.5 682.2,920.5 682.5,919.9 682.8,920.2 683.0,920.3 683.3,919.6 683.6,919.9 683.9,920.1 684.1,920.2 684.4,919.6 684.7,919.5 684.9,920.3 685.2,920.1 685.5,919.3 685.8,919.3 686.0,919.0 686.3,919.8 686.6,919.3 686.9,919.2 687.1,920.1 687.4,919.8 687.7,920.0 688.0,920.4 688.2,919.7 688.5,919.4 688.8,921.0 689.0,919.4 689.3,920.2 689.6,920.1 689.9,919.0 690.1,919.0 690.4,918.8 690.7,919.9 691.0,919.7 691.2,920.1 691.5,920.7 691.8,920.4 692.1,919.9 692.3,919.4 692.6,918.8 692.9,919.7 693.2,920.2 693.4,919.7 693.7,919.2 694.0,919.8 694.2,919.6 694.5,919.7 694.8,920.4 695.1,920.9 695.3,920.3 695.6,919.7 695.9,920.6 696.2,920.3 696.4,919.6 696.7,919.9 697.0,919.7 697.3,919.6 697.5,919.4 697.8,920.1 698.1,919.9 698.4,920.2 698.6,920.6 698.9,920.2 699.2,921.2 699.4,919.1 699.7,920.0 700.0,919.6 700.3,919.0 700.5,919.7 700.8,918.9 701.1,920.1 701.4,920.1 701.6,919.6 701.9,919.5 702.2,919.7 702.5,920.8 702.7,920.4 703.0,919.7 703.3,919.8 703.6,920.1 703.8,920.3 704.1,920.6 704.4,920.9 704.6,920.7 704.9,920.4 705.2,920.2 705.5,920.0 705.7,920.1 706.0,920.8 706.3,920.2 706.6,920.3 706.8,920.4 707.1,920.0 707.4,919.7 707.7,920.7 707.9,920.5 708.2,920.1 708.5,920.6 708.7,920.4 709.0,920.5 709.3,921.2 709.6,920.8 709.8,920.9 710.1,919.7 710.4,919.6 710.7,920.4 710.9,920.5 711.2,920.5 711.5,920.4 711.8,920.8 712.0,920.8 712.3,920.2 712.6,920.5 712.9,920.7 713.1,920.1 713.4,920.6 713.7,920.5 713.9,920.0 714.2,920.0 714.5,920.1 714.8,920.2 715.0,920.8 715.3,920.8 715.6,920.6 715.9,920.9 716.1,920.3 716.4,919.7 716.7,920.2 717.0,919.7 717.2,920.1 717.5,920.0 717.8,920.3 718.1,919.9 718.3,920.1 718.6,921.0 718.9,921.5 719.1,920.7 719.4,920.4 719.7,920.4 720.0,920.6 720.2,921.2 720.5,920.4 720.8,920.5 721.1,921.4 721.3,921.0 721.6,920.7 721.9,920.2 722.2,920.0 722.4,919.4 722.7,920.1 723.0,920.3 723.2,921.0 723.5,921.5 723.8,920.7 724.1,920.5 724.3,919.8 724.6,920.8 724.9,920.4 725.2,920.6 725.4,919.7 725.7,920.7 726.0,920.4 726.3,919.9 726.5,919.9 726.8,920.1 727.1,920.4 727.4,920.2 727.6,921.0 727.9,919.4 728.2,920.1 728.4,920.1 728.7,920.2 729.0,920.7 729.3,920.2 729.5,920.3 729.8,919.7 730.1,919.7 730.4,920.3 730.6,920.7 730.9,920.4 731.2,921.1 731.5,920.5 731.7,921.7 732.0,920.3 732.3,919.6 732.6,920.5 732.8,920.1 733.1,920.5 733.4,920.7 733.6,920.9 733.9,920.7 734.2,920.9 734.5,920.1 734.7,920.6 735.0,920.5 735.3,920.2 735.6,921.0 735.8,920.4 736.1,920.5 736.4,920.9 736.7,920.9 736.9,920.4 737.2,920.9 737.5,920.5 737.8,920.9 738.0,920.6 738.3,920.4 738.6,920.8 738.8,920.8 739.1,920.1 739.4,920.2 739.7,921.4 739.9,921.1 740.2,921.0 740.5,920.8 740.8,920.7 741.0,919.9 741.3,920.3 741.6,920.6 741.9,920.5 742.1,920.6 742.4,920.4 742.7,920.7 742.9,921.0 743.2,919.9 743.5,921.0 743.8,920.2 744.0,920.1 744.3,921.1 744.6,921.1 744.9,920.9 745.1,920.6 745.4,920.7 745.7,920.7 746.0,920.5 746.2,921.9 746.5,921.4 746.8,921.1 747.1,920.9 747.3,920.7 747.6,921.3 747.9,921.0 748.1,920.5 748.4,920.3 748.7,921.0 749.0,921.1 749.2,920.2 749.5,920.6 749.8,920.6 750.1,920.6 750.3,921.2 750.6,921.2 750.9,921.0 751.2,921.0 751.4,920.8 751.7,920.2 752.0,920.9 752.3,921.2 752.5,920.5 752.8,921.3 753.1,920.8 753.3,920.6 753.6,920.4 753.9,920.0 754.2,921.3 754.4,920.7 754.7,920.8 755.0,921.4 755.3,921.5 755.5,921.2 755.8,921.3 756.1,920.8 756.4,920.9 756.6,921.4 756.9,921.7 757.2,922.1 757.4,921.5 757.7,921.4 758.0,920.8 758.3,921.1 758.5,921.9 758.8,921.7 759.1,921.2 759.4,921.0 759.6,921.2 759.9,920.3 760.2,921.0 760.5,920.8 760.7,920.7 761.0,921.5 761.3,921.2 761.6,921.2 761.8,921.3 762.1,920.9 762.4,921.4 762.6,922.8 762.9,921.7 763.2,921.6 763.5,921.0 763.7,920.6 764.0,921.0 764.3,921.3 764.6,920.5 764.8,921.0 765.1,919.8 765.4,921.0 765.7,922.0 765.9,921.1 766.2,921.7 766.5,921.0 766.8,920.7 767.0,920.6 767.3,920.4 767.6,920.6 767.8,919.4 768.1,920.6 768.4,920.6 768.7,921.2 768.9,921.3 769.2,921.1 769.5,921.4 769.8,921.5 770.0,921.1 770.3,920.6 770.6,920.6 770.9,921.0 771.1,920.9 771.4,921.0 771.7,921.1 772.0,920.8 772.2,920.9 772.5,920.6 772.8,921.1 773.0,921.4 773.3,921.5 773.6,921.3 773.9,921.9 774.1,921.5 774.4,920.9 774.7,921.0 775.0,920.8 775.2,921.3 775.5,921.5 775.8,921.1 776.1,920.6 776.3,921.3 776.6,920.6 776.9,920.8 777.1,921.2 777.4,921.3 777.7,920.0 778.0,920.7 778.2,920.9 778.5,921.0 778.8,920.5 779.1,921.3 779.3,920.8 779.6,921.1 779.9,921.1 780.2,921.9 780.4,921.1 780.7,920.8 781.0,921.7 781.3,921.5 781.5,921.1 781.8,921.4 782.1,922.3 782.3,920.9 782.6,921.1 782.9,921.7 783.2,922.2 783.4,921.3 783.7,921.6 784.0,921.3 784.3,921.4 784.5,920.8 784.8,920.9 785.1,920.9 785.4,920.7 785.6,921.3 785.9,920.6 786.2,920.3 786.5,920.1 786.7,921.4 787.0,920.5 787.3,920.5 787.5,921.6 787.8,921.2 788.1,920.7 788.4,920.0 788.6,921.0 788.9,921.2 789.2,921.3 789.5,921.2 789.7,920.9 790.0,920.8 790.3,921.4 790.6,920.8 790.8,921.5 791.1,920.8 791.4,920.8 791.6,921.6 791.9,921.3 792.2,920.9 792.5,921.5 792.7,921.0 793.0,921.1 793.3,921.1 793.6,921.3 793.8,921.2 794.1,921.7 794.4,920.3 794.7,920.6 794.9,921.2 795.2,920.9 795.5,921.8 795.8,921.5 796.0,921.3 796.3,920.9 796.6,920.5 796.8,920.8 797.1,920.7 797.4,921.5 797.7,921.0 797.9,920.2 798.2,920.2 798.5,920.7 798.8,921.3 799.0,920.8 799.3,921.1 799.6,921.5 799.9,921.1 800.1,920.7 800.4,921.3 800.7,920.6 801.0,920.1 801.2,920.9 801.5,920.5 801.8,921.2 802.0,920.2 802.3,921.0 802.6,921.0 802.9,920.9 803.1,921.0 803.4,921.6 803.7,921.7 804.0,921.1 804.2,920.4 804.5,920.9 804.8,921.3 805.1,920.7 805.3,920.9 805.6,921.2 805.9,920.8 806.2,921.3 806.4,921.5 806.7,921.5 807.0,921.2 807.2,921.2 807.5,921.6 807.8,921.7 808.1,921.7 808.3,920.8 808.6,920.9 808.9,921.4 809.2,922.0 809.4,920.2 809.7,920.9 810.0,920.9 810.3,920.3 810.5,920.4 810.8,921.2 811.1,921.5 811.3,922.0 811.6,921.8 811.9,921.3 812.2,921.6 812.4,920.8 812.7,921.4 813.0,920.7 813.3,921.0 813.5,920.8 813.8,921.2 814.1,920.2 814.4,920.6 814.6,921.5 814.9,922.1 815.2,921.8 815.5,920.9 815.7,921.7 816.0,922.0 816.3,921.8 816.5,921.8 816.8,921.6 817.1,922.3 817.4,921.6 817.6,921.2 817.9,921.2 818.2,920.3 818.5,920.2 818.7,921.3 819.0,921.1 819.3,921.8 819.6,921.9 819.8,921.9 820.1,922.5 820.4,921.7 820.7,920.9 820.9,920.9 821.2,920.9 821.5,921.0 821.7,920.6 822.0,920.2 822.3,920.8 822.6,921.0 822.8,921.2 823.1,920.9 823.4,921.3 823.7,921.0 823.9,921.2 824.2,921.5 824.5,921.4 824.8,920.7 825.0,921.4 825.3,921.1 825.6,921.0 825.9,921.9 826.1,920.6 826.4,921.2 826.7,921.3 826.9,921.7 827.2,921.9 827.5,921.9 827.8,921.0 828.0,921.2 828.3,921.6 828.6,921.4 828.9,921.1 829.1,920.5 829.4,921.4 829.7,921.5 830.0,921.0 830.2,921.7 830.5,921.4 830.8,921.0 831.0,920.7 831.3,921.4 831.6,922.4 831.9,922.7 832.1,922.0 832.4,920.6 832.7,922.3 833.0,921.6 833.2,921.3 833.5,921.8 833.8,920.3 834.1,921.2 834.3,921.1 834.6,921.2 834.9,920.9 835.2,921.3 835.4,921.7 835.7,921.4 836.0,920.7 836.2,921.5 836.5,921.4 836.8,921.3 837.1,921.3 837.3,921.2 837.6,921.7 837.9,921.3 838.2,921.7 838.4,921.8 838.7,920.9 839.0,921.7 839.3,922.1 839.5,921.5 839.8,920.8 840.1,920.8 840.4,921.0 840.6,921.2 840.9,920.6 841.2,920.6 841.4,921.1 841.7,921.5 842.0,921.3 842.3,921.6 842.5,921.4 842.8,921.2 843.1,921.0 843.4,921.2 843.6,921.7 843.9,921.6 844.2,920.5 844.5,920.5 844.7,921.1 845.0,921.5 845.3,920.8 845.5,921.4 845.8,921.4 846.1,921.0 846.4,921.3 846.6,921.5 846.9,920.9 847.2,920.3 847.5,921.6 847.7,921.4 848.0,920.9 848.3,920.6 848.6,920.8 848.8,920.6 849.1,921.2 849.4,921.3 849.7,921.0 849.9,921.4 850.2,921.3 850.5,921.8 850.7,921.6 851.0,921.2 851.3,921.2 851.6,921.1 851.8,922.1 852.1,921.5 852.4,922.0 852.7,920.9 852.9,921.4 853.2,921.0 853.5,921.1 853.8,921.2 854.0,920.6 854.3,921.1 854.6,921.0 854.9,921.1 855.1,921.5 855.4,920.7 855.7,921.7 855.9,920.9 856.2,920.8 856.5,919.9 856.8,920.6 857.0,920.6 857.3,920.8 857.6,921.0 857.9,920.7 858.1,921.2 858.4,921.4 858.7,921.7 859.0,922.0 859.2,922.0 859.5,921.5 859.8,921.3 860.1,921.5 860.3,920.8 860.6,921.0 860.9,921.3 861.1,920.8 861.4,921.0 861.7,920.9 862.0,921.4 862.2,922.0 862.5,921.4 862.8,921.5 863.1,921.8 863.3,921.7 863.6,921.0 863.9,921.0 864.2,920.4 864.4,920.2 864.7,921.0 865.0,921.4 865.2,920.9 865.5,920.8 865.8,921.3 866.1,921.5 866.3,921.2 866.6,920.9 866.9,920.7 867.2,921.2 867.4,920.7 867.7,921.7 868.0,921.7 868.3,921.3 868.5,921.8 868.8,921.5 869.1,921.6 869.4,921.2 869.6,921.2 869.9,921.0" fill="none" stroke="#2a2aff" stroke-width="1.2" stroke-linejoin="round"/>
<rect x="590.3" y="877.3" width="280.7" height="96.8" fill="none" stroke="#828282" stroke-width="2.1"/>
<text x="591.8" y="989.8" text-anchor="middle" style="font-family:'DejaVu Serif','Liberation Serif',serif;font-size:10.6px;letter-spacing:0.9px" fill="#545454">0</text>
<text x="646.5" y="989.8" text-anchor="middle" style="font-family:'DejaVu Serif','Liberation Serif',serif;font-size:10.6px;letter-spacing:0.9px" fill="#545454">200</text>
<text x="701.2" y="989.8" text-anchor="middle" style="font-family:'DejaVu Serif','Liberation Serif',serif;font-size:10.6px;letter-spacing:0.9px" fill="#545454">400</text>
<text x="755.9" y="989.8" text-anchor="middle" style="font-family:'DejaVu Serif','Liberation Serif',serif;font-size:10.6px;letter-spacing:0.9px" fill="#545454">600</text>
<text x="810.6" y="989.8" text-anchor="middle" style="font-family:'DejaVu Serif','Liberation Serif',serif;font-size:10.6px;letter-spacing:0.9px" fill="#545454">800</text>
<text x="865.4" y="989.8" text-anchor="middle" style="font-family:'DejaVu Serif','Liberation Serif',serif;font-size:10.6px;letter-spacing:0.9px" fill="#545454">1000</text>
<text x="587.8" y="977.5" text-anchor="end" style="font-family:'DejaVu Serif','Liberation Serif',serif;font-size:10.6px;letter-spacing:0.9px" fill="#545454">0</text>
<text x="587.8" y="946.2" text-anchor="end" style="font-family:'DejaVu Serif','Liberation Serif',serif;font-size:10.6px;letter-spacing:0.9px" fill="#545454">5000</text>
<text x="587.8" y="914.8" text-anchor="end" style="font-family:'DejaVu Serif','Liberation Serif',serif;font-size:10.6px;letter-spacing:0.9px" fill="#545454">10000</text>
<text x="587.8" y="883.5" text-anchor="end" style="font-family:'DejaVu Serif','Liberation Serif',serif;font-size:10.6px;letter-spacing:0.9px" fill="#545454">15000</text>
<rect x="756.8" y="887.7" width="13.6" height="10.8" fill="#fff" stroke="#ccc" stroke-width="1"/>
<rect x="758.0" y="889.0" width="11.2" height="8.2" fill="#0000ff"/>
<text x="862.9" y="897.0" text-anchor="end" style="font-family:'DejaVu Serif','Liberation Serif',serif;font-size:11.4px;letter-spacing:0.36px" fill="#8a8a8a">aida02 3.13.W</text>
<path d="M859.1 878.0L870.1 867.0L881.1 878.0L870.1 889.0z" fill="#ff0000"/>
</g>
<g>
<path d="M1118.8 878.6V973.3" stroke="#e7e7e7" stroke-width="1.2"/>
<path d="M1173.5 878.6V973.3" stroke="#e7e7e7" stroke-width="1.2"/>
<path d="M1228.3 878.6V973.3" stroke="#e7e7e7" stroke-width="1.2"/>
<path d="M1283.0 878.6V973.3" stroke="#e7e7e7" stroke-width="1.2"/>
<path d="M1337.7 878.6V973.3" stroke="#e7e7e7" stroke-width="1.2"/>
<path d="M1064.1 942.6H1342.9" stroke="#e7e7e7" stroke-width="1.2"/>
<path d="M1064.1 912.0H1342.9" stroke="#e7e7e7" stroke-width="1.2"/>
<path d="M1064.1 881.3H1342.9" stroke="#e7e7e7" stroke-width="1.2"/>
<polyline points="1064.1,920.2 1064.4,920.2 1064.6,920.5 1064.9,920.0 1065.2,920.3 1065.5,920.4 1065.7,919.8 1066.0,920.1 1066.3,920.0 1066.6,920.2 1066.8,920.5 1067.1,920.2 1067.4,919.9 1067.7,920.3 1067.9,920.2 1068.2,920.9 1068.5,920.0 1068.8,920.5 1069.0,919.6 1069.3,919.5 1069.6,919.9 1069.8,920.9 1070.1,920.5 1070.4,920.6 1070.7,920.3 1070.9,919.6 1071.2,919.2 1071.5,919.8 1071.8,921.1 1072.0,920.2 1072.3,920.1 1072.6,920.2 1072.9,920.9 1073.1,920.7 1073.4,920.0 1073.7,919.7 1073.9,920.3 1074.2,919.9 1074.5,920.4 1074.8,920.5 1075.0,920.6 1075.3,919.9 1075.6,920.3 1075.9,920.5 1076.1,919.8 1076.4,920.2 1076.7,919.6 1077.0,920.1 1077.2,920.7 1077.5,920.6 1077.8,920.1 1078.1,920.2 1078.3,920.6 1078.6,921.3 1078.9,920.4 1079.1,920.9 1079.4,921.0 1079.7,920.4 1080.0,920.6 1080.2,920.2 1080.5,920.7 1080.8,920.4 1081.1,920.6 1081.3,920.2 1081.6,919.8 1081.9,920.1 1082.2,920.1 1082.4,920.0 1082.7,920.6 1083.0,920.3 1083.3,920.4 1083.5,920.2 1083.8,919.8 1084.1,920.4 1084.3,919.8 1084.6,919.4 1084.9,920.1 1085.2,920.0 1085.4,919.2 1085.7,919.9 1086.0,919.3 1086.3,919.5 1086.5,919.1 1086.8,920.4 1087.1,919.8 1087.4,919.5 1087.6,920.0 1087.9,920.4 1088.2,920.0 1088.5,919.7 1088.7,919.6 1089.0,920.4 1089.3,920.3 1089.5,920.6 1089.8,920.6 1090.1,920.5 1090.4,920.6 1090.6,920.2 1090.9,918.9 1091.2,919.6 1091.5,920.0 1091.7,920.5 1092.0,920.0 1092.3,920.3 1092.6,920.1 1092.8,920.8 1093.1,920.5 1093.4,920.7 1093.6,921.1 1093.9,920.1 1094.2,920.0 1094.5,919.6 1094.7,919.8 1095.0,920.8 1095.3,921.1 1095.6,921.0 1095.8,920.4 1096.1,919.5 1096.4,919.6 1096.7,920.3 1096.9,920.5 1097.2,920.5 1097.5,920.2 1097.8,920.2 1098.0,919.9 1098.3,920.4 1098.6,920.5 1098.8,920.0 1099.1,920.3 1099.4,920.8 1099.7,920.6 1099.9,920.4 1100.2,920.5 1100.5,920.0 1100.8,919.6 1101.0,919.4 1101.3,920.5 1101.6,920.5 1101.9,919.9 1102.1,920.0 1102.4,920.1 1102.7,919.7 1103.0,919.8 1103.2,920.0 1103.5,920.3 1103.8,919.6 1104.0,920.7 1104.3,921.0 1104.6,920.1 1104.9,920.2 1105.1,920.6 1105.4,920.6 1105.7,920.4 1106.0,920.1 1106.2,919.8 1106.5,919.4 1106.8,919.9 1107.1,920.7 1107.3,919.8 1107.6,921.1 1107.9,920.1 1108.1,920.1 1108.4,919.3 1108.7,920.8 1109.0,919.9 1109.2,920.0 1109.5,919.4 1109.8,920.3 1110.1,920.3 1110.3,920.9 1110.6,920.7 1110.9,920.9 1111.2,921.1 1111.4,920.7 1111.7,919.5 1112.0,920.4 1112.3,920.5 1112.5,920.6 1112.8,920.0 1113.1,919.4 1113.3,920.5 1113.6,920.4 1113.9,919.9 1114.2,919.8 1114.4,920.4 1114.7,920.2 1115.0,920.6 1115.3,920.2 1115.5,919.8 1115.8,920.0 1116.1,920.4 1116.4,920.3 1116.6,919.7 1116.9,919.5 1117.2,919.5 1117.5,920.4 1117.7,920.5 1118.0,920.4 1118.3,920.0 1118.5,902.6 1118.8,902.7 1119.1,902.5 1119.4,888.3 1119.6,887.2 1119.9,887.2 1120.2,886.7 1120.5,888.7 1120.7,888.9 1121.0,888.4 1121.3,887.9 1121.6,887.9 1121.8,888.3 1122.1,888.4 1122.4,888.3 1122.7,888.9 1122.9,889.8 1123.2,889.5 1123.5,888.8 1123.7,888.9 1124.0,889.4 1124.3,889.4 1124.6,889.4 1124.8,889.0 1125.1,889.0 1125.4,888.9 1125.7,889.2 1125.9,889.9 1126.2,889.6 1126.5,889.7 1126.8,889.9 1127.0,889.7 1127.3,888.5 1127.6,888.2 1127.8,889.0 1128.1,890.0 1128.4,889.8 1128.7,890.1 1128.9,890.0 1129.2,890.7 1129.5,890.7 1129.8,890.2 1130.0,890.9 1130.3,891.1 1130.6,891.7 1130.9,890.9 1131.1,889.6 1131.4,890.9 1131.7,891.2 1132.0,890.0 1132.2,890.9 1132.5,890.1 1132.8,890.9 1133.0,891.4 1133.3,891.2 1133.6,891.2 1133.9,891.2 1134.1,891.2 1134.4,890.8 1134.7,890.3 1135.0,890.8 1135.2,890.9 1135.5,891.2 1135.8,911.4 1136.1,911.2 1136.3,912.0 1136.6,920.4 1136.9,919.9 1137.2,920.1 1137.4,920.4 1137.7,919.6 1138.0,920.1 1138.2,919.7 1138.5,920.2 1138.8,920.7 1139.1,920.9 1139.3,921.3 1139.6,920.8 1139.9,921.1 1140.2,920.1 1140.4,919.6 1140.7,920.3 1141.0,921.0 1141.3,921.0 1141.5,920.8 1141.8,919.3 1142.1,919.5 1142.4,920.3 1142.6,920.0 1142.9,920.5 1143.2,920.0 1143.4,920.5 1143.7,919.9 1144.0,919.9 1144.3,920.3 1144.5,920.2 1144.8,920.1 1145.1,920.5 1145.4,920.7 1145.6,920.7 1145.9,919.8 1146.2,920.1 1146.5,920.0 1146.7,920.0 1147.0,921.2 1147.3,920.9 1147.5,920.4 1147.8,920.8 1148.1,920.0 1148.4,919.5 1148.6,920.2 1148.9,919.9 1149.2,920.8 1149.5,920.2 1149.7,921.2 1150.0,920.0 1150.3,920.2 1150.6,919.8 1150.8,920.8 1151.1,920.1 1151.4,919.5 1151.7,919.9 1151.9,920.3 1152.2,920.8 1152.5,920.5 1152.7,920.3 1153.0,920.0 1153.3,920.7 1153.6,919.8 1153.8,920.2 1154.1,920.1 1154.4,920.4 1154.7,920.9 1154.9,921.3 1155.2,920.6 1155.5,921.6 1155.8,919.6 1156.0,919.9 1156.3,920.3 1156.6,920.6 1156.9,919.6 1157.1,920.0 1157.4,920.5 1157.7,921.1 1157.9,920.2 1158.2,920.5 1158.5,921.0 1158.8,920.4 1159.0,920.1 1159.3,920.1 1159.6,920.7 1159.9,920.5 1160.1,920.6 1160.4,919.7 1160.7,919.9 1161.0,920.2 1161.2,920.8 1161.5,921.3 1161.8,921.3 1162.0,920.8 1162.3,920.4 1162.6,921.2 1162.9,920.8 1163.1,921.1 1163.4,920.6 1163.7,920.6 1164.0,921.3 1164.2,921.3 1164.5,920.5 1164.8,919.7 1165.1,920.6 1165.3,919.9 1165.6,920.6 1165.9,919.8 1166.2,920.1 1166.4,920.7 1166.7,920.5 1167.0,920.8 1167.2,920.2 1167.5,919.2 1167.8,920.5 1168.1,920.5 1168.3,920.0 1168.6,919.1 1168.9,920.5 1169.2,920.8 1169.4,920.0 1169.7,920.6 1170.0,920.2 1170.3,920.1 1170.5,921.0 1170.8,920.4 1171.1,920.6 1171.4,919.9 1171.6,920.8 1171.9,920.8 1172.2,920.9 1172.4,920.5 1172.7,920.9 1173.0,921.5 1173.3,921.6 1173.5,920.5 1173.8,920.2 1174.1,920.3 1174.4,920.4 1174.6,920.7 1174.9,920.2 1175.2,920.4 1175.5,920.7 1175.7,920.4 1176.0,919.4 1176.3,920.2 1176.6,920.5 1176.8,921.1 1177.1,920.6 1177.4,921.6 1177.6,921.0 1177.9,920.7 1178.2,920.8 1178.5,920.5 1178.7,919.6 1179.0,919.5 1179.3,920.5 1179.6,921.0 1179.8,920.8 1180.1,919.9 1180.4,920.2 1180.7,920.2 1180.9,920.8 1181.2,920.1 1181.5,920.2 1181.7,920.8 1182.0,920.8 1182.3,920.6 1182.6,920.8 1182.8,920.4 1183.1,921.0 1183.4,921.2 1183.7,921.1 1183.9,921.1 1184.2,921.0 1184.5,920.0 1184.8,920.9 1185.0,920.2 1185.3,920.4 1185.6,920.4 1185.9,920.0 1186.1,919.3 1186.4,920.0 1186.7,920.7 1186.9,921.2 1187.2,920.9 1187.5,920.2 1187.8,921.0 1188.0,920.8 1188.3,920.6 1188.6,920.5 1188.9,920.4 1189.1,920.8 1189.4,919.8 1189.7,919.7 1190.0,920.4 1190.2,920.4 1190.5,920.1 1190.8,920.4 1191.1,920.9 1191.3,920.2 1191.6,921.4 1191.9,921.2 1192.1,920.6 1192.4,920.4 1192.7,920.3 1193.0,920.5 1193.2,920.5 1193.5,920.4 1193.8,920.2 1194.1,920.9 1194.3,921.2 1194.6,921.1 1194.9,921.4 1195.2,921.2 1195.4,921.8 1195.7,921.8 1196.0,920.6 1196.2,920.9 1196.5,921.0 1196.8,921.4 1197.1,919.8 1197.3,921.3 1197.6,920.9 1197.9,920.8 1198.2,921.2 1198.4,920.9 1198.7,920.9 1199.0,920.5 1199.3,920.5 1199.5,920.9 1199.8,920.5 1200.1,920.2 1200.4,920.6 1200.6,920.0 1200.9,920.9 1201.2,920.1 1201.4,920.7 1201.7,920.7 1202.0,921.1 1202.3,921.1 1202.5,921.3 1202.8,921.0 1203.1,919.7 1203.4,920.2 1203.6,920.5 1203.9,920.6 1204.2,920.9 1204.5,920.7 1204.7,920.4 1205.0,920.9 1205.3,921.3 1205.6,921.1 1205.8,920.0 1206.1,921.2 1206.4,920.3 1206.6,919.8 1206.9,920.6 1207.2,921.1 1207.5,921.3 1207.7,920.8 1208.0,921.3 1208.3,921.2 1208.6,920.1 1208.8,920.5 1209.1,921.1 1209.4,920.9 1209.7,920.7 1209.9,920.2 1210.2,920.3 1210.5,920.5 1210.8,920.8 1211.0,919.4 1211.3,920.4 1211.6,920.5 1211.8,920.9 1212.1,921.0 1212.4,921.0 1212.7,920.6 1212.9,920.4 1213.2,920.0 1213.5,920.8 1213.8,920.2 1214.0,920.3 1214.3,920.0 1214.6,920.0 1214.9,919.8 1215.1,920.3 1215.4,920.8 1215.7,921.9 1215.9,921.1 1216.2,921.2 1216.5,921.0 1216.8,920.6 1217.0,920.3 1217.3,920.6 1217.6,920.3 1217.9,920.2 1218.1,921.3 1218.4,921.5 1218.7,921.8 1219.0,920.6 1219.2,920.2 1219.5,920.9 1219.8,920.8 1220.1,920.0 1220.3,920.1 1220.6,921.0 1220.9,920.5 1221.1,921.5 1221.4,921.0 1221.7,922.0 1222.0,921.2 1222.2,921.1 1222.5,921.3 1222.8,920.6 1223.1,919.9 1223.3,921.3 1223.6,920.5 1223.9,920.4 1224.2,920.6 1224.4,921.2 1224.7,921.2 1225.0,921.6 1225.3,921.3 1225.5,921.3 1225.8,920.9 1226.1,920.4 1226.3,921.3 1226.6,921.9 1226.9,922.6 1227.2,920.9 1227.4,920.5 1227.7,920.9 1228.0,920.1 1228.3,920.7 1228.5,921.6 1228.8,920.8 1229.1,921.4 1229.4,921.0 1229.6,922.1 1229.9,920.6 1230.2,921.2 1230.4,920.2 1230.7,921.1 1231.0,920.5 1231.3,920.8 1231.5,921.7 1231.8,921.8 1232.1,921.4 1232.4,921.3 1232.6,921.1 1232.9,920.8 1233.2,921.0 1233.5,921.1 1233.7,920.6 1234.0,920.1 1234.3,920.2 1234.6,920.2 1234.8,920.1 1235.1,920.7 1235.4,920.6 1235.6,920.5 1235.9,921.1 1236.2,920.9 1236.5,921.8 1236.7,922.3 1237.0,921.6 1237.3,921.0 1237.6,920.5 1237.8,920.6 1238.1,920.4 1238.4,920.3 1238.7,921.0 1238.9,920.6 1239.2,921.7 1239.5,921.2 1239.8,920.7 1240.0,921.8 1240.3,920.9 1240.6,920.5 1240.8,920.2 1241.1,920.0 1241.4,920.1 1241.7,920.5 1241.9,921.0 1242.2,921.3 1242.5,920.6 1242.8,920.6 1243.0,920.2 1243.3,920.6 1243.6,920.9 1243.9,920.6 1244.1,920.6 1244.4,920.9 1244.7,920.6 1245.0,920.9 1245.2,920.8 1245.5,920.9 1245.8,921.0 1246.0,921.2 1246.3,920.9 1246.6,921.4 1246.9,921.4 1247.1,921.0 1247.4,920.3 1247.7,920.6 1248.0,920.8 1248.2,920.8 1248.5,921.0 1248.8,921.2 1249.1,921.7 1249.3,921.2 1249.6,922.2 1249.9,921.8 1250.1,921.7 1250.4,921.1 1250.7,921.1 1251.0,921.3 1251.2,921.3 1251.5,920.8 1251.8,921.2 1252.1,920.9 1252.3,921.1 1252.6,921.2 1252.9,921.0 1253.2,920.7 1253.4,920.3 1253.7,920.7 1254.0,920.4 1254.3,920.1 1254.5,921.0 1254.8,921.4 1255.1,920.9 1255.3,920.8 1255.6,920.8 1255.9,921.3 1256.2,921.6 1256.4,921.5 1256.7,921.6 1257.0,921.5 1257.3,920.6 1257.5,920.7 1257.8,920.9 1258.1,921.2 1258.4,921.3 1258.6,921.2 1258.9,920.5 1259.2,920.7 1259.5,920.0 1259.7,920.5 1260.0,921.3 1260.3,920.9 1260.5,920.7 1260.8,921.8 1261.1,920.9 1261.4,921.6 1261.6,920.4 1261.9,921.0 1262.2,920.9 1262.5,920.5 1262.7,921.7 1263.0,921.6 1263.3,921.9 1263.6,921.0 1263.8,920.6 1264.1,921.5 1264.4,921.2 1264.6,921.0 1264.9,921.4 1265.2,921.5 1265.5,921.8 1265.7,921.1 1266.0,921.0 1266.3,920.7 1266.6,920.9 1266.8,920.8 1267.1,921.2 1267.4,921.2 1267.7,920.9 1267.9,920.7 1268.2,920.9 1268.5,920.5 1268.8,921.0 1269.0,920.9 1269.3,921.1 1269.6,921.3 1269.8,921.6 1270.1,921.6 1270.4,920.9 1270.7,920.7 1270.9,921.2 1271.2,920.8 1271.5,921.3 1271.8,920.9 1272.0,920.5 1272.3,920.5 1272.6,921.6 1272.9,920.6 1273.1,921.4 1273.4,921.4 1273.7,921.5 1274.0,920.6 1274.2,920.5 1274.5,921.6 1274.8,920.9 1275.0,921.0 1275.3,920.7 1275.6,920.8 1275.9,921.3 1276.1,920.8 1276.4,921.1 1276.7,920.8 1277.0,921.3 1277.2,920.7 1277.5,921.1 1277.8,920.9 1278.1,920.2 1278.3,921.5 1278.6,921.0 1278.9,920.7 1279.2,921.5 1279.4,921.1 1279.7,920.6 1280.0,921.6 1280.2,921.0 1280.5,920.9 1280.8,921.7 1281.1,922.0 1281.3,921.8 1281.6,920.8 1281.9,920.7 1282.2,921.0 1282.4,920.9 1282.7,920.9 1283.0,920.6 1283.3,921.5 1283.5,920.5 1283.8,920.6 1284.1,921.0 1284.3,921.4 1284.6,921.6 1284.9,920.6 1285.2,921.1 1285.4,921.0 1285.7,921.3 1286.0,921.6 1286.3,920.7 1286.5,921.1 1286.8,921.5 1287.1,921.5 1287.4,921.3 1287.6,920.7 1287.9,920.4 1288.2,921.1 1288.5,920.9 1288.7,921.3 1289.0,920.8 1289.3,920.1 1289.5,920.7 1289.8,920.7 1290.1,920.8 1290.4,920.7 1290.6,921.1 1290.9,921.9 1291.2,921.3 1291.5,921.3 1291.7,922.1 1292.0,920.9 1292.3,921.5 1292.6,920.6 1292.8,921.6 1293.1,921.0 1293.4,921.4 1293.7,921.6 1293.9,921.7 1294.2,921.7 1294.5,922.0 1294.7,921.5 1295.0,921.6 1295.3,921.0 1295.6,920.9 1295.8,921.2 1296.1,921.1 1296.4,922.0 1296.7,921.6 1296.9,921.3 1297.2,921.9 1297.5,920.6 1297.8,921.2 1298.0,920.8 1298.3,920.3 1298.6,920.5 1298.9,921.0 1299.1,921.1 1299.4,920.8 1299.7,921.2 1299.9,921.0 1300.2,920.1 1300.5,921.0 1300.8,920.6 1301.0,920.5 1301.3,921.1 1301.6,921.3 1301.9,921.1 1302.1,920.9 1302.4,920.6 1302.7,920.4 1303.0,921.4 1303.2,921.2 1303.5,921.4 1303.8,921.1 1304.0,921.1 1304.3,921.3 1304.6,921.2 1304.9,921.0 1305.1,921.2 1305.4,921.1 1305.7,920.6 1306.0,920.4 1306.2,920.9 1306.5,920.9 1306.8,920.8 1307.1,921.1 1307.3,921.1 1307.6,921.2 1307.9,921.1 1308.2,920.2 1308.4,920.7 1308.7,921.4 1309.0,922.1 1309.2,920.9 1309.5,920.2 1309.8,920.7 1310.1,920.6 1310.3,920.7 1310.6,921.2 1310.9,921.1 1311.2,921.0 1311.4,920.2 1311.7,920.7 1312.0,921.5 1312.3,921.7 1312.5,921.9 1312.8,921.3 1313.1,921.1 1313.4,920.9 1313.6,920.4 1313.9,920.7 1314.2,920.4 1314.4,920.8 1314.7,920.7 1315.0,920.4 1315.3,920.1 1315.5,921.4 1315.8,921.4 1316.1,920.2 1316.4,920.0 1316.6,920.7 1316.9,920.5 1317.2,920.8 1317.5,920.9 1317.7,920.9 1318.0,921.5 1318.3,921.3 1318.5,921.0 1318.8,921.0 1319.1,922.0 1319.4,920.8 1319.6,921.2 1319.9,920.8 1320.2,920.5 1320.5,920.9 1320.7,920.4 1321.0,921.1 1321.3,920.9 1321.6,921.4 1321.8,920.6 1322.1,920.4 1322.4,920.4 1322.7,920.8 1322.9,921.3 1323.2,921.9 1323.5,921.4 1323.7,921.1 1324.0,920.6 1324.3,921.4 1324.6,921.0 1324.8,920.2 1325.1,921.4 1325.4,920.4 1325.7,919.9 1325.9,920.9 1326.2,921.8 1326.5,921.1 1326.8,920.6 1327.0,921.2 1327.3,921.9 1327.6,921.3 1327.9,921.3 1328.1,921.7 1328.4,920.9 1328.7,921.0 1328.9,921.1 1329.2,920.6 1329.5,921.1 1329.8,921.0 1330.0,921.2 1330.3,920.9 1330.6,920.5 1330.9,921.0 1331.1,921.2 1331.4,921.8 1331.7,921.6 1332.0,920.7 1332.2,920.4 1332.5,919.8 1332.8,920.0 1333.1,920.5 1333.3,921.2 1333.6,920.9 1333.9,921.0 1334.1,921.1 1334.4,920.7 1334.7,920.5 1335.0,921.4 1335.2,921.6 1335.5,920.5 1335.8,920.1 1336.1,920.4 1336.3,921.6 1336.6,921.8 1336.9,921.1 1337.2,920.9 1337.4,920.7 1337.7,921.5 1338.0,921.0 1338.2,920.5 1338.5,919.9 1338.8,919.8 1339.1,921.5 1339.3,921.2 1339.6,922.0 1339.9,921.0 1340.2,920.3 1340.4,921.1 1340.7,921.5 1341.0,920.8 1341.3,921.1 1341.5,920.7 1341.8,920.7 1342.1,920.9 1342.4,920.9 1342.6,920.1 1342.9,920.7" fill="none" stroke="#2a2aff" stroke-width="1.2" stroke-linejoin="round"/>
<rect x="1063.3" y="877.3" width="280.7" height="96.8" fill="none" stroke="#828282" stroke-width="2.1"/>
<text x="1064.8" y="989.8" text-anchor="middle" style="font-family:'DejaVu Serif','Liberation Serif',serif;font-size:10.6px;letter-spacing:0.9px" fill="#545454">0</text>
<text x="1119.5" y="989.8" text-anchor="middle" style="font-family:'DejaVu Serif','Liberation Serif',serif;font-size:10.6px;letter-spacing:0.9px" fill="#545454">200</text>
<text x="1174.2" y="989.8" text-anchor="middle" style="font-family:'DejaVu Serif','Liberation Serif',serif;font-size:10.6px;letter-spacing:0.9px" fill="#545454">400</text>
<text x="1228.9" y="989.8" text-anchor="middle" style="font-family:'DejaVu Serif','Liberation Serif',serif;font-size:10.6px;letter-spacing:0.9px" fill="#545454">600</text>
<text x="1283.6" y="989.8" text-anchor="middle" style="font-family:'DejaVu Serif','Liberation Serif',serif;font-size:10.6px;letter-spacing:0.9px" fill="#545454">800</text>
<text x="1338.4" y="989.8" text-anchor="middle" style="font-family:'DejaVu Serif','Liberation Serif',serif;font-size:10.6px;letter-spacing:0.9px" fill="#545454">1000</text>
<text x="1060.8" y="977.5" text-anchor="end" style="font-family:'DejaVu Serif','Liberation Serif',serif;font-size:10.6px;letter-spacing:0.9px" fill="#545454">0</text>
<text x="1060.8" y="946.8" text-anchor="end" style="font-family:'DejaVu Serif','Liberation Serif',serif;font-size:10.6px;letter-spacing:0.9px" fill="#545454">5000</text>
<text x="1060.8" y="916.2" text-anchor="end" style="font-family:'DejaVu Serif','Liberation Serif',serif;font-size:10.6px;letter-spacing:0.9px" fill="#545454">10000</text>
<text x="1060.8" y="885.5" text-anchor="end" style="font-family:'DejaVu Serif','Liberation Serif',serif;font-size:10.6px;letter-spacing:0.9px" fill="#545454">15000</text>
<rect x="1229.8" y="887.7" width="13.6" height="10.8" fill="#fff" stroke="#ccc" stroke-width="1"/>
<rect x="1231.0" y="889.0" width="11.2" height="8.2" fill="#0000ff"/>
<text x="1335.9" y="897.0" text-anchor="end" style="font-family:'DejaVu Serif','Liberation Serif',serif;font-size:11.4px;letter-spacing:0.36px" fill="#8a8a8a">aida02 3.14.W</text>
<path d="M1332.1 878.0L1343.1 867.0L1354.1 878.0L1343.1 889.0z" fill="#ff0000"/>
</g>
<g>
<path d="M1591.8 878.6V973.3" stroke="#d0d0d0" stroke-width="1.2"/>
<path d="M1646.5 878.6V973.3" stroke="#d0d0d0" stroke-width="1.2"/>
<path d="M1701.3 878.6V973.3" stroke="#d0d0d0" stroke-width="1.2"/>
<path d="M1756.0 878.6V973.3" stroke="#d0d0d0" stroke-width="1.2"/>
<path d="M1810.7 878.6V973.3" stroke="#d0d0d0" stroke-width="1.2"/>
<path d="M1537.1 941.3H1815.9" stroke="#d0d0d0" stroke-width="1.2"/>
<path d="M1537.1 909.3H1815.9" stroke="#d0d0d0" stroke-width="1.2"/>
<polyline points="1537.1,917.7 1537.4,918.3 1537.6,919.0 1537.9,918.6 1538.2,918.6 1538.5,918.3 1538.7,918.4 1539.0,918.2 1539.3,917.6 1539.6,918.2 1539.8,918.2 1540.1,918.6 1540.4,919.2 1540.7,918.7 1540.9,917.6 1541.2,918.9 1541.5,918.8 1541.8,918.3 1542.0,918.5 1542.3,918.2 1542.6,918.7 1542.8,918.8 1543.1,919.3 1543.4,918.8 1543.7,917.8 1543.9,918.4 1544.2,918.7 1544.5,918.4 1544.8,918.6 1545.0,918.1 1545.3,918.1 1545.6,919.5 1545.9,919.0 1546.1,919.0 1546.4,918.3 1546.7,919.1 1546.9,918.6 1547.2,918.7 1547.5,918.6 1547.8,919.0 1548.0,918.3 1548.3,917.7 1548.6,917.9 1548.9,918.3 1549.1,918.5 1549.4,918.6 1549.7,919.0 1550.0,917.5 1550.2,918.2 1550.5,918.7 1550.8,917.9 1551.1,918.8 1551.3,918.7 1551.6,918.4 1551.9,918.8 1552.1,918.0 1552.4,917.9 1552.7,918.3 1553.0,918.6 1553.2,919.3 1553.5,918.8 1553.8,918.6 1554.1,918.5 1554.3,918.6 1554.6,917.9 1554.9,918.4 1555.2,918.3 1555.4,918.0 1555.7,918.1 1556.0,917.5 1556.3,917.7 1556.5,918.7 1556.8,918.0 1557.1,917.8 1557.3,919.1 1557.6,918.7 1557.9,918.4 1558.2,918.1 1558.4,918.0 1558.7,918.0 1559.0,918.0 1559.3,918.3 1559.5,918.9 1559.8,918.9 1560.1,918.3 1560.4,918.5 1560.6,917.3 1560.9,918.5 1561.2,917.4 1561.5,918.3 1561.7,917.7 1562.0,917.5 1562.3,917.7 1562.5,918.1 1562.8,917.8 1563.1,917.4 1563.4,918.0 1563.6,918.8 1563.9,918.7 1564.2,918.2 1564.5,918.3 1564.7,918.6 1565.0,918.6 1565.3,918.6 1565.6,919.5 1565.8,918.6 1566.1,918.5 1566.4,918.5 1566.6,918.2 1566.9,917.8 1567.2,918.7 1567.5,918.4 1567.7,918.5 1568.0,918.0 1568.3,918.1 1568.6,918.7 1568.8,919.1 1569.1,919.1 1569.4,918.8 1569.7,919.1 1569.9,918.3 1570.2,918.4 1570.5,918.0 1570.8,917.6 1571.0,917.1 1571.3,918.4 1571.6,918.5 1571.8,918.2 1572.1,918.3 1572.4,919.2 1572.7,918.5 1572.9,918.2 1573.2,918.0 1573.5,918.1 1573.8,919.1 1574.0,919.4 1574.3,918.8 1574.6,919.0 1574.9,918.8 1575.1,918.0 1575.4,917.8 1575.7,918.5 1576.0,918.4 1576.2,917.7 1576.5,918.2 1576.8,918.6 1577.0,918.8 1577.3,918.7 1577.6,919.3 1577.9,918.4 1578.1,918.4 1578.4,917.8 1578.7,918.4 1579.0,918.4 1579.2,918.4 1579.5,918.6 1579.8,917.6 1580.1,917.9 1580.3,918.5 1580.6,918.1 1580.9,918.8 1581.1,918.7 1581.4,918.2 1581.7,918.0 1582.0,918.2 1582.2,919.0 1582.5,918.0 1582.8,918.5 1583.1,919.0 1583.3,918.4 1583.6,918.6 1583.9,918.2 1584.2,919.4 1584.4,918.3 1584.7,918.6 1585.0,918.4 1585.3,918.5 1585.5,918.6 1585.8,918.7 1586.1,918.7 1586.3,918.1 1586.6,918.6 1586.9,918.8 1587.2,919.1 1587.4,919.1 1587.7,918.8 1588.0,917.9 1588.3,918.1 1588.5,917.9 1588.8,918.2 1589.1,918.2 1589.4,919.1 1589.6,918.2 1589.9,918.8 1590.2,918.7 1590.5,918.2 1590.7,918.6 1591.0,918.3 1591.3,918.2 1591.5,902.1 1591.8,900.8 1592.1,902.0 1592.4,888.7 1592.6,888.6 1592.9,887.7 1593.2,888.9 1593.5,889.2 1593.7,889.5 1594.0,889.6 1594.3,889.5 1594.6,889.8 1594.8,889.4 1595.1,889.3 1595.4,889.4 1595.7,889.1 1595.9,889.0 1596.2,889.1 1596.5,890.2 1596.7,889.5 1597.0,889.5 1597.3,889.0 1597.6,888.5 1597.8,889.7 1598.1,889.6 1598.4,890.5 1598.7,890.0 1598.9,889.8 1599.2,889.6 1599.5,889.8 1599.8,890.0 1600.0,890.2 1600.3,890.6 1600.6,890.5 1600.8,890.8 1601.1,891.2 1601.4,891.8 1601.7,890.6 1601.9,890.2 1602.2,891.0 1602.5,891.2 1602.8,891.6 1603.0,890.7 1603.3,889.6 1603.6,890.4 1603.9,890.9 1604.1,890.7 1604.4,891.2 1604.7,890.5 1605.0,890.5 1605.2,890.5 1605.5,891.0 1605.8,890.5 1606.0,891.2 1606.3,891.1 1606.6,891.5 1606.9,892.0 1607.1,892.7 1607.4,892.4 1607.7,892.3 1608.0,892.8 1608.2,892.8 1608.5,911.1 1608.8,911.0 1609.1,910.2 1609.3,917.0 1609.6,917.7 1609.9,917.8 1610.2,917.8 1610.4,917.1 1610.7,917.6 1611.0,917.7 1611.2,918.1 1611.5,918.3 1611.8,917.5 1612.1,918.3 1612.3,918.3 1612.6,917.6 1612.9,918.3 1613.2,919.2 1613.4,918.4 1613.7,918.7 1614.0,918.9 1614.3,918.3 1614.5,918.4 1614.8,919.6 1615.1,918.0 1615.4,918.0 1615.6,917.9 1615.9,918.7 1616.2,918.8 1616.4,918.2 1616.7,918.2 1617.0,918.7 1617.3,918.2 1617.5,917.9 1617.8,917.8 1618.1,918.8 1618.4,918.8 1618.6,918.0 1618.9,918.8 1619.2,918.0 1619.5,919.0 1619.7,918.4 1620.0,918.2 1620.3,918.1 1620.5,918.2 1620.8,919.5 1621.1,918.8 1621.4,919.6 1621.6,919.5 1621.9,918.3 1622.2,918.8 1622.5,919.3 1622.7,918.4 1623.0,918.7 1623.3,919.0 1623.6,918.6 1623.8,919.1 1624.1,918.8 1624.4,918.7 1624.7,918.9 1624.9,918.5 1625.2,918.0 1625.5,919.6 1625.7,919.6 1626.0,918.5 1626.3,918.9 1626.6,919.3 1626.8,919.0 1627.1,918.8 1627.4,918.1 1627.7,918.2 1627.9,918.6 1628.2,918.7 1628.5,919.3 1628.8,918.5 1629.0,917.7 1629.3,917.5 1629.6,918.7 1629.9,918.9 1630.1,919.2 1630.4,918.2 1630.7,918.7 1630.9,917.8 1631.2,918.5 1631.5,918.0 1631.8,918.2 1632.0,918.5 1632.3,919.3 1632.6,919.1 1632.9,918.2 1633.1,918.8 1633.4,918.3 1633.7,918.4 1634.0,917.9 1634.2,918.3 1634.5,918.4 1634.8,918.8 1635.0,918.5 1635.3,918.0 1635.6,918.8 1635.9,919.0 1636.1,918.2 1636.4,917.6 1636.7,917.7 1637.0,917.8 1637.2,919.0 1637.5,919.5 1637.8,918.6 1638.1,919.3 1638.3,919.1 1638.6,918.6 1638.9,919.2 1639.2,918.9 1639.4,917.9 1639.7,918.3 1640.0,919.0 1640.2,918.9 1640.5,918.5 1640.8,918.5 1641.1,918.1 1641.3,918.1 1641.6,919.1 1641.9,919.7 1642.2,918.8 1642.4,918.6 1642.7,918.2 1643.0,919.0 1643.3,918.7 1643.5,918.7 1643.8,919.1 1644.1,918.4 1644.4,918.7 1644.6,918.0 1644.9,917.9 1645.2,917.9 1645.4,919.2 1645.7,918.9 1646.0,918.2 1646.3,919.0 1646.5,919.3 1646.8,918.8 1647.1,918.8 1647.4,918.2 1647.6,918.7 1647.9,918.5 1648.2,918.4 1648.5,918.9 1648.7,919.7 1649.0,918.9 1649.3,918.4 1649.6,918.0 1649.8,918.5 1650.1,918.7 1650.4,918.3 1650.6,918.7 1650.9,918.2 1651.2,919.6 1651.5,918.6 1651.7,918.5 1652.0,918.7 1652.3,919.3 1652.6,919.4 1652.8,918.8 1653.1,919.4 1653.4,918.0 1653.7,919.0 1653.9,918.7 1654.2,919.1 1654.5,918.8 1654.7,918.4 1655.0,918.4 1655.3,918.3 1655.6,917.8 1655.8,918.7 1656.1,919.6 1656.4,919.3 1656.7,919.2 1656.9,919.2 1657.2,919.5 1657.5,919.1 1657.8,919.0 1658.0,918.8 1658.3,917.8 1658.6,918.9 1658.9,919.3 1659.1,919.7 1659.4,918.6 1659.7,918.7 1659.9,919.0 1660.2,918.8 1660.5,919.0 1660.8,918.6 1661.0,919.4 1661.3,920.7 1661.6,920.1 1661.9,919.1 1662.1,918.6 1662.4,918.8 1662.7,919.1 1663.0,918.6 1663.2,918.8 1663.5,919.0 1663.8,919.1 1664.1,918.5 1664.3,919.1 1664.6,919.1 1664.9,918.8 1665.1,918.2 1665.4,918.4 1665.7,919.1 1666.0,919.4 1666.2,919.0 1666.5,919.4 1666.8,918.9 1667.1,918.6 1667.3,919.1 1667.6,919.4 1667.9,919.3 1668.2,918.7 1668.4,918.7 1668.7,918.4 1669.0,918.2 1669.2,918.7 1669.5,918.5 1669.8,918.8 1670.1,918.5 1670.3,918.5 1670.6,917.9 1670.9,918.6 1671.2,918.3 1671.4,919.5 1671.7,919.2 1672.0,918.8 1672.3,918.5 1672.5,919.0 1672.8,919.2 1673.1,918.7 1673.4,917.0 1673.6,918.8 1673.9,919.1 1674.2,918.7 1674.4,918.5 1674.7,918.5 1675.0,919.0 1675.3,918.5 1675.5,919.2 1675.8,918.0 1676.1,917.9 1676.4,918.3 1676.6,918.8 1676.9,919.0 1677.2,919.6 1677.5,919.4 1677.7,918.4 1678.0,919.3 1678.3,918.5 1678.6,918.5 1678.8,918.5 1679.1,918.4 1679.4,918.4 1679.6,918.6 1679.9,919.0 1680.2,919.8 1680.5,919.3 1680.7,918.6 1681.0,919.3 1681.3,919.8 1681.6,919.0 1681.8,919.0 1682.1,917.9 1682.4,918.9 1682.7,918.5 1682.9,919.1 1683.2,919.3 1683.5,918.6 1683.8,918.5 1684.0,918.5 1684.3,918.7 1684.6,919.3 1684.8,918.4 1685.1,918.8 1685.4,919.3 1685.7,918.7 1685.9,918.5 1686.2,918.8 1686.5,918.6 1686.8,919.3 1687.0,919.6 1687.3,918.6 1687.6,918.7 1687.9,918.9 1688.1,918.9 1688.4,919.7 1688.7,919.8 1688.9,920.0 1689.2,919.1 1689.5,918.6 1689.8,918.5 1690.0,920.3 1690.3,919.3 1690.6,919.3 1690.9,918.9 1691.1,919.8 1691.4,919.6 1691.7,918.9 1692.0,919.3 1692.2,919.5 1692.5,918.5 1692.8,918.3 1693.1,918.3 1693.3,918.4 1693.6,918.8 1693.9,918.8 1694.1,919.1 1694.4,918.9 1694.7,918.9 1695.0,918.6 1695.2,919.5 1695.5,918.9 1695.8,919.0 1696.1,919.2 1696.3,918.7 1696.6,919.3 1696.9,919.7 1697.2,919.3 1697.4,918.9 1697.7,919.3 1698.0,918.8 1698.3,918.5 1698.5,919.2 1698.8,918.7 1699.1,919.1 1699.3,919.4 1699.6,919.3 1699.9,919.1 1700.2,918.9 1700.4,919.6 1700.7,919.1 1701.0,919.7 1701.3,919.2 1701.5,919.0 1701.8,918.9 1702.1,919.1 1702.4,919.8 1702.6,918.3 1702.9,918.5 1703.2,918.6 1703.4,919.0 1703.7,919.9 1704.0,919.2 1704.3,918.8 1704.5,919.7 1704.8,918.9 1705.1,918.9 1705.4,918.8 1705.6,918.8 1705.9,917.6 1706.2,918.8 1706.5,918.9 1706.7,918.9 1707.0,919.1 1707.3,918.5 1707.6,918.8 1707.8,918.7 1708.1,918.8 1708.4,919.0 1708.6,918.7 1708.9,920.1 1709.2,919.4 1709.5,918.9 1709.7,919.5 1710.0,918.8 1710.3,918.6 1710.6,918.1 1710.8,918.4 1711.1,920.0 1711.4,920.3 1711.7,918.9 1711.9,918.3 1712.2,918.5 1712.5,918.9 1712.8,918.3 1713.0,918.4 1713.3,918.7 1713.6,919.7 1713.8,918.8 1714.1,919.3 1714.4,919.1 1714.7,918.5 1714.9,919.1 1715.2,918.5 1715.5,918.8 1715.8,918.9 1716.0,919.4 1716.3,919.7 1716.6,918.7 1716.9,919.3 1717.1,918.8 1717.4,919.3 1717.7,919.3 1718.0,919.4 1718.2,919.1 1718.5,919.7 1718.8,919.3 1719.0,919.2 1719.3,919.4 1719.6,920.1 1719.9,920.0 1720.1,918.6 1720.4,918.7 1720.7,918.7 1721.0,918.6 1721.2,918.7 1721.5,918.8 1721.8,919.0 1722.1,918.9 1722.3,918.8 1722.6,918.6 1722.9,918.8 1723.1,918.8 1723.4,919.4 1723.7,919.7 1724.0,919.1 1724.2,918.6 1724.5,919.1 1724.8,918.4 1725.1,919.6 1725.3,919.5 1725.6,919.2 1725.9,919.0 1726.2,919.4 1726.4,919.4 1726.7,918.7 1727.0,919.0 1727.3,918.4 1727.5,919.0 1727.8,919.3 1728.1,919.2 1728.3,918.6 1728.6,919.9 1728.9,919.2 1729.2,919.5 1729.4,919.0 1729.7,919.1 1730.0,918.8 1730.3,918.5 1730.5,918.6 1730.8,918.7 1731.1,918.6 1731.4,919.0 1731.6,918.7 1731.9,918.5 1732.2,918.4 1732.5,919.0 1732.7,918.3 1733.0,918.8 1733.3,918.4 1733.5,918.9 1733.8,919.3 1734.1,919.1 1734.4,918.8 1734.6,918.7 1734.9,919.9 1735.2,920.2 1735.5,919.9 1735.7,920.1 1736.0,918.5 1736.3,918.5 1736.6,918.6 1736.8,918.8 1737.1,918.5 1737.4,918.9 1737.6,919.1 1737.9,919.4 1738.2,919.7 1738.5,918.8 1738.7,919.2 1739.0,918.8 1739.3,918.6 1739.6,918.6 1739.8,919.5 1740.1,919.7 1740.4,918.7 1740.7,918.4 1740.9,918.5 1741.2,918.0 1741.5,918.7 1741.8,919.3 1742.0,919.4 1742.3,919.0 1742.6,918.5 1742.8,918.8 1743.1,919.5 1743.4,919.7 1743.7,919.7 1743.9,919.4 1744.2,918.9 1744.5,918.8 1744.8,919.1 1745.0,919.5 1745.3,919.0 1745.6,919.1 1745.9,919.5 1746.1,919.4 1746.4,919.7 1746.7,919.2 1747.0,918.7 1747.2,918.8 1747.5,918.6 1747.8,918.7 1748.0,919.3 1748.3,918.5 1748.6,918.9 1748.9,919.0 1749.1,918.7 1749.4,919.4 1749.7,919.1 1750.0,919.0 1750.2,919.5 1750.5,920.2 1750.8,919.5 1751.1,918.9 1751.3,919.3 1751.6,918.5 1751.9,919.0 1752.2,918.5 1752.4,918.6 1752.7,918.8 1753.0,919.2 1753.2,919.0 1753.5,918.9 1753.8,919.6 1754.1,919.4 1754.3,919.9 1754.6,919.7 1754.9,919.2 1755.2,918.8 1755.4,919.2 1755.7,918.8 1756.0,919.7 1756.3,918.7 1756.5,918.4 1756.8,919.1 1757.1,919.2 1757.3,919.9 1757.6,919.8 1757.9,918.8 1758.2,919.2 1758.4,919.2 1758.7,918.5 1759.0,919.4 1759.3,919.7 1759.5,919.8 1759.8,919.0 1760.1,918.6 1760.4,918.5 1760.6,918.9 1760.9,919.0 1761.2,918.7 1761.5,918.2 1761.7,917.9 1762.0,918.4 1762.3,919.3 1762.5,919.8 1762.8,919.6 1763.1,919.0 1763.4,919.0 1763.6,918.2 1763.9,919.1 1764.2,918.6 1764.5,918.1 1764.7,918.3 1765.0,919.3 1765.3,919.0 1765.6,919.1 1765.8,919.6 1766.1,920.4 1766.4,919.4 1766.7,919.3 1766.9,919.1 1767.2,919.1 1767.5,919.5 1767.7,919.7 1768.0,920.0 1768.3,920.3 1768.6,919.3 1768.8,919.5 1769.1,919.4 1769.4,919.7 1769.7,918.9 1769.9,919.0 1770.2,919.6 1770.5,919.3 1770.8,918.9 1771.0,919.1 1771.3,918.5 1771.6,919.1 1771.9,919.0 1772.1,918.6 1772.4,918.8 1772.7,918.6 1772.9,919.2 1773.2,919.4 1773.5,919.7 1773.8,919.4 1774.0,920.0 1774.3,918.9 1774.6,918.9 1774.9,918.9 1775.1,919.0 1775.4,920.0 1775.7,919.2 1776.0,918.6 1776.2,918.5 1776.5,919.4 1776.8,918.9 1777.0,919.1 1777.3,918.6 1777.6,919.4 1777.9,919.0 1778.1,919.4 1778.4,918.7 1778.7,919.2 1779.0,918.5 1779.2,918.5 1779.5,918.4 1779.8,919.2 1780.1,918.8 1780.3,917.7 1780.6,919.2 1780.9,920.2 1781.2,918.9 1781.4,919.1 1781.7,919.0 1782.0,919.0 1782.2,918.9 1782.5,919.3 1782.8,919.2 1783.1,919.9 1783.3,919.0 1783.6,918.0 1783.9,919.0 1784.2,918.9 1784.4,919.6 1784.7,918.8 1785.0,918.1 1785.3,918.4 1785.5,918.6 1785.8,918.6 1786.1,919.5 1786.4,919.7 1786.6,919.6 1786.9,919.1 1787.2,918.8 1787.4,918.9 1787.7,919.0 1788.0,919.4 1788.3,918.9 1788.5,918.9 1788.8,919.1 1789.1,918.8 1789.4,919.3 1789.6,919.8 1789.9,918.9 1790.2,918.7 1790.5,919.3 1790.7,918.9 1791.0,919.8 1791.3,919.0 1791.5,918.5 1791.8,918.5 1792.1,919.0 1792.4,918.8 1792.6,918.2 1792.9,919.0 1793.2,919.1 1793.5,918.9 1793.7,918.1 1794.0,918.8 1794.3,918.9 1794.6,918.9 1794.8,919.1 1795.1,918.9 1795.4,919.1 1795.7,918.7 1795.9,918.8 1796.2,919.1 1796.5,919.1 1796.7,918.7 1797.0,918.4 1797.3,919.3 1797.6,919.3 1797.8,919.8 1798.1,919.1 1798.4,919.0 1798.7,918.6 1798.9,919.0 1799.2,919.5 1799.5,919.3 1799.8,919.6 1800.0,918.5 1800.3,918.0 1800.6,918.5 1800.9,918.3 1801.1,919.5 1801.4,920.2 1801.7,919.9 1801.9,919.4 1802.2,918.8 1802.5,919.5 1802.8,919.8 1803.0,919.3 1803.3,919.0 1803.6,918.8 1803.9,919.1 1804.1,918.6 1804.4,919.0 1804.7,919.1 1805.0,919.5 1805.2,918.5 1805.5,918.6 1805.8,918.9 1806.1,918.3 1806.3,918.8 1806.6,918.8 1806.9,920.2 1807.1,920.0 1807.4,919.8 1807.7,919.2 1808.0,919.1 1808.2,918.9 1808.5,919.0 1808.8,919.3 1809.1,918.8 1809.3,918.9 1809.6,919.1 1809.9,919.1 1810.2,919.3 1810.4,919.7 1810.7,918.5 1811.0,919.0 1811.2,919.6 1811.5,919.9 1811.8,919.7 1812.1,920.1 1812.3,920.0 1812.6,919.0 1812.9,918.1 1813.2,918.9 1813.4,919.1 1813.7,919.3 1814.0,918.6 1814.3,919.0 1814.5,918.3 1814.8,919.0 1815.1,918.9 1815.4,919.4 1815.6,919.2 1815.9,919.1" fill="none" stroke="#2a2aff" stroke-width="1.2" stroke-linejoin="round"/>
<rect x="1536.3" y="877.3" width="280.7" height="96.8" fill="none" stroke="#000" stroke-width="2.1"/>
<text x="1537.8" y="989.8" text-anchor="middle" style="font-family:'DejaVu Serif','Liberation Serif',serif;font-size:10.6px;letter-spacing:0.9px" fill="#545454">0</text>
<text x="1592.5" y="989.8" text-anchor="middle" style="font-family:'DejaVu Serif','Liberation Serif',serif;font-size:10.6px;letter-spacing:0.9px" fill="#545454">200</text>
<text x="1647.2" y="989.8" text-anchor="middle" style="font-family:'DejaVu Serif','Liberation Serif',serif;font-size:10.6px;letter-spacing:0.9px" fill="#545454">400</text>
<text x="1701.9" y="989.8" text-anchor="middle" style="font-family:'DejaVu Serif','Liberation Serif',serif;font-size:10.6px;letter-spacing:0.9px" fill="#545454">600</text>
<text x="1756.6" y="989.8" text-anchor="middle" style="font-family:'DejaVu Serif','Liberation Serif',serif;font-size:10.6px;letter-spacing:0.9px" fill="#545454">800</text>
<text x="1811.4" y="989.8" text-anchor="middle" style="font-family:'DejaVu Serif','Liberation Serif',serif;font-size:10.6px;letter-spacing:0.9px" fill="#545454">1000</text>
<text x="1533.8" y="977.5" text-anchor="end" style="font-family:'DejaVu Serif','Liberation Serif',serif;font-size:10.6px;letter-spacing:0.9px" fill="#545454">0</text>
<text x="1533.8" y="945.5" text-anchor="end" style="font-family:'DejaVu Serif','Liberation Serif',serif;font-size:10.6px;letter-spacing:0.9px" fill="#545454">5000</text>
<text x="1533.8" y="913.5" text-anchor="end" style="font-family:'DejaVu Serif','Liberation Serif',serif;font-size:10.6px;letter-spacing:0.9px" fill="#545454">10000</text>
<rect x="1702.8" y="887.7" width="13.6" height="10.8" fill="#fff" stroke="#ccc" stroke-width="1"/>
<rect x="1704.0" y="889.0" width="11.2" height="8.2" fill="#0000ff"/>
<text x="1808.9" y="897.0" text-anchor="end" style="font-family:'DejaVu Serif','Liberation Serif',serif;font-size:11.4px;letter-spacing:0.36px" fill="#000">aida02 3.15.W</text>
<path d="M1805.1 878.0L1816.1 867.0L1827.1 878.0L1816.1 889.0z" fill="#00ff00"/>
</g>
</svg>
<div class="abs" style="left:7px;top:449px;width:1px;height:548px;background:#ff0000"></div><div class="abs" style="left:8px;top:449px;width:1px;height:548px;background:#a80000"></div>
<div class="abs" style="left:480px;top:449px;width:1px;height:548px;background:#ff0000"></div><div class="abs" style="left:481px;top:449px;width:1px;height:548px;background:#a80000"></div>
<div class="abs" style="left:953px;top:449px;width:1px;height:548px;background:#ff0000"></div><div class="abs" style="left:954px;top:449px;width:1px;height:548px;background:#a80000"></div>
<div class="abs" style="left:1426px;top:449px;width:1px;height:548px;background:#ff0000"></div><div class="abs" style="left:1427px;top:449px;width:1px;height:548px;background:#a80000"></div>
<div class="abs" style="left:1899px;top:449px;width:1px;height:548px;background:#ff0000"></div><div class="abs" style="left:1900px;top:449px;width:1px;height:548px;background:#a80000"></div>
<div class="abs" style="left:7px;top:449px;width:1894px;height:1px;background:#ff0000"></div><div class="abs" style="left:7px;top:450px;width:1894px;height:1px;background:#a80000"></div>
<div class="abs" style="left:7px;top:586px;width:1894px;height:1px;background:#ff0000"></div><div class="abs" style="left:7px;top:587px;width:1894px;height:1px;background:#a80000"></div>
<div class="abs" style="left:7px;top:722px;width:1894px;height:1px;background:#ff0000"></div><div class="abs" style="left:7px;top:723px;width:1894px;height:1px;background:#a80000"></div>
<div class="abs" style="left:7px;top:858px;width:1894px;height:1px;background:#ff0000"></div><div class="abs" style="left:7px;top:859px;width:1894px;height:1px;background:#a80000"></div>
<div class="abs" style="left:7px;top:995px;width:1894px;height:1px;background:#ff0000"></div><div class="abs" style="left:7px;top:996px;width:1894px;height:1px;background:#a80000"></div>
<div class="btn" style="left:7px;top:1011px;width:111px">Empty Log Window</div>
<div class="btn" style="left:123px;top:1011px;width:148px">Send Log Window to ELog</div>
<div class="btn" style="left:275px;top:1011px;width:45px">Reload</div>
<div class="btn" style="left:324px;top:1011px;width:39px">Reset</div>
<div class="btn" style="left:367px;top:1011px;width:89px">Show Variables</div>
<div class="btn" style="left:461px;top:1011px;width:107px">Show Log Window</div>
<div class="btn" style="left:573px;top:1011px;width:88px">Enable Logging</div>
<div class="btn" style="left:1781px;top:1011px;width:120px">How to use this page</div>
<div class="abs r" style="left:1597.5px;top:1045px;">Last Updated: October 12, 2023 14:21:25</div>
<div class="hr" style="top:1078px"></div>
</div></body></html>
